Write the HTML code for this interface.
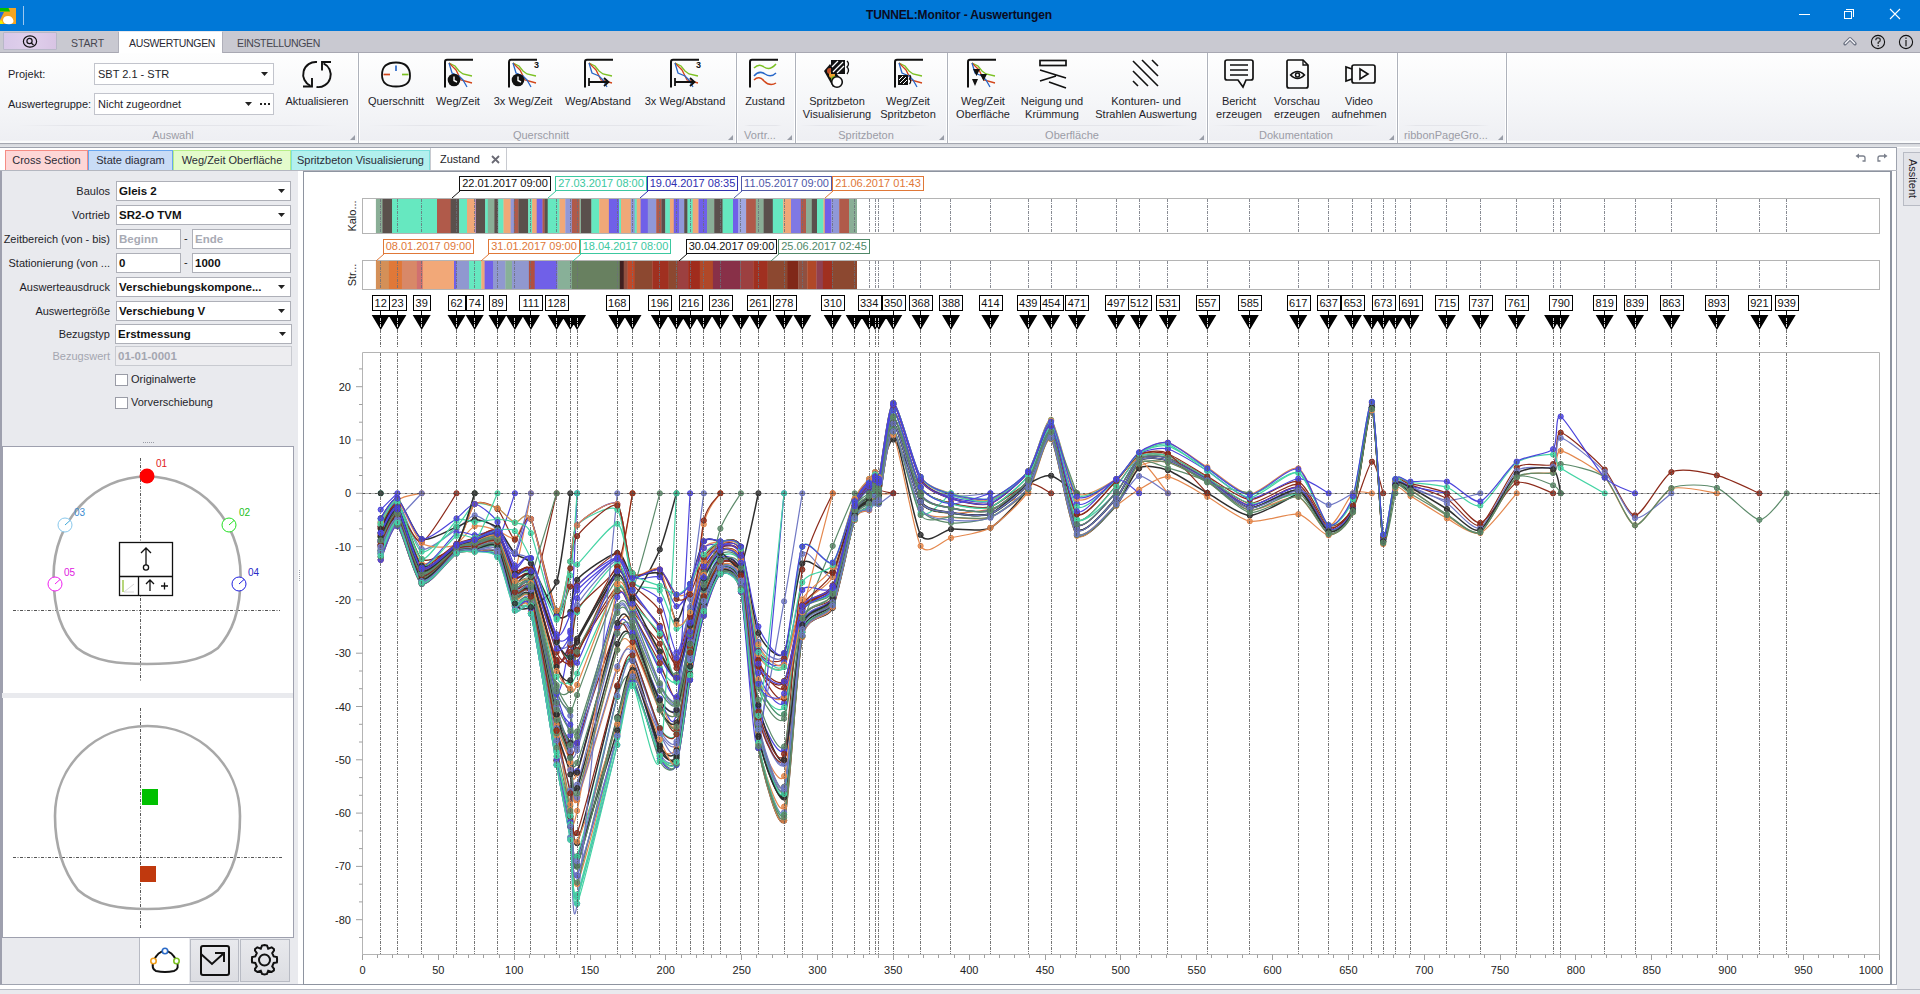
<!DOCTYPE html><html><head><meta charset="utf-8"><style>

*{box-sizing:border-box;margin:0;padding:0}
html,body{width:1920px;height:994px;overflow:hidden;background:#fff;font-family:"Liberation Sans",sans-serif;font-size:11px;color:#222}
.a{position:absolute}
.t{position:absolute;white-space:nowrap;line-height:13px}
svg{position:absolute;overflow:visible}

</style></head><body>

<div class="a" style="left:0;top:0;width:1920px;height:31px;background:#0078d7"></div>
<svg style="left:0;top:8px" width="16" height="16"><rect x="0" y="0" width="16" height="16" fill="#f4a520"/><path d="M0 0H8.5L10 3.5H0Z" fill="#00c000"/><path d="M0 4H4L0 12Z" fill="#1a6ee0"/><path d="M0 12L2 16H3L2 13Z" fill="#f4f400"/><path d="M0 13V16H3L2 14Z" fill="#f0f000"/><path d="M3 12Q3.5 8 8 8Q12.5 8 13.5 13Q13.5 16 9 16.2Q3 16.2 3 12Z" fill="#fff"/></svg>
<div class="a" style="left:23px;top:6px;width:1px;height:19px;background:#9cc7ef"></div>
<div class="t" style="left:866px;top:9px;font-size:12px;font-weight:bold;color:#0b0b22;letter-spacing:-0.15px">TUNNEL:Monitor - Auswertungen</div>
<div class="a" style="left:1799px;top:14px;width:11px;height:1px;background:#fff"></div>
<div class="a" style="left:1844px;top:11px;width:8px;height:8px;border:1px solid #fff"></div>
<div class="a" style="left:1846px;top:9px;width:8px;height:8px;border-top:1px solid #fff;border-right:1px solid #fff"></div>
<svg style="left:1889px;top:8px" width="12" height="12"><path d="M1 1L11 11M11 1L1 11" stroke="#fff" stroke-width="1.1"/></svg>


<div class="a" style="left:0;top:31px;width:1920px;height:22px;background:#c9c9d1;border-bottom:1px solid #a8a8b2"></div>
<div class="a" style="left:3px;top:32px;width:54px;height:18px;background:linear-gradient(90deg,#d8c8e8,#e0d0ec,#d8c4e4);border:1px solid #b8b8c8;border-radius:1px"></div>
<svg style="left:22px;top:35px" width="16" height="13"><ellipse cx="8" cy="6.5" rx="6.6" ry="5.6" fill="none" stroke="#111" stroke-width="1.2"/><circle cx="7.5" cy="6" r="2.6" fill="none" stroke="#111" stroke-width="1.2"/><path d="M9.3 8L11.5 10" stroke="#111" stroke-width="1.3"/></svg>
<div class="t" style="left:71px;top:37px;color:#464650;font-size:10.5px;letter-spacing:-0.1px">START</div>
<div class="a" style="left:118px;top:31px;width:105px;height:23px;background:#fff;border-left:1px solid #b0b0ba;border-right:1px solid #b0b0ba;border-top:1px solid #e8e8ee"></div>
<div class="t" style="left:129px;top:37px;color:#2a2a34;font-size:10.5px;letter-spacing:-0.35px">AUSWERTUNGEN</div>
<div class="t" style="left:237px;top:37px;color:#464650;font-size:10.5px;letter-spacing:-0.35px">EINSTELLUNGEN</div>
<svg style="left:1843px;top:36px" width="14" height="10"><path d="M2 7.8L7 2.8L12 7.8" fill="none" stroke="#6c7282" stroke-width="3.4" stroke-linejoin="round" stroke-linecap="round"/><path d="M2 7.8L7 2.8L12 7.8" fill="none" stroke="#f4f4f8" stroke-width="1.5"/></svg>
<svg style="left:1870px;top:34px" width="16" height="16"><circle cx="8" cy="8" r="6.6" fill="none" stroke="#111" stroke-width="1.1"/><path d="M5.8 6.3Q5.8 3.8 8 3.8Q10.3 3.8 10.3 6Q10.3 7.4 8.2 8.4V10" fill="none" stroke="#333" stroke-width="1.3"/><rect x="7.5" y="11" width="1.4" height="1.4" fill="#333"/></svg>
<svg style="left:1898px;top:34px" width="16" height="16"><circle cx="8" cy="8" r="6.6" fill="none" stroke="#111" stroke-width="1.1"/><rect x="7.3" y="3.5" width="1.4" height="1.4" fill="#333"/><rect x="7.3" y="6" width="1.4" height="6.3" fill="#333"/></svg>

<div class="a" style="left:0;top:53px;width:1920px;height:90px;background:linear-gradient(#fefefe 0%,#f6f7f9 50%,#eeeff3 97%,#fafbfc 98%)"></div>
<div class="a" style="left:0;top:143px;width:1920px;height:1px;background:#a4a7b0"></div>
<div class="a" style="left:0;top:144px;width:1920px;height:3px;background:linear-gradient(#d4d6db,#e2e4e8)"></div>
<div class="a" style="left:18px;top:125px;width:320px;height:1px;background:linear-gradient(90deg,rgba(230,231,236,0),#e4e5ea 15%,#e4e5ea 85%,rgba(230,231,236,0))"></div>
<div class="a" style="left:368px;top:125px;width:350px;height:1px;background:linear-gradient(90deg,rgba(230,231,236,0),#e4e5ea 15%,#e4e5ea 85%,rgba(230,231,236,0))"></div>
<div class="a" style="left:744px;top:125px;width:38px;height:1px;background:linear-gradient(90deg,rgba(230,231,236,0),#e4e5ea 15%,#e4e5ea 85%,rgba(230,231,236,0))"></div>
<div class="a" style="left:800px;top:125px;width:130px;height:1px;background:linear-gradient(90deg,rgba(230,231,236,0),#e4e5ea 15%,#e4e5ea 85%,rgba(230,231,236,0))"></div>
<div class="a" style="left:955px;top:125px;width:238px;height:1px;background:linear-gradient(90deg,rgba(230,231,236,0),#e4e5ea 15%,#e4e5ea 85%,rgba(230,231,236,0))"></div>
<div class="a" style="left:1212px;top:125px;width:168px;height:1px;background:linear-gradient(90deg,rgba(230,231,236,0),#e4e5ea 15%,#e4e5ea 85%,rgba(230,231,236,0))"></div>
<div class="a" style="left:1403px;top:125px;width:87px;height:1px;background:linear-gradient(90deg,rgba(230,231,236,0),#e4e5ea 15%,#e4e5ea 85%,rgba(230,231,236,0))"></div>
<div class="a" style="left:357px;top:53px;width:3px;height:90px;background:linear-gradient(90deg,#fff 0,#fff 33%,#aeb2bb 33%,#aeb2bb 67%,#fff 67%)"></div>
<svg style="left:350px;top:135px" width="5" height="5"><path d="M5 0V5H0Z" fill="#9a9ea8"/></svg>
<div class="a" style="left:735px;top:53px;width:3px;height:90px;background:linear-gradient(90deg,#fff 0,#fff 33%,#aeb2bb 33%,#aeb2bb 67%,#fff 67%)"></div>
<svg style="left:728px;top:135px" width="5" height="5"><path d="M5 0V5H0Z" fill="#9a9ea8"/></svg>
<div class="a" style="left:794px;top:53px;width:3px;height:90px;background:linear-gradient(90deg,#fff 0,#fff 33%,#aeb2bb 33%,#aeb2bb 67%,#fff 67%)"></div>
<svg style="left:787px;top:135px" width="5" height="5"><path d="M5 0V5H0Z" fill="#9a9ea8"/></svg>
<div class="a" style="left:946px;top:53px;width:3px;height:90px;background:linear-gradient(90deg,#fff 0,#fff 33%,#aeb2bb 33%,#aeb2bb 67%,#fff 67%)"></div>
<svg style="left:939px;top:135px" width="5" height="5"><path d="M5 0V5H0Z" fill="#9a9ea8"/></svg>
<div class="a" style="left:1206px;top:53px;width:3px;height:90px;background:linear-gradient(90deg,#fff 0,#fff 33%,#aeb2bb 33%,#aeb2bb 67%,#fff 67%)"></div>
<svg style="left:1199px;top:135px" width="5" height="5"><path d="M5 0V5H0Z" fill="#9a9ea8"/></svg>
<div class="a" style="left:1396px;top:53px;width:3px;height:90px;background:linear-gradient(90deg,#fff 0,#fff 33%,#aeb2bb 33%,#aeb2bb 67%,#fff 67%)"></div>
<svg style="left:1389px;top:135px" width="5" height="5"><path d="M5 0V5H0Z" fill="#9a9ea8"/></svg>
<div class="a" style="left:1505px;top:53px;width:3px;height:90px;background:linear-gradient(90deg,#fff 0,#fff 33%,#aeb2bb 33%,#aeb2bb 67%,#fff 67%)"></div>
<svg style="left:1498px;top:135px" width="5" height="5"><path d="M5 0V5H0Z" fill="#9a9ea8"/></svg>
<div class="t" style="left:73px;width:200px;top:129px;text-align:center;color:#9b9ca6">Auswahl</div>
<div class="t" style="left:441px;width:200px;top:129px;text-align:center;color:#9b9ca6">Querschnitt</div>
<div class="t" style="left:660px;width:200px;top:129px;text-align:center;color:#9b9ca6">Vortr...</div>
<div class="t" style="left:766px;width:200px;top:129px;text-align:center;color:#9b9ca6">Spritzbeton</div>
<div class="t" style="left:972px;width:200px;top:129px;text-align:center;color:#9b9ca6">Oberfläche</div>
<div class="t" style="left:1196px;width:200px;top:129px;text-align:center;color:#9b9ca6">Dokumentation</div>
<div class="t" style="left:1346px;width:200px;top:129px;text-align:center;color:#9b9ca6">ribbonPageGro...</div>
<div class="t" style="left:8px;top:68px;color:#1e1e2a">Projekt:</div>
<div class="t" style="left:8px;top:98px;color:#1e1e2a">Auswertegruppe:</div>
<div class="a" style="left:94px;top:63px;width:180px;height:22px;background:#fff;border:1px solid #c2c4cc"></div>
<div class="t" style="left:98px;top:68px;color:#1e1e2a">SBT 2.1 - STR</div>
<svg style="left:261px;top:72px" width="8" height="4"><path d="M0 0H7L3.5 4Z" fill="#222"/></svg>
<div class="a" style="left:94px;top:93px;width:180px;height:22px;background:#fff;border:1px solid #c2c4cc"></div>
<div class="t" style="left:98px;top:98px;color:#1e1e2a">Nicht zugeordnet</div>
<svg style="left:245px;top:102px" width="8" height="4"><path d="M0 0H7L3.5 4Z" fill="#222"/></svg>
<svg style="left:259px;top:103px" width="12" height="3"><rect x="1" y="0" width="2" height="2" fill="#222"/><rect x="5" y="0" width="2" height="2" fill="#222"/><rect x="9" y="0" width="2" height="2" fill="#222"/></svg>
<svg style="left:0;top:0" width="1920" height="140"><g fill="none" stroke="#111" stroke-width="1.9"><path d="M317 62A12.5 12.5 0 0 0 310.5 85.8"/><path d="M303 86.5H312V78"/><path d="M316.5 87A12.5 12.5 0 0 0 323.5 63.3"/><path d="M331 62H322V70.5"/></g></svg>
<div class="t" style="left:267px;width:100px;top:95px;text-align:center;color:#1e1e2a">Aktualisieren</div>
<div class="t" style="left:316px;width:160px;top:95px;text-align:center;color:#1e1e2a;line-height:13px">Querschnitt</div>
<div class="t" style="left:378px;width:160px;top:95px;text-align:center;color:#1e1e2a;line-height:13px">Weg/Zeit</div>
<div class="t" style="left:443px;width:160px;top:95px;text-align:center;color:#1e1e2a;line-height:13px">3x Weg/Zeit</div>
<div class="t" style="left:518px;width:160px;top:95px;text-align:center;color:#1e1e2a;line-height:13px">Weg/Abstand</div>
<div class="t" style="left:605px;width:160px;top:95px;text-align:center;color:#1e1e2a;line-height:13px">3x Weg/Abstand</div>
<div class="t" style="left:685px;width:160px;top:95px;text-align:center;color:#1e1e2a;line-height:13px">Zustand</div>
<div class="t" style="left:757px;width:160px;top:95px;text-align:center;color:#1e1e2a;line-height:13px">Spritzbeton<br>Visualisierung</div>
<div class="t" style="left:828px;width:160px;top:95px;text-align:center;color:#1e1e2a;line-height:13px">Weg/Zeit<br>Spritzbeton</div>
<div class="t" style="left:903px;width:160px;top:95px;text-align:center;color:#1e1e2a;line-height:13px">Weg/Zeit<br>Oberfläche</div>
<div class="t" style="left:972px;width:160px;top:95px;text-align:center;color:#1e1e2a;line-height:13px">Neigung und<br>Krümmung</div>
<div class="t" style="left:1066px;width:160px;top:95px;text-align:center;color:#1e1e2a;line-height:13px">Konturen- und<br>Strahlen Auswertung</div>
<div class="t" style="left:1159px;width:160px;top:95px;text-align:center;color:#1e1e2a;line-height:13px">Bericht<br>erzeugen</div>
<div class="t" style="left:1217px;width:160px;top:95px;text-align:center;color:#1e1e2a;line-height:13px">Vorschau<br>erzeugen</div>
<div class="t" style="left:1279px;width:160px;top:95px;text-align:center;color:#1e1e2a;line-height:13px">Video<br>aufnehmen</div>
<svg style="left:380px;top:61px" width="32" height="28"><path d="M2 14Q2 1.5 16 1.5Q30 1.5 30 15Q30 25.5 16 25.5Q2 25.5 2 14Z" fill="none" stroke="#111" stroke-width="1.8"/><path d="M16 4.5V10" stroke="#2867c8" stroke-width="1.7"/><path d="M3.5 13.5H10" stroke="#d2461a" stroke-width="1.7"/><path d="M22 13.5H28.5" stroke="#7cc123" stroke-width="1.7"/></svg>
<svg style="left:444px;top:58px" width="32" height="32" viewBox="444 58 32 32"><path d="M445 87.5V62Q445 59.8 447 59.8H473" fill="none" stroke="#111" stroke-width="2"/><path d="M449 63L455 66L459 71L463 74L472 76" fill="none" stroke="#7cc123" stroke-width="1.3"/><path d="M449 63L456 70L461 80L472 83" fill="none" stroke="#d2461a" stroke-width="1.3"/><path d="M449 63L452 73L459 76L463 80L467 87" fill="none" stroke="#2867c8" stroke-width="1.3"/><circle cx="454" cy="80" r="6.3" fill="#111"/><path d="M454 76.5V80.5L457 82" fill="none" stroke="#fff" stroke-width="1.4"/></svg>
<svg style="left:508px;top:58px" width="32" height="32" viewBox="508 58 32 32"><path d="M509 87.5V62Q509 59.8 511 59.8H537" fill="none" stroke="#111" stroke-width="2"/><path d="M513 63L519 66L523 71L527 74L536 76" fill="none" stroke="#7cc123" stroke-width="1.3"/><path d="M513 63L520 70L525 80L536 83" fill="none" stroke="#d2461a" stroke-width="1.3"/><path d="M513 63L516 73L523 76L527 80L531 87" fill="none" stroke="#2867c8" stroke-width="1.3"/><circle cx="518" cy="80" r="6.3" fill="#111"/><path d="M518 76.5V80.5L521 82" fill="none" stroke="#fff" stroke-width="1.4"/><text x="534" y="68" font-size="9" font-weight="bold" font-family="Liberation Sans" fill="#111">3</text></svg>
<svg style="left:584px;top:58px" width="32" height="32" viewBox="584 58 32 32"><path d="M585 87.5V62Q585 59.8 587 59.8H613" fill="none" stroke="#111" stroke-width="2"/><path d="M589 63L595 66L599 71L603 74L612 76" fill="none" stroke="#7cc123" stroke-width="1.3"/><path d="M589 63L596 70L601 80L612 83" fill="none" stroke="#d2461a" stroke-width="1.3"/><path d="M589 63L592 73L599 76L603 80L607 87" fill="none" stroke="#2867c8" stroke-width="1.3"/><path d="M589 78V86M589 82H608M604 78L608.5 82L604 86" fill="none" stroke="#111" stroke-width="1.8"/></svg>
<svg style="left:670px;top:58px" width="32" height="32" viewBox="670 58 32 32"><path d="M671 87.5V62Q671 59.8 673 59.8H699" fill="none" stroke="#111" stroke-width="2"/><path d="M675 63L681 66L685 71L689 74L698 76" fill="none" stroke="#7cc123" stroke-width="1.3"/><path d="M675 63L682 70L687 80L698 83" fill="none" stroke="#d2461a" stroke-width="1.3"/><path d="M675 63L678 73L685 76L689 80L693 87" fill="none" stroke="#2867c8" stroke-width="1.3"/><path d="M675 78V86M675 82H694M690 78L694.5 82L690 86" fill="none" stroke="#111" stroke-width="1.8"/><text x="696" y="68" font-size="9" font-weight="bold" font-family="Liberation Sans" fill="#111">3</text></svg>
<svg style="left:749px;top:58px" width="32" height="32" viewBox="749 58 32 32"><path d="M750 87.5V62Q750 59.8 752 59.8H778" fill="none" stroke="#111" stroke-width="2"/><path d="M754 68Q759 63 764 67Q770 71 776 64" fill="none" stroke="#7cc123" stroke-width="1.5"/><path d="M754 76Q759 70 765 74Q771 78 776 73" fill="none" stroke="#2867c8" stroke-width="1.5"/><path d="M754 80Q759 75 764 81Q770 87 776 83" fill="none" stroke="#d2461a" stroke-width="1.5"/></svg>
<svg style="left:822px;top:58px" width="32" height="32" viewBox="822 58 32 32"><path d="M830 64L824 71L833 87L842 81Z" fill="#111"/><circle cx="830" cy="71" r="3" fill="#c0502a"/><circle cx="832" cy="75" r="3" fill="#f0a030"/><circle cx="834" cy="79" r="3" fill="#7cc123"/><circle cx="837" cy="82" r="5.3" fill="#fff" stroke="#111" stroke-width="1.6"/><rect x="831" y="60" width="14" height="14" fill="#111"/><path d="M833 72L843 62M837 73L844 66M832 67L838 61" stroke="#fff" stroke-width="1.3"/><path d="M847 61Q850 64 847 67Q850 70 847 74" fill="none" stroke="#111" stroke-width="1.3"/></svg>
<svg style="left:894px;top:58px" width="32" height="32" viewBox="894 58 32 32"><path d="M895 87.5V62Q895 59.8 897 59.8H923" fill="none" stroke="#111" stroke-width="2"/><path d="M899 63L905 66L909 71L913 74L922 76" fill="none" stroke="#7cc123" stroke-width="1.3"/><path d="M899 63L906 70L911 80L922 83" fill="none" stroke="#d2461a" stroke-width="1.3"/><path d="M899 63L902 73L909 76L913 80L917 87" fill="none" stroke="#2867c8" stroke-width="1.3"/><rect x="898" y="75" width="10" height="10" fill="#111"/><path d="M900 83L906 77M903 84L907 80M899 80L903 76" stroke="#fff" stroke-width="1"/><path d="M909.5 75Q912 77 909.5 79Q912 81 909.5 84" fill="none" stroke="#111" stroke-width="1.2"/></svg>
<svg style="left:967px;top:58px" width="32" height="32" viewBox="967 58 32 32"><path d="M968 87.5V62Q968 59.8 970 59.8H996" fill="none" stroke="#111" stroke-width="2"/><path d="M972 63L978 66L982 71L986 74L995 76" fill="none" stroke="#7cc123" stroke-width="1.3"/><path d="M972 63L979 70L984 80L995 83" fill="none" stroke="#d2461a" stroke-width="1.3"/><path d="M972 63L975 73L982 76L986 80L990 87" fill="none" stroke="#2867c8" stroke-width="1.3"/><path d="M973 69H980L976.5 76Z M980 74H987L983.5 81Z M972 79H978L975 86Z" fill="#111"/></svg>
<svg style="left:1038px;top:58px" width="32" height="32" viewBox="1038 58 32 32"><rect x="1040" y="60.5" width="26" height="5" fill="none" stroke="#111" stroke-width="1.7"/><path d="M1040 70L1066 78M1040 81L1056 76M1049 82L1066 88" stroke="#111" stroke-width="1.7"/></svg>
<svg style="left:1130px;top:58px" width="32" height="32" viewBox="1130 58 32 32"><path d="M1133 61L1158 86M1142 60L1158 76M1152 60L1158 66M1133 71L1148 86M1133 81L1138 86" stroke="#111" stroke-width="1.6"/></svg>
<svg style="left:1223px;top:58px" width="32" height="32" viewBox="1223 58 32 32"><path d="M1227 60H1251Q1253 60 1253 62V78Q1253 80 1251 80H1246L1243 87L1238 80H1227Q1225 80 1225 78V62Q1225 60 1227 60Z" fill="none" stroke="#111" stroke-width="1.7"/><path d="M1230 65H1248M1230 70H1248M1230 75H1248" stroke="#111" stroke-width="1.7"/></svg>
<svg style="left:1281px;top:58px" width="32" height="32" viewBox="1281 58 32 32"><path d="M1288 60H1303L1308 65V86Q1308 88 1306 88H1289Q1287 88 1287 86V61Z" fill="none" stroke="#111" stroke-width="1.7"/><path d="M1303 60V65H1308" fill="none" stroke="#111" stroke-width="1.3"/><path d="M1290.5 75Q1297.5 68 1304.5 75Q1297.5 82 1290.5 75Z" fill="none" stroke="#111" stroke-width="1.5"/><circle cx="1297.5" cy="75" r="2" fill="none" stroke="#111" stroke-width="1.5"/></svg>
<svg style="left:1343px;top:58px" width="32" height="32" viewBox="1343 58 32 32"><rect x="1352" y="65" width="23" height="18" rx="2" fill="none" stroke="#111" stroke-width="1.7"/><path d="M1352 69L1346 67V81L1352 79" fill="none" stroke="#111" stroke-width="1.7"/><path d="M1360 69L1368 74L1360 79Z" fill="none" stroke="#111" stroke-width="1.6"/></svg>
<div class="a" style="left:0;top:147px;width:1897px;height:1px;background:#9ea3ae"></div>
<div class="a" style="left:1896px;top:147px;width:1px;height:843px;background:#9ea3ae"></div>
<div class="a" style="left:1897px;top:148px;width:23px;height:846px;background:#e9eaee"></div>
<div class="a" style="left:5px;top:150px;width:83px;height:21px;background:#fdd6d6;border:1px solid #f58c84;border-bottom:none"></div>
<div class="t" style="left:5px;width:83px;top:154px;text-align:center;color:#2b2b36">Cross Section</div>
<div class="a" style="left:88px;top:150px;width:85px;height:21px;background:#c9dcf6;border:1px solid #69a6ee;border-bottom:none"></div>
<div class="t" style="left:88px;width:85px;top:154px;text-align:center;color:#2b2b36">State diagram</div>
<div class="a" style="left:173px;top:150px;width:118px;height:21px;background:#e4fbcc;border:1px solid #b6ee86;border-bottom:none"></div>
<div class="t" style="left:173px;width:118px;top:154px;text-align:center;color:#2b2b36">Weg/Zeit Oberfläche</div>
<div class="a" style="left:291px;top:150px;width:139px;height:21px;background:#b3f0ee;border:1px solid #7fe0de;border-bottom:none"></div>
<div class="t" style="left:291px;width:139px;top:154px;text-align:center;color:#2b2b36">Spritzbeton Visualisierung</div>
<div class="a" style="left:430px;top:148px;width:77px;height:23px;background:#fff;border-left:1px solid #c8cad0;border-right:1px solid #c8cad0"></div>
<div class="t" style="left:440px;top:153px;color:#1e1e2a">Zustand</div>
<svg style="left:491px;top:155px" width="9" height="9"><path d="M1 1L8 8M8 1L1 8" stroke="#6a6a74" stroke-width="1.8"/></svg>
<div class="a" style="left:0;top:170px;width:1897px;height:1px;background:#b4b7c0"></div>
<svg style="left:1855px;top:153px" width="12" height="10"><path d="M3 3H8Q10 3 10 5V8H7.5" fill="none" stroke="#7b808c" stroke-width="1.3"/><path d="M0.5 3L4 0.5V5.5Z" fill="#7b808c"/></svg>
<svg style="left:1876px;top:153px" width="12" height="10"><path d="M9 3H4Q2 3 2 5V8H4.5" fill="none" stroke="#7b808c" stroke-width="1.3"/><path d="M11.5 3L8 0.5V5.5Z" fill="#7b808c"/></svg>
<div class="a" style="left:1903px;top:152px;width:17px;height:54px;background:#e2e3e8;border:1px solid #b8bbc4;border-right:none"></div>
<div class="t" style="left:1882px;top:172px;width:60px;text-align:center;transform:rotate(90deg);color:#1e1e2a">Assitent</div>
<div class="a" style="left:0;top:984px;width:1897px;height:1px;background:#a0a4b0"></div>
<div class="a" style="left:0;top:985px;width:1897px;height:4px;background:#fff"></div>
<div class="a" style="left:0;top:989px;width:1920px;height:1px;background:#b8bbc4"></div>
<div class="a" style="left:0;top:990px;width:1920px;height:4px;background:#e9eaee"></div>
<div class="a" style="left:0;top:171px;width:298px;height:813px;background:#e9eaee"></div>
<div class="a" style="left:0;top:171px;width:2px;height:813px;background:#9ea0ae"></div>
<div class="a" style="left:298px;top:171px;width:5px;height:813px;background:#fff"></div>
<div class="t" style="left:0;width:110px;text-align:right;top:185px;color:#1e1e2a">Baulos</div>
<div class="a" style="left:116px;top:181px;width:175px;height:20px;background:#fff;border:1px solid #aeb0b8"></div>
<div class="t" style="left:119px;top:185px;font-weight:bold;color:#111;font-size:11.5px;line-height:13px">Gleis 2</div>
<svg style="left:278px;top:189px" width="8" height="4"><path d="M0 0H7L3.5 4Z" fill="#222"/></svg>
<div class="t" style="left:0;width:110px;text-align:right;top:209px;color:#1e1e2a">Vortrieb</div>
<div class="a" style="left:116px;top:205px;width:175px;height:20px;background:#fff;border:1px solid #aeb0b8"></div>
<div class="t" style="left:119px;top:209px;font-weight:bold;color:#111;font-size:11.5px;line-height:13px">SR2-O TVM</div>
<svg style="left:278px;top:213px" width="8" height="4"><path d="M0 0H7L3.5 4Z" fill="#222"/></svg>
<div class="t" style="left:0;width:110px;text-align:right;top:233px;color:#1e1e2a">Zeitbereich (von - bis)</div>
<div class="a" style="left:116px;top:229px;width:65px;height:20px;background:#fff;border:1px solid #aeb0b8"></div>
<div class="t" style="left:119px;top:233px;font-weight:bold;color:#a8aab4;font-size:11.5px;line-height:13px">Beginn</div>
<div class="t" style="left:184px;top:232px">-</div>
<div class="a" style="left:192px;top:229px;width:99px;height:20px;background:#fff;border:1px solid #aeb0b8"></div>
<div class="t" style="left:195px;top:233px;font-weight:bold;color:#a8aab4;font-size:11.5px;line-height:13px">Ende</div>
<div class="t" style="left:0;width:110px;text-align:right;top:257px;color:#1e1e2a">Stationierung (von ...</div>
<div class="a" style="left:116px;top:253px;width:65px;height:20px;background:#fff;border:1px solid #aeb0b8"></div>
<div class="t" style="left:119px;top:257px;font-weight:bold;color:#111;font-size:11.5px;line-height:13px">0</div>
<div class="t" style="left:184px;top:256px">-</div>
<div class="a" style="left:192px;top:253px;width:99px;height:20px;background:#fff;border:1px solid #aeb0b8"></div>
<div class="t" style="left:195px;top:257px;font-weight:bold;color:#111;font-size:11.5px;line-height:13px">1000</div>
<div class="t" style="left:0;width:110px;text-align:right;top:281px;color:#1e1e2a">Auswerteausdruck</div>
<div class="a" style="left:116px;top:277px;width:175px;height:20px;background:#fff;border:1px solid #aeb0b8"></div>
<div class="t" style="left:119px;top:281px;font-weight:bold;color:#111;font-size:11.5px;line-height:13px">Verschiebungskompone...</div>
<svg style="left:278px;top:285px" width="8" height="4"><path d="M0 0H7L3.5 4Z" fill="#222"/></svg>
<div class="t" style="left:0;width:110px;text-align:right;top:305px;color:#1e1e2a">Auswertegröße</div>
<div class="a" style="left:116px;top:301px;width:175px;height:20px;background:#fff;border:1px solid #aeb0b8"></div>
<div class="t" style="left:119px;top:305px;font-weight:bold;color:#111;font-size:11.5px;line-height:13px">Verschiebung V</div>
<svg style="left:278px;top:309px" width="8" height="4"><path d="M0 0H7L3.5 4Z" fill="#222"/></svg>
<div class="t" style="left:0;width:110px;text-align:right;top:328px;color:#1e1e2a">Bezugstyp</div>
<div class="a" style="left:115px;top:324px;width:177px;height:20px;background:#fff;border:1px solid #aeb0b8"></div>
<div class="t" style="left:118px;top:328px;font-weight:bold;color:#111;font-size:11.5px;line-height:13px">Erstmessung</div>
<svg style="left:279px;top:332px" width="8" height="4"><path d="M0 0H7L3.5 4Z" fill="#222"/></svg>
<div class="t" style="left:0;width:110px;text-align:right;top:350px;color:#a4a6b0">Bezugswert</div>
<div class="a" style="left:115px;top:346px;width:177px;height:20px;background:#ededf0;border:1px solid #c8cad0"></div>
<div class="t" style="left:118px;top:350px;font-weight:bold;color:#a4a6b0;font-size:11.5px;line-height:13px">01-01-0001</div>
<div class="a" style="left:115px;top:374px;width:13px;height:12px;background:#fff;border:1px solid #9a9ca6"></div>
<div class="t" style="left:131px;top:373px;color:#1e1e2a">Originalwerte</div>
<div class="a" style="left:115px;top:397px;width:13px;height:12px;background:#fff;border:1px solid #9a9ca6"></div>
<div class="t" style="left:131px;top:396px;color:#1e1e2a">Vorverschiebung</div>
<svg style="left:143px;top:442px" width="12" height="2"><path d="M0 0.5H12" stroke="#9a9ca6" stroke-dasharray="1 1"/></svg>
<svg style="left:299px;top:570px" width="2" height="12"><path d="M0.5 0V12" stroke="#9a9ca6" stroke-dasharray="1 1"/></svg>
<div class="a" style="left:2px;top:446px;width:292px;height:247px;background:#fff;border-top:1px solid #9ea0ae;border-left:1px solid #9ea0ae;border-right:1px solid #9ea0ae"></div>
<div class="a" style="left:2px;top:693px;width:292px;height:5px;background:#e9eaee;border-right:1px solid #9ea0ae"></div>
<div class="a" style="left:2px;top:698px;width:292px;height:240px;background:#fff;border-left:1px solid #9ea0ae;border-right:1px solid #9ea0ae;border-bottom:1px solid #9ea0ae"></div>
<svg style="left:0;top:0" width="300" height="994"><path d="M140.5 458V682" stroke="#555" stroke-width="1" stroke-dasharray="3 1.5 1 1.5"/><path d="M13 610.5H280" stroke="#555" stroke-width="1" stroke-dasharray="3 1.5 1 1.5"/><path d="M53.6 576C53.6 520 95 476.5 147 476.5C199 476.5 240.6 520 240.6 576C240.6 612 232 632 218 648C200 662 175 664 147 664C120 664 95 662 77 648C62 632 53.6 612 53.6 576Z" fill="none" stroke="#a8a8a8" stroke-width="2.6"/><circle cx="147" cy="476" r="7.5" fill="#fe0000"/><text x="156" y="467" font-size="10" fill="#e02020" font-family="Liberation Sans">01</text><circle cx="229" cy="525" r="7" fill="#fff" stroke="#22e022" stroke-width="1"/><path d="M229 525L234 520.5" stroke="#22e022"/><text x="239" y="516" font-size="10" fill="#22c022" font-family="Liberation Sans">02</text><circle cx="65" cy="525" r="7" fill="#fff" stroke="#88c8ec" stroke-width="1"/><path d="M65 525L70 520.5" stroke="#40a8d8"/><text x="74" y="516" font-size="10" fill="#3c8cd0" font-family="Liberation Sans">03</text><circle cx="239" cy="584" r="7" fill="#fff" stroke="#2020e0" stroke-width="1"/><path d="M239 584L244 579.5" stroke="#2020e0"/><text x="248" y="576" font-size="10" fill="#2828c8" font-family="Liberation Sans">04</text><circle cx="55" cy="584" r="7" fill="#fff" stroke="#f020f0" stroke-width="1"/><path d="M55 584L60 579.5" stroke="#f020f0"/><text x="64" y="576" font-size="10" fill="#e020e0" font-family="Liberation Sans">05</text><rect x="119.5" y="542.5" width="53" height="53" fill="#fff" stroke="#111" stroke-width="1.3"/><path d="M119.5 576.5H172.5M138.5 576.5V595.5" stroke="#111" stroke-width="1.3"/><path d="M146 565V549M141 553L146 548L151 553" fill="none" stroke="#111" stroke-width="1.3"/><circle cx="146" cy="567.5" r="2.6" fill="#fff" stroke="#111" stroke-width="1.3"/><path d="M123 580V592" stroke="#88bb22" stroke-width="1.2"/><path d="M124 592L134 584M124 592H134" stroke="#d8d8d8" stroke-width="1"/><path d="M150 591V580M146 584L150 580L154 584" fill="none" stroke="#111" stroke-width="1.3"/><path d="M161 586H168M164.5 582.5V589.5" stroke="#111" stroke-width="1.3"/></svg>
<svg style="left:0;top:0" width="300" height="994"><path d="M140.5 708V928" stroke="#555" stroke-width="1" stroke-dasharray="3 1.5 1 1.5"/><path d="M13 857.5H282" stroke="#555" stroke-width="1" stroke-dasharray="3 1.5 1 1.5"/><path d="M55 816C55 765 96 726 147.5 726C199 726 240 765 240 816C240 850 233 872 218 890C200 906 172 909 147 909C122 909 96 906 78 890C64 872 55 850 55 816Z" fill="none" stroke="#a8a8a8" stroke-width="2.6"/><rect x="142" y="789" width="16" height="16" fill="#00c000"/><rect x="140" y="866" width="16" height="16" fill="#c0390e"/></svg>
<div class="a" style="left:139px;top:938px;width:50px;height:46px;background:#fff;border-left:1px solid #b8bbc4"></div>
<div class="a" style="left:190px;top:939px;width:49px;height:43px;background:linear-gradient(#e8e9ed,#dcdde2);border:1px solid #b8bbc4"></div>
<div class="a" style="left:240px;top:939px;width:50px;height:43px;background:linear-gradient(#e8e9ed,#dcdde2);border:1px solid #b8bbc4"></div>
<svg style="left:0;top:0" width="300" height="994"><path d="M153.5 961Q158 951 165 951Q172 951 176.5 961Q180 969 174 971Q165 973 156 971Q151 969 153.5 961Z" fill="none" stroke="#111" stroke-width="2"/><circle cx="165" cy="951" r="2.7" fill="#fff" stroke="#2a6ac8" stroke-width="1.6"/><circle cx="153.5" cy="961" r="2.7" fill="#fff" stroke="#f0a020" stroke-width="1.6"/><circle cx="176.5" cy="961" r="2.7" fill="#fff" stroke="#7cc123" stroke-width="1.6"/><rect x="201" y="946" width="28" height="29" rx="2" fill="none" stroke="#111" stroke-width="2"/><path d="M201 954L212 964L223.5 953.5M215 953H224V962" fill="none" stroke="#111" stroke-width="2"/><path d="M264.5 945l2.5 0.5l1.2 3.2l3.5-1.3l2.2 1.6l0.1 1.5l-1.8 2.6l1.5 3.3l3.2 0.6l0.2 2.7l-0.2 2.7l-3.2 0.6l-1.5 3.3l1.8 2.6l-0.1 1.5l-2.2 1.6l-3.5-1.3l-1.2 3.2l-2.5 0.5l-2.5-0.5l-1.2-3.2l-3.5 1.3l-2.2-1.6l-0.1-1.5l1.8-2.6l-1.5-3.3l-3.2-0.6l-0.2-2.7l0.2-2.7l3.2-0.6l1.5-3.3l-1.8-2.6l0.1-1.5l2.2-1.6l3.5 1.3l1.2-3.2z" fill="none" stroke="#111" stroke-width="2"/><circle cx="264.5" cy="960" r="5.5" fill="none" stroke="#111" stroke-width="2"/></svg>
<div class="a" style="left:303px;top:171px;width:1589px;height:814px;background:#fff;border:1px solid #8e94a0;border-width:1px 2px 1px 1px"></div>
<svg style="left:0;top:0" width="1920" height="994"><g font-family="Liberation Sans"><rect x="362.5" y="198.5" width="1517" height="35" fill="#fff" stroke="#b4b4b4"/><rect x="375.9" y="199" width="6.8" height="34" fill="#8aae96"/><rect x="382.4" y="199" width="10.0" height="34" fill="#5a504c"/><rect x="392.1" y="199" width="45.2" height="34" fill="#66e8c0"/><rect x="437.0" y="199" width="14.0" height="34" fill="#b05a4a"/><rect x="450.7" y="199" width="8.8" height="34" fill="#5a504c"/><rect x="459.2" y="199" width="8.1" height="34" fill="#66e8c0"/><rect x="467.0" y="199" width="8.8" height="34" fill="#f0a878"/><rect x="475.5" y="199" width="0.8" height="34" fill="#7060e8"/><rect x="476.0" y="199" width="9.5" height="34" fill="#5a504c"/><rect x="485.2" y="199" width="2.9" height="34" fill="#66e8c0"/><rect x="487.8" y="199" width="6.8" height="34" fill="#8aae96"/><rect x="494.3" y="199" width="4.3" height="34" fill="#5a504c"/><rect x="498.3" y="199" width="5.5" height="34" fill="#66e8c0"/><rect x="503.5" y="199" width="7.4" height="34" fill="#f0a878"/><rect x="510.6" y="199" width="3.6" height="34" fill="#9098d8"/><rect x="513.9" y="199" width="4.8" height="34" fill="#b05a4a"/><rect x="518.4" y="199" width="10.1" height="34" fill="#5a504c"/><rect x="528.2" y="199" width="4.2" height="34" fill="#66e8c0"/><rect x="532.1" y="199" width="4.9" height="34" fill="#f0a878"/><rect x="536.7" y="199" width="6.1" height="34" fill="#7060e8"/><rect x="542.5" y="199" width="2.3" height="34" fill="#b05a4a"/><rect x="544.5" y="199" width="3.5" height="34" fill="#5a504c"/><rect x="547.7" y="199" width="12.1" height="34" fill="#66e8c0"/><rect x="559.5" y="199" width="6.1" height="34" fill="#f0a878"/><rect x="565.3" y="199" width="6.8" height="34" fill="#9098d8"/><rect x="571.8" y="199" width="8.1" height="34" fill="#b05a4a"/><rect x="579.6" y="199" width="1.7" height="34" fill="#8aae96"/><rect x="581.0" y="199" width="10.7" height="34" fill="#5a504c"/><rect x="591.4" y="199" width="8.1" height="34" fill="#66e8c0"/><rect x="599.2" y="199" width="10.0" height="34" fill="#f0a878"/><rect x="608.9" y="199" width="10.5" height="34" fill="#7060e8"/><rect x="619.1" y="199" width="2.2" height="34" fill="#66e8c0"/><rect x="621.0" y="199" width="10.1" height="34" fill="#f0a878"/><rect x="630.8" y="199" width="4.2" height="34" fill="#9098d8"/><rect x="634.7" y="199" width="2.3" height="34" fill="#66e8c0"/><rect x="636.7" y="199" width="4.2" height="34" fill="#f0a878"/><rect x="640.6" y="199" width="7.5" height="34" fill="#7060e8"/><rect x="647.8" y="199" width="8.7" height="34" fill="#9098d8"/><rect x="656.2" y="199" width="5.5" height="34" fill="#b05a4a"/><rect x="661.4" y="199" width="4.2" height="34" fill="#5a504c"/><rect x="665.3" y="199" width="4.9" height="34" fill="#66e8c0"/><rect x="669.9" y="199" width="4.2" height="34" fill="#f0a878"/><rect x="673.8" y="199" width="5.5" height="34" fill="#7060e8"/><rect x="679.0" y="199" width="5.5" height="34" fill="#9098d8"/><rect x="684.2" y="199" width="3.6" height="34" fill="#5a504c"/><rect x="687.5" y="199" width="5.5" height="34" fill="#66e8c0"/><rect x="692.7" y="199" width="6.1" height="34" fill="#f0a878"/><rect x="698.5" y="199" width="8.8" height="34" fill="#7060e8"/><rect x="707.0" y="199" width="7.5" height="34" fill="#8aae96"/><rect x="714.2" y="199" width="8.7" height="34" fill="#5a504c"/><rect x="722.6" y="199" width="10.7" height="34" fill="#66e8c0"/><rect x="733.0" y="199" width="5.6" height="34" fill="#7060e8"/><rect x="738.3" y="199" width="8.1" height="34" fill="#a0a8e0"/><rect x="746.1" y="199" width="10.0" height="34" fill="#b05a4a"/><rect x="755.8" y="199" width="8.1" height="34" fill="#8aae96"/><rect x="763.6" y="199" width="9.5" height="34" fill="#5a504c"/><rect x="772.8" y="199" width="10.7" height="34" fill="#66e8c0"/><rect x="783.2" y="199" width="8.1" height="34" fill="#f0a878"/><rect x="791.0" y="199" width="10.1" height="34" fill="#7f78e4"/><rect x="800.8" y="199" width="5.5" height="34" fill="#b05a4a"/><rect x="806.0" y="199" width="6.1" height="34" fill="#8aae96"/><rect x="811.8" y="199" width="5.5" height="34" fill="#5a504c"/><rect x="817.0" y="199" width="6.8" height="34" fill="#66e8c0"/><rect x="823.5" y="199" width="1.6" height="34" fill="#f0a878"/><rect x="824.8" y="199" width="6.9" height="34" fill="#7060e8"/><rect x="831.4" y="199" width="8.1" height="34" fill="#9098d8"/><rect x="839.2" y="199" width="10.1" height="34" fill="#b05a4a"/><rect x="849.0" y="199" width="8.0" height="34" fill="#8aae96"/><rect x="362.5" y="260.5" width="1517" height="29" fill="#fff" stroke="#b4b4b4"/><rect x="375.9" y="261" width="13.3" height="28" fill="#d49058"/><rect x="388.9" y="261" width="13.3" height="28" fill="#e07838"/><rect x="401.9" y="261" width="15.3" height="28" fill="#d88868"/><rect x="416.9" y="261" width="6.1" height="28" fill="#d07070"/><rect x="422.7" y="261" width="31.6" height="28" fill="#f2a878"/><rect x="454.0" y="261" width="2.9" height="28" fill="#7060e8"/><rect x="456.6" y="261" width="12.7" height="28" fill="#9098d0"/><rect x="469.0" y="261" width="12.6" height="28" fill="#66e8c0"/><rect x="481.3" y="261" width="3.6" height="28" fill="#f0a878"/><rect x="484.6" y="261" width="8.7" height="28" fill="#7060e8"/><rect x="493.0" y="261" width="12.7" height="28" fill="#9098d0"/><rect x="505.4" y="261" width="6.8" height="28" fill="#88b098"/><rect x="511.9" y="261" width="17.3" height="28" fill="#9098d0"/><rect x="528.9" y="261" width="6.1" height="28" fill="#b05040"/><rect x="534.7" y="261" width="23.1" height="28" fill="#7060e8"/><rect x="557.5" y="261" width="14.6" height="28" fill="#88b098"/><rect x="571.8" y="261" width="48.3" height="28" fill="#688060"/><rect x="619.8" y="261" width="4.2" height="28" fill="#402020"/><rect x="623.7" y="261" width="4.2" height="28" fill="#905040"/><rect x="627.6" y="261" width="7.4" height="28" fill="#c04828"/><rect x="634.7" y="261" width="17.9" height="28" fill="#8c4830"/><rect x="652.3" y="261" width="16.6" height="28" fill="#a03020"/><rect x="668.6" y="261" width="9.4" height="28" fill="#8c4830"/><rect x="677.7" y="261" width="10.7" height="28" fill="#9c4040"/><rect x="688.1" y="261" width="12.0" height="28" fill="#a02c1c"/><rect x="699.8" y="261" width="13.4" height="28" fill="#b04828"/><rect x="712.9" y="261" width="27.6" height="28" fill="#883048"/><rect x="740.2" y="261" width="13.3" height="28" fill="#9c4040"/><rect x="753.2" y="261" width="14.7" height="28" fill="#a03020"/><rect x="767.6" y="261" width="19.8" height="28" fill="#8c4830"/><rect x="787.1" y="261" width="11.4" height="28" fill="#802818"/><rect x="798.2" y="261" width="9.4" height="28" fill="#905040"/><rect x="807.3" y="261" width="9.4" height="28" fill="#b04828"/><rect x="816.4" y="261" width="6.8" height="28" fill="#904050"/><rect x="822.9" y="261" width="9.4" height="28" fill="#a03020"/><rect x="832.0" y="261" width="25.0" height="28" fill="#8c4830"/><text transform="translate(356 216) rotate(-90)" text-anchor="middle" font-size="11" fill="#222">Kalo...</text><text transform="translate(356 275) rotate(-90)" text-anchor="middle" font-size="11" fill="#222">Str...</text><path d="M380.5 330V347M397.5 330V347M421.5 330V347M456.5 330V347M474.5 330V347M497.5 330V347M514.5 330V347M530.5 330V347M556.5 330V347M570.5 330V347M577.5 330V347M617.5 330V347M632.5 330V347M659.5 330V347M676.5 330V347M690.5 330V347M703.5 330V347M720.5 330V347M740.5 330V347M758.5 330V347M784.5 330V347M802.5 330V347M832.5 330V347M854.5 330V347M869.5 330V347M875.5 330V347M878.5 330V347M893.5 330V347M920.5 330V347M950.5 330V347M990.5 330V347M1028.5 330V347M1051.5 330V347M1076.5 330V347M1116.5 330V347M1139.5 330V347M1167.5 330V347M1207.5 330V347M1249.5 330V347M1298.5 330V347M1328.5 330V347M1352.5 330V347M1371.5 330V347M1383.5 330V347M1395.5 330V347M1410.5 330V347M1446.5 330V347M1480.5 330V347M1516.5 330V347M1553.5 330V347M1560.5 330V347M1604.5 330V347M1635.5 330V347M1671.5 330V347M1716.5 330V347M1759.5 330V347M1786.5 330V347" stroke="#555" stroke-width="1" stroke-dasharray="3 1 1 1" fill="none" opacity="0.85"/><path d="M380.5 199V233M380.5 261V289M397.5 199V233M397.5 261V289M421.5 199V233M421.5 261V289M456.5 199V233M456.5 261V289M474.5 199V233M474.5 261V289M497.5 199V233M497.5 261V289M514.5 199V233M514.5 261V289M530.5 199V233M530.5 261V289M556.5 199V233M556.5 261V289M570.5 199V233M570.5 261V289M577.5 199V233M577.5 261V289M617.5 199V233M617.5 261V289M632.5 199V233M632.5 261V289M659.5 199V233M659.5 261V289M676.5 199V233M676.5 261V289M690.5 199V233M690.5 261V289M703.5 199V233M703.5 261V289M720.5 199V233M720.5 261V289M740.5 199V233M740.5 261V289M758.5 199V233M758.5 261V289M784.5 199V233M784.5 261V289M802.5 199V233M802.5 261V289M832.5 199V233M832.5 261V289M854.5 199V233M854.5 261V289M869.5 199V233M869.5 261V289M875.5 199V233M875.5 261V289M878.5 199V233M878.5 261V289M893.5 199V233M893.5 261V289M920.5 199V233M920.5 261V289M950.5 199V233M950.5 261V289M990.5 199V233M990.5 261V289M1028.5 199V233M1028.5 261V289M1051.5 199V233M1051.5 261V289M1076.5 199V233M1076.5 261V289M1116.5 199V233M1116.5 261V289M1139.5 199V233M1139.5 261V289M1167.5 199V233M1167.5 261V289M1207.5 199V233M1207.5 261V289M1249.5 199V233M1249.5 261V289M1298.5 199V233M1298.5 261V289M1328.5 199V233M1328.5 261V289M1352.5 199V233M1352.5 261V289M1371.5 199V233M1371.5 261V289M1383.5 199V233M1383.5 261V289M1395.5 199V233M1395.5 261V289M1410.5 199V233M1410.5 261V289M1446.5 199V233M1446.5 261V289M1480.5 199V233M1480.5 261V289M1516.5 199V233M1516.5 261V289M1553.5 199V233M1553.5 261V289M1560.5 199V233M1560.5 261V289M1604.5 199V233M1604.5 261V289M1635.5 199V233M1635.5 261V289M1671.5 199V233M1671.5 261V289M1716.5 199V233M1716.5 261V289M1759.5 199V233M1759.5 261V289M1786.5 199V233M1786.5 261V289" stroke="#6a6e78" stroke-width="1" stroke-dasharray="3 1 1 1" fill="none" opacity="0.8"/><rect x="459.5" y="176.5" width="91" height="14" fill="#fff" stroke="#111" stroke-width="1"/><text x="505.0" y="187" text-anchor="middle" font-size="11" fill="#111">22.01.2017 09:00</text><path d="M460 191L452 198" stroke="#111" stroke-width="1" fill="none"/><rect x="555.5" y="176.5" width="91" height="14" fill="#fff" stroke="#3cc8a0" stroke-width="1"/><text x="601.0" y="187" text-anchor="middle" font-size="11" fill="#3cc8a0">27.03.2017 08:00</text><path d="M556 191L548 198" stroke="#3cc8a0" stroke-width="1" fill="none"/><rect x="647.5" y="176.5" width="90" height="14" fill="#fff" stroke="#3030b0" stroke-width="1"/><text x="692.5" y="187" text-anchor="middle" font-size="11" fill="#3030b0">19.04.2017 08:35</text><path d="M648 191L640 198" stroke="#3030b0" stroke-width="1" fill="none"/><rect x="741.5" y="176.5" width="90" height="14" fill="#fff" stroke="#5058a8" stroke-width="1"/><text x="786.5" y="187" text-anchor="middle" font-size="11" fill="#5058a8">11.05.2017 09:00</text><path d="M742 191L734 198" stroke="#5058a8" stroke-width="1" fill="none"/><rect x="832.5" y="176.5" width="91" height="14" fill="#fff" stroke="#e07838" stroke-width="1"/><text x="878.0" y="187" text-anchor="middle" font-size="11" fill="#e07838">21.06.2017 01:43</text><path d="M833 191L825 198" stroke="#e07838" stroke-width="1" fill="none"/><rect x="383.5" y="239.5" width="90" height="14" fill="#fff" stroke="#e07838" stroke-width="1"/><text x="428.5" y="250" text-anchor="middle" font-size="11" fill="#e07838">08.01.2017 09:00</text><path d="M384 254L376 261" stroke="#e07838" stroke-width="1" fill="none"/><rect x="488.5" y="239.5" width="91" height="14" fill="#fff" stroke="#e07838" stroke-width="1"/><text x="534.0" y="250" text-anchor="middle" font-size="11" fill="#e07838">31.01.2017 09:00</text><path d="M489 254L481 261" stroke="#e07838" stroke-width="1" fill="none"/><rect x="580.5" y="239.5" width="90" height="14" fill="#fff" stroke="#3cc8a0" stroke-width="1"/><text x="625.5" y="250" text-anchor="middle" font-size="11" fill="#3cc8a0">18.04.2017 08:00</text><path d="M581 254L573 261" stroke="#3cc8a0" stroke-width="1" fill="none"/><rect x="686.5" y="239.5" width="90" height="14" fill="#fff" stroke="#111" stroke-width="1"/><text x="731.5" y="250" text-anchor="middle" font-size="11" fill="#111">30.04.2017 09:00</text><path d="M687 254L679 261" stroke="#111" stroke-width="1" fill="none"/><rect x="778.5" y="239.5" width="91" height="14" fill="#fff" stroke="#508868" stroke-width="1"/><text x="824.0" y="250" text-anchor="middle" font-size="11" fill="#508868">25.06.2017 02:45</text><path d="M779 254L771 261" stroke="#508868" stroke-width="1" fill="none"/><path d="M371.7 315H389.7L380.7 330ZM388.4 315H406.4L397.4 330ZM412.7 315H430.7L421.7 330ZM447.5 315H465.5L456.5 330ZM465.7 315H483.7L474.7 330ZM488.5 315H506.5L497.5 330ZM505.9 315H523.9L514.9 330ZM521.9 315H539.9L530.9 330ZM547.6 315H565.6L556.6 330ZM561.3 315H579.3L570.3 330ZM568.1 315H586.1L577.1 330ZM608.3 315H626.3L617.3 330ZM623.5 315H641.5L632.5 330ZM650.8 315H668.8L659.8 330ZM667.5 315H685.5L676.5 330ZM681.1 315H699.1L690.1 330ZM694.8 315H712.8L703.8 330ZM711.4 315H729.4L720.4 330ZM731.9 315H749.9L740.9 330ZM749.4 315H767.4L758.4 330ZM775.1 315H793.1L784.1 330ZM793.3 315H811.3L802.3 330ZM823.7 315H841.7L832.7 330ZM845.7 315H863.7L854.7 330ZM860.1 315H878.1L869.1 330ZM866.1 315H884.1L875.1 330ZM869.9 315H887.9L878.9 330ZM884.3 315H902.3L893.3 330ZM911.6 315H929.6L920.6 330ZM942.0 315H960.0L951.0 330ZM981.4 315H999.4L990.4 330ZM1019.3 315H1037.3L1028.3 330ZM1042.1 315H1060.1L1051.1 330ZM1067.9 315H1085.9L1076.9 330ZM1107.3 315H1125.3L1116.3 330ZM1130.1 315H1148.1L1139.1 330ZM1158.9 315H1176.9L1167.9 330ZM1198.3 315H1216.3L1207.3 330ZM1240.8 315H1258.8L1249.8 330ZM1289.3 315H1307.3L1298.3 330ZM1319.6 315H1337.6L1328.6 330ZM1343.9 315H1361.9L1352.9 330ZM1362.9 315H1380.9L1371.9 330ZM1374.2 315H1392.2L1383.2 330ZM1386.4 315H1404.4L1395.4 330ZM1401.5 315H1419.5L1410.5 330ZM1437.9 315H1455.9L1446.9 330ZM1471.3 315H1489.3L1480.3 330ZM1507.7 315H1525.7L1516.7 330ZM1544.1 315H1562.1L1553.1 330ZM1551.7 315H1569.7L1560.7 330ZM1595.7 315H1613.7L1604.7 330ZM1626.0 315H1644.0L1635.0 330ZM1662.4 315H1680.4L1671.4 330ZM1707.9 315H1725.9L1716.9 330ZM1750.4 315H1768.4L1759.4 330ZM1777.7 315H1795.7L1786.7 330Z" fill="#000"/><path d="M380.5 318V328M397.5 318V328M421.5 318V328M456.5 318V328M474.5 318V328M497.5 318V328M514.5 318V328M530.5 318V328M556.5 318V328M570.5 318V328M577.5 318V328M617.5 318V328M632.5 318V328M659.5 318V328M676.5 318V328M690.5 318V328M703.5 318V328M720.5 318V328M740.5 318V328M758.5 318V328M784.5 318V328M802.5 318V328M832.5 318V328M854.5 318V328M869.5 318V328M875.5 318V328M878.5 318V328M893.5 318V328M920.5 318V328M950.5 318V328M990.5 318V328M1028.5 318V328M1051.5 318V328M1076.5 318V328M1116.5 318V328M1139.5 318V328M1167.5 318V328M1207.5 318V328M1249.5 318V328M1298.5 318V328M1328.5 318V328M1352.5 318V328M1371.5 318V328M1383.5 318V328M1395.5 318V328M1410.5 318V328M1446.5 318V328M1480.5 318V328M1516.5 318V328M1553.5 318V328M1560.5 318V328M1604.5 318V328M1635.5 318V328M1671.5 318V328M1716.5 318V328M1759.5 318V328M1786.5 318V328" stroke="#ccc" stroke-width="1" stroke-dasharray="3 1 1 1" fill="none"/><rect x="372.5" y="295.5" width="17" height="15" fill="#fff" stroke="#000" stroke-width="1"/><text x="380.7" y="307" text-anchor="middle" font-size="11" fill="#111">12</text><path d="M380.5 311V315" stroke="#000"/><rect x="389.5" y="295.5" width="17" height="15" fill="#fff" stroke="#000" stroke-width="1"/><text x="397.4" y="307" text-anchor="middle" font-size="11" fill="#111">23</text><path d="M397.5 311V315" stroke="#000"/><rect x="413.5" y="295.5" width="17" height="15" fill="#fff" stroke="#000" stroke-width="1"/><text x="421.7" y="307" text-anchor="middle" font-size="11" fill="#111">39</text><path d="M421.5 311V315" stroke="#000"/><rect x="448.5" y="295.5" width="17" height="15" fill="#fff" stroke="#000" stroke-width="1"/><text x="456.5" y="307" text-anchor="middle" font-size="11" fill="#111">62</text><path d="M456.5 311V315" stroke="#000"/><rect x="466.5" y="295.5" width="17" height="15" fill="#fff" stroke="#000" stroke-width="1"/><text x="474.7" y="307" text-anchor="middle" font-size="11" fill="#111">74</text><path d="M474.5 311V315" stroke="#000"/><rect x="489.5" y="295.5" width="17" height="15" fill="#fff" stroke="#000" stroke-width="1"/><text x="497.5" y="307" text-anchor="middle" font-size="11" fill="#111">89</text><path d="M497.5 311V315" stroke="#000"/><rect x="519.5" y="295.5" width="23" height="15" fill="#fff" stroke="#000" stroke-width="1"/><text x="530.9" y="307" text-anchor="middle" font-size="11" fill="#111">111</text><path d="M530.5 311V315" stroke="#000"/><rect x="545.5" y="295.5" width="23" height="15" fill="#fff" stroke="#000" stroke-width="1"/><text x="556.6" y="307" text-anchor="middle" font-size="11" fill="#111">128</text><path d="M556.5 311V315" stroke="#000"/><rect x="606.5" y="295.5" width="23" height="15" fill="#fff" stroke="#000" stroke-width="1"/><text x="617.3" y="307" text-anchor="middle" font-size="11" fill="#111">168</text><path d="M617.5 311V315" stroke="#000"/><rect x="648.5" y="295.5" width="23" height="15" fill="#fff" stroke="#000" stroke-width="1"/><text x="659.8" y="307" text-anchor="middle" font-size="11" fill="#111">196</text><path d="M659.5 311V315" stroke="#000"/><rect x="679.5" y="295.5" width="23" height="15" fill="#fff" stroke="#000" stroke-width="1"/><text x="690.1" y="307" text-anchor="middle" font-size="11" fill="#111">216</text><path d="M690.5 311V315" stroke="#000"/><rect x="709.5" y="295.5" width="23" height="15" fill="#fff" stroke="#000" stroke-width="1"/><text x="720.4" y="307" text-anchor="middle" font-size="11" fill="#111">236</text><path d="M720.5 311V315" stroke="#000"/><rect x="747.5" y="295.5" width="23" height="15" fill="#fff" stroke="#000" stroke-width="1"/><text x="758.4" y="307" text-anchor="middle" font-size="11" fill="#111">261</text><path d="M758.5 311V315" stroke="#000"/><rect x="773.5" y="295.5" width="23" height="15" fill="#fff" stroke="#000" stroke-width="1"/><text x="784.1" y="307" text-anchor="middle" font-size="11" fill="#111">278</text><path d="M784.5 311V315" stroke="#000"/><rect x="821.5" y="295.5" width="23" height="15" fill="#fff" stroke="#000" stroke-width="1"/><text x="832.7" y="307" text-anchor="middle" font-size="11" fill="#111">310</text><path d="M832.5 311V315" stroke="#000"/><rect x="858.5" y="295.5" width="23" height="15" fill="#fff" stroke="#000" stroke-width="1"/><text x="869.1" y="307" text-anchor="middle" font-size="11" fill="#111">334</text><path d="M869.5 311V315" stroke="#000"/><rect x="882.5" y="295.5" width="23" height="15" fill="#fff" stroke="#000" stroke-width="1"/><text x="893.3" y="307" text-anchor="middle" font-size="11" fill="#111">350</text><path d="M893.5 311V315" stroke="#000"/><rect x="909.5" y="295.5" width="23" height="15" fill="#fff" stroke="#000" stroke-width="1"/><text x="920.6" y="307" text-anchor="middle" font-size="11" fill="#111">368</text><path d="M920.5 311V315" stroke="#000"/><rect x="939.5" y="295.5" width="23" height="15" fill="#fff" stroke="#000" stroke-width="1"/><text x="951.0" y="307" text-anchor="middle" font-size="11" fill="#111">388</text><path d="M950.5 311V315" stroke="#000"/><rect x="979.5" y="295.5" width="23" height="15" fill="#fff" stroke="#000" stroke-width="1"/><text x="990.4" y="307" text-anchor="middle" font-size="11" fill="#111">414</text><path d="M990.5 311V315" stroke="#000"/><rect x="1017.5" y="295.5" width="23" height="15" fill="#fff" stroke="#000" stroke-width="1"/><text x="1028.3" y="307" text-anchor="middle" font-size="11" fill="#111">439</text><path d="M1028.5 311V315" stroke="#000"/><rect x="1040.5" y="295.5" width="23" height="15" fill="#fff" stroke="#000" stroke-width="1"/><text x="1051.1" y="307" text-anchor="middle" font-size="11" fill="#111">454</text><path d="M1051.5 311V315" stroke="#000"/><rect x="1065.5" y="295.5" width="23" height="15" fill="#fff" stroke="#000" stroke-width="1"/><text x="1076.9" y="307" text-anchor="middle" font-size="11" fill="#111">471</text><path d="M1076.5 311V315" stroke="#000"/><rect x="1105.5" y="295.5" width="23" height="15" fill="#fff" stroke="#000" stroke-width="1"/><text x="1116.3" y="307" text-anchor="middle" font-size="11" fill="#111">497</text><path d="M1116.5 311V315" stroke="#000"/><rect x="1128.5" y="295.5" width="23" height="15" fill="#fff" stroke="#000" stroke-width="1"/><text x="1139.1" y="307" text-anchor="middle" font-size="11" fill="#111">512</text><path d="M1139.5 311V315" stroke="#000"/><rect x="1156.5" y="295.5" width="23" height="15" fill="#fff" stroke="#000" stroke-width="1"/><text x="1167.9" y="307" text-anchor="middle" font-size="11" fill="#111">531</text><path d="M1167.5 311V315" stroke="#000"/><rect x="1196.5" y="295.5" width="23" height="15" fill="#fff" stroke="#000" stroke-width="1"/><text x="1207.3" y="307" text-anchor="middle" font-size="11" fill="#111">557</text><path d="M1207.5 311V315" stroke="#000"/><rect x="1238.5" y="295.5" width="23" height="15" fill="#fff" stroke="#000" stroke-width="1"/><text x="1249.8" y="307" text-anchor="middle" font-size="11" fill="#111">585</text><path d="M1249.5 311V315" stroke="#000"/><rect x="1287.5" y="295.5" width="23" height="15" fill="#fff" stroke="#000" stroke-width="1"/><text x="1298.3" y="307" text-anchor="middle" font-size="11" fill="#111">617</text><path d="M1298.5 311V315" stroke="#000"/><rect x="1317.5" y="295.5" width="23" height="15" fill="#fff" stroke="#000" stroke-width="1"/><text x="1328.6" y="307" text-anchor="middle" font-size="11" fill="#111">637</text><path d="M1328.5 311V315" stroke="#000"/><rect x="1341.5" y="295.5" width="23" height="15" fill="#fff" stroke="#000" stroke-width="1"/><text x="1352.9" y="307" text-anchor="middle" font-size="11" fill="#111">653</text><path d="M1352.5 311V315" stroke="#000"/><rect x="1372.5" y="295.5" width="23" height="15" fill="#fff" stroke="#000" stroke-width="1"/><text x="1383.2" y="307" text-anchor="middle" font-size="11" fill="#111">673</text><path d="M1383.5 311V315" stroke="#000"/><rect x="1399.5" y="295.5" width="23" height="15" fill="#fff" stroke="#000" stroke-width="1"/><text x="1410.5" y="307" text-anchor="middle" font-size="11" fill="#111">691</text><path d="M1410.5 311V315" stroke="#000"/><rect x="1435.5" y="295.5" width="23" height="15" fill="#fff" stroke="#000" stroke-width="1"/><text x="1446.9" y="307" text-anchor="middle" font-size="11" fill="#111">715</text><path d="M1446.5 311V315" stroke="#000"/><rect x="1469.5" y="295.5" width="23" height="15" fill="#fff" stroke="#000" stroke-width="1"/><text x="1480.3" y="307" text-anchor="middle" font-size="11" fill="#111">737</text><path d="M1480.5 311V315" stroke="#000"/><rect x="1505.5" y="295.5" width="23" height="15" fill="#fff" stroke="#000" stroke-width="1"/><text x="1516.7" y="307" text-anchor="middle" font-size="11" fill="#111">761</text><path d="M1516.5 311V315" stroke="#000"/><rect x="1549.5" y="295.5" width="23" height="15" fill="#fff" stroke="#000" stroke-width="1"/><text x="1560.7" y="307" text-anchor="middle" font-size="11" fill="#111">790</text><path d="M1560.5 311V315" stroke="#000"/><rect x="1593.5" y="295.5" width="23" height="15" fill="#fff" stroke="#000" stroke-width="1"/><text x="1604.7" y="307" text-anchor="middle" font-size="11" fill="#111">819</text><path d="M1604.5 311V315" stroke="#000"/><rect x="1624.5" y="295.5" width="23" height="15" fill="#fff" stroke="#000" stroke-width="1"/><text x="1635.0" y="307" text-anchor="middle" font-size="11" fill="#111">839</text><path d="M1635.5 311V315" stroke="#000"/><rect x="1660.5" y="295.5" width="23" height="15" fill="#fff" stroke="#000" stroke-width="1"/><text x="1671.4" y="307" text-anchor="middle" font-size="11" fill="#111">863</text><path d="M1671.5 311V315" stroke="#000"/><rect x="1705.5" y="295.5" width="23" height="15" fill="#fff" stroke="#000" stroke-width="1"/><text x="1716.9" y="307" text-anchor="middle" font-size="11" fill="#111">893</text><path d="M1716.5 311V315" stroke="#000"/><rect x="1748.5" y="295.5" width="23" height="15" fill="#fff" stroke="#000" stroke-width="1"/><text x="1759.4" y="307" text-anchor="middle" font-size="11" fill="#111">921</text><path d="M1759.5 311V315" stroke="#000"/><rect x="1775.5" y="295.5" width="23" height="15" fill="#fff" stroke="#000" stroke-width="1"/><text x="1786.7" y="307" text-anchor="middle" font-size="11" fill="#111">939</text><path d="M1786.5 311V315" stroke="#000"/><path d="M362.5 352.5H1879.5V954.5H362.5Z" fill="none" stroke="#b4b4b4"/><text x="351" y="923.7" text-anchor="end" font-size="11" fill="#222">-80</text><text x="351" y="870.4" text-anchor="end" font-size="11" fill="#222">-70</text><text x="351" y="817.1" text-anchor="end" font-size="11" fill="#222">-60</text><text x="351" y="763.8" text-anchor="end" font-size="11" fill="#222">-50</text><text x="351" y="710.5" text-anchor="end" font-size="11" fill="#222">-40</text><text x="351" y="657.2" text-anchor="end" font-size="11" fill="#222">-30</text><text x="351" y="603.9" text-anchor="end" font-size="11" fill="#222">-20</text><text x="351" y="550.6" text-anchor="end" font-size="11" fill="#222">-10</text><text x="351" y="497.3" text-anchor="end" font-size="11" fill="#222">0</text><text x="351" y="444.0" text-anchor="end" font-size="11" fill="#222">10</text><text x="351" y="390.7" text-anchor="end" font-size="11" fill="#222">20</text><text x="362.5" y="974" text-anchor="middle" font-size="11" fill="#222">0</text><text x="438.3" y="974" text-anchor="middle" font-size="11" fill="#222">50</text><text x="514.2" y="974" text-anchor="middle" font-size="11" fill="#222">100</text><text x="590.0" y="974" text-anchor="middle" font-size="11" fill="#222">150</text><text x="665.8" y="974" text-anchor="middle" font-size="11" fill="#222">200</text><text x="741.7" y="974" text-anchor="middle" font-size="11" fill="#222">250</text><text x="817.5" y="974" text-anchor="middle" font-size="11" fill="#222">300</text><text x="893.3" y="974" text-anchor="middle" font-size="11" fill="#222">350</text><text x="969.2" y="974" text-anchor="middle" font-size="11" fill="#222">400</text><text x="1045.0" y="974" text-anchor="middle" font-size="11" fill="#222">450</text><text x="1120.8" y="974" text-anchor="middle" font-size="11" fill="#222">500</text><text x="1196.7" y="974" text-anchor="middle" font-size="11" fill="#222">550</text><text x="1272.5" y="974" text-anchor="middle" font-size="11" fill="#222">600</text><text x="1348.4" y="974" text-anchor="middle" font-size="11" fill="#222">650</text><text x="1424.2" y="974" text-anchor="middle" font-size="11" fill="#222">700</text><text x="1500.0" y="974" text-anchor="middle" font-size="11" fill="#222">750</text><text x="1575.9" y="974" text-anchor="middle" font-size="11" fill="#222">800</text><text x="1651.7" y="974" text-anchor="middle" font-size="11" fill="#222">850</text><text x="1727.5" y="974" text-anchor="middle" font-size="11" fill="#222">900</text><text x="1803.4" y="974" text-anchor="middle" font-size="11" fill="#222">950</text><text x="1871.0" y="974" text-anchor="middle" font-size="11" fill="#222">1000</text><path d="M359 937.5H362.5M356 919.7H362.5M359 901.9H362.5M359 884.2H362.5M356 866.4H362.5M359 848.6H362.5M359 830.9H362.5M356 813.1H362.5M359 795.3H362.5M359 777.6H362.5M356 759.8H362.5M359 742.0H362.5M359 724.3H362.5M356 706.5H362.5M359 688.7H362.5M359 671.0H362.5M356 653.2H362.5M359 635.4H362.5M359 617.7H362.5M356 599.9H362.5M359 582.1H362.5M359 564.4H362.5M356 546.6H362.5M359 528.8H362.5M359 511.1H362.5M356 493.3H362.5M359 475.5H362.5M359 457.8H362.5M356 440.0H362.5M359 422.2H362.5M359 404.5H362.5M356 386.7H362.5M359 368.9H362.5M362.5 954.5V960M377.5 954.5V958M392.5 954.5V958M408.5 954.5V958M423.5 954.5V958M438.5 954.5V960M453.5 954.5V958M468.5 954.5V958M483.5 954.5V958M499.5 954.5V958M514.5 954.5V960M529.5 954.5V958M544.5 954.5V958M559.5 954.5V958M574.5 954.5V958M590.5 954.5V960M605.5 954.5V958M620.5 954.5V958M635.5 954.5V958M650.5 954.5V958M665.5 954.5V960M681.5 954.5V958M696.5 954.5V958M711.5 954.5V958M726.5 954.5V958M741.5 954.5V960M756.5 954.5V958M772.5 954.5V958M787.5 954.5V958M802.5 954.5V958M817.5 954.5V960M832.5 954.5V958M847.5 954.5V958M863.5 954.5V958M878.5 954.5V958M893.5 954.5V960M908.5 954.5V958M923.5 954.5V958M938.5 954.5V958M954.5 954.5V958M969.5 954.5V960M984.5 954.5V958M999.5 954.5V958M1014.5 954.5V958M1029.5 954.5V958M1045.5 954.5V960M1060.5 954.5V958M1075.5 954.5V958M1090.5 954.5V958M1105.5 954.5V958M1120.5 954.5V960M1136.5 954.5V958M1151.5 954.5V958M1166.5 954.5V958M1181.5 954.5V958M1196.5 954.5V960M1211.5 954.5V958M1227.5 954.5V958M1242.5 954.5V958M1257.5 954.5V958M1272.5 954.5V960M1287.5 954.5V958M1302.5 954.5V958M1318.5 954.5V958M1333.5 954.5V958M1348.5 954.5V960M1363.5 954.5V958M1378.5 954.5V958M1393.5 954.5V958M1409.5 954.5V958M1424.5 954.5V960M1439.5 954.5V958M1454.5 954.5V958M1469.5 954.5V958M1484.5 954.5V958M1500.5 954.5V960M1515.5 954.5V958M1530.5 954.5V958M1545.5 954.5V958M1560.5 954.5V958M1575.5 954.5V960M1591.5 954.5V958M1606.5 954.5V958M1621.5 954.5V958M1636.5 954.5V958M1651.5 954.5V960M1666.5 954.5V958M1682.5 954.5V958M1697.5 954.5V958M1712.5 954.5V958M1727.5 954.5V960M1742.5 954.5V958M1757.5 954.5V958M1773.5 954.5V958M1788.5 954.5V958M1803.5 954.5V960M1818.5 954.5V958M1833.5 954.5V958M1848.5 954.5V958M1864.5 954.5V958M1879.5 954.5V960" stroke="#a0a0a0" stroke-width="1"/></g></svg>
<svg style="left:0;top:0" width="1920" height="994"><g fill="none" stroke-width="1.2"><path d="M380.7 541.0C382.6 537.9 392.6 510.4 397.4 514.3C402.2 518.2 414.8 570.4 421.7 574.4C428.6 578.5 450.3 552.5 456.5 549.0C462.7 545.5 470.0 545.7 474.7 544.6C479.5 543.5 492.8 534.7 497.5 539.8C502.2 544.8 511.0 582.7 514.9 588.1C518.8 593.4 526.0 573.4 530.9 585.5C535.7 597.7 552.0 687.1 556.6 692.3C561.2 697.6 567.9 653.9 570.3 630.6C572.7 607.4 576.3 509.3 577.1 493.3" stroke="#4c44dc"/><path d="M380.7 546.8C382.6 543.5 392.6 515.4 397.4 519.1C402.2 522.7 414.8 574.4 421.7 578.0C428.6 581.6 450.3 553.3 456.5 549.8C462.7 546.3 470.0 548.6 474.7 547.9C479.5 547.2 492.8 538.4 497.5 543.6C502.2 548.7 511.0 586.4 514.9 592.2C518.8 598.1 526.0 579.2 530.9 593.6C535.7 608.1 552.0 696.6 556.6 716.3C561.2 736.0 567.9 755.6 570.3 762.3C572.7 769.0 571.6 789.0 577.1 773.5C582.6 758.1 610.8 647.6 617.3 630.0C623.8 612.3 627.5 613.3 632.5 621.9C637.4 630.6 654.6 693.6 659.8 704.3C664.9 715.0 672.9 720.4 676.5 713.6C680.0 706.7 686.9 659.4 690.1 645.4C693.3 631.4 700.2 602.7 703.8 593.3C707.3 583.9 716.1 566.4 720.4 564.7C724.8 563.0 736.5 559.4 740.9 578.8C745.3 598.2 753.3 708.0 758.4 731.0C763.4 754.1 779.0 788.4 784.1 776.1C789.3 763.8 796.7 646.4 802.3 625.9C808.0 605.5 826.6 613.7 832.7 600.7C838.8 587.8 850.4 526.6 854.7 514.7C858.9 502.8 866.7 501.6 869.1 498.9C871.5 496.2 874.0 492.1 875.1 491.5C876.3 490.9 876.8 493.5 878.9 493.7C881.1 494.0 891.7 493.4 893.3 493.3" stroke="#e4884e"/><path d="M380.7 534.5C382.6 531.2 392.6 502.2 397.4 506.1C402.2 510.1 414.8 563.8 421.7 568.3C428.6 572.8 450.3 548.4 456.5 544.9C462.7 541.4 470.0 540.3 474.7 538.6C479.5 536.9 492.8 526.5 497.5 530.4C502.2 534.3 511.0 567.3 514.9 572.0C518.8 576.7 526.0 561.3 530.9 570.6C535.7 579.9 552.0 641.2 556.6 652.1C561.2 663.0 567.9 664.3 570.3 664.0C572.7 663.8 571.6 658.9 577.1 649.9C582.6 640.8 610.8 590.7 617.3 586.2C623.8 581.8 627.5 604.9 632.5 611.6C637.4 618.3 654.6 635.7 659.8 643.7C664.9 651.6 672.9 681.6 676.5 679.4C680.0 677.2 686.9 637.4 690.1 625.0C693.3 612.5 700.2 582.0 703.8 573.0C707.3 563.9 716.1 549.5 720.4 547.3C724.8 545.2 736.5 540.7 740.9 554.6C745.3 568.5 753.3 651.6 758.4 666.5C763.4 681.4 779.0 689.1 784.1 682.3C789.3 675.4 796.7 619.2 802.3 607.9C808.0 596.7 826.6 597.8 832.7 585.8C838.8 573.8 850.4 517.0 854.7 505.2C858.9 493.5 866.7 488.2 869.1 485.2C871.5 482.2 874.0 479.6 875.1 479.6C876.3 479.6 876.8 493.1 878.9 485.0C881.1 477.0 888.5 410.0 893.3 410.3C898.2 410.6 913.9 476.5 920.6 487.4C927.4 498.2 942.8 501.0 951.0 503.3C959.1 505.6 981.4 510.3 990.4 507.1C999.4 503.9 1021.3 484.7 1028.3 475.6C1035.4 466.5 1045.4 423.9 1051.1 429.0C1056.7 434.2 1069.3 513.2 1076.9 519.8C1084.5 526.4 1109.0 493.1 1116.3 485.7C1123.6 478.3 1133.0 460.0 1139.1 456.5C1145.1 453.0 1159.9 453.3 1167.9 455.8C1175.8 458.3 1197.7 472.4 1207.3 477.9C1216.9 483.5 1239.2 502.5 1249.8 503.3C1260.4 504.1 1289.1 481.9 1298.3 484.7C1307.5 487.5 1322.3 524.7 1328.6 527.3C1335.0 529.9 1347.9 521.4 1352.9 507.1C1357.9 492.7 1368.3 400.5 1371.9 404.0C1375.4 407.6 1380.5 528.6 1383.2 537.7C1386.0 546.7 1392.2 487.9 1395.4 481.8C1398.6 475.6 1404.5 483.0 1410.5 485.0C1416.6 487.0 1438.8 494.0 1446.9 498.7C1455.1 503.4 1472.2 528.7 1480.3 525.1C1488.4 521.5 1508.2 474.7 1516.7 467.6C1525.2 460.4 1548.0 468.2 1553.1 464.1C1558.2 460.0 1554.7 432.1 1560.7 432.7C1566.7 433.4 1596.0 460.0 1604.7 469.6C1613.3 479.3 1627.2 515.2 1635.0 515.4C1642.8 515.7 1661.9 476.8 1671.4 472.1C1681.0 467.5 1706.7 472.9 1716.9 475.4C1727.2 477.8 1754.4 491.2 1759.4 493.3" stroke="#8c2a1a"/><path d="M380.7 556.7C382.6 552.7 392.6 519.2 397.4 522.2C402.2 525.2 414.8 578.9 421.7 582.4C428.6 585.9 450.3 556.2 456.5 552.3C462.7 548.3 470.0 549.2 474.7 548.4C479.5 547.7 492.8 539.9 497.5 545.8C502.2 551.7 511.0 592.6 514.9 598.8C518.8 605.1 526.0 611.4 530.9 599.1C535.7 586.8 553.6 505.6 556.6 493.3" stroke="#8c2a1a"/><path d="M380.7 537.6C382.6 534.4 392.6 506.6 397.4 510.6C402.2 514.6 414.8 567.7 421.7 571.8C428.6 576.0 450.3 549.8 456.5 546.2C462.7 542.6 470.0 542.2 474.7 540.9C479.5 539.5 492.8 530.4 497.5 534.5C502.2 538.6 511.0 570.6 514.9 576.0C518.8 581.4 526.0 569.0 530.9 580.7C535.7 592.4 552.0 664.7 556.6 676.5C561.2 688.3 567.9 682.4 570.3 682.0C572.7 681.7 571.6 684.7 577.1 673.5C582.6 662.4 610.8 593.8 617.3 586.5C623.8 579.2 627.5 601.5 632.5 610.9C637.4 620.4 654.6 659.2 659.8 667.5C664.9 675.7 672.9 685.9 676.5 681.6C680.0 677.2 686.9 642.2 690.1 630.3C693.3 618.4 700.2 588.3 703.8 579.6C707.3 570.9 716.1 557.7 720.4 555.9C724.8 554.1 736.5 549.5 740.9 564.1C745.3 578.6 753.3 663.4 758.4 680.9C763.4 698.5 779.0 722.1 784.1 714.1C789.3 706.1 796.7 626.7 802.3 612.1C808.0 597.5 826.6 601.4 832.7 589.4C838.8 577.3 850.4 520.6 854.7 508.8C858.9 497.0 866.7 491.7 869.1 488.5C871.5 485.4 874.0 481.9 875.1 481.8C876.3 481.8 876.8 496.1 878.9 487.8C881.1 479.5 888.5 410.7 893.3 410.7C898.2 410.7 913.9 476.7 920.6 487.5C927.4 498.4 942.8 501.2 951.0 503.5C959.1 505.8 981.4 510.1 990.4 506.9C999.4 503.7 1021.3 485.0 1028.3 475.9C1035.4 466.9 1045.4 424.3 1051.1 429.4C1056.7 434.4 1069.3 512.1 1076.9 519.5C1084.5 527.0 1111.7 496.4 1116.3 493.3" stroke="#44d4a4"/><path d="M380.7 554.8C382.6 551.1 392.6 519.9 397.4 523.2C402.2 526.5 414.8 579.6 421.7 583.0C428.6 586.5 450.3 556.6 456.5 552.9C462.7 549.2 470.0 550.9 474.7 551.3C479.5 551.8 492.8 549.8 497.5 556.8C502.2 563.7 511.0 603.9 514.9 610.6C518.8 617.2 526.0 595.7 530.9 613.8C535.7 631.8 552.0 738.8 556.6 765.1C561.2 791.5 567.9 824.5 570.3 839.8C572.7 855.0 571.6 906.9 577.1 895.9C582.6 884.8 610.8 770.9 617.3 744.9C623.8 718.9 627.5 672.0 632.5 673.0C637.4 673.9 654.6 743.4 659.8 753.3C664.9 763.2 672.9 767.6 676.5 757.5C680.0 747.5 686.9 684.7 690.1 667.4C693.3 650.1 700.2 620.8 703.8 609.5C707.3 598.2 716.1 573.2 720.4 570.3C724.8 567.4 736.5 564.2 740.9 584.5C745.3 604.7 753.3 717.2 758.4 743.8C763.4 770.4 779.0 824.7 784.1 812.2C789.3 799.8 796.7 660.8 802.3 636.9C808.0 613.0 826.6 620.9 832.7 607.3C838.8 593.6 850.4 531.3 854.7 520.0C858.9 508.6 866.7 512.3 869.1 510.4C871.5 508.4 874.0 504.2 875.1 503.4C876.3 502.7 876.8 505.1 878.9 504.0C881.1 502.8 891.7 494.5 893.3 493.3" stroke="#7078c4"/><path d="M380.7 532.3C382.6 529.3 392.6 502.8 397.4 507.2C402.2 511.5 414.8 564.9 421.7 569.4C428.6 574.0 450.3 549.4 456.5 546.1C462.7 542.9 470.0 542.5 474.7 541.2C479.5 539.9 492.8 530.8 497.5 535.1C502.2 539.4 511.0 573.0 514.9 577.9C518.8 582.8 526.0 567.1 530.9 576.9C535.7 586.7 552.0 654.4 556.6 661.8C561.2 669.2 567.9 647.7 570.3 640.3C572.7 632.9 571.6 607.8 577.1 598.2C582.6 588.6 610.8 559.7 617.3 557.9C623.8 556.1 627.5 577.7 632.5 582.6C637.4 587.5 654.6 591.7 659.8 599.8C664.9 608.0 672.9 651.1 676.5 652.3C680.0 653.6 686.9 620.8 690.1 610.6C693.3 600.3 700.2 571.8 703.8 564.3C707.3 556.9 716.1 547.9 720.4 546.9C724.8 546.0 736.5 541.5 740.9 556.2C745.3 570.9 753.3 655.9 758.4 673.0C763.4 690.2 779.0 710.3 784.1 702.9C789.3 695.5 796.7 622.9 802.3 609.8C808.0 596.6 826.6 601.9 832.7 590.0C838.8 578.2 850.4 520.0 854.7 508.2C858.9 496.3 866.7 491.1 869.1 488.6C871.5 486.0 874.0 485.7 875.1 486.3C876.3 486.8 878.5 492.5 878.9 493.3" stroke="#4c44dc"/><path d="M380.7 542.1C382.6 539.2 392.6 513.1 397.4 517.2C402.2 521.3 414.8 573.2 421.7 577.1C428.6 580.9 450.3 553.5 456.5 550.0C462.7 546.5 470.0 548.0 474.7 547.0C479.5 546.0 492.8 535.5 497.5 541.2C502.2 546.9 511.0 589.5 514.9 596.1C518.8 602.8 526.0 583.3 530.9 598.3C535.7 613.3 552.0 705.5 556.6 724.6C561.2 743.8 567.9 753.5 570.3 762.3C572.7 771.1 571.6 813.3 577.1 800.1C582.6 787.0 610.8 667.7 617.3 649.6C623.8 631.6 627.5 639.5 632.5 645.6C637.4 651.8 654.6 692.7 659.8 702.4C664.9 712.0 672.9 734.2 676.5 728.3C680.0 722.4 686.9 675.6 690.1 651.8C693.3 628.0 700.2 542.8 703.8 524.3C707.3 505.8 718.5 496.9 720.4 493.3" stroke="#e4884e"/><path d="M380.7 524.0C382.6 521.4 392.6 498.0 397.4 502.1C402.2 506.2 414.8 554.3 421.7 559.2C428.6 564.1 450.3 551.9 456.5 544.2C462.7 536.6 472.6 499.2 474.7 493.3" stroke="#5c8a6a"/><path d="M380.7 553.3C382.6 549.7 392.6 518.7 397.4 522.0C402.2 525.3 414.8 578.2 421.7 581.7C428.6 585.2 450.3 555.7 456.5 552.1C462.7 548.5 470.0 550.8 474.7 550.9C479.5 551.0 492.8 546.6 497.5 553.0C502.2 559.3 511.0 598.4 514.9 605.2C518.8 612.0 526.0 593.0 530.9 611.2C535.7 629.3 552.0 736.7 556.6 760.7C561.2 784.7 567.9 802.4 570.3 816.8C572.7 831.2 571.6 893.7 577.1 884.0C582.6 874.4 610.8 759.7 617.3 734.3C623.8 709.0 627.5 665.7 632.5 667.1C637.4 668.5 654.6 737.1 659.8 746.5C664.9 755.8 672.9 756.7 676.5 747.0C680.0 737.4 686.9 680.4 690.1 663.9C693.3 647.4 700.2 616.6 703.8 605.7C707.3 594.7 716.1 572.5 720.4 570.1C724.8 567.7 736.5 564.8 740.9 585.1C745.3 605.4 753.3 718.2 758.4 744.1C763.4 769.9 779.0 819.3 784.1 806.6C789.3 794.0 796.7 658.7 802.3 635.4C808.0 612.0 826.6 620.4 832.7 606.8C838.8 593.2 850.4 530.0 854.7 518.6C858.9 507.2 866.7 511.4 869.1 509.4C871.5 507.5 874.0 502.9 875.1 502.0C876.3 501.1 876.8 510.4 878.9 501.9C881.1 493.5 888.5 428.7 893.3 429.5C898.2 430.3 913.9 498.7 920.6 509.0C927.4 519.2 942.8 516.2 951.0 517.2C959.1 518.1 981.4 520.3 990.4 517.1C999.4 513.8 1021.3 498.5 1028.3 489.3C1035.4 480.0 1045.4 432.6 1051.1 437.8C1056.7 442.9 1069.3 525.8 1076.9 533.5C1084.5 541.2 1109.0 511.8 1116.3 504.0C1123.6 496.2 1133.0 471.7 1139.1 466.8C1145.1 462.0 1159.9 460.4 1167.9 462.2C1175.8 463.9 1197.7 476.4 1207.3 482.0C1216.9 487.6 1239.2 508.4 1249.8 510.1C1260.4 511.9 1289.1 494.2 1298.3 496.9C1307.5 499.7 1322.3 532.1 1328.6 533.9C1335.0 535.7 1347.9 526.7 1352.9 512.1C1357.9 497.6 1368.3 405.5 1371.9 409.1C1375.4 412.7 1380.5 533.9 1383.2 543.0C1386.0 552.1 1392.2 493.1 1395.4 486.8C1398.6 480.5 1404.5 486.0 1410.5 489.4C1416.6 492.8 1438.8 510.7 1446.9 515.7C1455.1 520.6 1472.2 536.6 1480.3 532.1C1488.4 527.7 1508.2 484.5 1516.7 477.5C1525.2 470.5 1548.0 475.0 1553.1 471.9C1558.2 468.8 1554.7 450.2 1560.7 450.8C1566.7 451.5 1596.0 468.6 1604.7 477.3C1613.3 486.0 1627.2 524.0 1635.0 525.3C1642.8 526.6 1661.9 492.3 1671.4 488.6C1681.0 484.9 1711.6 492.8 1716.9 493.3" stroke="#e4884e"/><path d="M380.7 532.9C382.6 529.8 392.6 502.1 397.4 506.3C402.2 510.5 414.8 564.2 421.7 568.7C428.6 573.3 450.3 548.7 456.5 545.4C462.7 542.0 470.0 541.5 474.7 540.0C479.5 538.5 492.8 528.9 497.5 532.4C502.2 535.8 511.0 564.8 514.9 569.5C518.8 574.3 526.0 562.3 530.9 573.0C535.7 583.7 552.0 652.8 556.6 661.2C561.2 669.6 567.9 647.3 570.3 644.9C572.7 642.5 571.6 649.9 577.1 640.7C582.6 631.5 610.8 571.2 617.3 566.3C623.8 561.3 627.5 590.0 632.5 598.2C637.4 606.3 654.6 628.2 659.8 636.0C664.9 643.7 672.9 665.9 676.5 664.6C680.0 663.3 686.9 636.0 690.1 624.9C693.3 613.7 700.2 578.1 703.8 569.3C707.3 560.4 716.1 550.5 720.4 549.3C724.8 548.0 736.5 545.1 740.9 558.6C745.3 572.0 753.3 648.4 758.4 664.7C763.4 681.1 779.0 704.9 784.1 698.4C789.3 691.9 796.7 621.9 802.3 608.8C808.0 595.8 826.6 598.9 832.7 586.8C838.8 574.7 850.4 516.8 854.7 505.1C858.9 493.3 866.7 489.1 869.1 486.0C871.5 482.9 874.0 478.0 875.1 478.4C876.3 478.8 876.8 487.9 878.9 489.6C881.1 491.4 891.7 492.9 893.3 493.3" stroke="#8c2a1a"/><path d="" stroke="#44d4a4"/><path d="M380.7 536.9C382.6 533.7 392.6 505.7 397.4 509.5C402.2 513.2 414.8 565.3 421.7 569.4C428.6 573.5 450.3 548.0 456.5 544.6C462.7 541.1 470.0 541.2 474.7 539.9C479.5 538.7 492.8 529.4 497.5 533.8C502.2 538.2 511.0 572.4 514.9 577.4C518.8 582.4 526.0 566.7 530.9 576.9C535.7 587.2 552.0 651.7 556.6 664.9C561.2 678.1 567.9 691.3 570.3 689.9C572.7 688.5 571.6 664.6 577.1 653.1C582.6 641.6 610.8 595.9 617.3 591.3C623.8 586.7 627.5 605.5 632.5 613.8C637.4 622.2 654.6 653.4 659.8 663.2C664.9 673.1 672.9 701.4 676.5 698.4C680.0 695.4 686.9 658.1 690.1 637.3C693.3 616.6 700.2 537.3 703.8 520.5C707.3 503.7 718.5 496.5 720.4 493.3" stroke="#8c2a1a"/><path d="M380.7 528.4C382.6 525.7 392.6 501.2 397.4 505.7C402.2 510.3 414.8 562.9 421.7 567.5C428.6 572.1 450.3 548.7 456.5 545.4C462.7 542.0 470.0 540.6 474.7 539.0C479.5 537.5 492.8 528.6 497.5 532.2C502.2 535.7 511.0 573.8 514.9 569.3C518.8 564.8 529.0 502.2 530.9 493.3" stroke="#e4884e"/><path d="M380.7 545.1C382.6 542.1 392.6 515.8 397.4 519.7C402.2 523.7 414.8 575.3 421.7 578.9C428.6 582.5 450.3 554.4 456.5 550.8C462.7 547.2 470.0 548.7 474.7 548.2C479.5 547.6 492.8 540.2 497.5 546.0C502.2 551.8 511.0 591.3 514.9 597.7C518.8 604.1 526.0 584.7 530.9 600.7C535.7 616.8 552.0 715.8 556.6 735.4C561.2 755.1 567.9 761.6 570.3 769.1C572.7 776.7 571.6 811.7 577.1 800.0C582.6 788.3 610.8 687.0 617.3 669.2C623.8 651.4 627.5 642.3 632.5 647.2C637.4 652.0 654.6 701.4 659.8 710.5C664.9 719.7 672.9 732.7 676.5 725.9C680.0 719.1 686.9 667.1 690.1 652.2C693.3 637.2 700.2 607.9 703.8 597.8C707.3 587.7 716.1 567.6 720.4 565.8C724.8 564.1 736.5 564.0 740.9 582.9C745.3 601.9 753.3 704.4 758.4 728.2C763.4 752.0 779.0 798.5 784.1 786.8C789.3 775.0 796.7 649.0 802.3 627.4C808.0 605.9 826.6 614.9 832.7 602.0C838.8 589.1 850.4 528.5 854.7 516.9C858.9 505.3 866.7 504.7 869.1 502.5C871.5 500.4 874.0 498.9 875.1 498.5C876.3 498.0 876.8 507.5 878.9 498.7C881.1 489.9 888.5 422.6 893.3 423.0C898.2 423.4 913.9 491.9 920.6 502.4C927.4 512.9 942.8 512.4 951.0 513.1C959.1 513.9 981.4 511.2 990.4 508.9C999.4 506.6 1023.9 495.1 1028.3 493.3" stroke="#e4884e"/><path d="M380.7 528.1C382.6 525.5 392.6 500.8 397.4 505.5C402.2 510.1 414.8 563.0 421.7 567.6C428.6 572.3 450.3 548.9 456.5 545.6C462.7 542.2 470.0 540.4 474.7 539.0C479.5 537.6 492.8 529.4 497.5 533.8C502.2 538.2 511.0 571.4 514.9 576.5C518.8 581.6 526.0 567.7 530.9 577.5C535.7 587.2 552.0 651.1 556.6 659.8C561.2 668.5 567.9 652.5 570.3 651.9C572.7 651.3 571.6 664.1 577.1 654.5C582.6 645.0 610.8 577.0 617.3 570.0C623.8 563.0 627.5 588.3 632.5 594.8C637.4 601.3 654.6 618.1 659.8 625.7C664.9 633.2 672.9 661.0 676.5 659.6C680.0 658.3 686.9 625.5 690.1 614.0C693.3 602.5 700.2 569.3 703.8 561.2C707.3 553.0 716.1 545.1 720.4 544.1C724.8 543.0 736.5 538.6 740.9 552.1C745.3 565.7 753.3 645.3 758.4 660.3C763.4 675.4 779.0 686.9 784.1 680.9C789.3 674.9 796.7 620.1 802.3 609.1C808.0 598.1 826.6 598.6 832.7 586.7C838.8 574.8 850.4 518.8 854.7 507.2C858.9 495.5 866.7 490.1 869.1 487.1C871.5 484.0 874.0 481.4 875.1 481.3C876.3 481.2 876.8 494.5 878.9 486.2C881.1 477.9 888.5 410.1 893.3 410.2C898.2 410.3 913.9 476.6 920.6 487.4C927.4 498.2 942.8 500.8 951.0 503.1C959.1 505.3 981.4 509.0 990.4 506.8C999.4 504.5 1021.3 485.2 1028.3 483.6C1035.4 482.1 1048.4 492.2 1051.1 493.3" stroke="#8c2a1a"/><path d="M380.7 541.9C382.6 538.8 392.6 511.6 397.4 515.7C402.2 519.7 414.8 572.5 421.7 576.4C428.6 580.4 450.3 552.9 456.5 549.4C462.7 546.0 470.0 547.6 474.7 547.0C479.5 546.3 492.8 538.1 497.5 543.9C502.2 549.6 511.0 590.0 514.9 596.1C518.8 602.1 526.0 580.1 530.9 595.5C535.7 610.9 552.0 707.9 556.6 728.2C561.2 748.6 567.9 763.4 570.3 770.0C572.7 776.6 571.6 800.6 577.1 784.6C582.6 768.6 610.8 650.1 617.3 632.7C623.8 615.2 627.5 627.3 632.5 635.2C637.4 643.0 654.6 691.2 659.8 699.8C664.9 708.4 672.9 715.8 676.5 708.9C680.0 702.1 686.9 654.8 690.1 641.0C693.3 627.1 700.2 599.6 703.8 590.3C707.3 580.9 716.1 562.9 720.4 561.0C724.8 559.2 736.5 556.5 740.9 574.4C745.3 592.2 753.3 692.1 758.4 714.0C763.4 736.0 779.0 773.1 784.1 762.8C789.3 752.5 796.7 644.5 802.3 625.6C808.0 606.7 826.6 613.8 832.7 600.9C838.8 588.0 850.4 526.7 854.7 515.1C858.9 503.5 866.7 503.7 869.1 501.5C871.5 499.3 874.0 496.8 875.1 496.2C876.3 495.7 876.8 505.4 878.9 496.9C881.1 488.4 888.5 422.9 893.3 423.5C898.2 424.2 913.9 491.9 920.6 502.4C927.4 512.8 942.8 511.5 951.0 512.9C959.1 514.2 981.4 516.9 990.4 513.5C999.4 510.1 1021.3 492.9 1028.3 483.8C1035.4 474.7 1045.4 429.9 1051.1 435.3C1056.7 440.6 1069.3 522.2 1076.9 529.5C1084.5 536.8 1109.0 505.7 1116.3 497.6C1123.6 489.6 1133.0 465.0 1139.1 460.6C1145.1 456.3 1159.9 458.1 1167.9 460.4C1175.8 462.8 1197.7 474.9 1207.3 480.5C1216.9 486.0 1239.2 506.8 1249.8 508.0C1260.4 509.1 1289.1 487.5 1298.3 490.2C1307.5 493.0 1322.3 528.9 1328.6 531.2C1335.0 533.6 1347.9 524.7 1352.9 510.3C1357.9 495.9 1368.3 404.1 1371.9 407.7C1375.4 411.3 1380.5 532.1 1383.2 541.2C1386.0 550.2 1392.2 491.3 1395.4 485.1C1398.6 478.8 1404.5 486.0 1410.5 487.7C1416.6 489.5 1438.8 499.7 1446.9 500.4C1455.1 501.0 1476.4 494.1 1480.3 493.3" stroke="#7078c4"/><path d="M380.7 522.2C382.6 519.8 392.6 498.9 397.4 502.0C402.2 505.2 414.8 545.8 421.7 549.0C428.6 552.1 450.3 533.2 456.5 529.3C462.7 525.3 470.0 515.2 474.7 515.3C479.5 515.4 492.8 525.8 497.5 530.1C502.2 534.5 511.0 549.0 514.9 552.8C518.8 556.6 526.0 552.3 530.9 562.8C535.7 573.3 552.0 633.8 556.6 643.1C561.2 652.4 567.9 647.2 570.3 642.7C572.7 638.3 571.6 614.7 577.1 605.1C582.6 595.4 610.8 561.8 617.3 560.2C623.8 558.6 627.5 583.3 632.5 591.2C637.4 599.1 654.6 620.3 659.8 628.0C664.9 635.8 672.9 659.8 676.5 657.3C680.0 654.9 686.9 618.3 690.1 607.0C693.3 595.8 700.2 568.4 703.8 560.9C707.3 553.3 716.1 544.1 720.4 542.5C724.8 540.9 736.5 535.4 740.9 547.0C745.3 558.6 753.3 629.3 758.4 641.9C763.4 654.5 779.0 665.5 784.1 655.2C789.3 645.0 796.7 563.1 802.3 553.9C808.0 544.7 826.6 582.2 832.7 576.3C838.8 570.5 850.4 514.6 854.7 503.5C858.9 492.4 866.7 484.4 869.1 481.1C871.5 477.9 874.0 475.7 875.1 475.6C876.3 475.5 876.8 488.6 878.9 480.2C881.1 471.9 888.5 404.2 893.3 404.2C898.2 404.1 913.9 469.0 920.6 479.7C927.4 490.4 942.8 494.3 951.0 495.9C959.1 497.4 985.8 493.6 990.4 493.3" stroke="#7078c4"/><path d="M380.7 521.8C382.6 519.7 392.6 499.1 397.4 504.0C402.2 508.8 414.8 558.7 421.7 563.3C428.6 568.0 450.3 548.3 456.5 544.0C462.7 539.7 470.0 527.8 474.7 526.2C479.5 524.6 492.8 528.9 497.5 530.4C502.2 531.8 511.0 539.9 514.9 538.6C518.8 537.3 526.0 510.3 530.9 519.3C535.7 528.3 552.0 610.8 556.6 615.7C561.2 620.6 567.9 572.1 570.3 561.5C572.7 551.0 571.6 532.0 577.1 525.3C582.6 518.6 610.8 498.4 617.3 504.0C623.8 509.6 627.5 565.6 632.5 573.2C637.4 580.9 654.6 567.0 659.8 569.5C664.9 572.0 672.9 592.2 676.5 594.6C680.0 597.0 686.9 595.4 690.1 590.0C693.3 584.6 700.2 553.8 703.8 548.2C707.3 542.6 716.1 541.9 720.4 541.8C724.8 541.7 736.5 534.5 740.9 547.6C745.3 560.8 753.3 640.7 758.4 654.6C763.4 668.5 779.0 672.6 784.1 666.8C789.3 661.0 796.7 615.5 802.3 605.0C808.0 594.5 826.6 589.0 832.7 577.0C838.8 564.9 850.4 513.0 854.7 501.7C858.9 490.4 866.7 483.4 869.1 480.0C871.5 476.5 874.0 472.3 875.1 472.0C876.3 471.7 876.8 485.4 878.9 477.3C881.1 469.2 888.5 402.9 893.3 402.9C898.2 402.8 913.9 466.2 920.6 476.8C927.4 487.3 942.8 490.7 951.0 493.3C959.1 495.9 981.4 501.7 990.4 499.1C999.4 496.5 1021.3 480.2 1028.3 470.9C1035.4 461.7 1045.4 417.1 1051.1 419.7C1056.7 422.4 1069.3 486.4 1076.9 493.3C1084.5 500.2 1109.0 483.7 1116.3 478.9C1123.6 474.2 1133.0 456.8 1139.1 452.6C1145.1 448.4 1159.9 441.0 1167.9 442.7C1175.8 444.4 1197.7 461.2 1207.3 467.2C1216.9 473.2 1239.2 493.9 1249.8 494.0C1260.4 494.2 1289.1 464.7 1298.3 468.4C1307.5 472.0 1322.3 522.4 1328.6 525.3C1335.0 528.2 1347.9 497.0 1352.9 493.3C1357.9 489.6 1369.7 493.3 1371.9 493.3" stroke="#e4884e"/><path d="M380.7 545.4C382.6 542.0 392.6 513.2 397.4 516.6C402.2 520.0 414.8 570.6 421.7 574.4C428.6 578.2 450.3 552.5 456.5 549.3C462.7 546.0 470.0 547.7 474.7 546.6C479.5 545.5 492.8 534.5 497.5 539.9C502.2 545.3 511.0 587.1 514.9 592.8C518.8 598.4 526.0 576.8 530.9 588.3C535.7 599.7 552.0 676.1 556.6 690.9C561.2 705.8 567.9 709.2 570.3 715.7C572.7 722.2 571.6 759.3 577.1 746.8C582.6 734.3 610.8 623.1 617.3 608.4C623.8 593.7 627.5 611.7 632.5 620.7C637.4 629.7 654.6 675.9 659.8 685.2C664.9 694.5 672.9 705.4 676.5 700.5C680.0 695.5 686.9 655.8 690.1 642.6C693.3 629.5 700.2 597.4 703.8 588.1C707.3 578.7 716.1 564.0 720.4 562.5C724.8 561.0 736.5 557.1 740.9 575.0C745.3 592.9 753.3 694.1 758.4 716.1C763.4 738.1 779.0 774.8 784.1 763.9C789.3 753.1 796.7 642.6 802.3 623.2C808.0 603.8 826.6 610.4 832.7 597.6C838.8 584.8 850.4 525.4 854.7 513.5C858.9 501.6 866.7 498.6 869.1 495.7C871.5 492.9 874.0 489.8 875.1 489.2C876.3 488.6 876.8 499.1 878.9 490.6C881.1 482.1 888.5 416.0 893.3 416.4C898.2 416.8 913.9 483.3 920.6 493.9C927.4 504.6 942.8 505.9 951.0 507.8C959.1 509.8 981.4 513.9 990.4 510.6C999.4 507.3 1021.3 489.0 1028.3 479.8C1035.4 470.7 1045.4 426.9 1051.1 432.1C1056.7 437.4 1069.3 517.9 1076.9 524.9C1084.5 531.8 1109.0 499.7 1116.3 492.0C1123.6 484.2 1133.0 462.5 1139.1 458.6C1145.1 454.6 1159.9 455.7 1167.9 458.1C1175.8 460.4 1197.7 473.5 1207.3 479.1C1216.9 484.6 1239.2 504.7 1249.8 505.7C1260.4 506.7 1289.1 484.9 1298.3 487.6C1307.5 490.4 1322.3 527.0 1328.6 529.4C1335.0 531.8 1347.9 522.8 1352.9 508.4C1357.9 494.1 1368.3 402.6 1371.9 406.2C1375.4 409.8 1380.5 530.4 1383.2 539.4C1386.0 548.4 1392.2 489.7 1395.4 483.5C1398.6 477.3 1404.5 484.2 1410.5 486.5C1416.6 488.8 1438.8 498.5 1446.9 503.3C1455.1 508.1 1472.2 531.4 1480.3 527.6C1488.4 523.8 1508.2 477.9 1516.7 470.8C1525.2 463.7 1548.0 470.5 1553.1 466.6C1558.2 462.8 1554.7 437.3 1560.7 437.9C1566.7 438.5 1596.0 462.5 1604.7 471.9C1613.3 481.2 1627.2 515.7 1635.0 518.1C1642.8 520.6 1667.2 496.2 1671.4 493.3" stroke="#7078c4"/><path d="M380.7 552.6C382.6 548.9 392.6 517.4 397.4 520.6C402.2 523.8 414.8 576.7 421.7 580.2C428.6 583.7 450.3 554.4 456.5 550.6C462.7 546.8 470.0 548.4 474.7 547.5C479.5 546.7 492.8 537.8 497.5 543.4C502.2 549.0 511.0 589.5 514.9 595.4C518.8 601.4 526.0 578.2 530.9 594.3C535.7 610.4 552.0 708.7 556.6 733.4C561.2 758.1 567.9 790.4 570.3 805.9C572.7 821.5 571.6 879.5 577.1 866.8C582.6 854.1 610.8 718.9 617.3 697.0C623.8 675.1 627.5 672.3 632.5 679.1C637.4 685.9 654.6 746.0 659.8 755.5C664.9 765.0 672.9 769.7 676.5 760.4C680.0 751.2 686.9 693.8 690.1 676.3C693.3 658.8 700.2 622.3 703.8 610.2C707.3 598.2 716.1 575.7 720.4 573.0C724.8 570.3 736.5 568.7 740.9 587.0C745.3 605.3 753.3 706.0 758.4 729.8C763.4 753.6 779.0 802.7 784.1 790.9C789.3 779.1 796.7 657.0 802.3 628.4C808.0 599.9 826.6 561.7 832.7 545.9C838.8 530.2 852.1 499.4 854.7 493.3" stroke="#5c8a6a"/><path d="M380.7 550.7C382.6 547.1 392.6 517.0 397.4 520.4C402.2 523.7 414.8 575.6 421.7 579.2C428.6 582.7 450.3 554.2 456.5 550.6C462.7 546.9 470.0 548.9 474.7 548.2C479.5 547.6 492.8 539.2 497.5 544.9C502.2 550.5 511.0 590.5 514.9 596.7C518.8 603.0 526.0 582.8 530.9 598.4C535.7 613.9 552.0 709.5 556.6 730.1C561.2 750.6 567.9 761.3 570.3 774.5C572.7 787.7 571.6 853.4 577.1 843.2C582.6 832.9 610.8 708.0 617.3 686.7C623.8 665.4 627.5 654.1 632.5 660.9C637.4 667.8 654.6 735.0 659.8 745.4C664.9 755.8 672.9 760.4 676.5 750.1C680.0 739.8 686.9 674.1 690.1 657.2C693.3 640.4 700.2 615.7 703.8 605.5C707.3 595.4 716.1 572.6 720.4 570.5C724.8 568.3 736.5 567.9 740.9 587.2C745.3 606.5 753.3 711.7 758.4 735.9C763.4 760.2 779.0 807.7 784.1 795.1C789.3 782.5 796.7 650.5 802.3 627.8C808.0 605.1 826.6 613.4 832.7 600.3C838.8 587.2 850.4 527.3 854.7 515.9C858.9 504.4 866.7 504.4 869.1 501.9C871.5 499.4 874.0 494.8 875.1 494.1C876.3 493.4 876.8 504.4 878.9 496.1C881.1 487.8 888.5 422.4 893.3 423.1C898.2 423.8 913.9 491.3 920.6 501.8C927.4 512.3 942.8 511.7 951.0 513.1C959.1 514.5 981.4 517.2 990.4 513.8C999.4 510.4 1021.3 493.3 1028.3 484.1C1035.4 474.9 1045.4 429.7 1051.1 435.0C1056.7 440.4 1069.3 522.3 1076.9 529.6C1084.5 536.9 1109.0 505.6 1116.3 497.6C1123.6 489.5 1133.0 465.1 1139.1 460.8C1145.1 456.5 1159.9 458.3 1167.9 460.6C1175.8 462.9 1197.7 474.8 1207.3 480.3C1216.9 485.9 1239.2 506.6 1249.8 507.8C1260.4 509.0 1289.1 487.7 1298.3 490.4C1307.5 493.1 1322.3 528.7 1328.6 531.0C1335.0 533.3 1347.9 524.6 1352.9 510.2C1357.9 495.8 1368.3 404.0 1371.9 407.6C1375.4 411.2 1380.5 532.1 1383.2 541.2C1386.0 550.2 1392.2 490.7 1395.4 485.2C1398.6 479.6 1408.8 492.3 1410.5 493.3" stroke="#2e2e2e" stroke-width="1.5"/><path d="M380.7 518.4C382.6 516.1 392.6 496.2 397.4 498.6C402.2 501.1 414.8 535.8 421.7 539.1C428.6 542.4 450.3 529.2 456.5 526.9C462.7 524.7 470.0 519.5 474.7 519.6C479.5 519.7 492.8 523.9 497.5 527.8C502.2 531.8 511.0 549.6 514.9 553.7C518.8 557.9 526.0 556.3 530.9 563.4C535.7 570.6 552.0 609.7 556.6 615.3C561.2 621.0 567.9 615.9 570.3 611.8C572.7 607.6 571.6 586.6 577.1 579.8C582.6 572.9 610.8 553.3 617.3 552.9C623.8 552.4 627.5 573.5 632.5 576.0C637.4 578.5 654.6 568.9 659.8 574.1C664.9 579.3 672.9 619.7 676.5 620.9C680.0 622.0 686.9 593.2 690.1 583.9C693.3 574.6 700.2 546.2 703.8 541.3C707.3 536.3 716.1 541.0 720.4 541.6C724.8 542.2 736.5 535.9 740.9 546.6C745.3 557.3 753.3 620.6 758.4 633.0C763.4 645.5 779.0 661.3 784.1 653.2C789.3 645.1 796.7 572.9 802.3 563.4C808.0 553.9 826.6 578.9 832.7 571.8C838.8 564.6 850.4 512.4 854.7 502.0C858.9 491.7 866.7 486.2 869.1 483.3C871.5 480.5 874.0 477.7 875.1 477.2C876.3 476.8 876.8 483.7 878.9 479.3C881.1 474.9 888.5 438.0 893.3 439.6C898.2 441.3 917.5 487.0 920.6 493.3" stroke="#2e2e2e" stroke-width="1.5"/><path d="M380.7 546.8C382.6 543.2 392.6 513.1 397.4 516.5C402.2 519.8 414.8 571.7 421.7 575.4C428.6 579.2 450.3 552.1 456.5 548.5C462.7 544.8 470.0 545.4 474.7 544.5C479.5 543.5 492.8 546.4 497.5 540.5C502.2 534.5 512.9 498.8 514.9 493.3" stroke="#4c44dc"/><path d="M380.7 535.2C382.6 531.1 392.6 505.5 397.4 500.6C402.2 495.7 418.8 494.1 421.7 493.3" stroke="#e4884e"/><path d="M380.7 523.4C382.6 521.0 392.6 499.6 397.4 502.9C402.2 506.2 414.8 548.9 421.7 551.7C428.6 554.5 450.3 532.1 456.5 526.6C462.7 521.0 470.0 506.1 474.7 504.0C479.5 501.8 492.8 506.0 497.5 508.2C502.2 510.4 511.0 521.4 514.9 522.6C518.8 523.9 526.0 508.6 530.9 518.9C535.7 529.1 552.0 605.6 556.6 610.6C561.2 615.5 567.9 571.5 570.3 561.5C572.7 551.6 571.6 531.3 577.1 525.3C582.6 519.2 610.8 503.2 617.3 509.7C623.8 516.3 627.5 572.0 632.5 581.4C637.4 590.8 654.6 585.0 659.8 590.5C664.9 596.1 672.9 626.2 676.5 628.7C680.0 631.2 686.9 619.9 690.1 612.1C693.3 604.3 700.2 569.6 703.8 561.5C707.3 553.4 716.1 544.1 720.4 542.6C724.8 541.2 736.5 536.9 740.9 549.0C745.3 561.1 753.3 632.6 758.4 646.1C763.4 659.5 779.0 675.7 784.1 664.1C789.3 652.5 796.7 558.4 802.3 546.6C808.0 534.8 826.6 568.2 832.7 562.6C838.8 557.0 850.4 508.4 854.7 498.6C858.9 488.9 866.7 482.0 869.1 478.9C871.5 475.8 874.0 472.2 875.1 472.0C876.3 471.8 876.8 485.4 878.9 477.3C881.1 469.2 888.5 402.7 893.3 402.7C898.2 402.7 913.9 466.5 920.6 477.1C927.4 487.7 942.8 491.0 951.0 493.5C959.1 496.0 981.4 501.2 990.4 498.6C999.4 496.0 1021.3 480.2 1028.3 471.1C1035.4 461.9 1045.4 417.4 1051.1 420.2C1056.7 423.0 1069.3 488.0 1076.9 494.9C1084.5 501.8 1109.0 484.3 1116.3 479.4C1123.6 474.5 1133.0 456.7 1139.1 452.9C1145.1 449.0 1159.9 444.2 1167.9 446.1C1175.8 447.9 1197.7 463.1 1207.3 468.8C1216.9 474.5 1239.2 494.5 1249.8 494.9C1260.4 495.4 1289.1 469.0 1298.3 472.6C1307.5 476.1 1322.3 522.3 1328.6 525.3C1335.0 528.2 1347.9 512.3 1352.9 497.9C1357.9 483.5 1368.3 397.7 1371.9 402.0C1375.4 406.3 1380.5 525.8 1383.2 534.8C1386.0 543.8 1392.2 483.9 1395.4 479.0C1398.6 474.2 1408.8 491.6 1410.5 493.3" stroke="#44d4a4"/><path d="M380.7 553.8C382.6 550.0 392.6 517.6 397.4 520.9C402.2 524.3 414.8 578.9 421.7 582.5C428.6 586.1 450.3 555.3 456.5 551.6C462.7 548.0 470.0 550.7 474.7 551.1C479.5 551.5 492.8 548.8 497.5 555.2C502.2 561.7 511.0 599.7 514.9 606.5C518.8 613.3 526.0 595.3 530.9 613.8C535.7 632.2 552.0 738.8 556.6 764.9C561.2 790.9 567.9 821.9 570.3 837.0C572.7 852.1 571.6 906.0 577.1 894.3C582.6 882.5 610.8 760.8 617.3 736.1C623.8 711.5 627.5 680.4 632.5 682.7C637.4 685.1 654.6 747.4 659.8 756.0C664.9 764.6 672.9 766.7 676.5 756.4C680.0 746.1 686.9 684.6 690.1 667.9C693.3 651.3 700.2 624.7 703.8 613.6C707.3 602.4 716.1 575.0 720.4 572.2C724.8 569.4 736.5 569.7 740.9 589.6C745.3 609.4 753.3 716.5 758.4 742.7C763.4 769.0 779.0 827.0 784.1 814.5C789.3 802.0 796.7 660.1 802.3 635.7C808.0 611.2 826.6 618.3 832.7 604.7C838.8 591.2 850.4 530.7 854.7 519.4C858.9 508.2 866.7 510.0 869.1 508.1C871.5 506.2 874.0 503.7 875.1 503.0C876.3 502.3 876.8 510.8 878.9 502.2C881.1 493.5 888.5 427.7 893.3 429.0C898.2 430.2 913.9 505.4 920.6 512.9C927.4 520.4 947.4 495.6 951.0 493.3" stroke="#44d4a4"/><path d="M380.7 545.5C382.6 542.0 392.6 511.8 397.4 515.3C402.2 518.7 414.8 571.4 421.7 575.2C428.6 579.1 450.3 551.6 456.5 548.2C462.7 544.7 470.0 546.8 474.7 545.7C479.5 544.7 492.8 534.4 497.5 539.3C502.2 544.2 511.0 582.2 514.9 588.1C518.8 594.0 526.0 576.3 530.9 590.0C535.7 603.6 552.0 685.9 556.6 705.0C561.2 724.0 567.9 748.6 570.3 753.0C572.7 757.4 571.6 757.7 577.1 743.0C582.6 728.4 610.8 639.2 617.3 627.4C623.8 615.6 627.5 632.6 632.5 642.0C637.4 651.4 654.6 697.7 659.8 708.0C664.9 718.3 672.9 737.3 676.5 730.3C680.0 723.2 686.9 663.0 690.1 647.4C693.3 631.9 700.2 606.8 703.8 596.9C707.3 586.9 716.1 564.7 720.4 562.2C724.8 559.6 736.5 557.0 740.9 575.2C745.3 593.4 753.3 696.6 758.4 718.2C763.4 739.7 779.0 771.4 784.1 760.0C789.3 748.5 796.7 638.8 802.3 619.8C808.0 600.8 826.6 609.3 832.7 596.7C838.8 584.1 850.4 523.3 854.7 511.7C858.9 500.1 866.7 499.6 869.1 497.1C871.5 494.6 874.0 490.9 875.1 490.4C876.3 489.8 876.8 501.0 878.9 492.4C881.1 483.9 888.5 416.6 893.3 416.8C898.2 417.1 913.9 484.1 920.6 494.7C927.4 505.3 942.8 506.0 951.0 507.8C959.1 509.6 981.4 513.7 990.4 510.4C999.4 507.2 1021.3 489.1 1028.3 480.0C1035.4 470.8 1045.4 426.7 1051.1 431.9C1056.7 437.1 1069.3 517.7 1076.9 524.7C1084.5 531.7 1109.0 499.7 1116.3 492.0C1123.6 484.4 1133.0 462.9 1139.1 458.9C1145.1 454.9 1159.9 455.6 1167.9 457.9C1175.8 460.3 1197.7 473.6 1207.3 479.1C1216.9 484.7 1239.2 504.6 1249.8 505.6C1260.4 506.6 1289.1 484.6 1298.3 487.4C1307.5 490.1 1322.3 526.7 1328.6 529.1C1335.0 531.6 1347.9 516.3 1352.9 508.4C1357.9 500.6 1368.3 463.4 1371.9 461.7C1375.4 459.9 1381.9 489.6 1383.2 493.3" stroke="#8c2a1a"/><path d="M380.7 559.7C382.6 555.7 392.6 522.2 397.4 525.1C402.2 527.9 414.8 580.5 421.7 583.8C428.6 587.2 450.3 557.3 456.5 553.5C462.7 549.8 470.0 551.7 474.7 551.6C479.5 551.5 492.8 546.4 497.5 552.8C502.2 559.2 511.0 599.8 514.9 606.3C518.8 612.8 526.0 590.5 530.9 608.4C535.7 626.4 552.0 735.1 556.6 760.5C561.2 786.0 567.9 814.3 570.3 826.5C572.7 838.8 571.6 878.1 577.1 865.3C582.6 852.6 610.8 739.9 617.3 717.1C623.8 694.3 627.5 666.1 632.5 669.9C637.4 673.8 654.6 739.7 659.8 749.7C664.9 759.7 672.9 764.5 676.5 755.7C680.0 746.8 686.9 690.5 690.1 673.8C693.3 657.1 700.2 624.0 703.8 612.4C707.3 600.7 716.1 576.6 720.4 574.2C724.8 571.8 736.5 571.5 740.9 591.8C745.3 612.1 753.3 721.4 758.4 748.1C763.4 774.8 779.0 833.5 784.1 820.6C789.3 807.6 796.7 661.7 802.3 636.9C808.0 612.1 826.6 621.6 832.7 607.9C838.8 594.2 850.4 531.4 854.7 519.8C858.9 508.1 866.7 510.1 869.1 508.1C871.5 506.0 874.0 502.8 875.1 502.2C876.3 501.5 876.8 510.8 878.9 502.4C881.1 494.0 888.5 426.4 893.3 430.1C898.2 433.9 913.9 523.4 920.6 534.9C927.4 546.5 942.8 530.1 951.0 529.2C959.1 528.4 981.4 532.6 990.4 527.8C999.4 523.1 1021.3 499.1 1028.3 488.7C1035.4 478.3 1045.4 433.2 1051.1 438.6C1056.7 444.1 1069.3 527.5 1076.9 535.3C1084.5 543.1 1109.0 513.4 1116.3 505.6C1123.6 497.7 1133.0 472.5 1139.1 468.4C1145.1 464.2 1159.9 467.3 1167.9 470.2C1175.8 473.0 1197.7 487.6 1207.3 492.9C1216.9 498.1 1239.2 515.5 1249.8 515.5C1260.4 515.6 1292.6 495.9 1298.3 493.3" stroke="#2e2e2e" stroke-width="1.5"/><path d="M380.7 533.0C382.6 530.3 392.6 505.1 397.4 509.5C402.2 513.9 414.8 566.8 421.7 571.0C428.6 575.3 450.3 549.5 456.5 545.9C462.7 542.3 470.0 541.4 474.7 540.0C479.5 538.6 492.8 530.4 497.5 534.2C502.2 538.0 511.0 567.9 514.9 572.7C518.8 577.4 526.0 566.8 530.9 574.8C535.7 582.9 552.0 632.1 556.6 641.8C561.2 651.4 567.9 660.9 570.3 657.4C572.7 654.0 571.6 623.3 577.1 612.2C582.6 601.2 610.8 564.1 617.3 562.9C623.8 561.8 627.5 594.2 632.5 602.5C637.4 610.8 654.6 624.5 659.8 633.7C664.9 643.0 672.9 682.5 676.5 681.8C680.0 681.0 686.9 639.2 690.1 627.0C693.3 614.8 700.2 585.9 703.8 576.9C707.3 568.0 716.1 551.8 720.4 550.2C724.8 548.6 736.5 547.6 740.9 563.3C745.3 578.9 753.3 667.9 758.4 684.6C763.4 701.4 779.0 715.7 784.1 707.1C789.3 698.5 796.7 624.3 802.3 610.8C808.0 597.2 826.6 603.1 832.7 590.9C838.8 578.7 850.4 518.7 854.7 506.5C858.9 494.3 866.7 489.5 869.1 486.2C871.5 482.8 874.0 478.1 875.1 477.8C876.3 477.5 876.8 491.1 878.9 483.2C881.1 475.4 888.5 410.2 893.3 410.6C898.2 411.1 913.9 476.3 920.6 487.1C927.4 498.0 942.8 501.5 951.0 503.8C959.1 506.1 981.4 510.5 990.4 507.2C999.4 503.9 1021.3 484.7 1028.3 475.6C1035.4 466.4 1045.4 423.7 1051.1 428.8C1056.7 434.0 1069.3 513.0 1076.9 519.7C1084.5 526.4 1109.0 493.6 1116.3 486.2C1123.6 478.8 1133.0 460.1 1139.1 456.6C1145.1 453.0 1159.9 453.2 1167.9 455.7C1175.8 458.2 1197.7 472.4 1207.3 477.9C1216.9 483.5 1239.2 501.4 1249.8 503.2C1260.4 505.0 1292.6 494.5 1298.3 493.3" stroke="#44d4a4"/><path d="M380.7 540.0C382.6 536.9 392.6 509.6 397.4 513.5C402.2 517.4 414.8 569.4 421.7 573.5C428.6 577.7 450.3 552.3 456.5 549.0C462.7 545.7 470.0 546.5 474.7 545.4C479.5 544.4 492.8 534.6 497.5 539.7C502.2 544.9 511.0 583.4 514.9 589.6C518.8 595.8 526.0 579.3 530.9 592.9C535.7 606.5 552.0 688.3 556.6 706.2C561.2 724.1 567.9 741.3 570.3 746.5C572.7 751.6 571.6 766.2 577.1 750.3C582.6 734.5 610.8 625.8 617.3 610.7C623.8 595.6 627.5 612.3 632.5 621.1C637.4 629.8 654.6 676.2 659.8 685.6C664.9 695.0 672.9 711.8 676.5 701.7C680.0 691.6 686.9 623.3 690.1 599.0C693.3 574.7 702.2 505.6 703.8 493.3" stroke="#7078c4"/><path d="M380.7 542.3C382.6 539.1 392.6 510.8 397.4 514.7C402.2 518.6 414.8 571.8 421.7 575.8C428.6 579.8 450.3 552.6 456.5 549.1C462.7 545.6 470.0 546.5 474.7 545.8C479.5 545.1 492.8 537.7 497.5 543.0C502.2 548.3 511.0 585.6 514.9 591.2C518.8 596.8 526.0 578.3 530.9 591.2C535.7 604.2 552.0 686.6 556.6 702.2C561.2 717.8 567.9 719.9 570.3 724.6C572.7 729.4 571.6 757.9 577.1 743.0C582.6 728.2 610.8 612.3 617.3 597.2C623.8 582.1 627.5 605.2 632.5 613.8C637.4 622.3 654.6 660.7 659.8 670.4C664.9 680.1 672.9 701.0 676.5 697.0C680.0 693.1 686.9 649.3 690.1 636.5C693.3 623.6 700.2 596.2 703.8 587.0C707.3 577.7 716.1 558.8 720.4 557.1C724.8 555.4 736.5 555.0 740.9 572.4C745.3 589.9 753.3 686.1 758.4 706.8C763.4 727.4 779.0 759.5 784.1 749.8C789.3 740.0 796.7 641.1 802.3 623.3C808.0 605.5 826.6 610.2 832.7 597.4C838.8 584.6 850.4 525.2 854.7 513.5C858.9 501.8 866.7 499.6 869.1 496.9C871.5 494.2 874.0 491.5 875.1 490.7C876.3 489.9 876.8 498.9 878.9 490.3C881.1 481.7 888.5 416.7 893.3 417.2C898.2 417.7 913.9 484.0 920.6 494.6C927.4 505.3 942.8 506.5 951.0 508.3C959.1 510.1 981.4 513.4 990.4 510.1C999.4 506.9 1021.3 489.3 1028.3 480.2C1035.4 471.0 1045.4 426.4 1051.1 431.6C1056.7 436.8 1069.3 517.5 1076.9 524.5C1084.5 531.6 1109.0 499.7 1116.3 492.0C1123.6 484.3 1133.0 462.2 1139.1 458.3C1145.1 454.4 1159.9 455.8 1167.9 458.2C1175.8 460.7 1197.7 473.7 1207.3 479.2C1216.9 484.8 1239.2 504.8 1249.8 505.8C1260.4 506.8 1289.1 485.2 1298.3 487.9C1307.5 490.7 1322.3 526.9 1328.6 529.3C1335.0 531.7 1347.9 522.8 1352.9 508.4C1357.9 494.0 1368.3 402.2 1371.9 405.8C1375.4 409.4 1380.5 530.2 1383.2 539.3C1386.0 548.3 1392.2 489.7 1395.4 483.5C1398.6 477.4 1404.5 485.4 1410.5 486.5C1416.6 487.7 1442.7 492.5 1446.9 493.3" stroke="#4c44dc"/><path d="M380.7 539.6C382.6 536.6 392.6 509.4 397.4 513.5C402.2 517.6 414.8 570.8 421.7 574.8C428.6 578.9 450.3 551.8 456.5 548.2C462.7 544.6 470.0 544.9 474.7 543.9C479.5 542.9 492.8 534.8 497.5 539.8C502.2 544.8 511.0 581.3 514.9 586.8C518.8 592.2 526.0 574.0 530.9 586.5C535.7 599.0 552.0 676.6 556.6 694.0C561.2 711.3 567.9 726.4 570.3 735.3C572.7 744.3 571.6 783.7 577.1 771.0C582.6 758.3 610.8 642.7 617.3 626.6C623.8 610.5 627.5 624.5 632.5 632.9C637.4 641.3 654.6 689.2 659.8 698.5C664.9 707.7 672.9 736.1 676.5 712.2C680.0 688.2 688.5 518.8 690.1 493.3" stroke="#4c44dc"/><path d="M380.7 551.6C382.6 548.0 392.6 516.7 397.4 520.2C402.2 523.7 414.8 578.0 421.7 581.6C428.6 585.2 450.3 554.6 456.5 550.9C462.7 547.3 470.0 550.7 474.7 550.1C479.5 549.6 492.8 540.5 497.5 546.6C502.2 552.6 511.0 594.8 514.9 601.9C518.8 609.0 526.0 588.8 530.9 607.3C535.7 625.8 552.0 736.2 556.6 760.6C561.2 785.0 567.9 805.2 570.3 816.4C572.7 827.6 571.6 866.5 577.1 856.4C582.6 846.4 610.8 751.7 617.3 730.3C623.8 708.9 627.5 671.1 632.5 673.0C637.4 674.9 654.6 736.6 659.8 746.5C664.9 756.5 672.9 767.4 676.5 758.1C680.0 748.8 686.9 684.5 690.1 666.6C693.3 648.6 700.2 615.1 703.8 604.1C707.3 593.2 716.1 575.2 720.4 572.9C724.8 570.7 736.5 565.7 740.9 584.8C745.3 604.0 753.3 712.5 758.4 737.0C763.4 761.4 779.0 806.4 784.1 794.2C789.3 781.9 796.7 654.5 802.3 632.0C808.0 609.6 826.6 615.1 832.7 601.9C838.8 588.7 850.4 531.6 854.7 519.0C858.9 506.3 867.4 496.3 869.1 493.3" stroke="#2e2e2e" stroke-width="1.5"/><path d="M380.7 559.9C382.6 556.0 392.6 523.5 397.4 526.3C402.2 529.1 414.8 580.7 421.7 583.9C428.6 587.1 450.3 557.3 456.5 553.5C462.7 549.8 470.0 552.1 474.7 551.9C479.5 551.8 492.8 546.1 497.5 552.4C502.2 558.7 511.0 599.1 514.9 605.7C518.8 612.4 526.0 591.5 530.9 609.4C535.7 627.4 552.0 737.1 556.6 759.8C561.2 782.5 567.9 794.5 570.3 804.1C572.7 813.6 571.6 851.0 577.1 841.6C582.6 832.3 610.8 743.8 617.3 724.1C623.8 704.4 627.5 671.1 632.5 672.9C637.4 674.7 654.6 729.1 659.8 739.6C664.9 750.2 672.9 770.5 676.5 763.5C680.0 756.6 686.9 697.1 690.1 679.9C693.3 662.6 700.2 628.2 703.8 615.9C707.3 603.6 716.1 577.1 720.4 574.3C724.8 571.5 736.5 571.6 740.9 591.9C745.3 612.2 753.3 721.4 758.4 748.1C763.4 774.8 779.0 833.5 784.1 820.6C789.3 807.6 796.7 662.1 802.3 637.2C808.0 612.3 826.6 620.8 832.7 607.2C838.8 593.5 850.4 531.3 854.7 520.0C858.9 508.6 866.7 512.5 869.1 510.3C871.5 508.1 874.0 502.3 875.1 501.2C876.3 500.1 876.8 508.3 878.9 500.6C881.1 492.9 888.5 429.8 893.3 435.1C898.2 440.4 913.9 533.9 920.6 545.9C927.4 557.8 942.8 540.0 951.0 537.9C959.1 535.7 981.4 533.1 990.4 527.7C999.4 522.3 1021.3 502.0 1028.3 491.7C1035.4 481.4 1045.4 434.1 1051.1 439.2C1056.7 444.4 1069.3 528.1 1076.9 535.8C1084.5 543.6 1109.0 511.1 1116.3 505.7C1123.6 500.3 1133.0 493.0 1139.1 489.6C1145.1 486.2 1159.9 475.9 1167.9 476.7C1175.8 477.6 1197.7 491.6 1207.3 496.8C1216.9 502.0 1239.2 519.2 1249.8 521.2C1260.4 523.3 1289.1 512.5 1298.3 514.2C1307.5 515.8 1322.3 535.6 1328.6 535.3C1335.0 535.1 1347.9 527.0 1352.9 512.4C1357.9 497.8 1368.3 406.7 1371.9 410.4C1375.4 414.1 1380.5 534.9 1383.2 544.1C1386.0 553.3 1392.2 494.9 1395.4 489.2C1398.6 483.6 1404.5 492.6 1410.5 496.0C1416.6 499.4 1438.8 514.1 1446.9 518.4C1455.1 522.8 1472.2 536.0 1480.3 533.1C1488.4 530.1 1512.5 497.9 1516.7 493.3" stroke="#e4884e"/><path d="M380.7 557.3C382.6 553.5 392.6 521.8 397.4 524.7C402.2 527.6 414.8 579.0 421.7 582.1C428.6 585.3 450.3 555.3 456.5 551.7C462.7 548.1 470.0 551.7 474.7 551.3C479.5 550.8 492.8 541.6 497.5 547.9C502.2 554.1 511.0 598.0 514.9 604.8C518.8 611.6 526.0 588.4 530.9 606.1C535.7 623.8 552.0 732.4 556.6 756.6C561.2 780.7 567.9 800.6 570.3 813.3C572.7 825.9 571.6 876.0 577.1 865.0C582.6 854.0 610.8 740.4 617.3 719.0C623.8 697.5 627.5 676.9 632.5 681.3C637.4 685.7 654.6 747.1 659.8 756.8C664.9 766.5 672.9 773.7 676.5 764.7C680.0 755.7 686.9 697.4 690.1 679.9C693.3 662.3 700.2 627.2 703.8 614.7C707.3 602.2 716.1 575.2 720.4 572.3C724.8 569.5 736.5 569.4 740.9 589.9C745.3 610.4 753.3 721.5 758.4 748.1C763.4 774.6 779.0 830.5 784.1 817.4C789.3 804.2 796.7 660.3 802.3 635.5C808.0 610.7 826.6 618.2 832.7 604.6C838.8 591.0 850.4 530.4 854.7 519.0C858.9 507.5 866.7 508.4 869.1 506.4C871.5 504.4 874.0 502.1 875.1 501.6C876.3 501.0 876.8 510.0 878.9 501.9C881.1 493.7 888.5 430.2 893.3 431.7C898.2 433.2 913.9 505.1 920.6 515.0C927.4 525.0 942.8 516.8 951.0 517.1C959.1 517.3 981.4 520.2 990.4 517.0C999.4 513.7 1021.3 498.3 1028.3 489.1C1035.4 480.0 1045.4 433.3 1051.1 438.5C1056.7 443.7 1069.3 525.9 1076.9 533.7C1084.5 541.5 1109.0 513.3 1116.3 505.0C1123.6 496.7 1133.0 466.7 1139.1 462.4C1145.1 458.0 1159.9 465.7 1167.9 467.9C1175.8 470.2 1197.7 476.6 1207.3 481.6C1216.9 486.5 1239.2 509.2 1249.8 510.5C1260.4 511.9 1289.1 490.2 1298.3 493.0C1307.5 495.7 1322.3 531.9 1328.6 534.2C1335.0 536.5 1347.9 526.9 1352.9 512.4C1357.9 497.8 1368.3 405.6 1371.9 409.1C1375.4 412.7 1380.5 533.9 1383.2 542.9C1386.0 552.0 1392.2 492.6 1395.4 486.9C1398.6 481.2 1404.5 490.4 1410.5 493.7C1416.6 497.0 1438.8 510.6 1446.9 515.1C1455.1 519.7 1472.2 536.9 1480.3 532.4C1488.4 528.0 1508.2 484.2 1516.7 477.2C1525.2 470.3 1548.0 474.5 1553.1 473.0C1558.2 471.4 1554.7 463.5 1560.7 464.0C1566.7 464.5 1596.0 470.2 1604.7 477.3C1613.3 484.5 1627.2 524.0 1635.0 525.3C1642.8 526.5 1661.9 492.5 1671.4 488.1C1681.0 483.8 1706.7 484.2 1716.9 487.9C1727.2 491.6 1751.2 519.2 1759.4 519.8C1767.5 520.5 1783.5 496.4 1786.7 493.3" stroke="#5c8a6a"/><path d="M380.7 526.0C382.6 523.3 392.6 498.7 397.4 502.6C402.2 506.4 414.8 554.4 421.7 559.2C428.6 564.1 450.3 550.8 456.5 544.3C462.7 537.9 470.0 508.1 474.7 504.0C479.5 499.8 492.8 504.9 497.5 509.1C502.2 513.2 511.0 538.6 514.9 539.7C518.8 540.9 526.0 510.6 530.9 518.9C535.7 527.1 552.0 602.7 556.6 610.6C561.2 618.4 567.9 589.4 570.3 586.5C572.7 583.5 571.6 589.2 577.1 585.3C582.6 581.5 610.8 553.6 617.3 553.5C623.8 553.4 627.5 577.7 632.5 584.5C637.4 591.2 654.6 601.5 659.8 611.2C664.9 621.0 672.9 667.5 676.5 668.1C680.0 668.8 686.9 629.0 690.1 616.5C693.3 604.1 700.2 569.5 703.8 561.4C707.3 553.3 716.1 547.9 720.4 547.0C724.8 546.1 736.5 541.8 740.9 553.9C745.3 566.0 753.3 638.7 758.4 650.9C763.4 663.1 779.0 663.8 784.1 658.4C789.3 653.1 796.7 614.8 802.3 604.9C808.0 594.9 826.6 585.3 832.7 573.1C838.8 560.8 850.4 510.5 854.7 499.7C858.9 488.9 866.7 483.7 869.1 480.6C871.5 477.4 874.0 472.8 875.1 472.7C876.3 472.6 876.8 487.6 878.9 479.6C881.1 471.7 888.5 404.2 893.3 404.3C898.2 404.4 913.9 469.7 920.6 480.7C927.4 491.6 942.8 495.5 951.0 498.2C959.1 500.8 981.4 506.4 990.4 503.4C999.4 500.3 1021.3 481.2 1028.3 472.1C1035.4 463.0 1045.4 420.4 1051.1 425.3C1056.7 430.3 1069.3 507.9 1076.9 514.4C1084.5 520.8 1109.0 487.8 1116.3 480.8C1123.6 473.8 1133.0 457.7 1139.1 454.6C1145.1 451.5 1159.9 451.5 1167.9 454.0C1175.8 456.6 1197.7 471.1 1207.3 476.4C1216.9 481.7 1239.2 499.1 1249.8 499.7C1260.4 500.3 1289.1 478.5 1298.3 481.5C1307.5 484.5 1322.3 522.5 1328.6 525.3C1335.0 528.1 1347.9 520.0 1352.9 505.7C1357.9 491.4 1368.3 399.2 1371.9 402.7C1375.4 406.3 1380.5 527.1 1383.2 536.1C1386.0 545.1 1392.2 485.9 1395.4 479.8C1398.6 473.7 1404.5 482.0 1410.5 483.6C1416.6 485.2 1438.8 488.8 1446.9 493.4C1455.1 497.9 1472.2 524.1 1480.3 522.9C1488.4 521.6 1508.2 486.2 1516.7 482.8C1525.2 479.3 1548.9 492.1 1553.1 493.3" stroke="#8c2a1a"/><path d="M380.7 526.5C382.6 523.8 392.6 498.6 397.4 503.2C402.2 507.8 414.8 562.5 421.7 566.0C428.6 569.4 450.3 536.7 456.5 533.1C462.7 529.5 470.0 535.4 474.7 535.2C479.5 535.1 492.8 529.2 497.5 531.4C502.2 533.6 511.0 555.4 514.9 554.0C518.8 552.5 526.0 511.6 530.9 518.9C535.7 526.2 552.0 611.7 556.6 616.7C561.2 621.7 567.9 572.2 570.3 561.5C572.7 550.9 571.6 532.0 577.1 525.3C582.6 518.6 610.8 498.1 617.3 504.0C623.8 509.8 627.5 566.6 632.5 575.1C637.4 583.7 654.6 573.6 659.8 577.3C664.9 580.9 672.9 605.0 676.5 606.3C680.0 607.6 686.9 595.2 690.1 588.4C693.3 581.6 700.2 553.2 703.8 548.1C707.3 543.0 716.1 544.2 720.4 544.6C724.8 544.9 736.5 538.5 740.9 551.0C745.3 563.5 753.3 638.6 758.4 651.6C763.4 664.6 779.0 669.4 784.1 662.2C789.3 655.0 796.7 598.8 802.3 590.0C808.0 581.1 826.6 596.9 832.7 586.5C838.8 576.1 850.4 513.3 854.7 501.1C858.9 488.8 866.7 484.5 869.1 481.3C871.5 478.1 874.0 473.7 875.1 473.3C876.3 472.9 876.8 485.8 878.9 477.7C881.1 469.5 888.5 403.1 893.3 403.3C898.2 403.5 913.9 468.5 920.6 479.5C927.4 490.4 942.8 494.6 951.0 497.1C959.1 499.6 981.4 504.2 990.4 501.2C999.4 498.3 1021.3 480.7 1028.3 471.7C1035.4 462.7 1045.4 420.4 1051.1 424.1C1056.7 427.8 1069.3 496.9 1076.9 503.4C1084.5 509.9 1109.0 485.2 1116.3 479.4C1123.6 473.6 1133.0 457.4 1139.1 453.8C1145.1 450.3 1159.9 447.1 1167.9 449.0C1175.8 451.0 1197.7 464.9 1207.3 470.7C1216.9 476.5 1239.2 497.6 1249.8 498.5C1260.4 499.4 1289.1 479.2 1298.3 478.6C1307.5 478.0 1325.1 491.6 1328.6 493.3" stroke="#4c44dc"/><path d="M380.7 550.2C382.6 546.6 392.6 516.3 397.4 519.6C402.2 523.0 414.8 575.3 421.7 578.9C428.6 582.5 450.3 554.2 456.5 550.6C462.7 546.9 470.0 548.1 474.7 547.5C479.5 546.9 492.8 540.0 497.5 545.3C502.2 550.5 511.0 586.8 514.9 592.5C518.8 598.1 526.0 579.5 530.9 593.7C535.7 608.0 552.0 697.5 556.6 714.9C561.2 732.3 567.9 736.1 570.3 742.8C572.7 749.5 571.6 786.5 577.1 772.5C582.6 758.5 610.8 639.9 617.3 622.9C623.8 605.9 627.5 616.4 632.5 626.5C637.4 636.6 654.6 698.1 659.8 709.4C664.9 720.6 672.9 728.3 676.5 722.7C680.0 717.0 686.9 675.7 690.1 661.1C693.3 646.4 700.2 608.3 703.8 597.3C707.3 586.4 716.1 568.7 720.4 567.1C724.8 565.5 736.5 564.7 740.9 583.3C745.3 602.0 753.3 702.0 758.4 727.0C763.4 752.0 779.0 808.6 784.1 797.6C789.3 786.5 796.7 654.8 802.3 632.1C808.0 609.4 826.6 616.4 832.7 602.8C838.8 589.2 850.4 527.7 854.7 515.7C858.9 503.7 866.7 502.4 869.1 499.9C871.5 497.4 874.0 494.8 875.1 494.2C876.3 493.6 876.8 503.0 878.9 494.7C881.1 486.4 888.5 422.0 893.3 422.9C898.2 423.7 913.9 491.6 920.6 502.1C927.4 512.6 942.8 511.6 951.0 512.9C959.1 514.2 981.4 516.9 990.4 513.5C999.4 510.2 1021.3 488.5 1028.3 484.1C1035.4 479.7 1045.4 474.6 1051.1 475.7C1056.7 476.8 1073.9 491.2 1076.9 493.3" stroke="#2e2e2e" stroke-width="1.5"/><path d="M380.7 549.1C382.6 545.5 392.6 514.6 397.4 518.1C402.2 521.5 414.8 574.6 421.7 578.4C428.6 582.1 450.3 553.7 456.5 550.1C462.7 546.5 470.0 548.0 474.7 547.4C479.5 546.9 492.8 540.0 497.5 545.4C502.2 550.8 511.0 588.1 514.9 593.8C518.8 599.5 526.0 581.4 530.9 594.1C535.7 606.8 552.0 686.7 556.6 702.6C561.2 718.6 567.9 727.0 570.3 731.0C572.7 734.9 571.6 750.3 577.1 736.6C582.6 722.8 610.8 626.3 617.3 613.0C623.8 599.7 627.5 611.5 632.5 622.2C637.4 632.8 654.6 693.4 659.8 704.1C664.9 714.9 672.9 720.2 676.5 714.1C680.0 708.0 686.9 666.4 690.1 652.0C693.3 637.5 700.2 600.4 703.8 590.3C707.3 580.2 716.1 566.5 720.4 565.4C724.8 564.3 736.5 562.0 740.9 580.7C745.3 599.4 753.3 701.4 758.4 725.4C763.4 749.5 779.0 798.1 784.1 786.8C789.3 775.5 796.7 650.2 802.3 628.4C808.0 606.6 826.6 613.5 832.7 600.1C838.8 586.6 850.4 525.1 854.7 513.2C858.9 501.3 866.7 500.9 869.1 498.0C871.5 495.1 874.0 489.2 875.1 488.6C876.3 488.1 876.8 500.8 878.9 493.1C881.1 485.5 888.5 422.0 893.3 423.0C898.2 424.0 913.9 491.1 920.6 501.6C927.4 512.2 942.8 511.8 951.0 513.2C959.1 514.7 981.4 517.6 990.4 514.2C999.4 510.7 1021.3 492.7 1028.3 483.4C1035.4 474.1 1045.4 429.4 1051.1 434.7C1056.7 440.1 1069.3 522.1 1076.9 529.5C1084.5 536.8 1109.0 505.7 1116.3 497.7C1123.6 489.6 1133.0 464.9 1139.1 460.6C1145.1 456.2 1159.9 458.1 1167.9 460.4C1175.8 462.7 1197.7 474.7 1207.3 480.3C1216.9 485.8 1239.2 506.8 1249.8 507.9C1260.4 509.0 1289.1 487.3 1298.3 490.0C1307.5 492.7 1322.3 528.6 1328.6 530.9C1335.0 533.3 1347.9 524.4 1352.9 510.0C1357.9 495.5 1368.3 403.6 1371.9 407.2C1375.4 410.8 1380.5 531.0 1383.2 541.0C1386.0 551.1 1394.0 498.9 1395.4 493.3" stroke="#5c8a6a"/><path d="M380.7 541.6C382.6 538.6 392.6 511.9 397.4 516.0C402.2 520.1 414.8 572.8 421.7 576.6C428.6 580.4 450.3 552.4 456.5 548.9C462.7 545.3 470.0 546.9 474.7 546.2C479.5 545.4 492.8 537.3 497.5 542.6C502.2 547.9 511.0 585.8 514.9 591.9C518.8 597.9 526.0 579.9 530.9 594.2C535.7 608.4 552.0 695.2 556.6 714.2C561.2 733.3 567.9 748.7 570.3 757.3C572.7 765.9 571.6 801.4 577.1 788.1C582.6 774.9 610.8 661.4 617.3 643.8C623.8 626.1 627.5 630.3 632.5 636.9C637.4 643.5 654.6 691.7 659.8 700.2C664.9 708.8 672.9 716.5 676.5 709.9C680.0 703.3 686.9 657.9 690.1 643.7C693.3 629.5 700.2 597.9 703.8 588.1C707.3 578.2 716.1 561.1 720.4 559.3C724.8 557.5 736.5 555.5 740.9 572.5C745.3 589.5 753.3 683.2 758.4 705.1C763.4 726.9 779.0 769.2 784.1 759.8C789.3 750.5 796.7 643.8 802.3 625.0C808.0 606.2 826.6 611.5 832.7 598.5C838.8 585.6 850.4 525.6 854.7 514.1C858.9 502.6 866.7 502.3 869.1 499.8C871.5 497.4 874.0 493.7 875.1 493.0C876.3 492.3 876.8 502.0 878.9 494.0C881.1 485.9 888.5 422.9 893.3 423.7C898.2 424.5 913.9 490.5 920.6 500.8C927.4 511.2 942.8 511.0 951.0 512.5C959.1 514.0 981.4 517.3 990.4 513.9C999.4 510.5 1021.3 492.8 1028.3 483.6C1035.4 474.4 1045.4 429.8 1051.1 435.1C1056.7 440.4 1069.3 521.5 1076.9 528.9C1084.5 536.4 1109.0 506.8 1116.3 498.8C1123.6 490.9 1133.0 465.2 1139.1 460.7C1145.1 456.2 1159.9 458.0 1167.9 460.3C1175.8 462.6 1197.7 474.7 1207.3 480.3C1216.9 485.8 1239.2 506.7 1249.8 507.9C1260.4 509.1 1289.1 487.7 1298.3 490.4C1307.5 493.1 1322.3 529.1 1328.6 531.4C1335.0 533.7 1347.9 524.4 1352.9 510.0C1357.9 495.5 1368.3 404.0 1371.9 407.6C1375.4 411.3 1380.5 532.3 1383.2 541.4C1386.0 550.4 1392.2 491.3 1395.4 485.1C1398.6 478.8 1404.5 485.0 1410.5 487.8C1416.6 490.6 1438.8 504.1 1446.9 509.0C1455.1 513.9 1472.2 533.9 1480.3 529.8C1488.4 525.7 1508.2 480.8 1516.7 473.8C1525.2 466.7 1548.0 467.1 1553.1 469.4C1558.2 471.7 1559.8 490.5 1560.7 493.3" stroke="#2e2e2e" stroke-width="1.5"/><path d="" stroke="#2e2e2e" stroke-width="1.5"/><path d="M380.7 540.0C382.6 536.7 392.6 508.0 397.4 511.7C402.2 515.4 414.8 567.6 421.7 571.7C428.6 575.8 450.3 550.2 456.5 546.8C462.7 543.5 470.0 544.3 474.7 543.0C479.5 541.8 492.8 531.8 497.5 536.4C502.2 540.9 511.0 577.2 514.9 581.9C518.8 586.6 526.0 566.8 530.9 576.7C535.7 586.7 552.0 655.0 556.6 667.1C561.2 679.2 567.9 683.1 570.3 680.2C572.7 677.3 571.6 654.3 577.1 642.0C582.6 629.8 610.8 580.6 617.3 575.4C623.8 570.3 627.5 601.1 632.5 598.1C637.4 595.0 654.6 561.8 659.8 549.5C664.9 537.3 674.5 499.9 676.5 493.3" stroke="#2e2e2e" stroke-width="1.5"/><path d="M380.7 535.5C382.6 532.6 392.6 509.4 397.4 510.2C402.2 511.0 414.8 544.3 421.7 542.3C428.6 540.4 452.5 499.0 456.5 493.3" stroke="#8c2a1a"/><path d="M380.7 546.7C382.6 543.4 392.6 514.6 397.4 518.2C402.2 521.9 414.8 574.5 421.7 578.3C428.6 582.0 450.3 553.8 456.5 550.1C462.7 546.5 470.0 548.1 474.7 547.3C479.5 546.5 492.8 537.5 497.5 543.4C502.2 549.3 511.0 591.6 514.9 598.2C518.8 604.8 526.0 584.7 530.9 600.1C535.7 615.6 552.0 706.3 556.6 730.7C561.2 755.1 567.9 800.1 570.3 809.4C572.7 818.8 571.6 837.0 577.1 810.8C582.6 784.6 610.8 621.7 617.3 584.6C623.8 547.6 630.7 504.0 632.5 493.3" stroke="#e4884e"/><path d="M380.7 522.9C382.6 520.3 392.6 498.1 397.4 500.4C402.2 502.8 414.8 537.9 421.7 543.0C428.6 548.1 450.3 548.7 456.5 544.1C462.7 539.6 470.0 508.1 474.7 504.0C479.5 499.8 492.8 506.0 497.5 508.2C502.2 510.4 511.0 521.4 514.9 522.6C518.8 523.9 526.0 508.6 530.9 518.9C535.7 529.1 552.0 605.6 556.6 610.6C561.2 615.5 567.9 571.5 570.3 561.5C572.7 551.6 571.6 532.0 577.1 525.3C582.6 518.6 610.8 498.4 617.3 504.0C623.8 509.6 627.5 565.6 632.5 573.2C637.4 580.9 654.6 563.6 659.8 569.5C664.9 575.5 672.9 619.3 676.5 624.3C680.0 629.3 686.9 619.7 690.1 612.4C693.3 605.0 700.2 569.4 703.8 561.4C707.3 553.3 716.1 544.6 720.4 543.2C724.8 541.7 736.5 537.1 740.9 549.0C745.3 560.8 753.3 631.0 758.4 644.5C763.4 657.9 779.0 669.8 784.1 664.5C789.3 659.2 796.7 610.6 802.3 599.3C808.0 587.9 826.6 578.9 832.7 567.2C838.8 555.4 850.4 508.9 854.7 498.6C858.9 488.3 866.7 482.0 869.1 478.9C871.5 475.8 874.0 472.2 875.1 472.0C876.3 471.8 876.8 485.4 878.9 477.3C881.1 469.2 888.5 402.8 893.3 402.8C898.2 402.8 913.9 466.9 920.6 477.6C927.4 488.4 942.8 492.4 951.0 495.0C959.1 497.6 981.4 502.7 990.4 499.9C999.4 497.1 1021.3 480.3 1028.3 471.1C1035.4 461.8 1045.4 417.6 1051.1 420.8C1056.7 424.1 1069.3 492.1 1076.9 498.9C1084.5 505.7 1109.0 483.8 1116.3 479.2C1123.6 474.6 1133.0 457.7 1139.1 459.3C1145.1 461.0 1164.5 489.3 1167.9 493.3" stroke="#e4884e"/><path d="M380.7 533.2C382.6 530.7 392.6 506.9 397.4 511.5C402.2 516.0 414.8 568.1 421.7 572.3C428.6 576.4 450.3 550.7 456.5 547.3C462.7 543.9 470.0 549.2 474.7 542.9C479.5 536.6 494.8 499.1 497.5 493.3" stroke="#44d4a4"/><path d="M380.7 526.4C382.6 523.9 392.6 500.3 397.4 505.1C402.2 509.8 414.8 562.6 421.7 567.3C428.6 572.0 450.3 548.5 456.5 545.2C462.7 541.8 470.0 539.9 474.7 538.3C479.5 536.6 492.8 526.9 497.5 530.9C502.2 534.9 511.0 568.2 514.9 572.7C518.8 577.1 526.0 561.5 530.9 569.2C535.7 577.0 552.0 639.2 556.6 639.1C561.2 639.0 567.9 580.3 570.3 568.3C572.7 556.3 571.6 543.4 577.1 536.1C582.6 528.8 610.8 501.2 617.3 505.6C623.8 509.9 627.5 565.8 632.5 573.2C637.4 580.7 654.6 566.5 659.8 569.5C664.9 572.5 672.9 596.0 676.5 598.9C680.0 601.8 686.9 599.3 690.1 594.4C693.3 589.6 700.2 563.6 703.8 557.5C707.3 551.3 716.1 542.9 720.4 541.9C724.8 540.8 736.5 534.6 740.9 548.4C745.3 562.2 753.3 643.7 758.4 659.9C763.4 676.2 779.0 694.0 784.1 687.8C789.3 681.6 796.7 618.9 802.3 607.0C808.0 595.0 826.6 597.1 832.7 585.3C838.8 573.4 850.4 517.3 854.7 505.7C858.9 494.1 866.7 489.0 869.1 485.6C871.5 482.2 874.0 477.3 875.1 476.6C876.3 475.9 876.8 488.0 878.9 479.6C881.1 471.2 888.5 404.7 893.3 404.7C898.2 404.6 913.9 468.1 920.6 479.1C927.4 490.1 942.8 495.9 951.0 498.8C959.1 501.7 981.4 506.8 990.4 503.7C999.4 500.5 1021.3 481.0 1028.3 472.0C1035.4 462.9 1045.4 421.4 1051.1 426.3C1056.7 431.2 1069.3 507.5 1076.9 513.8C1084.5 520.2 1109.0 487.5 1116.3 480.7C1123.6 473.8 1133.0 458.2 1139.1 455.0C1145.1 451.8 1159.9 449.1 1167.9 453.6C1175.8 458.0 1202.7 488.7 1207.3 493.3" stroke="#8c2a1a"/><path d="M380.7 559.9C382.6 556.0 392.6 523.5 397.4 526.3C402.2 529.1 414.8 580.7 421.7 583.9C428.6 587.1 450.3 557.3 456.5 553.5C462.7 549.7 470.0 551.2 474.7 551.5C479.5 551.8 492.8 549.8 497.5 556.2C502.2 562.5 511.0 599.7 514.9 605.9C518.8 612.0 526.0 590.8 530.9 608.7C535.7 626.5 552.0 734.2 556.6 759.1C561.2 784.0 567.9 808.5 570.3 822.1C572.7 835.7 571.6 885.6 577.1 875.6C582.6 865.6 610.8 758.8 617.3 736.2C623.8 713.5 627.5 678.7 632.5 681.3C637.4 683.9 654.6 748.7 659.8 758.5C664.9 768.3 672.9 774.3 676.5 765.1C680.0 756.0 686.9 697.3 690.1 679.9C693.3 662.4 700.2 628.2 703.8 615.9C707.3 603.6 716.1 577.1 720.4 574.3C724.8 571.5 736.5 571.5 740.9 591.8C745.3 612.0 753.3 759.6 758.4 748.1C763.4 736.6 781.1 523.0 784.1 493.3" stroke="#4c44dc"/><path d="M380.7 542.1C382.6 538.9 392.6 510.9 397.4 514.7C402.2 518.5 414.8 570.7 421.7 574.7C428.6 578.8 450.3 552.8 456.5 549.4C462.7 546.1 470.0 546.9 474.7 546.0C479.5 545.2 492.8 541.1 497.5 541.9C502.2 542.6 511.0 558.2 514.9 552.5C518.8 546.9 529.0 500.2 530.9 493.3" stroke="#7078c4"/><path d="M380.7 551.2C382.6 547.6 392.6 516.4 397.4 519.8C402.2 523.2 414.8 577.0 421.7 580.7C428.6 584.4 450.3 554.9 456.5 551.4C462.7 547.8 470.0 550.9 474.7 550.4C479.5 549.9 492.8 540.8 497.5 547.2C502.2 553.6 511.0 598.5 514.9 605.2C518.8 612.0 526.0 587.4 530.9 605.0C535.7 622.6 552.0 731.5 556.6 756.1C561.2 780.7 567.9 804.0 570.3 815.7C572.7 827.4 571.6 870.3 577.1 856.4C582.6 842.5 610.8 719.8 617.3 696.5C623.8 673.1 627.5 652.4 632.5 656.1C637.4 659.7 654.6 718.7 659.8 727.8C664.9 736.9 672.9 741.6 676.5 733.7C680.0 725.9 686.9 675.8 690.1 660.4C693.3 645.0 700.2 612.4 703.8 601.5C707.3 590.6 716.1 569.5 720.4 567.2C724.8 564.9 736.5 563.0 740.9 581.9C745.3 600.8 753.3 704.6 758.4 729.3C763.4 754.0 779.0 805.3 784.1 794.0C789.3 782.7 796.7 654.8 802.3 632.8C808.0 610.7 826.6 618.2 832.7 604.9C838.8 591.7 850.4 530.4 854.7 519.0C858.9 507.6 866.7 510.3 869.1 507.3C871.5 504.3 874.4 494.9 875.1 493.3" stroke="#44d4a4"/><path d="M380.7 550.4C382.6 546.6 392.6 515.0 397.4 518.5C402.2 521.9 414.8 576.1 421.7 579.8C428.6 583.6 450.3 554.2 456.5 550.6C462.7 547.1 470.0 549.6 474.7 549.1C479.5 548.5 492.8 539.4 497.5 545.6C502.2 551.8 511.0 595.7 514.9 602.3C518.8 608.8 526.0 585.8 530.9 601.9C535.7 618.0 552.0 718.5 556.6 740.6C561.2 762.6 567.9 776.5 570.3 790.6C572.7 804.7 571.6 872.4 577.1 861.3C582.6 850.3 610.8 719.0 617.3 695.6C623.8 672.2 627.5 656.7 632.5 660.6C637.4 664.6 654.6 720.3 659.8 729.7C664.9 739.1 672.9 749.9 676.5 741.4C680.0 732.8 686.9 672.9 690.1 656.6C693.3 640.2 700.2 611.7 703.8 601.2C707.3 590.7 716.1 569.3 720.4 566.9C724.8 564.5 736.5 562.7 740.9 580.9C745.3 599.2 753.3 699.1 758.4 723.2C763.4 747.2 779.0 798.3 784.1 787.3C789.3 776.3 796.7 650.6 802.3 629.0C808.0 607.3 826.6 615.0 832.7 602.0C838.8 588.9 850.4 528.3 854.7 516.8C858.9 505.4 866.7 506.4 869.1 503.9C871.5 501.4 874.0 496.3 875.1 495.6C876.3 495.0 876.8 506.9 878.9 498.5C881.1 490.1 888.5 423.1 893.3 423.4C898.2 423.8 913.9 491.2 920.6 501.6C927.4 512.0 942.8 511.1 951.0 512.5C959.1 513.9 981.4 517.1 990.4 513.7C999.4 510.3 1021.3 492.7 1028.3 483.5C1035.4 474.4 1045.4 429.8 1051.1 435.2C1056.7 440.6 1069.3 522.2 1076.9 529.6C1084.5 536.9 1109.0 506.2 1116.3 498.2C1123.6 490.1 1133.0 465.1 1139.1 460.7C1145.1 456.2 1159.9 458.1 1167.9 460.4C1175.8 462.7 1197.7 474.6 1207.3 480.2C1216.9 485.8 1239.2 507.0 1249.8 508.2C1260.4 509.3 1289.1 490.6 1298.3 490.3C1307.5 489.9 1322.3 504.7 1328.6 505.0C1335.0 505.4 1350.1 494.7 1352.9 493.3" stroke="#7078c4"/><path d="M380.7 548.7C382.6 545.5 392.6 517.7 397.4 521.3C402.2 524.8 414.8 575.7 421.7 579.1C428.6 582.5 450.3 554.0 456.5 550.2C462.7 546.3 470.0 547.3 474.7 546.3C479.5 545.4 492.8 536.2 497.5 541.7C502.2 547.1 511.0 587.4 514.9 593.0C518.8 598.6 526.0 576.2 530.9 589.7C535.7 603.2 552.0 690.2 556.6 709.0C561.2 727.9 567.9 740.9 570.3 751.3C572.7 761.6 571.6 807.6 577.1 797.7C582.6 787.8 610.8 683.4 617.3 666.4C623.8 649.5 627.5 644.8 632.5 652.5C637.4 660.3 654.6 721.5 659.8 733.1C664.9 744.7 672.9 760.5 676.5 751.9C680.0 743.3 686.9 676.5 690.1 659.6C693.3 642.7 700.2 617.7 703.8 607.0C707.3 596.4 716.1 570.8 720.4 568.3C724.8 565.7 736.5 567.5 740.9 585.6C745.3 603.7 753.3 721.4 758.4 723.2C763.4 725.1 779.0 628.3 784.1 601.4C789.3 574.6 800.2 505.9 802.3 493.3" stroke="#7078c4"/><path d="M380.7 527.2C382.6 524.8 392.6 502.0 397.4 506.5C402.2 510.9 414.8 561.1 421.7 565.5C428.6 569.8 450.3 547.0 456.5 543.8C462.7 540.6 470.0 539.5 474.7 538.1C479.5 536.7 492.8 528.0 497.5 531.7C502.2 535.5 511.0 565.8 514.9 570.2C518.8 574.7 526.0 561.8 530.9 569.9C535.7 578.1 552.0 629.5 556.6 640.2C561.2 650.9 567.9 665.3 570.3 661.7C572.7 658.2 571.6 620.8 577.1 609.7C582.6 598.6 610.8 580.3 617.3 566.7C623.8 553.1 630.7 501.9 632.5 493.3" stroke="#8c2a1a"/><path d="M380.7 553.7C382.6 550.1 392.6 519.4 397.4 522.8C402.2 526.1 414.8 578.9 421.7 582.4C428.6 585.9 450.3 556.5 456.5 552.7C462.7 549.0 470.0 550.3 474.7 550.3C479.5 550.3 492.8 545.7 497.5 552.6C502.2 559.6 511.0 602.7 514.9 609.9C518.8 617.0 526.0 595.6 530.9 613.8C535.7 631.9 552.0 739.0 556.6 765.1C561.2 791.2 567.9 821.4 570.3 837.6C572.7 853.7 571.6 943.9 577.1 903.7C582.6 863.5 612.6 541.2 617.3 493.3" stroke="#7078c4"/><path d="M380.7 532.8C382.6 529.8 392.6 502.4 397.4 507.0C402.2 511.6 414.8 567.4 421.7 572.0C428.6 576.7 450.3 550.4 456.5 547.1C462.7 543.8 470.0 544.6 474.7 543.8C479.5 543.1 492.8 535.6 497.5 540.6C502.2 545.5 511.0 580.7 514.9 586.1C518.8 591.5 526.0 574.8 530.9 587.1C535.7 599.4 552.0 677.3 556.6 691.6C561.2 705.9 567.9 709.4 570.3 709.8C572.7 710.2 571.6 708.9 577.1 695.0C582.6 681.0 610.8 600.3 617.3 590.1C623.8 580.0 627.5 601.0 632.5 608.1C637.4 615.2 654.6 643.5 659.8 651.3C664.9 659.1 672.9 677.7 676.5 674.8C680.0 671.9 686.9 638.4 690.1 626.4C693.3 614.5 700.2 581.6 703.8 572.7C707.3 563.7 716.1 551.4 720.4 550.1C724.8 548.9 736.5 546.5 740.9 561.8C745.3 577.1 753.3 663.5 758.4 681.3C763.4 699.1 779.0 721.7 784.1 714.3C789.3 707.0 796.7 632.3 802.3 618.3C808.0 604.3 826.6 606.6 832.7 594.0C838.8 581.4 850.4 521.7 854.7 510.3C858.9 498.8 866.7 498.4 869.1 495.8C871.5 493.3 874.0 489.3 875.1 488.5C876.3 487.7 876.8 497.2 878.9 488.9C881.1 480.6 888.5 416.5 893.3 417.0C898.2 417.5 917.5 484.4 920.6 493.3" stroke="#5c8a6a"/><path d="M380.7 547.1C382.6 543.9 392.6 516.2 397.4 519.9C402.2 523.6 414.8 575.2 421.7 578.7C428.6 582.3 450.3 554.1 456.5 550.5C462.7 547.0 470.0 548.8 474.7 548.1C479.5 547.4 492.8 539.2 497.5 544.8C502.2 550.5 511.0 590.1 514.9 596.4C518.8 602.7 526.0 584.7 530.9 599.1C535.7 613.6 552.0 701.5 556.6 720.0C561.2 738.6 567.9 749.6 570.3 758.2C572.7 766.8 571.6 806.2 577.1 793.6C582.6 780.9 610.8 668.2 617.3 650.0C623.8 631.7 627.5 630.0 632.5 637.0C637.4 644.0 654.6 699.4 659.8 709.9C664.9 720.4 672.9 733.7 676.5 726.9C680.0 720.0 686.9 666.1 690.1 651.0C693.3 635.9 700.2 611.5 703.8 597.2C707.3 583.0 716.1 540.7 720.4 528.6C724.8 516.5 738.5 497.4 740.9 493.3" stroke="#5c8a6a"/><path d="M380.7 556.6C382.6 552.9 392.6 521.7 397.4 524.9C402.2 528.1 414.8 580.6 421.7 583.8C428.6 587.0 450.3 556.3 456.5 552.3C462.7 548.2 470.0 549.7 474.7 549.0C479.5 548.2 492.8 540.0 497.5 546.0C502.2 551.9 511.0 592.8 514.9 599.6C518.8 606.5 526.0 587.5 530.9 604.8C535.7 622.1 552.0 723.7 556.6 747.8C561.2 771.8 567.9 795.2 570.3 810.9C572.7 826.6 571.6 893.3 577.1 882.4C582.6 871.6 610.8 742.1 617.3 718.2C623.8 694.3 627.5 672.4 632.5 677.4C637.4 682.3 654.6 750.8 659.8 760.9C664.9 771.0 672.9 773.9 676.5 763.8C680.0 753.8 686.9 692.5 690.1 674.7C693.3 657.0 700.2 623.2 703.8 611.4C707.3 599.6 716.1 576.2 720.4 573.6C724.8 570.9 736.5 568.4 740.9 588.5C745.3 608.6 753.3 719.6 758.4 746.0C763.4 772.4 779.0 827.8 784.1 814.9C789.3 802.1 796.7 660.3 802.3 635.7C808.0 611.1 826.6 618.0 832.7 604.2C838.8 590.4 850.4 529.1 854.7 517.3C858.9 505.6 866.7 505.6 869.1 503.7C871.5 501.8 874.0 501.6 875.1 500.9C876.3 500.2 876.8 506.0 878.9 497.6C881.1 489.3 888.5 428.1 893.3 429.4C898.2 430.7 913.9 498.2 920.6 509.1C927.4 520.0 942.8 521.9 951.0 522.8C959.1 523.8 981.4 521.3 990.4 517.2C999.4 513.1 1021.3 496.9 1028.3 487.7C1035.4 478.4 1045.4 432.3 1051.1 437.8C1056.7 443.3 1069.3 527.2 1076.9 534.9C1084.5 542.6 1109.0 512.1 1116.3 503.8C1123.6 495.5 1133.0 468.6 1139.1 463.8C1145.1 458.9 1159.9 460.4 1167.9 462.5C1175.8 464.6 1197.7 475.7 1207.3 481.5C1216.9 487.4 1239.2 510.8 1249.8 512.6C1260.4 514.4 1289.1 494.3 1298.3 496.7C1307.5 499.1 1322.3 531.7 1328.6 533.4C1335.0 535.1 1347.9 525.7 1352.9 511.2C1357.9 496.7 1368.3 405.5 1371.9 409.1C1375.4 412.8 1380.5 533.7 1383.2 542.7C1386.0 551.8 1392.2 492.8 1395.4 486.7C1398.6 480.6 1404.5 487.2 1410.5 490.4C1416.6 493.6 1438.8 509.5 1446.9 514.3C1455.1 519.2 1472.2 536.4 1480.3 532.1C1488.4 527.8 1508.2 482.7 1516.7 477.3C1525.2 471.8 1548.0 483.4 1553.1 485.3C1558.2 487.2 1559.8 492.4 1560.7 493.3" stroke="#5c8a6a"/><path d="M380.7 533.2C382.6 530.4 392.6 504.6 397.4 509.1C402.2 513.6 414.8 567.3 421.7 571.8C428.6 576.2 450.3 551.0 456.5 547.6C462.7 544.1 470.0 543.5 474.7 542.4C479.5 541.2 492.8 533.1 497.5 537.9C502.2 542.6 511.0 577.9 514.9 583.4C518.8 588.9 526.0 573.0 530.9 585.1C535.7 597.2 552.0 674.9 556.6 687.1C561.2 699.3 567.9 694.0 570.3 689.9C572.7 685.8 571.6 664.7 577.1 651.7C582.6 638.8 610.8 586.3 617.3 579.1C623.8 571.9 627.5 600.2 632.5 590.2C637.4 580.2 656.6 504.6 659.8 493.3" stroke="#5c8a6a"/><path d="M380.7 544.2C382.6 540.8 392.6 511.3 397.4 515.1C402.2 518.9 414.8 572.9 421.7 576.8C428.6 580.7 450.3 552.1 456.5 548.5C462.7 544.9 470.0 546.6 474.7 545.8C479.5 545.0 492.8 536.8 497.5 542.0C502.2 547.2 511.0 586.7 514.9 590.6C518.8 594.6 526.0 587.2 530.9 575.9C535.7 564.5 553.6 502.9 556.6 493.3" stroke="#5c8a6a"/><path d="M380.7 553.1C382.6 549.5 392.6 518.6 397.4 521.8C402.2 525.0 414.8 577.0 421.7 580.5C428.6 584.0 450.3 555.6 456.5 552.0C462.7 548.4 470.0 549.9 474.7 549.3C479.5 548.7 492.8 540.8 497.5 547.0C502.2 553.2 511.0 595.7 514.9 602.5C518.8 609.4 526.0 588.3 530.9 605.8C535.7 623.3 552.0 727.0 556.6 752.5C561.2 777.9 567.9 807.2 570.3 824.2C572.7 841.1 571.6 908.1 577.1 898.0C582.6 887.9 610.8 762.5 617.3 737.6C623.8 712.7 627.5 681.8 632.5 684.5C637.4 687.2 654.6 783.2 659.8 760.9C664.9 738.6 674.5 524.5 676.5 493.3" stroke="#44d4a4"/><path d="M380.7 545.1C382.6 541.8 392.6 513.2 397.4 517.2C402.2 521.1 414.8 575.0 421.7 579.0C428.6 582.9 450.3 554.3 456.5 550.9C462.7 547.5 470.0 550.0 474.7 549.5C479.5 549.1 492.8 540.6 497.5 546.9C502.2 553.2 511.0 596.5 514.9 603.6C518.8 610.6 526.0 609.7 530.9 607.2C535.7 604.6 552.0 595.1 556.6 581.8C561.2 568.5 568.7 503.6 570.3 493.3" stroke="#2e2e2e" stroke-width="1.5"/><path d="M380.7 519.8C382.6 517.6 392.6 496.3 397.4 500.9C402.2 505.5 414.8 556.9 421.7 559.2C428.6 561.5 450.3 525.0 456.5 520.7C462.7 516.4 470.0 522.3 474.7 522.2C479.5 522.0 492.8 519.4 497.5 519.5C502.2 519.5 511.0 521.0 514.9 522.6C518.8 524.2 526.0 522.0 530.9 533.2C535.7 544.4 552.0 613.4 556.6 618.3C561.2 623.2 567.9 590.1 570.3 575.5C572.7 560.9 576.3 502.9 577.1 493.3" stroke="#44d4a4"/><path d="M380.7 536.9C382.6 533.9 392.6 507.1 397.4 511.1C402.2 515.1 414.8 567.1 421.7 571.2C428.6 575.4 450.3 550.4 456.5 546.9C462.7 543.4 470.0 542.4 474.7 541.3C479.5 540.3 492.8 533.2 497.5 538.0C502.2 542.7 511.0 576.6 514.9 581.8C518.8 587.0 526.0 570.4 530.9 582.5C535.7 594.5 552.0 670.0 556.6 685.0C561.2 700.0 567.9 705.6 570.3 711.0C572.7 716.4 571.6 743.6 577.1 731.4C582.6 719.2 610.8 620.0 617.3 606.4C623.8 592.8 627.5 605.9 632.5 614.9C637.4 623.8 654.6 673.0 659.8 683.2C664.9 693.4 672.9 708.1 676.5 702.4C680.0 696.7 686.9 648.8 690.1 634.2C693.3 619.6 700.2 586.7 703.8 577.3C707.3 567.9 716.1 555.3 720.4 553.7C724.8 552.1 736.5 547.8 740.9 563.4C745.3 579.0 753.3 669.3 758.4 687.4C763.4 705.5 779.0 727.4 784.1 718.6C789.3 709.8 796.7 626.6 802.3 611.9C808.0 597.1 826.6 604.2 832.7 592.1C838.8 580.0 850.4 519.9 854.7 508.4C858.9 496.9 866.7 496.2 869.1 493.4C871.5 490.6 874.0 485.2 875.1 484.7C876.3 484.2 876.8 496.9 878.9 488.9C881.1 481.0 888.5 415.8 893.3 416.6C898.2 417.3 913.9 484.4 920.6 495.1C927.4 505.8 942.8 506.3 951.0 508.1C959.1 509.8 981.4 513.5 990.4 510.2C999.4 506.9 1021.3 488.8 1028.3 479.7C1035.4 470.5 1045.4 426.7 1051.1 431.8C1056.7 437.0 1069.3 517.0 1076.9 524.1C1084.5 531.1 1109.0 499.9 1116.3 492.2C1123.6 484.6 1133.0 462.7 1139.1 458.7C1145.1 454.6 1159.9 454.9 1167.9 457.7C1175.8 460.5 1197.7 478.4 1207.3 482.5C1216.9 486.7 1244.8 492.0 1249.8 493.3" stroke="#5c8a6a"/><path d="M380.7 544.3C382.6 540.9 392.6 511.7 397.4 515.3C402.2 519.0 414.8 571.4 421.7 575.4C428.6 579.3 450.3 552.4 456.5 549.0C462.7 545.5 470.0 546.9 474.7 546.0C479.5 545.2 492.8 536.5 497.5 541.9C502.2 547.3 511.0 585.6 514.9 592.0C518.8 598.4 526.0 580.5 530.9 596.7C535.7 613.0 552.0 708.0 556.6 730.9C561.2 753.8 567.9 781.4 570.3 793.3C572.7 805.2 571.6 845.6 577.1 833.0C582.6 820.4 610.8 706.1 617.3 685.4C623.8 664.7 627.5 650.4 632.5 655.4C637.4 660.4 654.6 719.0 659.8 728.2C664.9 737.4 672.9 743.1 676.5 734.3C680.0 725.5 686.9 668.7 690.1 652.6C693.3 636.5 700.2 606.8 703.8 596.3C707.3 585.8 716.1 565.4 720.4 562.9C724.8 560.5 736.5 558.1 740.9 575.4C745.3 592.8 753.3 690.6 758.4 711.4C763.4 732.2 779.0 770.5 784.1 753.9C789.3 737.4 796.7 600.0 802.3 569.6C808.0 539.2 829.1 502.2 832.7 493.3" stroke="#8c2a1a"/><path d="M380.7 509.6C382.6 507.7 395.4 495.2 397.4 493.3" stroke="#4c44dc"/><path d="M380.7 532.7C382.6 529.9 392.6 504.0 397.4 508.4C402.2 512.8 414.8 565.8 421.7 570.2C428.6 574.6 450.3 549.6 456.5 546.2C462.7 542.8 470.0 542.2 474.7 541.1C479.5 540.0 492.8 531.8 497.5 536.5C502.2 541.2 511.0 575.6 514.9 581.0C518.8 586.5 526.0 572.6 530.9 583.1C535.7 593.6 552.0 658.6 556.6 670.9C561.2 683.2 567.9 686.8 570.3 688.5C572.7 690.1 571.6 697.0 577.1 684.8C582.6 672.6 610.8 592.9 617.3 583.9C623.8 574.8 627.5 598.9 632.5 607.1C637.4 615.4 654.6 646.3 659.8 654.5C664.9 662.6 672.9 679.9 676.5 677.0C680.0 674.0 686.9 640.9 690.1 628.9C693.3 617.0 700.2 583.8 703.8 574.7C707.3 565.7 716.1 552.9 720.4 551.2C724.8 549.4 736.5 544.9 740.9 559.8C745.3 574.8 753.3 663.3 758.4 679.3C763.4 695.2 779.0 704.6 784.1 696.7C789.3 688.9 796.7 635.9 802.3 612.2C808.0 588.5 829.1 507.2 832.7 493.3" stroke="#e4884e"/><path d="M380.7 553.6C382.6 549.7 392.6 527.5 397.4 520.5C402.2 513.4 418.8 496.5 421.7 493.3" stroke="#7078c4"/><path d="M380.7 536.6C382.6 533.5 392.6 506.1 397.4 510.1C402.2 514.1 414.8 566.6 421.7 570.8C428.6 575.1 450.3 549.7 456.5 546.2C462.7 542.7 470.0 542.0 474.7 540.5C479.5 539.1 492.8 529.9 497.5 533.8C502.2 537.7 511.0 569.1 514.9 573.7C518.8 578.2 526.0 564.6 530.9 572.6C535.7 580.5 552.0 632.1 556.6 642.0C561.2 651.8 567.9 657.7 570.3 657.3C572.7 656.9 571.6 648.7 577.1 638.7C582.6 628.7 610.8 576.1 617.3 571.6C623.8 567.0 627.5 590.7 632.5 600.0C637.4 609.4 654.6 642.7 659.8 651.8C664.9 660.9 672.9 680.7 676.5 677.7C680.0 674.6 686.9 637.4 690.1 625.8C693.3 614.3 700.2 587.2 703.8 578.7C707.3 570.2 716.1 554.6 720.4 553.1C724.8 551.6 736.5 572.8 740.9 565.9C745.3 558.9 756.3 501.8 758.4 493.3" stroke="#2e2e2e" stroke-width="1.5"/><path d="M380.7 524.4C382.6 521.8 392.6 497.4 397.4 502.3C402.2 507.2 414.8 562.4 421.7 566.3C428.6 570.2 450.3 539.3 456.5 535.9C462.7 532.6 470.0 538.3 474.7 537.7C479.5 537.0 492.8 531.0 497.5 530.3C502.2 529.5 511.0 527.8 514.9 531.1C518.8 534.5 526.0 548.4 530.9 558.7C535.7 569.0 552.0 619.3 556.6 619.7C561.2 620.0 567.9 568.0 570.3 561.5C572.7 555.1 571.6 568.9 577.1 564.5C582.6 560.1 610.8 522.8 617.3 523.8C623.8 524.8 627.5 566.0 632.5 573.2C637.4 580.5 654.6 583.4 659.8 585.8C664.9 588.3 672.9 594.8 676.5 594.6C680.0 594.3 686.9 588.6 690.1 583.9C693.3 579.3 700.2 559.6 703.8 554.7C707.3 549.7 716.1 542.3 720.4 541.6C724.8 541.0 736.5 535.9 740.9 548.8C745.3 561.7 753.3 638.4 758.4 652.2C763.4 666.0 779.0 675.2 784.1 667.1C789.3 658.9 796.7 594.3 802.3 582.4C808.0 570.5 826.6 574.4 832.7 565.1C838.8 555.7 850.4 511.8 854.7 502.2C858.9 492.6 866.7 486.0 869.1 482.8C871.5 479.6 874.0 474.7 875.1 474.3C876.3 474.0 876.8 487.7 878.9 479.5C881.1 471.2 888.5 403.8 893.3 403.5C898.2 403.2 913.9 466.4 920.6 477.1C927.4 487.8 942.8 492.4 951.0 495.2C959.1 498.0 981.4 503.7 990.4 500.9C999.4 498.1 1021.3 480.4 1028.3 471.3C1035.4 462.2 1045.4 418.9 1051.1 423.0C1056.7 427.1 1069.3 500.1 1076.9 506.7C1084.5 513.2 1109.0 485.6 1116.3 479.4C1123.6 473.2 1133.0 457.6 1139.1 453.5C1145.1 449.5 1159.9 442.2 1167.9 444.3C1175.8 446.3 1197.7 464.8 1207.3 471.0C1216.9 477.2 1239.2 497.1 1249.8 497.3C1260.4 497.5 1289.1 469.6 1298.3 472.9C1307.5 476.2 1322.3 522.2 1328.6 525.3C1335.0 528.3 1347.9 513.6 1352.9 499.2C1357.9 484.8 1368.3 397.9 1371.9 402.0C1375.4 406.2 1380.5 525.7 1383.2 534.7C1386.0 543.7 1392.2 485.5 1395.4 479.5C1398.6 473.4 1404.5 481.6 1410.5 482.5C1416.6 483.4 1438.8 484.6 1446.9 487.3C1455.1 490.0 1472.2 508.4 1480.3 505.5C1488.4 502.6 1508.2 468.4 1516.7 462.5C1525.2 456.5 1548.0 453.9 1553.1 454.5C1558.2 455.2 1554.7 463.5 1560.7 468.1C1566.7 472.6 1599.5 490.4 1604.7 493.3" stroke="#44d4a4"/><path d="M380.7 546.7C382.6 543.4 392.6 514.9 397.4 518.9C402.2 522.9 414.8 577.3 421.7 581.1C428.6 584.9 450.3 554.8 456.5 551.2C462.7 547.6 470.0 550.5 474.7 550.4C479.5 550.2 492.8 543.3 497.5 550.1C502.2 557.0 511.0 601.7 514.9 609.2C518.8 616.6 526.0 595.8 530.9 613.8C535.7 631.7 552.0 738.4 556.6 763.2C561.2 788.0 567.9 813.4 570.3 826.4C572.7 839.5 571.6 885.4 577.1 874.8C582.6 864.1 610.8 758.7 617.3 735.5C623.8 712.4 627.5 676.4 632.5 676.2C637.4 675.9 654.6 725.6 659.8 733.5C664.9 741.4 672.9 752.4 676.5 743.8C680.0 735.1 686.9 675.8 690.1 659.1C693.3 642.5 700.2 611.7 703.8 601.0C707.3 590.2 716.1 569.4 720.4 567.0C724.8 564.6 736.5 561.5 740.9 580.4C745.3 599.4 753.3 705.1 758.4 729.5C763.4 753.9 779.0 800.6 784.1 789.5C789.3 778.5 796.7 656.5 802.3 635.0C808.0 613.5 826.6 619.0 832.7 605.4C838.8 591.7 850.4 529.5 854.7 518.3C858.9 507.1 866.7 511.3 869.1 509.4C871.5 507.6 874.0 503.7 875.1 502.7C876.3 501.6 876.8 508.6 878.9 500.2C881.1 491.9 888.5 430.3 893.3 431.3C898.2 432.3 913.9 498.2 920.6 508.6C927.4 519.0 942.8 519.1 951.0 520.2C959.1 521.2 981.4 521.7 990.4 517.8C999.4 514.0 1021.3 496.9 1028.3 487.5C1035.4 478.2 1045.4 432.1 1051.1 437.6C1056.7 443.0 1069.3 526.4 1076.9 534.1C1084.5 541.9 1109.0 510.9 1116.3 504.1C1123.6 497.4 1133.0 477.4 1139.1 476.1C1145.1 474.8 1164.5 491.3 1167.9 493.3" stroke="#7078c4"/><path d="M380.7 540.4C382.6 537.3 392.6 510.0 397.4 513.9C402.2 517.9 414.8 569.9 421.7 573.9C428.6 577.8 450.3 551.4 456.5 547.8C462.7 544.2 470.0 543.9 474.7 542.9C479.5 542.0 492.8 534.7 497.5 539.9C502.2 545.0 511.0 581.6 514.9 586.9C518.8 592.2 526.0 570.7 530.9 585.0C535.7 599.3 552.0 691.0 556.6 709.6C561.2 728.3 567.9 738.9 570.3 745.1C572.7 751.3 571.6 775.9 577.1 762.8C582.6 749.8 610.8 649.2 617.3 633.4C623.8 617.6 627.5 620.5 632.5 627.2C637.4 633.8 654.6 681.6 659.8 690.6C664.9 699.7 672.9 710.1 676.5 704.7C680.0 699.2 686.9 658.0 690.1 644.0C693.3 630.1 700.2 595.0 703.8 585.2C707.3 575.5 716.1 562.7 720.4 560.7C724.8 558.6 736.5 551.5 740.9 567.7C745.3 583.9 753.3 678.8 758.4 699.6C763.4 720.5 779.0 755.9 784.1 746.5C789.3 737.0 796.7 636.5 802.3 618.7C808.0 600.9 826.6 606.7 832.7 594.0C838.8 581.4 850.4 521.8 854.7 510.4C858.9 498.9 866.7 498.6 869.1 496.2C871.5 493.8 874.0 490.2 875.1 489.9C876.3 489.5 876.8 501.5 878.9 493.0C881.1 484.6 888.5 417.4 893.3 417.7C898.2 417.9 913.9 484.6 920.6 495.1C927.4 505.7 942.8 506.0 951.0 507.8C959.1 509.7 981.4 513.9 990.4 510.7C999.4 507.4 1021.3 489.2 1028.3 480.0C1035.4 470.9 1045.4 430.6 1051.1 432.1C1056.7 433.7 1073.9 486.2 1076.9 493.3" stroke="#5c8a6a"/><path d="M380.7 518.4C382.6 516.1 392.6 496.2 397.4 498.6C402.2 501.1 414.8 536.8 421.7 539.1C428.6 541.4 450.3 522.5 456.5 518.4C462.7 514.2 470.0 503.5 474.7 504.0C479.5 504.4 492.8 514.9 497.5 522.1C502.2 529.3 511.0 561.2 514.9 565.4C518.8 569.6 526.0 549.8 530.9 558.2C535.7 566.5 552.0 628.3 556.6 637.1C561.2 645.8 567.9 638.8 570.3 632.9C572.7 627.0 571.6 595.3 577.1 586.5C582.6 577.7 610.8 558.4 617.3 557.4C623.8 556.4 627.5 576.6 632.5 578.0C637.4 579.5 654.6 567.6 659.8 569.5C664.9 571.4 672.9 592.9 676.5 594.6C680.0 596.2 686.9 590.1 690.1 583.9C693.3 577.7 700.2 546.2 703.8 541.3C707.3 536.3 716.1 540.6 720.4 541.3C724.8 541.9 736.5 536.7 740.9 546.6C745.3 556.5 753.3 614.1 758.4 626.5C763.4 639.0 779.0 662.5 784.1 653.2C789.3 643.9 796.7 557.2 802.3 546.6C808.0 536.0 826.6 567.9 832.7 562.6C838.8 557.3 850.4 510.5 854.7 501.2C858.9 491.9 866.7 486.1 869.1 483.2C871.5 480.3 874.0 476.8 875.1 476.3C876.3 475.8 876.8 487.4 878.9 478.9C881.1 470.3 888.5 403.5 893.3 403.2C898.2 403.0 913.9 466.1 920.6 476.8C927.4 487.4 942.8 491.8 951.0 494.3C959.1 496.9 981.4 501.3 990.4 498.6C999.4 495.9 1021.3 480.1 1028.3 471.2C1035.4 462.2 1045.4 418.8 1051.1 421.8C1056.7 424.7 1069.3 489.9 1076.9 496.5C1084.5 503.2 1109.0 484.1 1116.3 478.9C1123.6 473.8 1133.0 456.5 1139.1 452.3C1145.1 448.0 1159.9 440.8 1167.9 442.7C1175.8 444.5 1197.7 462.2 1207.3 468.3C1216.9 474.4 1239.2 494.8 1249.8 494.9C1260.4 495.0 1289.1 465.7 1298.3 469.3C1307.5 472.8 1322.3 522.1 1328.6 525.3C1335.0 528.4 1347.9 510.7 1352.9 496.3C1357.9 481.9 1368.3 397.3 1371.9 401.8C1375.4 406.2 1380.5 525.6 1383.2 534.6C1386.0 543.6 1392.2 485.2 1395.4 479.0C1398.6 472.8 1404.5 481.3 1410.5 481.6C1416.6 481.9 1438.8 479.3 1446.9 481.6C1455.1 483.9 1472.2 503.7 1480.3 501.4C1488.4 499.0 1508.2 467.6 1516.7 461.6C1525.2 455.5 1548.0 454.5 1553.1 449.2C1558.2 444.0 1554.7 413.2 1560.7 416.5C1566.7 419.9 1596.0 468.7 1604.7 477.7C1613.3 486.6 1631.5 491.5 1635.0 493.3" stroke="#4c44dc"/><path d="M380.7 555.5C382.6 551.6 392.6 519.3 397.4 522.5C402.2 525.7 414.8 579.2 421.7 582.9C428.6 586.5 450.3 557.1 456.5 553.5C462.7 549.9 470.0 551.5 474.7 551.9C479.5 552.4 492.8 550.4 497.5 557.3C502.2 564.1 511.0 604.0 514.9 610.6C518.8 617.2 526.0 595.7 530.9 613.8C535.7 631.8 552.0 738.8 556.6 765.1C561.2 791.5 567.9 823.6 570.3 839.8C572.7 855.9 571.6 914.8 577.1 903.7C582.6 892.6 610.8 770.2 617.3 744.9C623.8 719.5 627.5 685.0 632.5 686.2C637.4 687.5 654.6 747.2 659.8 756.0C664.9 764.8 672.9 771.3 676.5 761.8C680.0 752.4 686.9 692.6 690.1 675.1C693.3 657.5 700.2 623.0 703.8 611.2C707.3 599.4 716.1 576.3 720.4 573.9C724.8 571.5 736.5 574.0 740.9 590.6C745.3 607.2 753.3 727.2 758.4 715.8C763.4 704.5 781.1 519.3 784.1 493.3" stroke="#44d4a4"/><path d="M380.7 529.1C382.6 526.6 392.6 503.0 397.4 507.3C402.2 511.6 414.8 561.6 421.7 566.0C428.6 570.4 450.3 553.5 456.5 545.1C462.7 536.6 472.6 499.3 474.7 493.3" stroke="#2e2e2e" stroke-width="1.5"/><path d="M380.7 533.0C382.6 530.2 392.6 505.0 397.4 509.3C402.2 513.5 414.8 564.8 421.7 569.1C428.6 573.3 450.3 549.1 456.5 545.7C462.7 542.3 470.0 541.4 474.7 540.0C479.5 538.7 492.8 529.8 497.5 533.9C502.2 538.0 511.0 570.9 514.9 575.3C518.8 579.6 526.0 562.7 530.9 571.2C535.7 579.8 552.0 640.9 556.6 648.7C561.2 656.6 567.9 637.1 570.3 638.7C572.7 640.3 571.6 670.7 577.1 662.8C582.6 654.9 610.8 578.1 617.3 571.2C623.8 564.4 627.5 593.8 632.5 603.8C637.4 613.8 654.6 648.4 659.8 657.0C664.9 665.7 672.9 680.6 676.5 677.6C680.0 674.7 686.9 643.4 690.1 631.7C693.3 620.0 700.2 586.7 703.8 577.2C707.3 567.8 716.1 552.3 720.4 550.6C724.8 548.9 736.5 547.1 740.9 562.7C745.3 578.2 753.3 668.5 758.4 683.7C763.4 699.0 779.0 702.0 784.1 693.5C789.3 685.0 796.7 623.4 802.3 611.1C808.0 598.8 826.6 600.3 832.7 588.0C838.8 575.8 850.4 518.0 854.7 506.2C858.9 494.4 866.7 489.6 869.1 486.6C871.5 483.5 874.0 480.4 875.1 479.9C876.3 479.5 876.8 491.1 878.9 483.0C881.1 474.9 888.5 409.9 893.3 410.4C898.2 410.8 913.9 475.9 920.6 486.9C927.4 497.8 942.8 503.1 951.0 503.9C959.1 504.7 985.8 494.5 990.4 493.3" stroke="#4c44dc"/><path d="M380.7 532.6C382.6 529.6 392.6 503.2 397.4 507.3C402.2 511.4 414.8 563.4 421.7 567.7C428.6 572.1 450.3 547.6 456.5 544.3C462.7 540.9 470.0 540.8 474.7 539.3C479.5 537.8 492.8 527.8 497.5 531.2C502.2 534.6 511.0 565.2 514.9 568.3C518.8 571.4 526.0 550.4 530.9 558.1C535.7 565.8 552.0 627.7 556.6 634.3C561.2 640.8 567.9 619.6 570.3 614.5C572.7 609.4 571.6 596.9 577.1 590.5C582.6 584.0 610.8 559.3 617.3 559.2C623.8 559.2 627.5 582.0 632.5 589.9C637.4 597.9 654.6 619.4 659.8 627.3C664.9 635.3 672.9 658.6 676.5 658.0C680.0 657.5 686.9 633.6 690.1 622.9C693.3 612.2 700.2 575.6 703.8 566.6C707.3 557.6 716.1 546.7 720.4 545.5C724.8 544.2 736.5 542.1 740.9 555.9C745.3 569.6 753.3 649.0 758.4 663.7C763.4 678.4 779.0 688.3 784.1 681.6C789.3 674.9 796.7 617.2 802.3 606.0C808.0 594.9 826.6 597.9 832.7 585.9C838.8 574.0 850.4 515.5 854.7 503.5C858.9 491.6 866.7 486.5 869.1 483.4C871.5 480.3 874.0 477.3 875.1 477.0C876.3 476.7 876.8 489.5 878.9 481.1C881.1 472.6 888.5 404.5 893.3 404.3C898.2 404.2 913.9 469.0 920.6 480.0C927.4 490.9 942.8 495.8 951.0 498.6C959.1 501.3 981.4 506.5 990.4 503.4C999.4 500.3 1021.3 481.2 1028.3 472.2C1035.4 463.2 1045.4 421.6 1051.1 426.2C1056.7 430.7 1069.3 505.0 1076.9 511.3C1084.5 517.5 1109.0 481.8 1116.3 479.7C1123.6 477.7 1136.4 491.7 1139.1 493.3" stroke="#4c44dc"/></g><g stroke-width="1"><circle cx="380.7" cy="541.0" r="2.6" fill="#4c44dc" stroke="#4c44dc" fill-opacity="0.8"/><circle cx="397.4" cy="514.3" r="2.6" fill="#4c44dc" stroke="#4c44dc" fill-opacity="0.8"/><circle cx="421.7" cy="574.4" r="2.6" fill="#4c44dc" stroke="#4c44dc" fill-opacity="0.8"/><circle cx="456.5" cy="549.0" r="2.6" fill="#4c44dc" stroke="#4c44dc" fill-opacity="0.8"/><circle cx="474.7" cy="544.6" r="2.6" fill="#4c44dc" stroke="#4c44dc" fill-opacity="0.8"/><circle cx="497.5" cy="539.8" r="2.6" fill="#4c44dc" stroke="#4c44dc" fill-opacity="0.8"/><circle cx="514.9" cy="588.1" r="2.6" fill="#4c44dc" stroke="#4c44dc" fill-opacity="0.8"/><circle cx="530.9" cy="585.5" r="2.6" fill="#4c44dc" stroke="#4c44dc" fill-opacity="0.8"/><circle cx="556.6" cy="692.3" r="2.6" fill="#4c44dc" stroke="#4c44dc" fill-opacity="0.8"/><circle cx="570.3" cy="630.6" r="2.6" fill="#4c44dc" stroke="#4c44dc" fill-opacity="0.8"/><circle cx="577.1" cy="493.3" r="2.6" fill="#4c44dc" stroke="#4c44dc" fill-opacity="0.8"/><circle cx="380.7" cy="546.8" r="2.6" fill="#e4884e" stroke="#e4884e" fill-opacity="0.8"/><circle cx="397.4" cy="519.1" r="2.6" fill="#e4884e" stroke="#e4884e" fill-opacity="0.8"/><circle cx="421.7" cy="578.0" r="2.6" fill="#e4884e" stroke="#e4884e" fill-opacity="0.8"/><circle cx="456.5" cy="549.8" r="2.6" fill="#e4884e" stroke="#e4884e" fill-opacity="0.8"/><circle cx="474.7" cy="547.9" r="2.6" fill="#e4884e" stroke="#e4884e" fill-opacity="0.8"/><circle cx="497.5" cy="543.6" r="2.6" fill="#e4884e" stroke="#e4884e" fill-opacity="0.8"/><circle cx="514.9" cy="592.2" r="2.6" fill="#e4884e" stroke="#e4884e" fill-opacity="0.8"/><circle cx="530.9" cy="593.6" r="2.6" fill="#e4884e" stroke="#e4884e" fill-opacity="0.8"/><circle cx="556.6" cy="716.3" r="2.6" fill="#e4884e" stroke="#e4884e" fill-opacity="0.8"/><circle cx="570.3" cy="762.3" r="2.6" fill="#e4884e" stroke="#e4884e" fill-opacity="0.8"/><circle cx="577.1" cy="773.5" r="2.6" fill="#e4884e" stroke="#e4884e" fill-opacity="0.8"/><circle cx="617.3" cy="630.0" r="2.6" fill="#e4884e" stroke="#e4884e" fill-opacity="0.8"/><circle cx="632.5" cy="621.9" r="2.6" fill="#e4884e" stroke="#e4884e" fill-opacity="0.8"/><circle cx="659.8" cy="704.3" r="2.6" fill="#e4884e" stroke="#e4884e" fill-opacity="0.8"/><circle cx="676.5" cy="713.6" r="2.6" fill="#e4884e" stroke="#e4884e" fill-opacity="0.8"/><circle cx="690.1" cy="645.4" r="2.6" fill="#e4884e" stroke="#e4884e" fill-opacity="0.8"/><circle cx="703.8" cy="593.3" r="2.6" fill="#e4884e" stroke="#e4884e" fill-opacity="0.8"/><circle cx="720.4" cy="564.7" r="2.6" fill="#e4884e" stroke="#e4884e" fill-opacity="0.8"/><circle cx="740.9" cy="578.8" r="2.6" fill="#e4884e" stroke="#e4884e" fill-opacity="0.8"/><circle cx="758.4" cy="731.0" r="2.6" fill="#e4884e" stroke="#e4884e" fill-opacity="0.8"/><circle cx="784.1" cy="776.1" r="2.6" fill="#e4884e" stroke="#e4884e" fill-opacity="0.8"/><circle cx="802.3" cy="625.9" r="2.6" fill="#e4884e" stroke="#e4884e" fill-opacity="0.8"/><circle cx="832.7" cy="600.7" r="2.6" fill="#e4884e" stroke="#e4884e" fill-opacity="0.8"/><circle cx="854.7" cy="514.7" r="2.6" fill="#e4884e" stroke="#e4884e" fill-opacity="0.8"/><circle cx="869.1" cy="498.9" r="2.6" fill="#e4884e" stroke="#e4884e" fill-opacity="0.8"/><circle cx="875.1" cy="491.5" r="2.6" fill="#e4884e" stroke="#e4884e" fill-opacity="0.8"/><circle cx="878.9" cy="493.7" r="2.6" fill="#e4884e" stroke="#e4884e" fill-opacity="0.8"/><circle cx="893.3" cy="493.3" r="2.6" fill="#e4884e" stroke="#e4884e" fill-opacity="0.8"/><circle cx="380.7" cy="534.5" r="2.6" fill="#8c2a1a" stroke="#8c2a1a" fill-opacity="0.8"/><circle cx="397.4" cy="506.1" r="2.6" fill="#8c2a1a" stroke="#8c2a1a" fill-opacity="0.8"/><circle cx="421.7" cy="568.3" r="2.6" fill="#8c2a1a" stroke="#8c2a1a" fill-opacity="0.8"/><circle cx="456.5" cy="544.9" r="2.6" fill="#8c2a1a" stroke="#8c2a1a" fill-opacity="0.8"/><circle cx="474.7" cy="538.6" r="2.6" fill="#8c2a1a" stroke="#8c2a1a" fill-opacity="0.8"/><circle cx="497.5" cy="530.4" r="2.6" fill="#8c2a1a" stroke="#8c2a1a" fill-opacity="0.8"/><circle cx="514.9" cy="572.0" r="2.6" fill="#8c2a1a" stroke="#8c2a1a" fill-opacity="0.8"/><circle cx="530.9" cy="570.6" r="2.6" fill="#8c2a1a" stroke="#8c2a1a" fill-opacity="0.8"/><circle cx="556.6" cy="652.1" r="2.6" fill="#8c2a1a" stroke="#8c2a1a" fill-opacity="0.8"/><circle cx="570.3" cy="664.0" r="2.6" fill="#8c2a1a" stroke="#8c2a1a" fill-opacity="0.8"/><circle cx="577.1" cy="649.9" r="2.6" fill="#8c2a1a" stroke="#8c2a1a" fill-opacity="0.8"/><circle cx="617.3" cy="586.2" r="2.6" fill="#8c2a1a" stroke="#8c2a1a" fill-opacity="0.8"/><circle cx="632.5" cy="611.6" r="2.6" fill="#8c2a1a" stroke="#8c2a1a" fill-opacity="0.8"/><circle cx="659.8" cy="643.7" r="2.6" fill="#8c2a1a" stroke="#8c2a1a" fill-opacity="0.8"/><circle cx="676.5" cy="679.4" r="2.6" fill="#8c2a1a" stroke="#8c2a1a" fill-opacity="0.8"/><circle cx="690.1" cy="625.0" r="2.6" fill="#8c2a1a" stroke="#8c2a1a" fill-opacity="0.8"/><circle cx="703.8" cy="573.0" r="2.6" fill="#8c2a1a" stroke="#8c2a1a" fill-opacity="0.8"/><circle cx="720.4" cy="547.3" r="2.6" fill="#8c2a1a" stroke="#8c2a1a" fill-opacity="0.8"/><circle cx="740.9" cy="554.6" r="2.6" fill="#8c2a1a" stroke="#8c2a1a" fill-opacity="0.8"/><circle cx="758.4" cy="666.5" r="2.6" fill="#8c2a1a" stroke="#8c2a1a" fill-opacity="0.8"/><circle cx="784.1" cy="682.3" r="2.6" fill="#8c2a1a" stroke="#8c2a1a" fill-opacity="0.8"/><circle cx="802.3" cy="607.9" r="2.6" fill="#8c2a1a" stroke="#8c2a1a" fill-opacity="0.8"/><circle cx="832.7" cy="585.8" r="2.6" fill="#8c2a1a" stroke="#8c2a1a" fill-opacity="0.8"/><circle cx="854.7" cy="505.2" r="2.6" fill="#8c2a1a" stroke="#8c2a1a" fill-opacity="0.8"/><circle cx="869.1" cy="485.2" r="2.6" fill="#8c2a1a" stroke="#8c2a1a" fill-opacity="0.8"/><circle cx="875.1" cy="479.6" r="2.6" fill="#8c2a1a" stroke="#8c2a1a" fill-opacity="0.8"/><circle cx="878.9" cy="485.0" r="2.6" fill="#8c2a1a" stroke="#8c2a1a" fill-opacity="0.8"/><circle cx="893.3" cy="410.3" r="2.6" fill="#8c2a1a" stroke="#8c2a1a" fill-opacity="0.8"/><circle cx="920.6" cy="487.4" r="2.6" fill="#8c2a1a" stroke="#8c2a1a" fill-opacity="0.8"/><circle cx="951.0" cy="503.3" r="2.6" fill="#8c2a1a" stroke="#8c2a1a" fill-opacity="0.8"/><circle cx="990.4" cy="507.1" r="2.6" fill="#8c2a1a" stroke="#8c2a1a" fill-opacity="0.8"/><circle cx="1028.3" cy="475.6" r="2.6" fill="#8c2a1a" stroke="#8c2a1a" fill-opacity="0.8"/><circle cx="1051.1" cy="429.0" r="2.6" fill="#8c2a1a" stroke="#8c2a1a" fill-opacity="0.8"/><circle cx="1076.9" cy="519.8" r="2.6" fill="#8c2a1a" stroke="#8c2a1a" fill-opacity="0.8"/><circle cx="1116.3" cy="485.7" r="2.6" fill="#8c2a1a" stroke="#8c2a1a" fill-opacity="0.8"/><circle cx="1139.1" cy="456.5" r="2.6" fill="#8c2a1a" stroke="#8c2a1a" fill-opacity="0.8"/><circle cx="1167.9" cy="455.8" r="2.6" fill="#8c2a1a" stroke="#8c2a1a" fill-opacity="0.8"/><circle cx="1207.3" cy="477.9" r="2.6" fill="#8c2a1a" stroke="#8c2a1a" fill-opacity="0.8"/><circle cx="1249.8" cy="503.3" r="2.6" fill="#8c2a1a" stroke="#8c2a1a" fill-opacity="0.8"/><circle cx="1298.3" cy="484.7" r="2.6" fill="#8c2a1a" stroke="#8c2a1a" fill-opacity="0.8"/><circle cx="1328.6" cy="527.3" r="2.6" fill="#8c2a1a" stroke="#8c2a1a" fill-opacity="0.8"/><circle cx="1352.9" cy="507.1" r="2.6" fill="#8c2a1a" stroke="#8c2a1a" fill-opacity="0.8"/><circle cx="1371.9" cy="404.0" r="2.6" fill="#8c2a1a" stroke="#8c2a1a" fill-opacity="0.8"/><circle cx="1383.2" cy="537.7" r="2.6" fill="#8c2a1a" stroke="#8c2a1a" fill-opacity="0.8"/><circle cx="1395.4" cy="481.8" r="2.6" fill="#8c2a1a" stroke="#8c2a1a" fill-opacity="0.8"/><circle cx="1410.5" cy="485.0" r="2.6" fill="#8c2a1a" stroke="#8c2a1a" fill-opacity="0.8"/><circle cx="1446.9" cy="498.7" r="2.6" fill="#8c2a1a" stroke="#8c2a1a" fill-opacity="0.8"/><circle cx="1480.3" cy="525.1" r="2.6" fill="#8c2a1a" stroke="#8c2a1a" fill-opacity="0.8"/><circle cx="1516.7" cy="467.6" r="2.6" fill="#8c2a1a" stroke="#8c2a1a" fill-opacity="0.8"/><circle cx="1553.1" cy="464.1" r="2.6" fill="#8c2a1a" stroke="#8c2a1a" fill-opacity="0.8"/><circle cx="1560.7" cy="432.7" r="2.6" fill="#8c2a1a" stroke="#8c2a1a" fill-opacity="0.8"/><circle cx="1604.7" cy="469.6" r="2.6" fill="#8c2a1a" stroke="#8c2a1a" fill-opacity="0.8"/><circle cx="1635.0" cy="515.4" r="2.6" fill="#8c2a1a" stroke="#8c2a1a" fill-opacity="0.8"/><circle cx="1671.4" cy="472.1" r="2.6" fill="#8c2a1a" stroke="#8c2a1a" fill-opacity="0.8"/><circle cx="1716.9" cy="475.4" r="2.6" fill="#8c2a1a" stroke="#8c2a1a" fill-opacity="0.8"/><circle cx="1759.4" cy="493.3" r="2.6" fill="#8c2a1a" stroke="#8c2a1a" fill-opacity="0.8"/><circle cx="380.7" cy="556.7" r="2.6" fill="#8c2a1a" stroke="#8c2a1a" fill-opacity="0.8"/><circle cx="397.4" cy="522.2" r="2.6" fill="#8c2a1a" stroke="#8c2a1a" fill-opacity="0.8"/><circle cx="421.7" cy="582.4" r="2.6" fill="#8c2a1a" stroke="#8c2a1a" fill-opacity="0.8"/><circle cx="456.5" cy="552.3" r="2.6" fill="#8c2a1a" stroke="#8c2a1a" fill-opacity="0.8"/><circle cx="474.7" cy="548.4" r="2.6" fill="#8c2a1a" stroke="#8c2a1a" fill-opacity="0.8"/><circle cx="497.5" cy="545.8" r="2.6" fill="#8c2a1a" stroke="#8c2a1a" fill-opacity="0.8"/><circle cx="514.9" cy="598.8" r="2.6" fill="#8c2a1a" stroke="#8c2a1a" fill-opacity="0.8"/><circle cx="530.9" cy="599.1" r="2.6" fill="#8c2a1a" stroke="#8c2a1a" fill-opacity="0.8"/><circle cx="556.6" cy="493.3" r="2.6" fill="#8c2a1a" stroke="#8c2a1a" fill-opacity="0.8"/><circle cx="380.7" cy="537.6" r="2.6" fill="#44d4a4" stroke="#44d4a4" fill-opacity="0.8"/><circle cx="397.4" cy="510.6" r="2.6" fill="#44d4a4" stroke="#44d4a4" fill-opacity="0.8"/><circle cx="421.7" cy="571.8" r="2.6" fill="#44d4a4" stroke="#44d4a4" fill-opacity="0.8"/><circle cx="456.5" cy="546.2" r="2.6" fill="#44d4a4" stroke="#44d4a4" fill-opacity="0.8"/><circle cx="474.7" cy="540.9" r="2.6" fill="#44d4a4" stroke="#44d4a4" fill-opacity="0.8"/><circle cx="497.5" cy="534.5" r="2.6" fill="#44d4a4" stroke="#44d4a4" fill-opacity="0.8"/><circle cx="514.9" cy="576.0" r="2.6" fill="#44d4a4" stroke="#44d4a4" fill-opacity="0.8"/><circle cx="530.9" cy="580.7" r="2.6" fill="#44d4a4" stroke="#44d4a4" fill-opacity="0.8"/><circle cx="556.6" cy="676.5" r="2.6" fill="#44d4a4" stroke="#44d4a4" fill-opacity="0.8"/><circle cx="570.3" cy="682.0" r="2.6" fill="#44d4a4" stroke="#44d4a4" fill-opacity="0.8"/><circle cx="577.1" cy="673.5" r="2.6" fill="#44d4a4" stroke="#44d4a4" fill-opacity="0.8"/><circle cx="617.3" cy="586.5" r="2.6" fill="#44d4a4" stroke="#44d4a4" fill-opacity="0.8"/><circle cx="632.5" cy="610.9" r="2.6" fill="#44d4a4" stroke="#44d4a4" fill-opacity="0.8"/><circle cx="659.8" cy="667.5" r="2.6" fill="#44d4a4" stroke="#44d4a4" fill-opacity="0.8"/><circle cx="676.5" cy="681.6" r="2.6" fill="#44d4a4" stroke="#44d4a4" fill-opacity="0.8"/><circle cx="690.1" cy="630.3" r="2.6" fill="#44d4a4" stroke="#44d4a4" fill-opacity="0.8"/><circle cx="703.8" cy="579.6" r="2.6" fill="#44d4a4" stroke="#44d4a4" fill-opacity="0.8"/><circle cx="720.4" cy="555.9" r="2.6" fill="#44d4a4" stroke="#44d4a4" fill-opacity="0.8"/><circle cx="740.9" cy="564.1" r="2.6" fill="#44d4a4" stroke="#44d4a4" fill-opacity="0.8"/><circle cx="758.4" cy="680.9" r="2.6" fill="#44d4a4" stroke="#44d4a4" fill-opacity="0.8"/><circle cx="784.1" cy="714.1" r="2.6" fill="#44d4a4" stroke="#44d4a4" fill-opacity="0.8"/><circle cx="802.3" cy="612.1" r="2.6" fill="#44d4a4" stroke="#44d4a4" fill-opacity="0.8"/><circle cx="832.7" cy="589.4" r="2.6" fill="#44d4a4" stroke="#44d4a4" fill-opacity="0.8"/><circle cx="854.7" cy="508.8" r="2.6" fill="#44d4a4" stroke="#44d4a4" fill-opacity="0.8"/><circle cx="869.1" cy="488.5" r="2.6" fill="#44d4a4" stroke="#44d4a4" fill-opacity="0.8"/><circle cx="875.1" cy="481.8" r="2.6" fill="#44d4a4" stroke="#44d4a4" fill-opacity="0.8"/><circle cx="878.9" cy="487.8" r="2.6" fill="#44d4a4" stroke="#44d4a4" fill-opacity="0.8"/><circle cx="893.3" cy="410.7" r="2.6" fill="#44d4a4" stroke="#44d4a4" fill-opacity="0.8"/><circle cx="920.6" cy="487.5" r="2.6" fill="#44d4a4" stroke="#44d4a4" fill-opacity="0.8"/><circle cx="951.0" cy="503.5" r="2.6" fill="#44d4a4" stroke="#44d4a4" fill-opacity="0.8"/><circle cx="990.4" cy="506.9" r="2.6" fill="#44d4a4" stroke="#44d4a4" fill-opacity="0.8"/><circle cx="1028.3" cy="475.9" r="2.6" fill="#44d4a4" stroke="#44d4a4" fill-opacity="0.8"/><circle cx="1051.1" cy="429.4" r="2.6" fill="#44d4a4" stroke="#44d4a4" fill-opacity="0.8"/><circle cx="1076.9" cy="519.5" r="2.6" fill="#44d4a4" stroke="#44d4a4" fill-opacity="0.8"/><circle cx="1116.3" cy="493.3" r="2.6" fill="#44d4a4" stroke="#44d4a4" fill-opacity="0.8"/><circle cx="380.7" cy="554.8" r="2.6" fill="#7078c4" stroke="#7078c4" fill-opacity="0.8"/><circle cx="397.4" cy="523.2" r="2.6" fill="#7078c4" stroke="#7078c4" fill-opacity="0.8"/><circle cx="421.7" cy="583.0" r="2.6" fill="#7078c4" stroke="#7078c4" fill-opacity="0.8"/><circle cx="456.5" cy="552.9" r="2.6" fill="#7078c4" stroke="#7078c4" fill-opacity="0.8"/><circle cx="474.7" cy="551.3" r="2.6" fill="#7078c4" stroke="#7078c4" fill-opacity="0.8"/><circle cx="497.5" cy="556.8" r="2.6" fill="#7078c4" stroke="#7078c4" fill-opacity="0.8"/><circle cx="514.9" cy="610.6" r="2.6" fill="#7078c4" stroke="#7078c4" fill-opacity="0.8"/><circle cx="530.9" cy="613.8" r="2.6" fill="#7078c4" stroke="#7078c4" fill-opacity="0.8"/><circle cx="556.6" cy="765.1" r="2.6" fill="#7078c4" stroke="#7078c4" fill-opacity="0.8"/><circle cx="570.3" cy="839.8" r="2.6" fill="#7078c4" stroke="#7078c4" fill-opacity="0.8"/><circle cx="577.1" cy="895.9" r="2.6" fill="#7078c4" stroke="#7078c4" fill-opacity="0.8"/><circle cx="617.3" cy="744.9" r="2.6" fill="#7078c4" stroke="#7078c4" fill-opacity="0.8"/><circle cx="632.5" cy="673.0" r="2.6" fill="#7078c4" stroke="#7078c4" fill-opacity="0.8"/><circle cx="659.8" cy="753.3" r="2.6" fill="#7078c4" stroke="#7078c4" fill-opacity="0.8"/><circle cx="676.5" cy="757.5" r="2.6" fill="#7078c4" stroke="#7078c4" fill-opacity="0.8"/><circle cx="690.1" cy="667.4" r="2.6" fill="#7078c4" stroke="#7078c4" fill-opacity="0.8"/><circle cx="703.8" cy="609.5" r="2.6" fill="#7078c4" stroke="#7078c4" fill-opacity="0.8"/><circle cx="720.4" cy="570.3" r="2.6" fill="#7078c4" stroke="#7078c4" fill-opacity="0.8"/><circle cx="740.9" cy="584.5" r="2.6" fill="#7078c4" stroke="#7078c4" fill-opacity="0.8"/><circle cx="758.4" cy="743.8" r="2.6" fill="#7078c4" stroke="#7078c4" fill-opacity="0.8"/><circle cx="784.1" cy="812.2" r="2.6" fill="#7078c4" stroke="#7078c4" fill-opacity="0.8"/><circle cx="802.3" cy="636.9" r="2.6" fill="#7078c4" stroke="#7078c4" fill-opacity="0.8"/><circle cx="832.7" cy="607.3" r="2.6" fill="#7078c4" stroke="#7078c4" fill-opacity="0.8"/><circle cx="854.7" cy="520.0" r="2.6" fill="#7078c4" stroke="#7078c4" fill-opacity="0.8"/><circle cx="869.1" cy="510.4" r="2.6" fill="#7078c4" stroke="#7078c4" fill-opacity="0.8"/><circle cx="875.1" cy="503.4" r="2.6" fill="#7078c4" stroke="#7078c4" fill-opacity="0.8"/><circle cx="878.9" cy="504.0" r="2.6" fill="#7078c4" stroke="#7078c4" fill-opacity="0.8"/><circle cx="893.3" cy="493.3" r="2.6" fill="#7078c4" stroke="#7078c4" fill-opacity="0.8"/><circle cx="380.7" cy="532.3" r="2.6" fill="#4c44dc" stroke="#4c44dc" fill-opacity="0.8"/><circle cx="397.4" cy="507.2" r="2.6" fill="#4c44dc" stroke="#4c44dc" fill-opacity="0.8"/><circle cx="421.7" cy="569.4" r="2.6" fill="#4c44dc" stroke="#4c44dc" fill-opacity="0.8"/><circle cx="456.5" cy="546.1" r="2.6" fill="#4c44dc" stroke="#4c44dc" fill-opacity="0.8"/><circle cx="474.7" cy="541.2" r="2.6" fill="#4c44dc" stroke="#4c44dc" fill-opacity="0.8"/><circle cx="497.5" cy="535.1" r="2.6" fill="#4c44dc" stroke="#4c44dc" fill-opacity="0.8"/><circle cx="514.9" cy="577.9" r="2.6" fill="#4c44dc" stroke="#4c44dc" fill-opacity="0.8"/><circle cx="530.9" cy="576.9" r="2.6" fill="#4c44dc" stroke="#4c44dc" fill-opacity="0.8"/><circle cx="556.6" cy="661.8" r="2.6" fill="#4c44dc" stroke="#4c44dc" fill-opacity="0.8"/><circle cx="570.3" cy="640.3" r="2.6" fill="#4c44dc" stroke="#4c44dc" fill-opacity="0.8"/><circle cx="577.1" cy="598.2" r="2.6" fill="#4c44dc" stroke="#4c44dc" fill-opacity="0.8"/><circle cx="617.3" cy="557.9" r="2.6" fill="#4c44dc" stroke="#4c44dc" fill-opacity="0.8"/><circle cx="632.5" cy="582.6" r="2.6" fill="#4c44dc" stroke="#4c44dc" fill-opacity="0.8"/><circle cx="659.8" cy="599.8" r="2.6" fill="#4c44dc" stroke="#4c44dc" fill-opacity="0.8"/><circle cx="676.5" cy="652.3" r="2.6" fill="#4c44dc" stroke="#4c44dc" fill-opacity="0.8"/><circle cx="690.1" cy="610.6" r="2.6" fill="#4c44dc" stroke="#4c44dc" fill-opacity="0.8"/><circle cx="703.8" cy="564.3" r="2.6" fill="#4c44dc" stroke="#4c44dc" fill-opacity="0.8"/><circle cx="720.4" cy="546.9" r="2.6" fill="#4c44dc" stroke="#4c44dc" fill-opacity="0.8"/><circle cx="740.9" cy="556.2" r="2.6" fill="#4c44dc" stroke="#4c44dc" fill-opacity="0.8"/><circle cx="758.4" cy="673.0" r="2.6" fill="#4c44dc" stroke="#4c44dc" fill-opacity="0.8"/><circle cx="784.1" cy="702.9" r="2.6" fill="#4c44dc" stroke="#4c44dc" fill-opacity="0.8"/><circle cx="802.3" cy="609.8" r="2.6" fill="#4c44dc" stroke="#4c44dc" fill-opacity="0.8"/><circle cx="832.7" cy="590.0" r="2.6" fill="#4c44dc" stroke="#4c44dc" fill-opacity="0.8"/><circle cx="854.7" cy="508.2" r="2.6" fill="#4c44dc" stroke="#4c44dc" fill-opacity="0.8"/><circle cx="869.1" cy="488.6" r="2.6" fill="#4c44dc" stroke="#4c44dc" fill-opacity="0.8"/><circle cx="875.1" cy="486.3" r="2.6" fill="#4c44dc" stroke="#4c44dc" fill-opacity="0.8"/><circle cx="878.9" cy="493.3" r="2.6" fill="#4c44dc" stroke="#4c44dc" fill-opacity="0.8"/><circle cx="380.7" cy="542.1" r="2.6" fill="#e4884e" stroke="#e4884e" fill-opacity="0.8"/><circle cx="397.4" cy="517.2" r="2.6" fill="#e4884e" stroke="#e4884e" fill-opacity="0.8"/><circle cx="421.7" cy="577.1" r="2.6" fill="#e4884e" stroke="#e4884e" fill-opacity="0.8"/><circle cx="456.5" cy="550.0" r="2.6" fill="#e4884e" stroke="#e4884e" fill-opacity="0.8"/><circle cx="474.7" cy="547.0" r="2.6" fill="#e4884e" stroke="#e4884e" fill-opacity="0.8"/><circle cx="497.5" cy="541.2" r="2.6" fill="#e4884e" stroke="#e4884e" fill-opacity="0.8"/><circle cx="514.9" cy="596.1" r="2.6" fill="#e4884e" stroke="#e4884e" fill-opacity="0.8"/><circle cx="530.9" cy="598.3" r="2.6" fill="#e4884e" stroke="#e4884e" fill-opacity="0.8"/><circle cx="556.6" cy="724.6" r="2.6" fill="#e4884e" stroke="#e4884e" fill-opacity="0.8"/><circle cx="570.3" cy="762.3" r="2.6" fill="#e4884e" stroke="#e4884e" fill-opacity="0.8"/><circle cx="577.1" cy="800.1" r="2.6" fill="#e4884e" stroke="#e4884e" fill-opacity="0.8"/><circle cx="617.3" cy="649.6" r="2.6" fill="#e4884e" stroke="#e4884e" fill-opacity="0.8"/><circle cx="632.5" cy="645.6" r="2.6" fill="#e4884e" stroke="#e4884e" fill-opacity="0.8"/><circle cx="659.8" cy="702.4" r="2.6" fill="#e4884e" stroke="#e4884e" fill-opacity="0.8"/><circle cx="676.5" cy="728.3" r="2.6" fill="#e4884e" stroke="#e4884e" fill-opacity="0.8"/><circle cx="690.1" cy="651.8" r="2.6" fill="#e4884e" stroke="#e4884e" fill-opacity="0.8"/><circle cx="703.8" cy="524.3" r="2.6" fill="#e4884e" stroke="#e4884e" fill-opacity="0.8"/><circle cx="720.4" cy="493.3" r="2.6" fill="#e4884e" stroke="#e4884e" fill-opacity="0.8"/><circle cx="380.7" cy="524.0" r="2.6" fill="#5c8a6a" stroke="#5c8a6a" fill-opacity="0.8"/><circle cx="397.4" cy="502.1" r="2.6" fill="#5c8a6a" stroke="#5c8a6a" fill-opacity="0.8"/><circle cx="421.7" cy="559.2" r="2.6" fill="#5c8a6a" stroke="#5c8a6a" fill-opacity="0.8"/><circle cx="456.5" cy="544.2" r="2.6" fill="#5c8a6a" stroke="#5c8a6a" fill-opacity="0.8"/><circle cx="474.7" cy="493.3" r="2.6" fill="#5c8a6a" stroke="#5c8a6a" fill-opacity="0.8"/><circle cx="380.7" cy="553.3" r="2.6" fill="#e4884e" stroke="#e4884e" fill-opacity="0.8"/><circle cx="397.4" cy="522.0" r="2.6" fill="#e4884e" stroke="#e4884e" fill-opacity="0.8"/><circle cx="421.7" cy="581.7" r="2.6" fill="#e4884e" stroke="#e4884e" fill-opacity="0.8"/><circle cx="456.5" cy="552.1" r="2.6" fill="#e4884e" stroke="#e4884e" fill-opacity="0.8"/><circle cx="474.7" cy="550.9" r="2.6" fill="#e4884e" stroke="#e4884e" fill-opacity="0.8"/><circle cx="497.5" cy="553.0" r="2.6" fill="#e4884e" stroke="#e4884e" fill-opacity="0.8"/><circle cx="514.9" cy="605.2" r="2.6" fill="#e4884e" stroke="#e4884e" fill-opacity="0.8"/><circle cx="530.9" cy="611.2" r="2.6" fill="#e4884e" stroke="#e4884e" fill-opacity="0.8"/><circle cx="556.6" cy="760.7" r="2.6" fill="#e4884e" stroke="#e4884e" fill-opacity="0.8"/><circle cx="570.3" cy="816.8" r="2.6" fill="#e4884e" stroke="#e4884e" fill-opacity="0.8"/><circle cx="577.1" cy="884.0" r="2.6" fill="#e4884e" stroke="#e4884e" fill-opacity="0.8"/><circle cx="617.3" cy="734.3" r="2.6" fill="#e4884e" stroke="#e4884e" fill-opacity="0.8"/><circle cx="632.5" cy="667.1" r="2.6" fill="#e4884e" stroke="#e4884e" fill-opacity="0.8"/><circle cx="659.8" cy="746.5" r="2.6" fill="#e4884e" stroke="#e4884e" fill-opacity="0.8"/><circle cx="676.5" cy="747.0" r="2.6" fill="#e4884e" stroke="#e4884e" fill-opacity="0.8"/><circle cx="690.1" cy="663.9" r="2.6" fill="#e4884e" stroke="#e4884e" fill-opacity="0.8"/><circle cx="703.8" cy="605.7" r="2.6" fill="#e4884e" stroke="#e4884e" fill-opacity="0.8"/><circle cx="720.4" cy="570.1" r="2.6" fill="#e4884e" stroke="#e4884e" fill-opacity="0.8"/><circle cx="740.9" cy="585.1" r="2.6" fill="#e4884e" stroke="#e4884e" fill-opacity="0.8"/><circle cx="758.4" cy="744.1" r="2.6" fill="#e4884e" stroke="#e4884e" fill-opacity="0.8"/><circle cx="784.1" cy="806.6" r="2.6" fill="#e4884e" stroke="#e4884e" fill-opacity="0.8"/><circle cx="802.3" cy="635.4" r="2.6" fill="#e4884e" stroke="#e4884e" fill-opacity="0.8"/><circle cx="832.7" cy="606.8" r="2.6" fill="#e4884e" stroke="#e4884e" fill-opacity="0.8"/><circle cx="854.7" cy="518.6" r="2.6" fill="#e4884e" stroke="#e4884e" fill-opacity="0.8"/><circle cx="869.1" cy="509.4" r="2.6" fill="#e4884e" stroke="#e4884e" fill-opacity="0.8"/><circle cx="875.1" cy="502.0" r="2.6" fill="#e4884e" stroke="#e4884e" fill-opacity="0.8"/><circle cx="878.9" cy="501.9" r="2.6" fill="#e4884e" stroke="#e4884e" fill-opacity="0.8"/><circle cx="893.3" cy="429.5" r="2.6" fill="#e4884e" stroke="#e4884e" fill-opacity="0.8"/><circle cx="920.6" cy="509.0" r="2.6" fill="#e4884e" stroke="#e4884e" fill-opacity="0.8"/><circle cx="951.0" cy="517.2" r="2.6" fill="#e4884e" stroke="#e4884e" fill-opacity="0.8"/><circle cx="990.4" cy="517.1" r="2.6" fill="#e4884e" stroke="#e4884e" fill-opacity="0.8"/><circle cx="1028.3" cy="489.3" r="2.6" fill="#e4884e" stroke="#e4884e" fill-opacity="0.8"/><circle cx="1051.1" cy="437.8" r="2.6" fill="#e4884e" stroke="#e4884e" fill-opacity="0.8"/><circle cx="1076.9" cy="533.5" r="2.6" fill="#e4884e" stroke="#e4884e" fill-opacity="0.8"/><circle cx="1116.3" cy="504.0" r="2.6" fill="#e4884e" stroke="#e4884e" fill-opacity="0.8"/><circle cx="1139.1" cy="466.8" r="2.6" fill="#e4884e" stroke="#e4884e" fill-opacity="0.8"/><circle cx="1167.9" cy="462.2" r="2.6" fill="#e4884e" stroke="#e4884e" fill-opacity="0.8"/><circle cx="1207.3" cy="482.0" r="2.6" fill="#e4884e" stroke="#e4884e" fill-opacity="0.8"/><circle cx="1249.8" cy="510.1" r="2.6" fill="#e4884e" stroke="#e4884e" fill-opacity="0.8"/><circle cx="1298.3" cy="496.9" r="2.6" fill="#e4884e" stroke="#e4884e" fill-opacity="0.8"/><circle cx="1328.6" cy="533.9" r="2.6" fill="#e4884e" stroke="#e4884e" fill-opacity="0.8"/><circle cx="1352.9" cy="512.1" r="2.6" fill="#e4884e" stroke="#e4884e" fill-opacity="0.8"/><circle cx="1371.9" cy="409.1" r="2.6" fill="#e4884e" stroke="#e4884e" fill-opacity="0.8"/><circle cx="1383.2" cy="543.0" r="2.6" fill="#e4884e" stroke="#e4884e" fill-opacity="0.8"/><circle cx="1395.4" cy="486.8" r="2.6" fill="#e4884e" stroke="#e4884e" fill-opacity="0.8"/><circle cx="1410.5" cy="489.4" r="2.6" fill="#e4884e" stroke="#e4884e" fill-opacity="0.8"/><circle cx="1446.9" cy="515.7" r="2.6" fill="#e4884e" stroke="#e4884e" fill-opacity="0.8"/><circle cx="1480.3" cy="532.1" r="2.6" fill="#e4884e" stroke="#e4884e" fill-opacity="0.8"/><circle cx="1516.7" cy="477.5" r="2.6" fill="#e4884e" stroke="#e4884e" fill-opacity="0.8"/><circle cx="1553.1" cy="471.9" r="2.6" fill="#e4884e" stroke="#e4884e" fill-opacity="0.8"/><circle cx="1560.7" cy="450.8" r="2.6" fill="#e4884e" stroke="#e4884e" fill-opacity="0.8"/><circle cx="1604.7" cy="477.3" r="2.6" fill="#e4884e" stroke="#e4884e" fill-opacity="0.8"/><circle cx="1635.0" cy="525.3" r="2.6" fill="#e4884e" stroke="#e4884e" fill-opacity="0.8"/><circle cx="1671.4" cy="488.6" r="2.6" fill="#e4884e" stroke="#e4884e" fill-opacity="0.8"/><circle cx="1716.9" cy="493.3" r="2.6" fill="#e4884e" stroke="#e4884e" fill-opacity="0.8"/><circle cx="380.7" cy="532.9" r="2.6" fill="#8c2a1a" stroke="#8c2a1a" fill-opacity="0.8"/><circle cx="397.4" cy="506.3" r="2.6" fill="#8c2a1a" stroke="#8c2a1a" fill-opacity="0.8"/><circle cx="421.7" cy="568.7" r="2.6" fill="#8c2a1a" stroke="#8c2a1a" fill-opacity="0.8"/><circle cx="456.5" cy="545.4" r="2.6" fill="#8c2a1a" stroke="#8c2a1a" fill-opacity="0.8"/><circle cx="474.7" cy="540.0" r="2.6" fill="#8c2a1a" stroke="#8c2a1a" fill-opacity="0.8"/><circle cx="497.5" cy="532.4" r="2.6" fill="#8c2a1a" stroke="#8c2a1a" fill-opacity="0.8"/><circle cx="514.9" cy="569.5" r="2.6" fill="#8c2a1a" stroke="#8c2a1a" fill-opacity="0.8"/><circle cx="530.9" cy="573.0" r="2.6" fill="#8c2a1a" stroke="#8c2a1a" fill-opacity="0.8"/><circle cx="556.6" cy="661.2" r="2.6" fill="#8c2a1a" stroke="#8c2a1a" fill-opacity="0.8"/><circle cx="570.3" cy="644.9" r="2.6" fill="#8c2a1a" stroke="#8c2a1a" fill-opacity="0.8"/><circle cx="577.1" cy="640.7" r="2.6" fill="#8c2a1a" stroke="#8c2a1a" fill-opacity="0.8"/><circle cx="617.3" cy="566.3" r="2.6" fill="#8c2a1a" stroke="#8c2a1a" fill-opacity="0.8"/><circle cx="632.5" cy="598.2" r="2.6" fill="#8c2a1a" stroke="#8c2a1a" fill-opacity="0.8"/><circle cx="659.8" cy="636.0" r="2.6" fill="#8c2a1a" stroke="#8c2a1a" fill-opacity="0.8"/><circle cx="676.5" cy="664.6" r="2.6" fill="#8c2a1a" stroke="#8c2a1a" fill-opacity="0.8"/><circle cx="690.1" cy="624.9" r="2.6" fill="#8c2a1a" stroke="#8c2a1a" fill-opacity="0.8"/><circle cx="703.8" cy="569.3" r="2.6" fill="#8c2a1a" stroke="#8c2a1a" fill-opacity="0.8"/><circle cx="720.4" cy="549.3" r="2.6" fill="#8c2a1a" stroke="#8c2a1a" fill-opacity="0.8"/><circle cx="740.9" cy="558.6" r="2.6" fill="#8c2a1a" stroke="#8c2a1a" fill-opacity="0.8"/><circle cx="758.4" cy="664.7" r="2.6" fill="#8c2a1a" stroke="#8c2a1a" fill-opacity="0.8"/><circle cx="784.1" cy="698.4" r="2.6" fill="#8c2a1a" stroke="#8c2a1a" fill-opacity="0.8"/><circle cx="802.3" cy="608.8" r="2.6" fill="#8c2a1a" stroke="#8c2a1a" fill-opacity="0.8"/><circle cx="832.7" cy="586.8" r="2.6" fill="#8c2a1a" stroke="#8c2a1a" fill-opacity="0.8"/><circle cx="854.7" cy="505.1" r="2.6" fill="#8c2a1a" stroke="#8c2a1a" fill-opacity="0.8"/><circle cx="869.1" cy="486.0" r="2.6" fill="#8c2a1a" stroke="#8c2a1a" fill-opacity="0.8"/><circle cx="875.1" cy="478.4" r="2.6" fill="#8c2a1a" stroke="#8c2a1a" fill-opacity="0.8"/><circle cx="878.9" cy="489.6" r="2.6" fill="#8c2a1a" stroke="#8c2a1a" fill-opacity="0.8"/><circle cx="893.3" cy="493.3" r="2.6" fill="#8c2a1a" stroke="#8c2a1a" fill-opacity="0.8"/><circle cx="380.7" cy="493.3" r="2.6" fill="#44d4a4" stroke="#44d4a4" fill-opacity="0.8"/><circle cx="380.7" cy="536.9" r="2.6" fill="#8c2a1a" stroke="#8c2a1a" fill-opacity="0.8"/><circle cx="397.4" cy="509.5" r="2.6" fill="#8c2a1a" stroke="#8c2a1a" fill-opacity="0.8"/><circle cx="421.7" cy="569.4" r="2.6" fill="#8c2a1a" stroke="#8c2a1a" fill-opacity="0.8"/><circle cx="456.5" cy="544.6" r="2.6" fill="#8c2a1a" stroke="#8c2a1a" fill-opacity="0.8"/><circle cx="474.7" cy="539.9" r="2.6" fill="#8c2a1a" stroke="#8c2a1a" fill-opacity="0.8"/><circle cx="497.5" cy="533.8" r="2.6" fill="#8c2a1a" stroke="#8c2a1a" fill-opacity="0.8"/><circle cx="514.9" cy="577.4" r="2.6" fill="#8c2a1a" stroke="#8c2a1a" fill-opacity="0.8"/><circle cx="530.9" cy="576.9" r="2.6" fill="#8c2a1a" stroke="#8c2a1a" fill-opacity="0.8"/><circle cx="556.6" cy="664.9" r="2.6" fill="#8c2a1a" stroke="#8c2a1a" fill-opacity="0.8"/><circle cx="570.3" cy="689.9" r="2.6" fill="#8c2a1a" stroke="#8c2a1a" fill-opacity="0.8"/><circle cx="577.1" cy="653.1" r="2.6" fill="#8c2a1a" stroke="#8c2a1a" fill-opacity="0.8"/><circle cx="617.3" cy="591.3" r="2.6" fill="#8c2a1a" stroke="#8c2a1a" fill-opacity="0.8"/><circle cx="632.5" cy="613.8" r="2.6" fill="#8c2a1a" stroke="#8c2a1a" fill-opacity="0.8"/><circle cx="659.8" cy="663.2" r="2.6" fill="#8c2a1a" stroke="#8c2a1a" fill-opacity="0.8"/><circle cx="676.5" cy="698.4" r="2.6" fill="#8c2a1a" stroke="#8c2a1a" fill-opacity="0.8"/><circle cx="690.1" cy="637.3" r="2.6" fill="#8c2a1a" stroke="#8c2a1a" fill-opacity="0.8"/><circle cx="703.8" cy="520.5" r="2.6" fill="#8c2a1a" stroke="#8c2a1a" fill-opacity="0.8"/><circle cx="720.4" cy="493.3" r="2.6" fill="#8c2a1a" stroke="#8c2a1a" fill-opacity="0.8"/><circle cx="380.7" cy="528.4" r="2.6" fill="#e4884e" stroke="#e4884e" fill-opacity="0.8"/><circle cx="397.4" cy="505.7" r="2.6" fill="#e4884e" stroke="#e4884e" fill-opacity="0.8"/><circle cx="421.7" cy="567.5" r="2.6" fill="#e4884e" stroke="#e4884e" fill-opacity="0.8"/><circle cx="456.5" cy="545.4" r="2.6" fill="#e4884e" stroke="#e4884e" fill-opacity="0.8"/><circle cx="474.7" cy="539.0" r="2.6" fill="#e4884e" stroke="#e4884e" fill-opacity="0.8"/><circle cx="497.5" cy="532.2" r="2.6" fill="#e4884e" stroke="#e4884e" fill-opacity="0.8"/><circle cx="514.9" cy="569.3" r="2.6" fill="#e4884e" stroke="#e4884e" fill-opacity="0.8"/><circle cx="530.9" cy="493.3" r="2.6" fill="#e4884e" stroke="#e4884e" fill-opacity="0.8"/><circle cx="380.7" cy="545.1" r="2.6" fill="#e4884e" stroke="#e4884e" fill-opacity="0.8"/><circle cx="397.4" cy="519.7" r="2.6" fill="#e4884e" stroke="#e4884e" fill-opacity="0.8"/><circle cx="421.7" cy="578.9" r="2.6" fill="#e4884e" stroke="#e4884e" fill-opacity="0.8"/><circle cx="456.5" cy="550.8" r="2.6" fill="#e4884e" stroke="#e4884e" fill-opacity="0.8"/><circle cx="474.7" cy="548.2" r="2.6" fill="#e4884e" stroke="#e4884e" fill-opacity="0.8"/><circle cx="497.5" cy="546.0" r="2.6" fill="#e4884e" stroke="#e4884e" fill-opacity="0.8"/><circle cx="514.9" cy="597.7" r="2.6" fill="#e4884e" stroke="#e4884e" fill-opacity="0.8"/><circle cx="530.9" cy="600.7" r="2.6" fill="#e4884e" stroke="#e4884e" fill-opacity="0.8"/><circle cx="556.6" cy="735.4" r="2.6" fill="#e4884e" stroke="#e4884e" fill-opacity="0.8"/><circle cx="570.3" cy="769.1" r="2.6" fill="#e4884e" stroke="#e4884e" fill-opacity="0.8"/><circle cx="577.1" cy="800.0" r="2.6" fill="#e4884e" stroke="#e4884e" fill-opacity="0.8"/><circle cx="617.3" cy="669.2" r="2.6" fill="#e4884e" stroke="#e4884e" fill-opacity="0.8"/><circle cx="632.5" cy="647.2" r="2.6" fill="#e4884e" stroke="#e4884e" fill-opacity="0.8"/><circle cx="659.8" cy="710.5" r="2.6" fill="#e4884e" stroke="#e4884e" fill-opacity="0.8"/><circle cx="676.5" cy="725.9" r="2.6" fill="#e4884e" stroke="#e4884e" fill-opacity="0.8"/><circle cx="690.1" cy="652.2" r="2.6" fill="#e4884e" stroke="#e4884e" fill-opacity="0.8"/><circle cx="703.8" cy="597.8" r="2.6" fill="#e4884e" stroke="#e4884e" fill-opacity="0.8"/><circle cx="720.4" cy="565.8" r="2.6" fill="#e4884e" stroke="#e4884e" fill-opacity="0.8"/><circle cx="740.9" cy="582.9" r="2.6" fill="#e4884e" stroke="#e4884e" fill-opacity="0.8"/><circle cx="758.4" cy="728.2" r="2.6" fill="#e4884e" stroke="#e4884e" fill-opacity="0.8"/><circle cx="784.1" cy="786.8" r="2.6" fill="#e4884e" stroke="#e4884e" fill-opacity="0.8"/><circle cx="802.3" cy="627.4" r="2.6" fill="#e4884e" stroke="#e4884e" fill-opacity="0.8"/><circle cx="832.7" cy="602.0" r="2.6" fill="#e4884e" stroke="#e4884e" fill-opacity="0.8"/><circle cx="854.7" cy="516.9" r="2.6" fill="#e4884e" stroke="#e4884e" fill-opacity="0.8"/><circle cx="869.1" cy="502.5" r="2.6" fill="#e4884e" stroke="#e4884e" fill-opacity="0.8"/><circle cx="875.1" cy="498.5" r="2.6" fill="#e4884e" stroke="#e4884e" fill-opacity="0.8"/><circle cx="878.9" cy="498.7" r="2.6" fill="#e4884e" stroke="#e4884e" fill-opacity="0.8"/><circle cx="893.3" cy="423.0" r="2.6" fill="#e4884e" stroke="#e4884e" fill-opacity="0.8"/><circle cx="920.6" cy="502.4" r="2.6" fill="#e4884e" stroke="#e4884e" fill-opacity="0.8"/><circle cx="951.0" cy="513.1" r="2.6" fill="#e4884e" stroke="#e4884e" fill-opacity="0.8"/><circle cx="990.4" cy="508.9" r="2.6" fill="#e4884e" stroke="#e4884e" fill-opacity="0.8"/><circle cx="1028.3" cy="493.3" r="2.6" fill="#e4884e" stroke="#e4884e" fill-opacity="0.8"/><circle cx="380.7" cy="528.1" r="2.6" fill="#8c2a1a" stroke="#8c2a1a" fill-opacity="0.8"/><circle cx="397.4" cy="505.5" r="2.6" fill="#8c2a1a" stroke="#8c2a1a" fill-opacity="0.8"/><circle cx="421.7" cy="567.6" r="2.6" fill="#8c2a1a" stroke="#8c2a1a" fill-opacity="0.8"/><circle cx="456.5" cy="545.6" r="2.6" fill="#8c2a1a" stroke="#8c2a1a" fill-opacity="0.8"/><circle cx="474.7" cy="539.0" r="2.6" fill="#8c2a1a" stroke="#8c2a1a" fill-opacity="0.8"/><circle cx="497.5" cy="533.8" r="2.6" fill="#8c2a1a" stroke="#8c2a1a" fill-opacity="0.8"/><circle cx="514.9" cy="576.5" r="2.6" fill="#8c2a1a" stroke="#8c2a1a" fill-opacity="0.8"/><circle cx="530.9" cy="577.5" r="2.6" fill="#8c2a1a" stroke="#8c2a1a" fill-opacity="0.8"/><circle cx="556.6" cy="659.8" r="2.6" fill="#8c2a1a" stroke="#8c2a1a" fill-opacity="0.8"/><circle cx="570.3" cy="651.9" r="2.6" fill="#8c2a1a" stroke="#8c2a1a" fill-opacity="0.8"/><circle cx="577.1" cy="654.5" r="2.6" fill="#8c2a1a" stroke="#8c2a1a" fill-opacity="0.8"/><circle cx="617.3" cy="570.0" r="2.6" fill="#8c2a1a" stroke="#8c2a1a" fill-opacity="0.8"/><circle cx="632.5" cy="594.8" r="2.6" fill="#8c2a1a" stroke="#8c2a1a" fill-opacity="0.8"/><circle cx="659.8" cy="625.7" r="2.6" fill="#8c2a1a" stroke="#8c2a1a" fill-opacity="0.8"/><circle cx="676.5" cy="659.6" r="2.6" fill="#8c2a1a" stroke="#8c2a1a" fill-opacity="0.8"/><circle cx="690.1" cy="614.0" r="2.6" fill="#8c2a1a" stroke="#8c2a1a" fill-opacity="0.8"/><circle cx="703.8" cy="561.2" r="2.6" fill="#8c2a1a" stroke="#8c2a1a" fill-opacity="0.8"/><circle cx="720.4" cy="544.1" r="2.6" fill="#8c2a1a" stroke="#8c2a1a" fill-opacity="0.8"/><circle cx="740.9" cy="552.1" r="2.6" fill="#8c2a1a" stroke="#8c2a1a" fill-opacity="0.8"/><circle cx="758.4" cy="660.3" r="2.6" fill="#8c2a1a" stroke="#8c2a1a" fill-opacity="0.8"/><circle cx="784.1" cy="680.9" r="2.6" fill="#8c2a1a" stroke="#8c2a1a" fill-opacity="0.8"/><circle cx="802.3" cy="609.1" r="2.6" fill="#8c2a1a" stroke="#8c2a1a" fill-opacity="0.8"/><circle cx="832.7" cy="586.7" r="2.6" fill="#8c2a1a" stroke="#8c2a1a" fill-opacity="0.8"/><circle cx="854.7" cy="507.2" r="2.6" fill="#8c2a1a" stroke="#8c2a1a" fill-opacity="0.8"/><circle cx="869.1" cy="487.1" r="2.6" fill="#8c2a1a" stroke="#8c2a1a" fill-opacity="0.8"/><circle cx="875.1" cy="481.3" r="2.6" fill="#8c2a1a" stroke="#8c2a1a" fill-opacity="0.8"/><circle cx="878.9" cy="486.2" r="2.6" fill="#8c2a1a" stroke="#8c2a1a" fill-opacity="0.8"/><circle cx="893.3" cy="410.2" r="2.6" fill="#8c2a1a" stroke="#8c2a1a" fill-opacity="0.8"/><circle cx="920.6" cy="487.4" r="2.6" fill="#8c2a1a" stroke="#8c2a1a" fill-opacity="0.8"/><circle cx="951.0" cy="503.1" r="2.6" fill="#8c2a1a" stroke="#8c2a1a" fill-opacity="0.8"/><circle cx="990.4" cy="506.8" r="2.6" fill="#8c2a1a" stroke="#8c2a1a" fill-opacity="0.8"/><circle cx="1028.3" cy="483.6" r="2.6" fill="#8c2a1a" stroke="#8c2a1a" fill-opacity="0.8"/><circle cx="1051.1" cy="493.3" r="2.6" fill="#8c2a1a" stroke="#8c2a1a" fill-opacity="0.8"/><circle cx="380.7" cy="541.9" r="2.6" fill="#7078c4" stroke="#7078c4" fill-opacity="0.8"/><circle cx="397.4" cy="515.7" r="2.6" fill="#7078c4" stroke="#7078c4" fill-opacity="0.8"/><circle cx="421.7" cy="576.4" r="2.6" fill="#7078c4" stroke="#7078c4" fill-opacity="0.8"/><circle cx="456.5" cy="549.4" r="2.6" fill="#7078c4" stroke="#7078c4" fill-opacity="0.8"/><circle cx="474.7" cy="547.0" r="2.6" fill="#7078c4" stroke="#7078c4" fill-opacity="0.8"/><circle cx="497.5" cy="543.9" r="2.6" fill="#7078c4" stroke="#7078c4" fill-opacity="0.8"/><circle cx="514.9" cy="596.1" r="2.6" fill="#7078c4" stroke="#7078c4" fill-opacity="0.8"/><circle cx="530.9" cy="595.5" r="2.6" fill="#7078c4" stroke="#7078c4" fill-opacity="0.8"/><circle cx="556.6" cy="728.2" r="2.6" fill="#7078c4" stroke="#7078c4" fill-opacity="0.8"/><circle cx="570.3" cy="770.0" r="2.6" fill="#7078c4" stroke="#7078c4" fill-opacity="0.8"/><circle cx="577.1" cy="784.6" r="2.6" fill="#7078c4" stroke="#7078c4" fill-opacity="0.8"/><circle cx="617.3" cy="632.7" r="2.6" fill="#7078c4" stroke="#7078c4" fill-opacity="0.8"/><circle cx="632.5" cy="635.2" r="2.6" fill="#7078c4" stroke="#7078c4" fill-opacity="0.8"/><circle cx="659.8" cy="699.8" r="2.6" fill="#7078c4" stroke="#7078c4" fill-opacity="0.8"/><circle cx="676.5" cy="708.9" r="2.6" fill="#7078c4" stroke="#7078c4" fill-opacity="0.8"/><circle cx="690.1" cy="641.0" r="2.6" fill="#7078c4" stroke="#7078c4" fill-opacity="0.8"/><circle cx="703.8" cy="590.3" r="2.6" fill="#7078c4" stroke="#7078c4" fill-opacity="0.8"/><circle cx="720.4" cy="561.0" r="2.6" fill="#7078c4" stroke="#7078c4" fill-opacity="0.8"/><circle cx="740.9" cy="574.4" r="2.6" fill="#7078c4" stroke="#7078c4" fill-opacity="0.8"/><circle cx="758.4" cy="714.0" r="2.6" fill="#7078c4" stroke="#7078c4" fill-opacity="0.8"/><circle cx="784.1" cy="762.8" r="2.6" fill="#7078c4" stroke="#7078c4" fill-opacity="0.8"/><circle cx="802.3" cy="625.6" r="2.6" fill="#7078c4" stroke="#7078c4" fill-opacity="0.8"/><circle cx="832.7" cy="600.9" r="2.6" fill="#7078c4" stroke="#7078c4" fill-opacity="0.8"/><circle cx="854.7" cy="515.1" r="2.6" fill="#7078c4" stroke="#7078c4" fill-opacity="0.8"/><circle cx="869.1" cy="501.5" r="2.6" fill="#7078c4" stroke="#7078c4" fill-opacity="0.8"/><circle cx="875.1" cy="496.2" r="2.6" fill="#7078c4" stroke="#7078c4" fill-opacity="0.8"/><circle cx="878.9" cy="496.9" r="2.6" fill="#7078c4" stroke="#7078c4" fill-opacity="0.8"/><circle cx="893.3" cy="423.5" r="2.6" fill="#7078c4" stroke="#7078c4" fill-opacity="0.8"/><circle cx="920.6" cy="502.4" r="2.6" fill="#7078c4" stroke="#7078c4" fill-opacity="0.8"/><circle cx="951.0" cy="512.9" r="2.6" fill="#7078c4" stroke="#7078c4" fill-opacity="0.8"/><circle cx="990.4" cy="513.5" r="2.6" fill="#7078c4" stroke="#7078c4" fill-opacity="0.8"/><circle cx="1028.3" cy="483.8" r="2.6" fill="#7078c4" stroke="#7078c4" fill-opacity="0.8"/><circle cx="1051.1" cy="435.3" r="2.6" fill="#7078c4" stroke="#7078c4" fill-opacity="0.8"/><circle cx="1076.9" cy="529.5" r="2.6" fill="#7078c4" stroke="#7078c4" fill-opacity="0.8"/><circle cx="1116.3" cy="497.6" r="2.6" fill="#7078c4" stroke="#7078c4" fill-opacity="0.8"/><circle cx="1139.1" cy="460.6" r="2.6" fill="#7078c4" stroke="#7078c4" fill-opacity="0.8"/><circle cx="1167.9" cy="460.4" r="2.6" fill="#7078c4" stroke="#7078c4" fill-opacity="0.8"/><circle cx="1207.3" cy="480.5" r="2.6" fill="#7078c4" stroke="#7078c4" fill-opacity="0.8"/><circle cx="1249.8" cy="508.0" r="2.6" fill="#7078c4" stroke="#7078c4" fill-opacity="0.8"/><circle cx="1298.3" cy="490.2" r="2.6" fill="#7078c4" stroke="#7078c4" fill-opacity="0.8"/><circle cx="1328.6" cy="531.2" r="2.6" fill="#7078c4" stroke="#7078c4" fill-opacity="0.8"/><circle cx="1352.9" cy="510.3" r="2.6" fill="#7078c4" stroke="#7078c4" fill-opacity="0.8"/><circle cx="1371.9" cy="407.7" r="2.6" fill="#7078c4" stroke="#7078c4" fill-opacity="0.8"/><circle cx="1383.2" cy="541.2" r="2.6" fill="#7078c4" stroke="#7078c4" fill-opacity="0.8"/><circle cx="1395.4" cy="485.1" r="2.6" fill="#7078c4" stroke="#7078c4" fill-opacity="0.8"/><circle cx="1410.5" cy="487.7" r="2.6" fill="#7078c4" stroke="#7078c4" fill-opacity="0.8"/><circle cx="1446.9" cy="500.4" r="2.6" fill="#7078c4" stroke="#7078c4" fill-opacity="0.8"/><circle cx="1480.3" cy="493.3" r="2.6" fill="#7078c4" stroke="#7078c4" fill-opacity="0.8"/><circle cx="380.7" cy="522.2" r="2.6" fill="#7078c4" stroke="#7078c4" fill-opacity="0.8"/><circle cx="397.4" cy="502.0" r="2.6" fill="#7078c4" stroke="#7078c4" fill-opacity="0.8"/><circle cx="421.7" cy="549.0" r="2.6" fill="#7078c4" stroke="#7078c4" fill-opacity="0.8"/><circle cx="456.5" cy="529.3" r="2.6" fill="#7078c4" stroke="#7078c4" fill-opacity="0.8"/><circle cx="474.7" cy="515.3" r="2.6" fill="#7078c4" stroke="#7078c4" fill-opacity="0.8"/><circle cx="497.5" cy="530.1" r="2.6" fill="#7078c4" stroke="#7078c4" fill-opacity="0.8"/><circle cx="514.9" cy="552.8" r="2.6" fill="#7078c4" stroke="#7078c4" fill-opacity="0.8"/><circle cx="530.9" cy="562.8" r="2.6" fill="#7078c4" stroke="#7078c4" fill-opacity="0.8"/><circle cx="556.6" cy="643.1" r="2.6" fill="#7078c4" stroke="#7078c4" fill-opacity="0.8"/><circle cx="570.3" cy="642.7" r="2.6" fill="#7078c4" stroke="#7078c4" fill-opacity="0.8"/><circle cx="577.1" cy="605.1" r="2.6" fill="#7078c4" stroke="#7078c4" fill-opacity="0.8"/><circle cx="617.3" cy="560.2" r="2.6" fill="#7078c4" stroke="#7078c4" fill-opacity="0.8"/><circle cx="632.5" cy="591.2" r="2.6" fill="#7078c4" stroke="#7078c4" fill-opacity="0.8"/><circle cx="659.8" cy="628.0" r="2.6" fill="#7078c4" stroke="#7078c4" fill-opacity="0.8"/><circle cx="676.5" cy="657.3" r="2.6" fill="#7078c4" stroke="#7078c4" fill-opacity="0.8"/><circle cx="690.1" cy="607.0" r="2.6" fill="#7078c4" stroke="#7078c4" fill-opacity="0.8"/><circle cx="703.8" cy="560.9" r="2.6" fill="#7078c4" stroke="#7078c4" fill-opacity="0.8"/><circle cx="720.4" cy="542.5" r="2.6" fill="#7078c4" stroke="#7078c4" fill-opacity="0.8"/><circle cx="740.9" cy="547.0" r="2.6" fill="#7078c4" stroke="#7078c4" fill-opacity="0.8"/><circle cx="758.4" cy="641.9" r="2.6" fill="#7078c4" stroke="#7078c4" fill-opacity="0.8"/><circle cx="784.1" cy="655.2" r="2.6" fill="#7078c4" stroke="#7078c4" fill-opacity="0.8"/><circle cx="802.3" cy="553.9" r="2.6" fill="#7078c4" stroke="#7078c4" fill-opacity="0.8"/><circle cx="832.7" cy="576.3" r="2.6" fill="#7078c4" stroke="#7078c4" fill-opacity="0.8"/><circle cx="854.7" cy="503.5" r="2.6" fill="#7078c4" stroke="#7078c4" fill-opacity="0.8"/><circle cx="869.1" cy="481.1" r="2.6" fill="#7078c4" stroke="#7078c4" fill-opacity="0.8"/><circle cx="875.1" cy="475.6" r="2.6" fill="#7078c4" stroke="#7078c4" fill-opacity="0.8"/><circle cx="878.9" cy="480.2" r="2.6" fill="#7078c4" stroke="#7078c4" fill-opacity="0.8"/><circle cx="893.3" cy="404.2" r="2.6" fill="#7078c4" stroke="#7078c4" fill-opacity="0.8"/><circle cx="920.6" cy="479.7" r="2.6" fill="#7078c4" stroke="#7078c4" fill-opacity="0.8"/><circle cx="951.0" cy="495.9" r="2.6" fill="#7078c4" stroke="#7078c4" fill-opacity="0.8"/><circle cx="990.4" cy="493.3" r="2.6" fill="#7078c4" stroke="#7078c4" fill-opacity="0.8"/><circle cx="380.7" cy="521.8" r="2.6" fill="#e4884e" stroke="#e4884e" fill-opacity="0.8"/><circle cx="397.4" cy="504.0" r="2.6" fill="#e4884e" stroke="#e4884e" fill-opacity="0.8"/><circle cx="421.7" cy="563.3" r="2.6" fill="#e4884e" stroke="#e4884e" fill-opacity="0.8"/><circle cx="456.5" cy="544.0" r="2.6" fill="#e4884e" stroke="#e4884e" fill-opacity="0.8"/><circle cx="474.7" cy="526.2" r="2.6" fill="#e4884e" stroke="#e4884e" fill-opacity="0.8"/><circle cx="497.5" cy="530.4" r="2.6" fill="#e4884e" stroke="#e4884e" fill-opacity="0.8"/><circle cx="514.9" cy="538.6" r="2.6" fill="#e4884e" stroke="#e4884e" fill-opacity="0.8"/><circle cx="530.9" cy="519.3" r="2.6" fill="#e4884e" stroke="#e4884e" fill-opacity="0.8"/><circle cx="556.6" cy="615.7" r="2.6" fill="#e4884e" stroke="#e4884e" fill-opacity="0.8"/><circle cx="570.3" cy="561.5" r="2.6" fill="#e4884e" stroke="#e4884e" fill-opacity="0.8"/><circle cx="577.1" cy="525.3" r="2.6" fill="#e4884e" stroke="#e4884e" fill-opacity="0.8"/><circle cx="617.3" cy="504.0" r="2.6" fill="#e4884e" stroke="#e4884e" fill-opacity="0.8"/><circle cx="632.5" cy="573.2" r="2.6" fill="#e4884e" stroke="#e4884e" fill-opacity="0.8"/><circle cx="659.8" cy="569.5" r="2.6" fill="#e4884e" stroke="#e4884e" fill-opacity="0.8"/><circle cx="676.5" cy="594.6" r="2.6" fill="#e4884e" stroke="#e4884e" fill-opacity="0.8"/><circle cx="690.1" cy="590.0" r="2.6" fill="#e4884e" stroke="#e4884e" fill-opacity="0.8"/><circle cx="703.8" cy="548.2" r="2.6" fill="#e4884e" stroke="#e4884e" fill-opacity="0.8"/><circle cx="720.4" cy="541.8" r="2.6" fill="#e4884e" stroke="#e4884e" fill-opacity="0.8"/><circle cx="740.9" cy="547.6" r="2.6" fill="#e4884e" stroke="#e4884e" fill-opacity="0.8"/><circle cx="758.4" cy="654.6" r="2.6" fill="#e4884e" stroke="#e4884e" fill-opacity="0.8"/><circle cx="784.1" cy="666.8" r="2.6" fill="#e4884e" stroke="#e4884e" fill-opacity="0.8"/><circle cx="802.3" cy="605.0" r="2.6" fill="#e4884e" stroke="#e4884e" fill-opacity="0.8"/><circle cx="832.7" cy="577.0" r="2.6" fill="#e4884e" stroke="#e4884e" fill-opacity="0.8"/><circle cx="854.7" cy="501.7" r="2.6" fill="#e4884e" stroke="#e4884e" fill-opacity="0.8"/><circle cx="869.1" cy="480.0" r="2.6" fill="#e4884e" stroke="#e4884e" fill-opacity="0.8"/><circle cx="875.1" cy="472.0" r="2.6" fill="#e4884e" stroke="#e4884e" fill-opacity="0.8"/><circle cx="878.9" cy="477.3" r="2.6" fill="#e4884e" stroke="#e4884e" fill-opacity="0.8"/><circle cx="893.3" cy="402.9" r="2.6" fill="#e4884e" stroke="#e4884e" fill-opacity="0.8"/><circle cx="920.6" cy="476.8" r="2.6" fill="#e4884e" stroke="#e4884e" fill-opacity="0.8"/><circle cx="951.0" cy="493.3" r="2.6" fill="#e4884e" stroke="#e4884e" fill-opacity="0.8"/><circle cx="990.4" cy="499.1" r="2.6" fill="#e4884e" stroke="#e4884e" fill-opacity="0.8"/><circle cx="1028.3" cy="470.9" r="2.6" fill="#e4884e" stroke="#e4884e" fill-opacity="0.8"/><circle cx="1051.1" cy="419.7" r="2.6" fill="#e4884e" stroke="#e4884e" fill-opacity="0.8"/><circle cx="1076.9" cy="493.3" r="2.6" fill="#e4884e" stroke="#e4884e" fill-opacity="0.8"/><circle cx="1116.3" cy="478.9" r="2.6" fill="#e4884e" stroke="#e4884e" fill-opacity="0.8"/><circle cx="1139.1" cy="452.6" r="2.6" fill="#e4884e" stroke="#e4884e" fill-opacity="0.8"/><circle cx="1167.9" cy="442.7" r="2.6" fill="#e4884e" stroke="#e4884e" fill-opacity="0.8"/><circle cx="1207.3" cy="467.2" r="2.6" fill="#e4884e" stroke="#e4884e" fill-opacity="0.8"/><circle cx="1249.8" cy="494.0" r="2.6" fill="#e4884e" stroke="#e4884e" fill-opacity="0.8"/><circle cx="1298.3" cy="468.4" r="2.6" fill="#e4884e" stroke="#e4884e" fill-opacity="0.8"/><circle cx="1328.6" cy="525.3" r="2.6" fill="#e4884e" stroke="#e4884e" fill-opacity="0.8"/><circle cx="1352.9" cy="493.3" r="2.6" fill="#e4884e" stroke="#e4884e" fill-opacity="0.8"/><circle cx="1371.9" cy="493.3" r="2.6" fill="#e4884e" stroke="#e4884e" fill-opacity="0.8"/><circle cx="380.7" cy="545.4" r="2.6" fill="#7078c4" stroke="#7078c4" fill-opacity="0.8"/><circle cx="397.4" cy="516.6" r="2.6" fill="#7078c4" stroke="#7078c4" fill-opacity="0.8"/><circle cx="421.7" cy="574.4" r="2.6" fill="#7078c4" stroke="#7078c4" fill-opacity="0.8"/><circle cx="456.5" cy="549.3" r="2.6" fill="#7078c4" stroke="#7078c4" fill-opacity="0.8"/><circle cx="474.7" cy="546.6" r="2.6" fill="#7078c4" stroke="#7078c4" fill-opacity="0.8"/><circle cx="497.5" cy="539.9" r="2.6" fill="#7078c4" stroke="#7078c4" fill-opacity="0.8"/><circle cx="514.9" cy="592.8" r="2.6" fill="#7078c4" stroke="#7078c4" fill-opacity="0.8"/><circle cx="530.9" cy="588.3" r="2.6" fill="#7078c4" stroke="#7078c4" fill-opacity="0.8"/><circle cx="556.6" cy="690.9" r="2.6" fill="#7078c4" stroke="#7078c4" fill-opacity="0.8"/><circle cx="570.3" cy="715.7" r="2.6" fill="#7078c4" stroke="#7078c4" fill-opacity="0.8"/><circle cx="577.1" cy="746.8" r="2.6" fill="#7078c4" stroke="#7078c4" fill-opacity="0.8"/><circle cx="617.3" cy="608.4" r="2.6" fill="#7078c4" stroke="#7078c4" fill-opacity="0.8"/><circle cx="632.5" cy="620.7" r="2.6" fill="#7078c4" stroke="#7078c4" fill-opacity="0.8"/><circle cx="659.8" cy="685.2" r="2.6" fill="#7078c4" stroke="#7078c4" fill-opacity="0.8"/><circle cx="676.5" cy="700.5" r="2.6" fill="#7078c4" stroke="#7078c4" fill-opacity="0.8"/><circle cx="690.1" cy="642.6" r="2.6" fill="#7078c4" stroke="#7078c4" fill-opacity="0.8"/><circle cx="703.8" cy="588.1" r="2.6" fill="#7078c4" stroke="#7078c4" fill-opacity="0.8"/><circle cx="720.4" cy="562.5" r="2.6" fill="#7078c4" stroke="#7078c4" fill-opacity="0.8"/><circle cx="740.9" cy="575.0" r="2.6" fill="#7078c4" stroke="#7078c4" fill-opacity="0.8"/><circle cx="758.4" cy="716.1" r="2.6" fill="#7078c4" stroke="#7078c4" fill-opacity="0.8"/><circle cx="784.1" cy="763.9" r="2.6" fill="#7078c4" stroke="#7078c4" fill-opacity="0.8"/><circle cx="802.3" cy="623.2" r="2.6" fill="#7078c4" stroke="#7078c4" fill-opacity="0.8"/><circle cx="832.7" cy="597.6" r="2.6" fill="#7078c4" stroke="#7078c4" fill-opacity="0.8"/><circle cx="854.7" cy="513.5" r="2.6" fill="#7078c4" stroke="#7078c4" fill-opacity="0.8"/><circle cx="869.1" cy="495.7" r="2.6" fill="#7078c4" stroke="#7078c4" fill-opacity="0.8"/><circle cx="875.1" cy="489.2" r="2.6" fill="#7078c4" stroke="#7078c4" fill-opacity="0.8"/><circle cx="878.9" cy="490.6" r="2.6" fill="#7078c4" stroke="#7078c4" fill-opacity="0.8"/><circle cx="893.3" cy="416.4" r="2.6" fill="#7078c4" stroke="#7078c4" fill-opacity="0.8"/><circle cx="920.6" cy="493.9" r="2.6" fill="#7078c4" stroke="#7078c4" fill-opacity="0.8"/><circle cx="951.0" cy="507.8" r="2.6" fill="#7078c4" stroke="#7078c4" fill-opacity="0.8"/><circle cx="990.4" cy="510.6" r="2.6" fill="#7078c4" stroke="#7078c4" fill-opacity="0.8"/><circle cx="1028.3" cy="479.8" r="2.6" fill="#7078c4" stroke="#7078c4" fill-opacity="0.8"/><circle cx="1051.1" cy="432.1" r="2.6" fill="#7078c4" stroke="#7078c4" fill-opacity="0.8"/><circle cx="1076.9" cy="524.9" r="2.6" fill="#7078c4" stroke="#7078c4" fill-opacity="0.8"/><circle cx="1116.3" cy="492.0" r="2.6" fill="#7078c4" stroke="#7078c4" fill-opacity="0.8"/><circle cx="1139.1" cy="458.6" r="2.6" fill="#7078c4" stroke="#7078c4" fill-opacity="0.8"/><circle cx="1167.9" cy="458.1" r="2.6" fill="#7078c4" stroke="#7078c4" fill-opacity="0.8"/><circle cx="1207.3" cy="479.1" r="2.6" fill="#7078c4" stroke="#7078c4" fill-opacity="0.8"/><circle cx="1249.8" cy="505.7" r="2.6" fill="#7078c4" stroke="#7078c4" fill-opacity="0.8"/><circle cx="1298.3" cy="487.6" r="2.6" fill="#7078c4" stroke="#7078c4" fill-opacity="0.8"/><circle cx="1328.6" cy="529.4" r="2.6" fill="#7078c4" stroke="#7078c4" fill-opacity="0.8"/><circle cx="1352.9" cy="508.4" r="2.6" fill="#7078c4" stroke="#7078c4" fill-opacity="0.8"/><circle cx="1371.9" cy="406.2" r="2.6" fill="#7078c4" stroke="#7078c4" fill-opacity="0.8"/><circle cx="1383.2" cy="539.4" r="2.6" fill="#7078c4" stroke="#7078c4" fill-opacity="0.8"/><circle cx="1395.4" cy="483.5" r="2.6" fill="#7078c4" stroke="#7078c4" fill-opacity="0.8"/><circle cx="1410.5" cy="486.5" r="2.6" fill="#7078c4" stroke="#7078c4" fill-opacity="0.8"/><circle cx="1446.9" cy="503.3" r="2.6" fill="#7078c4" stroke="#7078c4" fill-opacity="0.8"/><circle cx="1480.3" cy="527.6" r="2.6" fill="#7078c4" stroke="#7078c4" fill-opacity="0.8"/><circle cx="1516.7" cy="470.8" r="2.6" fill="#7078c4" stroke="#7078c4" fill-opacity="0.8"/><circle cx="1553.1" cy="466.6" r="2.6" fill="#7078c4" stroke="#7078c4" fill-opacity="0.8"/><circle cx="1560.7" cy="437.9" r="2.6" fill="#7078c4" stroke="#7078c4" fill-opacity="0.8"/><circle cx="1604.7" cy="471.9" r="2.6" fill="#7078c4" stroke="#7078c4" fill-opacity="0.8"/><circle cx="1635.0" cy="518.1" r="2.6" fill="#7078c4" stroke="#7078c4" fill-opacity="0.8"/><circle cx="1671.4" cy="493.3" r="2.6" fill="#7078c4" stroke="#7078c4" fill-opacity="0.8"/><circle cx="380.7" cy="552.6" r="2.6" fill="#5c8a6a" stroke="#5c8a6a" fill-opacity="0.8"/><circle cx="397.4" cy="520.6" r="2.6" fill="#5c8a6a" stroke="#5c8a6a" fill-opacity="0.8"/><circle cx="421.7" cy="580.2" r="2.6" fill="#5c8a6a" stroke="#5c8a6a" fill-opacity="0.8"/><circle cx="456.5" cy="550.6" r="2.6" fill="#5c8a6a" stroke="#5c8a6a" fill-opacity="0.8"/><circle cx="474.7" cy="547.5" r="2.6" fill="#5c8a6a" stroke="#5c8a6a" fill-opacity="0.8"/><circle cx="497.5" cy="543.4" r="2.6" fill="#5c8a6a" stroke="#5c8a6a" fill-opacity="0.8"/><circle cx="514.9" cy="595.4" r="2.6" fill="#5c8a6a" stroke="#5c8a6a" fill-opacity="0.8"/><circle cx="530.9" cy="594.3" r="2.6" fill="#5c8a6a" stroke="#5c8a6a" fill-opacity="0.8"/><circle cx="556.6" cy="733.4" r="2.6" fill="#5c8a6a" stroke="#5c8a6a" fill-opacity="0.8"/><circle cx="570.3" cy="805.9" r="2.6" fill="#5c8a6a" stroke="#5c8a6a" fill-opacity="0.8"/><circle cx="577.1" cy="866.8" r="2.6" fill="#5c8a6a" stroke="#5c8a6a" fill-opacity="0.8"/><circle cx="617.3" cy="697.0" r="2.6" fill="#5c8a6a" stroke="#5c8a6a" fill-opacity="0.8"/><circle cx="632.5" cy="679.1" r="2.6" fill="#5c8a6a" stroke="#5c8a6a" fill-opacity="0.8"/><circle cx="659.8" cy="755.5" r="2.6" fill="#5c8a6a" stroke="#5c8a6a" fill-opacity="0.8"/><circle cx="676.5" cy="760.4" r="2.6" fill="#5c8a6a" stroke="#5c8a6a" fill-opacity="0.8"/><circle cx="690.1" cy="676.3" r="2.6" fill="#5c8a6a" stroke="#5c8a6a" fill-opacity="0.8"/><circle cx="703.8" cy="610.2" r="2.6" fill="#5c8a6a" stroke="#5c8a6a" fill-opacity="0.8"/><circle cx="720.4" cy="573.0" r="2.6" fill="#5c8a6a" stroke="#5c8a6a" fill-opacity="0.8"/><circle cx="740.9" cy="587.0" r="2.6" fill="#5c8a6a" stroke="#5c8a6a" fill-opacity="0.8"/><circle cx="758.4" cy="729.8" r="2.6" fill="#5c8a6a" stroke="#5c8a6a" fill-opacity="0.8"/><circle cx="784.1" cy="790.9" r="2.6" fill="#5c8a6a" stroke="#5c8a6a" fill-opacity="0.8"/><circle cx="802.3" cy="628.4" r="2.6" fill="#5c8a6a" stroke="#5c8a6a" fill-opacity="0.8"/><circle cx="832.7" cy="545.9" r="2.6" fill="#5c8a6a" stroke="#5c8a6a" fill-opacity="0.8"/><circle cx="854.7" cy="493.3" r="2.6" fill="#5c8a6a" stroke="#5c8a6a" fill-opacity="0.8"/><circle cx="380.7" cy="550.7" r="2.6" fill="#2e2e2e" stroke="#2e2e2e" fill-opacity="0.8"/><circle cx="397.4" cy="520.4" r="2.6" fill="#2e2e2e" stroke="#2e2e2e" fill-opacity="0.8"/><circle cx="421.7" cy="579.2" r="2.6" fill="#2e2e2e" stroke="#2e2e2e" fill-opacity="0.8"/><circle cx="456.5" cy="550.6" r="2.6" fill="#2e2e2e" stroke="#2e2e2e" fill-opacity="0.8"/><circle cx="474.7" cy="548.2" r="2.6" fill="#2e2e2e" stroke="#2e2e2e" fill-opacity="0.8"/><circle cx="497.5" cy="544.9" r="2.6" fill="#2e2e2e" stroke="#2e2e2e" fill-opacity="0.8"/><circle cx="514.9" cy="596.7" r="2.6" fill="#2e2e2e" stroke="#2e2e2e" fill-opacity="0.8"/><circle cx="530.9" cy="598.4" r="2.6" fill="#2e2e2e" stroke="#2e2e2e" fill-opacity="0.8"/><circle cx="556.6" cy="730.1" r="2.6" fill="#2e2e2e" stroke="#2e2e2e" fill-opacity="0.8"/><circle cx="570.3" cy="774.5" r="2.6" fill="#2e2e2e" stroke="#2e2e2e" fill-opacity="0.8"/><circle cx="577.1" cy="843.2" r="2.6" fill="#2e2e2e" stroke="#2e2e2e" fill-opacity="0.8"/><circle cx="617.3" cy="686.7" r="2.6" fill="#2e2e2e" stroke="#2e2e2e" fill-opacity="0.8"/><circle cx="632.5" cy="660.9" r="2.6" fill="#2e2e2e" stroke="#2e2e2e" fill-opacity="0.8"/><circle cx="659.8" cy="745.4" r="2.6" fill="#2e2e2e" stroke="#2e2e2e" fill-opacity="0.8"/><circle cx="676.5" cy="750.1" r="2.6" fill="#2e2e2e" stroke="#2e2e2e" fill-opacity="0.8"/><circle cx="690.1" cy="657.2" r="2.6" fill="#2e2e2e" stroke="#2e2e2e" fill-opacity="0.8"/><circle cx="703.8" cy="605.5" r="2.6" fill="#2e2e2e" stroke="#2e2e2e" fill-opacity="0.8"/><circle cx="720.4" cy="570.5" r="2.6" fill="#2e2e2e" stroke="#2e2e2e" fill-opacity="0.8"/><circle cx="740.9" cy="587.2" r="2.6" fill="#2e2e2e" stroke="#2e2e2e" fill-opacity="0.8"/><circle cx="758.4" cy="735.9" r="2.6" fill="#2e2e2e" stroke="#2e2e2e" fill-opacity="0.8"/><circle cx="784.1" cy="795.1" r="2.6" fill="#2e2e2e" stroke="#2e2e2e" fill-opacity="0.8"/><circle cx="802.3" cy="627.8" r="2.6" fill="#2e2e2e" stroke="#2e2e2e" fill-opacity="0.8"/><circle cx="832.7" cy="600.3" r="2.6" fill="#2e2e2e" stroke="#2e2e2e" fill-opacity="0.8"/><circle cx="854.7" cy="515.9" r="2.6" fill="#2e2e2e" stroke="#2e2e2e" fill-opacity="0.8"/><circle cx="869.1" cy="501.9" r="2.6" fill="#2e2e2e" stroke="#2e2e2e" fill-opacity="0.8"/><circle cx="875.1" cy="494.1" r="2.6" fill="#2e2e2e" stroke="#2e2e2e" fill-opacity="0.8"/><circle cx="878.9" cy="496.1" r="2.6" fill="#2e2e2e" stroke="#2e2e2e" fill-opacity="0.8"/><circle cx="893.3" cy="423.1" r="2.6" fill="#2e2e2e" stroke="#2e2e2e" fill-opacity="0.8"/><circle cx="920.6" cy="501.8" r="2.6" fill="#2e2e2e" stroke="#2e2e2e" fill-opacity="0.8"/><circle cx="951.0" cy="513.1" r="2.6" fill="#2e2e2e" stroke="#2e2e2e" fill-opacity="0.8"/><circle cx="990.4" cy="513.8" r="2.6" fill="#2e2e2e" stroke="#2e2e2e" fill-opacity="0.8"/><circle cx="1028.3" cy="484.1" r="2.6" fill="#2e2e2e" stroke="#2e2e2e" fill-opacity="0.8"/><circle cx="1051.1" cy="435.0" r="2.6" fill="#2e2e2e" stroke="#2e2e2e" fill-opacity="0.8"/><circle cx="1076.9" cy="529.6" r="2.6" fill="#2e2e2e" stroke="#2e2e2e" fill-opacity="0.8"/><circle cx="1116.3" cy="497.6" r="2.6" fill="#2e2e2e" stroke="#2e2e2e" fill-opacity="0.8"/><circle cx="1139.1" cy="460.8" r="2.6" fill="#2e2e2e" stroke="#2e2e2e" fill-opacity="0.8"/><circle cx="1167.9" cy="460.6" r="2.6" fill="#2e2e2e" stroke="#2e2e2e" fill-opacity="0.8"/><circle cx="1207.3" cy="480.3" r="2.6" fill="#2e2e2e" stroke="#2e2e2e" fill-opacity="0.8"/><circle cx="1249.8" cy="507.8" r="2.6" fill="#2e2e2e" stroke="#2e2e2e" fill-opacity="0.8"/><circle cx="1298.3" cy="490.4" r="2.6" fill="#2e2e2e" stroke="#2e2e2e" fill-opacity="0.8"/><circle cx="1328.6" cy="531.0" r="2.6" fill="#2e2e2e" stroke="#2e2e2e" fill-opacity="0.8"/><circle cx="1352.9" cy="510.2" r="2.6" fill="#2e2e2e" stroke="#2e2e2e" fill-opacity="0.8"/><circle cx="1371.9" cy="407.6" r="2.6" fill="#2e2e2e" stroke="#2e2e2e" fill-opacity="0.8"/><circle cx="1383.2" cy="541.2" r="2.6" fill="#2e2e2e" stroke="#2e2e2e" fill-opacity="0.8"/><circle cx="1395.4" cy="485.2" r="2.6" fill="#2e2e2e" stroke="#2e2e2e" fill-opacity="0.8"/><circle cx="1410.5" cy="493.3" r="2.6" fill="#2e2e2e" stroke="#2e2e2e" fill-opacity="0.8"/><circle cx="380.7" cy="518.4" r="2.6" fill="#2e2e2e" stroke="#2e2e2e" fill-opacity="0.8"/><circle cx="397.4" cy="498.6" r="2.6" fill="#2e2e2e" stroke="#2e2e2e" fill-opacity="0.8"/><circle cx="421.7" cy="539.1" r="2.6" fill="#2e2e2e" stroke="#2e2e2e" fill-opacity="0.8"/><circle cx="456.5" cy="526.9" r="2.6" fill="#2e2e2e" stroke="#2e2e2e" fill-opacity="0.8"/><circle cx="474.7" cy="519.6" r="2.6" fill="#2e2e2e" stroke="#2e2e2e" fill-opacity="0.8"/><circle cx="497.5" cy="527.8" r="2.6" fill="#2e2e2e" stroke="#2e2e2e" fill-opacity="0.8"/><circle cx="514.9" cy="553.7" r="2.6" fill="#2e2e2e" stroke="#2e2e2e" fill-opacity="0.8"/><circle cx="530.9" cy="563.4" r="2.6" fill="#2e2e2e" stroke="#2e2e2e" fill-opacity="0.8"/><circle cx="556.6" cy="615.3" r="2.6" fill="#2e2e2e" stroke="#2e2e2e" fill-opacity="0.8"/><circle cx="570.3" cy="611.8" r="2.6" fill="#2e2e2e" stroke="#2e2e2e" fill-opacity="0.8"/><circle cx="577.1" cy="579.8" r="2.6" fill="#2e2e2e" stroke="#2e2e2e" fill-opacity="0.8"/><circle cx="617.3" cy="552.9" r="2.6" fill="#2e2e2e" stroke="#2e2e2e" fill-opacity="0.8"/><circle cx="632.5" cy="576.0" r="2.6" fill="#2e2e2e" stroke="#2e2e2e" fill-opacity="0.8"/><circle cx="659.8" cy="574.1" r="2.6" fill="#2e2e2e" stroke="#2e2e2e" fill-opacity="0.8"/><circle cx="676.5" cy="620.9" r="2.6" fill="#2e2e2e" stroke="#2e2e2e" fill-opacity="0.8"/><circle cx="690.1" cy="583.9" r="2.6" fill="#2e2e2e" stroke="#2e2e2e" fill-opacity="0.8"/><circle cx="703.8" cy="541.3" r="2.6" fill="#2e2e2e" stroke="#2e2e2e" fill-opacity="0.8"/><circle cx="720.4" cy="541.6" r="2.6" fill="#2e2e2e" stroke="#2e2e2e" fill-opacity="0.8"/><circle cx="740.9" cy="546.6" r="2.6" fill="#2e2e2e" stroke="#2e2e2e" fill-opacity="0.8"/><circle cx="758.4" cy="633.0" r="2.6" fill="#2e2e2e" stroke="#2e2e2e" fill-opacity="0.8"/><circle cx="784.1" cy="653.2" r="2.6" fill="#2e2e2e" stroke="#2e2e2e" fill-opacity="0.8"/><circle cx="802.3" cy="563.4" r="2.6" fill="#2e2e2e" stroke="#2e2e2e" fill-opacity="0.8"/><circle cx="832.7" cy="571.8" r="2.6" fill="#2e2e2e" stroke="#2e2e2e" fill-opacity="0.8"/><circle cx="854.7" cy="502.0" r="2.6" fill="#2e2e2e" stroke="#2e2e2e" fill-opacity="0.8"/><circle cx="869.1" cy="483.3" r="2.6" fill="#2e2e2e" stroke="#2e2e2e" fill-opacity="0.8"/><circle cx="875.1" cy="477.2" r="2.6" fill="#2e2e2e" stroke="#2e2e2e" fill-opacity="0.8"/><circle cx="878.9" cy="479.3" r="2.6" fill="#2e2e2e" stroke="#2e2e2e" fill-opacity="0.8"/><circle cx="893.3" cy="439.6" r="2.6" fill="#2e2e2e" stroke="#2e2e2e" fill-opacity="0.8"/><circle cx="920.6" cy="493.3" r="2.6" fill="#2e2e2e" stroke="#2e2e2e" fill-opacity="0.8"/><circle cx="380.7" cy="546.8" r="2.6" fill="#4c44dc" stroke="#4c44dc" fill-opacity="0.8"/><circle cx="397.4" cy="516.5" r="2.6" fill="#4c44dc" stroke="#4c44dc" fill-opacity="0.8"/><circle cx="421.7" cy="575.4" r="2.6" fill="#4c44dc" stroke="#4c44dc" fill-opacity="0.8"/><circle cx="456.5" cy="548.5" r="2.6" fill="#4c44dc" stroke="#4c44dc" fill-opacity="0.8"/><circle cx="474.7" cy="544.5" r="2.6" fill="#4c44dc" stroke="#4c44dc" fill-opacity="0.8"/><circle cx="497.5" cy="540.5" r="2.6" fill="#4c44dc" stroke="#4c44dc" fill-opacity="0.8"/><circle cx="514.9" cy="493.3" r="2.6" fill="#4c44dc" stroke="#4c44dc" fill-opacity="0.8"/><circle cx="380.7" cy="535.2" r="2.6" fill="#e4884e" stroke="#e4884e" fill-opacity="0.8"/><circle cx="397.4" cy="500.6" r="2.6" fill="#e4884e" stroke="#e4884e" fill-opacity="0.8"/><circle cx="421.7" cy="493.3" r="2.6" fill="#e4884e" stroke="#e4884e" fill-opacity="0.8"/><circle cx="380.7" cy="523.4" r="2.6" fill="#44d4a4" stroke="#44d4a4" fill-opacity="0.8"/><circle cx="397.4" cy="502.9" r="2.6" fill="#44d4a4" stroke="#44d4a4" fill-opacity="0.8"/><circle cx="421.7" cy="551.7" r="2.6" fill="#44d4a4" stroke="#44d4a4" fill-opacity="0.8"/><circle cx="456.5" cy="526.6" r="2.6" fill="#44d4a4" stroke="#44d4a4" fill-opacity="0.8"/><circle cx="474.7" cy="504.0" r="2.6" fill="#44d4a4" stroke="#44d4a4" fill-opacity="0.8"/><circle cx="497.5" cy="508.2" r="2.6" fill="#44d4a4" stroke="#44d4a4" fill-opacity="0.8"/><circle cx="514.9" cy="522.6" r="2.6" fill="#44d4a4" stroke="#44d4a4" fill-opacity="0.8"/><circle cx="530.9" cy="518.9" r="2.6" fill="#44d4a4" stroke="#44d4a4" fill-opacity="0.8"/><circle cx="556.6" cy="610.6" r="2.6" fill="#44d4a4" stroke="#44d4a4" fill-opacity="0.8"/><circle cx="570.3" cy="561.5" r="2.6" fill="#44d4a4" stroke="#44d4a4" fill-opacity="0.8"/><circle cx="577.1" cy="525.3" r="2.6" fill="#44d4a4" stroke="#44d4a4" fill-opacity="0.8"/><circle cx="617.3" cy="509.7" r="2.6" fill="#44d4a4" stroke="#44d4a4" fill-opacity="0.8"/><circle cx="632.5" cy="581.4" r="2.6" fill="#44d4a4" stroke="#44d4a4" fill-opacity="0.8"/><circle cx="659.8" cy="590.5" r="2.6" fill="#44d4a4" stroke="#44d4a4" fill-opacity="0.8"/><circle cx="676.5" cy="628.7" r="2.6" fill="#44d4a4" stroke="#44d4a4" fill-opacity="0.8"/><circle cx="690.1" cy="612.1" r="2.6" fill="#44d4a4" stroke="#44d4a4" fill-opacity="0.8"/><circle cx="703.8" cy="561.5" r="2.6" fill="#44d4a4" stroke="#44d4a4" fill-opacity="0.8"/><circle cx="720.4" cy="542.6" r="2.6" fill="#44d4a4" stroke="#44d4a4" fill-opacity="0.8"/><circle cx="740.9" cy="549.0" r="2.6" fill="#44d4a4" stroke="#44d4a4" fill-opacity="0.8"/><circle cx="758.4" cy="646.1" r="2.6" fill="#44d4a4" stroke="#44d4a4" fill-opacity="0.8"/><circle cx="784.1" cy="664.1" r="2.6" fill="#44d4a4" stroke="#44d4a4" fill-opacity="0.8"/><circle cx="802.3" cy="546.6" r="2.6" fill="#44d4a4" stroke="#44d4a4" fill-opacity="0.8"/><circle cx="832.7" cy="562.6" r="2.6" fill="#44d4a4" stroke="#44d4a4" fill-opacity="0.8"/><circle cx="854.7" cy="498.6" r="2.6" fill="#44d4a4" stroke="#44d4a4" fill-opacity="0.8"/><circle cx="869.1" cy="478.9" r="2.6" fill="#44d4a4" stroke="#44d4a4" fill-opacity="0.8"/><circle cx="875.1" cy="472.0" r="2.6" fill="#44d4a4" stroke="#44d4a4" fill-opacity="0.8"/><circle cx="878.9" cy="477.3" r="2.6" fill="#44d4a4" stroke="#44d4a4" fill-opacity="0.8"/><circle cx="893.3" cy="402.7" r="2.6" fill="#44d4a4" stroke="#44d4a4" fill-opacity="0.8"/><circle cx="920.6" cy="477.1" r="2.6" fill="#44d4a4" stroke="#44d4a4" fill-opacity="0.8"/><circle cx="951.0" cy="493.5" r="2.6" fill="#44d4a4" stroke="#44d4a4" fill-opacity="0.8"/><circle cx="990.4" cy="498.6" r="2.6" fill="#44d4a4" stroke="#44d4a4" fill-opacity="0.8"/><circle cx="1028.3" cy="471.1" r="2.6" fill="#44d4a4" stroke="#44d4a4" fill-opacity="0.8"/><circle cx="1051.1" cy="420.2" r="2.6" fill="#44d4a4" stroke="#44d4a4" fill-opacity="0.8"/><circle cx="1076.9" cy="494.9" r="2.6" fill="#44d4a4" stroke="#44d4a4" fill-opacity="0.8"/><circle cx="1116.3" cy="479.4" r="2.6" fill="#44d4a4" stroke="#44d4a4" fill-opacity="0.8"/><circle cx="1139.1" cy="452.9" r="2.6" fill="#44d4a4" stroke="#44d4a4" fill-opacity="0.8"/><circle cx="1167.9" cy="446.1" r="2.6" fill="#44d4a4" stroke="#44d4a4" fill-opacity="0.8"/><circle cx="1207.3" cy="468.8" r="2.6" fill="#44d4a4" stroke="#44d4a4" fill-opacity="0.8"/><circle cx="1249.8" cy="494.9" r="2.6" fill="#44d4a4" stroke="#44d4a4" fill-opacity="0.8"/><circle cx="1298.3" cy="472.6" r="2.6" fill="#44d4a4" stroke="#44d4a4" fill-opacity="0.8"/><circle cx="1328.6" cy="525.3" r="2.6" fill="#44d4a4" stroke="#44d4a4" fill-opacity="0.8"/><circle cx="1352.9" cy="497.9" r="2.6" fill="#44d4a4" stroke="#44d4a4" fill-opacity="0.8"/><circle cx="1371.9" cy="402.0" r="2.6" fill="#44d4a4" stroke="#44d4a4" fill-opacity="0.8"/><circle cx="1383.2" cy="534.8" r="2.6" fill="#44d4a4" stroke="#44d4a4" fill-opacity="0.8"/><circle cx="1395.4" cy="479.0" r="2.6" fill="#44d4a4" stroke="#44d4a4" fill-opacity="0.8"/><circle cx="1410.5" cy="493.3" r="2.6" fill="#44d4a4" stroke="#44d4a4" fill-opacity="0.8"/><circle cx="380.7" cy="553.8" r="2.6" fill="#44d4a4" stroke="#44d4a4" fill-opacity="0.8"/><circle cx="397.4" cy="520.9" r="2.6" fill="#44d4a4" stroke="#44d4a4" fill-opacity="0.8"/><circle cx="421.7" cy="582.5" r="2.6" fill="#44d4a4" stroke="#44d4a4" fill-opacity="0.8"/><circle cx="456.5" cy="551.6" r="2.6" fill="#44d4a4" stroke="#44d4a4" fill-opacity="0.8"/><circle cx="474.7" cy="551.1" r="2.6" fill="#44d4a4" stroke="#44d4a4" fill-opacity="0.8"/><circle cx="497.5" cy="555.2" r="2.6" fill="#44d4a4" stroke="#44d4a4" fill-opacity="0.8"/><circle cx="514.9" cy="606.5" r="2.6" fill="#44d4a4" stroke="#44d4a4" fill-opacity="0.8"/><circle cx="530.9" cy="613.8" r="2.6" fill="#44d4a4" stroke="#44d4a4" fill-opacity="0.8"/><circle cx="556.6" cy="764.9" r="2.6" fill="#44d4a4" stroke="#44d4a4" fill-opacity="0.8"/><circle cx="570.3" cy="837.0" r="2.6" fill="#44d4a4" stroke="#44d4a4" fill-opacity="0.8"/><circle cx="577.1" cy="894.3" r="2.6" fill="#44d4a4" stroke="#44d4a4" fill-opacity="0.8"/><circle cx="617.3" cy="736.1" r="2.6" fill="#44d4a4" stroke="#44d4a4" fill-opacity="0.8"/><circle cx="632.5" cy="682.7" r="2.6" fill="#44d4a4" stroke="#44d4a4" fill-opacity="0.8"/><circle cx="659.8" cy="756.0" r="2.6" fill="#44d4a4" stroke="#44d4a4" fill-opacity="0.8"/><circle cx="676.5" cy="756.4" r="2.6" fill="#44d4a4" stroke="#44d4a4" fill-opacity="0.8"/><circle cx="690.1" cy="667.9" r="2.6" fill="#44d4a4" stroke="#44d4a4" fill-opacity="0.8"/><circle cx="703.8" cy="613.6" r="2.6" fill="#44d4a4" stroke="#44d4a4" fill-opacity="0.8"/><circle cx="720.4" cy="572.2" r="2.6" fill="#44d4a4" stroke="#44d4a4" fill-opacity="0.8"/><circle cx="740.9" cy="589.6" r="2.6" fill="#44d4a4" stroke="#44d4a4" fill-opacity="0.8"/><circle cx="758.4" cy="742.7" r="2.6" fill="#44d4a4" stroke="#44d4a4" fill-opacity="0.8"/><circle cx="784.1" cy="814.5" r="2.6" fill="#44d4a4" stroke="#44d4a4" fill-opacity="0.8"/><circle cx="802.3" cy="635.7" r="2.6" fill="#44d4a4" stroke="#44d4a4" fill-opacity="0.8"/><circle cx="832.7" cy="604.7" r="2.6" fill="#44d4a4" stroke="#44d4a4" fill-opacity="0.8"/><circle cx="854.7" cy="519.4" r="2.6" fill="#44d4a4" stroke="#44d4a4" fill-opacity="0.8"/><circle cx="869.1" cy="508.1" r="2.6" fill="#44d4a4" stroke="#44d4a4" fill-opacity="0.8"/><circle cx="875.1" cy="503.0" r="2.6" fill="#44d4a4" stroke="#44d4a4" fill-opacity="0.8"/><circle cx="878.9" cy="502.2" r="2.6" fill="#44d4a4" stroke="#44d4a4" fill-opacity="0.8"/><circle cx="893.3" cy="429.0" r="2.6" fill="#44d4a4" stroke="#44d4a4" fill-opacity="0.8"/><circle cx="920.6" cy="512.9" r="2.6" fill="#44d4a4" stroke="#44d4a4" fill-opacity="0.8"/><circle cx="951.0" cy="493.3" r="2.6" fill="#44d4a4" stroke="#44d4a4" fill-opacity="0.8"/><circle cx="380.7" cy="545.5" r="2.6" fill="#8c2a1a" stroke="#8c2a1a" fill-opacity="0.8"/><circle cx="397.4" cy="515.3" r="2.6" fill="#8c2a1a" stroke="#8c2a1a" fill-opacity="0.8"/><circle cx="421.7" cy="575.2" r="2.6" fill="#8c2a1a" stroke="#8c2a1a" fill-opacity="0.8"/><circle cx="456.5" cy="548.2" r="2.6" fill="#8c2a1a" stroke="#8c2a1a" fill-opacity="0.8"/><circle cx="474.7" cy="545.7" r="2.6" fill="#8c2a1a" stroke="#8c2a1a" fill-opacity="0.8"/><circle cx="497.5" cy="539.3" r="2.6" fill="#8c2a1a" stroke="#8c2a1a" fill-opacity="0.8"/><circle cx="514.9" cy="588.1" r="2.6" fill="#8c2a1a" stroke="#8c2a1a" fill-opacity="0.8"/><circle cx="530.9" cy="590.0" r="2.6" fill="#8c2a1a" stroke="#8c2a1a" fill-opacity="0.8"/><circle cx="556.6" cy="705.0" r="2.6" fill="#8c2a1a" stroke="#8c2a1a" fill-opacity="0.8"/><circle cx="570.3" cy="753.0" r="2.6" fill="#8c2a1a" stroke="#8c2a1a" fill-opacity="0.8"/><circle cx="577.1" cy="743.0" r="2.6" fill="#8c2a1a" stroke="#8c2a1a" fill-opacity="0.8"/><circle cx="617.3" cy="627.4" r="2.6" fill="#8c2a1a" stroke="#8c2a1a" fill-opacity="0.8"/><circle cx="632.5" cy="642.0" r="2.6" fill="#8c2a1a" stroke="#8c2a1a" fill-opacity="0.8"/><circle cx="659.8" cy="708.0" r="2.6" fill="#8c2a1a" stroke="#8c2a1a" fill-opacity="0.8"/><circle cx="676.5" cy="730.3" r="2.6" fill="#8c2a1a" stroke="#8c2a1a" fill-opacity="0.8"/><circle cx="690.1" cy="647.4" r="2.6" fill="#8c2a1a" stroke="#8c2a1a" fill-opacity="0.8"/><circle cx="703.8" cy="596.9" r="2.6" fill="#8c2a1a" stroke="#8c2a1a" fill-opacity="0.8"/><circle cx="720.4" cy="562.2" r="2.6" fill="#8c2a1a" stroke="#8c2a1a" fill-opacity="0.8"/><circle cx="740.9" cy="575.2" r="2.6" fill="#8c2a1a" stroke="#8c2a1a" fill-opacity="0.8"/><circle cx="758.4" cy="718.2" r="2.6" fill="#8c2a1a" stroke="#8c2a1a" fill-opacity="0.8"/><circle cx="784.1" cy="760.0" r="2.6" fill="#8c2a1a" stroke="#8c2a1a" fill-opacity="0.8"/><circle cx="802.3" cy="619.8" r="2.6" fill="#8c2a1a" stroke="#8c2a1a" fill-opacity="0.8"/><circle cx="832.7" cy="596.7" r="2.6" fill="#8c2a1a" stroke="#8c2a1a" fill-opacity="0.8"/><circle cx="854.7" cy="511.7" r="2.6" fill="#8c2a1a" stroke="#8c2a1a" fill-opacity="0.8"/><circle cx="869.1" cy="497.1" r="2.6" fill="#8c2a1a" stroke="#8c2a1a" fill-opacity="0.8"/><circle cx="875.1" cy="490.4" r="2.6" fill="#8c2a1a" stroke="#8c2a1a" fill-opacity="0.8"/><circle cx="878.9" cy="492.4" r="2.6" fill="#8c2a1a" stroke="#8c2a1a" fill-opacity="0.8"/><circle cx="893.3" cy="416.8" r="2.6" fill="#8c2a1a" stroke="#8c2a1a" fill-opacity="0.8"/><circle cx="920.6" cy="494.7" r="2.6" fill="#8c2a1a" stroke="#8c2a1a" fill-opacity="0.8"/><circle cx="951.0" cy="507.8" r="2.6" fill="#8c2a1a" stroke="#8c2a1a" fill-opacity="0.8"/><circle cx="990.4" cy="510.4" r="2.6" fill="#8c2a1a" stroke="#8c2a1a" fill-opacity="0.8"/><circle cx="1028.3" cy="480.0" r="2.6" fill="#8c2a1a" stroke="#8c2a1a" fill-opacity="0.8"/><circle cx="1051.1" cy="431.9" r="2.6" fill="#8c2a1a" stroke="#8c2a1a" fill-opacity="0.8"/><circle cx="1076.9" cy="524.7" r="2.6" fill="#8c2a1a" stroke="#8c2a1a" fill-opacity="0.8"/><circle cx="1116.3" cy="492.0" r="2.6" fill="#8c2a1a" stroke="#8c2a1a" fill-opacity="0.8"/><circle cx="1139.1" cy="458.9" r="2.6" fill="#8c2a1a" stroke="#8c2a1a" fill-opacity="0.8"/><circle cx="1167.9" cy="457.9" r="2.6" fill="#8c2a1a" stroke="#8c2a1a" fill-opacity="0.8"/><circle cx="1207.3" cy="479.1" r="2.6" fill="#8c2a1a" stroke="#8c2a1a" fill-opacity="0.8"/><circle cx="1249.8" cy="505.6" r="2.6" fill="#8c2a1a" stroke="#8c2a1a" fill-opacity="0.8"/><circle cx="1298.3" cy="487.4" r="2.6" fill="#8c2a1a" stroke="#8c2a1a" fill-opacity="0.8"/><circle cx="1328.6" cy="529.1" r="2.6" fill="#8c2a1a" stroke="#8c2a1a" fill-opacity="0.8"/><circle cx="1352.9" cy="508.4" r="2.6" fill="#8c2a1a" stroke="#8c2a1a" fill-opacity="0.8"/><circle cx="1371.9" cy="461.7" r="2.6" fill="#8c2a1a" stroke="#8c2a1a" fill-opacity="0.8"/><circle cx="1383.2" cy="493.3" r="2.6" fill="#8c2a1a" stroke="#8c2a1a" fill-opacity="0.8"/><circle cx="380.7" cy="559.7" r="2.6" fill="#2e2e2e" stroke="#2e2e2e" fill-opacity="0.8"/><circle cx="397.4" cy="525.1" r="2.6" fill="#2e2e2e" stroke="#2e2e2e" fill-opacity="0.8"/><circle cx="421.7" cy="583.8" r="2.6" fill="#2e2e2e" stroke="#2e2e2e" fill-opacity="0.8"/><circle cx="456.5" cy="553.5" r="2.6" fill="#2e2e2e" stroke="#2e2e2e" fill-opacity="0.8"/><circle cx="474.7" cy="551.6" r="2.6" fill="#2e2e2e" stroke="#2e2e2e" fill-opacity="0.8"/><circle cx="497.5" cy="552.8" r="2.6" fill="#2e2e2e" stroke="#2e2e2e" fill-opacity="0.8"/><circle cx="514.9" cy="606.3" r="2.6" fill="#2e2e2e" stroke="#2e2e2e" fill-opacity="0.8"/><circle cx="530.9" cy="608.4" r="2.6" fill="#2e2e2e" stroke="#2e2e2e" fill-opacity="0.8"/><circle cx="556.6" cy="760.5" r="2.6" fill="#2e2e2e" stroke="#2e2e2e" fill-opacity="0.8"/><circle cx="570.3" cy="826.5" r="2.6" fill="#2e2e2e" stroke="#2e2e2e" fill-opacity="0.8"/><circle cx="577.1" cy="865.3" r="2.6" fill="#2e2e2e" stroke="#2e2e2e" fill-opacity="0.8"/><circle cx="617.3" cy="717.1" r="2.6" fill="#2e2e2e" stroke="#2e2e2e" fill-opacity="0.8"/><circle cx="632.5" cy="669.9" r="2.6" fill="#2e2e2e" stroke="#2e2e2e" fill-opacity="0.8"/><circle cx="659.8" cy="749.7" r="2.6" fill="#2e2e2e" stroke="#2e2e2e" fill-opacity="0.8"/><circle cx="676.5" cy="755.7" r="2.6" fill="#2e2e2e" stroke="#2e2e2e" fill-opacity="0.8"/><circle cx="690.1" cy="673.8" r="2.6" fill="#2e2e2e" stroke="#2e2e2e" fill-opacity="0.8"/><circle cx="703.8" cy="612.4" r="2.6" fill="#2e2e2e" stroke="#2e2e2e" fill-opacity="0.8"/><circle cx="720.4" cy="574.2" r="2.6" fill="#2e2e2e" stroke="#2e2e2e" fill-opacity="0.8"/><circle cx="740.9" cy="591.8" r="2.6" fill="#2e2e2e" stroke="#2e2e2e" fill-opacity="0.8"/><circle cx="758.4" cy="748.1" r="2.6" fill="#2e2e2e" stroke="#2e2e2e" fill-opacity="0.8"/><circle cx="784.1" cy="820.6" r="2.6" fill="#2e2e2e" stroke="#2e2e2e" fill-opacity="0.8"/><circle cx="802.3" cy="636.9" r="2.6" fill="#2e2e2e" stroke="#2e2e2e" fill-opacity="0.8"/><circle cx="832.7" cy="607.9" r="2.6" fill="#2e2e2e" stroke="#2e2e2e" fill-opacity="0.8"/><circle cx="854.7" cy="519.8" r="2.6" fill="#2e2e2e" stroke="#2e2e2e" fill-opacity="0.8"/><circle cx="869.1" cy="508.1" r="2.6" fill="#2e2e2e" stroke="#2e2e2e" fill-opacity="0.8"/><circle cx="875.1" cy="502.2" r="2.6" fill="#2e2e2e" stroke="#2e2e2e" fill-opacity="0.8"/><circle cx="878.9" cy="502.4" r="2.6" fill="#2e2e2e" stroke="#2e2e2e" fill-opacity="0.8"/><circle cx="893.3" cy="430.1" r="2.6" fill="#2e2e2e" stroke="#2e2e2e" fill-opacity="0.8"/><circle cx="920.6" cy="534.9" r="2.6" fill="#2e2e2e" stroke="#2e2e2e" fill-opacity="0.8"/><circle cx="951.0" cy="529.2" r="2.6" fill="#2e2e2e" stroke="#2e2e2e" fill-opacity="0.8"/><circle cx="990.4" cy="527.8" r="2.6" fill="#2e2e2e" stroke="#2e2e2e" fill-opacity="0.8"/><circle cx="1028.3" cy="488.7" r="2.6" fill="#2e2e2e" stroke="#2e2e2e" fill-opacity="0.8"/><circle cx="1051.1" cy="438.6" r="2.6" fill="#2e2e2e" stroke="#2e2e2e" fill-opacity="0.8"/><circle cx="1076.9" cy="535.3" r="2.6" fill="#2e2e2e" stroke="#2e2e2e" fill-opacity="0.8"/><circle cx="1116.3" cy="505.6" r="2.6" fill="#2e2e2e" stroke="#2e2e2e" fill-opacity="0.8"/><circle cx="1139.1" cy="468.4" r="2.6" fill="#2e2e2e" stroke="#2e2e2e" fill-opacity="0.8"/><circle cx="1167.9" cy="470.2" r="2.6" fill="#2e2e2e" stroke="#2e2e2e" fill-opacity="0.8"/><circle cx="1207.3" cy="492.9" r="2.6" fill="#2e2e2e" stroke="#2e2e2e" fill-opacity="0.8"/><circle cx="1249.8" cy="515.5" r="2.6" fill="#2e2e2e" stroke="#2e2e2e" fill-opacity="0.8"/><circle cx="1298.3" cy="493.3" r="2.6" fill="#2e2e2e" stroke="#2e2e2e" fill-opacity="0.8"/><circle cx="380.7" cy="533.0" r="2.6" fill="#44d4a4" stroke="#44d4a4" fill-opacity="0.8"/><circle cx="397.4" cy="509.5" r="2.6" fill="#44d4a4" stroke="#44d4a4" fill-opacity="0.8"/><circle cx="421.7" cy="571.0" r="2.6" fill="#44d4a4" stroke="#44d4a4" fill-opacity="0.8"/><circle cx="456.5" cy="545.9" r="2.6" fill="#44d4a4" stroke="#44d4a4" fill-opacity="0.8"/><circle cx="474.7" cy="540.0" r="2.6" fill="#44d4a4" stroke="#44d4a4" fill-opacity="0.8"/><circle cx="497.5" cy="534.2" r="2.6" fill="#44d4a4" stroke="#44d4a4" fill-opacity="0.8"/><circle cx="514.9" cy="572.7" r="2.6" fill="#44d4a4" stroke="#44d4a4" fill-opacity="0.8"/><circle cx="530.9" cy="574.8" r="2.6" fill="#44d4a4" stroke="#44d4a4" fill-opacity="0.8"/><circle cx="556.6" cy="641.8" r="2.6" fill="#44d4a4" stroke="#44d4a4" fill-opacity="0.8"/><circle cx="570.3" cy="657.4" r="2.6" fill="#44d4a4" stroke="#44d4a4" fill-opacity="0.8"/><circle cx="577.1" cy="612.2" r="2.6" fill="#44d4a4" stroke="#44d4a4" fill-opacity="0.8"/><circle cx="617.3" cy="562.9" r="2.6" fill="#44d4a4" stroke="#44d4a4" fill-opacity="0.8"/><circle cx="632.5" cy="602.5" r="2.6" fill="#44d4a4" stroke="#44d4a4" fill-opacity="0.8"/><circle cx="659.8" cy="633.7" r="2.6" fill="#44d4a4" stroke="#44d4a4" fill-opacity="0.8"/><circle cx="676.5" cy="681.8" r="2.6" fill="#44d4a4" stroke="#44d4a4" fill-opacity="0.8"/><circle cx="690.1" cy="627.0" r="2.6" fill="#44d4a4" stroke="#44d4a4" fill-opacity="0.8"/><circle cx="703.8" cy="576.9" r="2.6" fill="#44d4a4" stroke="#44d4a4" fill-opacity="0.8"/><circle cx="720.4" cy="550.2" r="2.6" fill="#44d4a4" stroke="#44d4a4" fill-opacity="0.8"/><circle cx="740.9" cy="563.3" r="2.6" fill="#44d4a4" stroke="#44d4a4" fill-opacity="0.8"/><circle cx="758.4" cy="684.6" r="2.6" fill="#44d4a4" stroke="#44d4a4" fill-opacity="0.8"/><circle cx="784.1" cy="707.1" r="2.6" fill="#44d4a4" stroke="#44d4a4" fill-opacity="0.8"/><circle cx="802.3" cy="610.8" r="2.6" fill="#44d4a4" stroke="#44d4a4" fill-opacity="0.8"/><circle cx="832.7" cy="590.9" r="2.6" fill="#44d4a4" stroke="#44d4a4" fill-opacity="0.8"/><circle cx="854.7" cy="506.5" r="2.6" fill="#44d4a4" stroke="#44d4a4" fill-opacity="0.8"/><circle cx="869.1" cy="486.2" r="2.6" fill="#44d4a4" stroke="#44d4a4" fill-opacity="0.8"/><circle cx="875.1" cy="477.8" r="2.6" fill="#44d4a4" stroke="#44d4a4" fill-opacity="0.8"/><circle cx="878.9" cy="483.2" r="2.6" fill="#44d4a4" stroke="#44d4a4" fill-opacity="0.8"/><circle cx="893.3" cy="410.6" r="2.6" fill="#44d4a4" stroke="#44d4a4" fill-opacity="0.8"/><circle cx="920.6" cy="487.1" r="2.6" fill="#44d4a4" stroke="#44d4a4" fill-opacity="0.8"/><circle cx="951.0" cy="503.8" r="2.6" fill="#44d4a4" stroke="#44d4a4" fill-opacity="0.8"/><circle cx="990.4" cy="507.2" r="2.6" fill="#44d4a4" stroke="#44d4a4" fill-opacity="0.8"/><circle cx="1028.3" cy="475.6" r="2.6" fill="#44d4a4" stroke="#44d4a4" fill-opacity="0.8"/><circle cx="1051.1" cy="428.8" r="2.6" fill="#44d4a4" stroke="#44d4a4" fill-opacity="0.8"/><circle cx="1076.9" cy="519.7" r="2.6" fill="#44d4a4" stroke="#44d4a4" fill-opacity="0.8"/><circle cx="1116.3" cy="486.2" r="2.6" fill="#44d4a4" stroke="#44d4a4" fill-opacity="0.8"/><circle cx="1139.1" cy="456.6" r="2.6" fill="#44d4a4" stroke="#44d4a4" fill-opacity="0.8"/><circle cx="1167.9" cy="455.7" r="2.6" fill="#44d4a4" stroke="#44d4a4" fill-opacity="0.8"/><circle cx="1207.3" cy="477.9" r="2.6" fill="#44d4a4" stroke="#44d4a4" fill-opacity="0.8"/><circle cx="1249.8" cy="503.2" r="2.6" fill="#44d4a4" stroke="#44d4a4" fill-opacity="0.8"/><circle cx="1298.3" cy="493.3" r="2.6" fill="#44d4a4" stroke="#44d4a4" fill-opacity="0.8"/><circle cx="380.7" cy="540.0" r="2.6" fill="#7078c4" stroke="#7078c4" fill-opacity="0.8"/><circle cx="397.4" cy="513.5" r="2.6" fill="#7078c4" stroke="#7078c4" fill-opacity="0.8"/><circle cx="421.7" cy="573.5" r="2.6" fill="#7078c4" stroke="#7078c4" fill-opacity="0.8"/><circle cx="456.5" cy="549.0" r="2.6" fill="#7078c4" stroke="#7078c4" fill-opacity="0.8"/><circle cx="474.7" cy="545.4" r="2.6" fill="#7078c4" stroke="#7078c4" fill-opacity="0.8"/><circle cx="497.5" cy="539.7" r="2.6" fill="#7078c4" stroke="#7078c4" fill-opacity="0.8"/><circle cx="514.9" cy="589.6" r="2.6" fill="#7078c4" stroke="#7078c4" fill-opacity="0.8"/><circle cx="530.9" cy="592.9" r="2.6" fill="#7078c4" stroke="#7078c4" fill-opacity="0.8"/><circle cx="556.6" cy="706.2" r="2.6" fill="#7078c4" stroke="#7078c4" fill-opacity="0.8"/><circle cx="570.3" cy="746.5" r="2.6" fill="#7078c4" stroke="#7078c4" fill-opacity="0.8"/><circle cx="577.1" cy="750.3" r="2.6" fill="#7078c4" stroke="#7078c4" fill-opacity="0.8"/><circle cx="617.3" cy="610.7" r="2.6" fill="#7078c4" stroke="#7078c4" fill-opacity="0.8"/><circle cx="632.5" cy="621.1" r="2.6" fill="#7078c4" stroke="#7078c4" fill-opacity="0.8"/><circle cx="659.8" cy="685.6" r="2.6" fill="#7078c4" stroke="#7078c4" fill-opacity="0.8"/><circle cx="676.5" cy="701.7" r="2.6" fill="#7078c4" stroke="#7078c4" fill-opacity="0.8"/><circle cx="690.1" cy="599.0" r="2.6" fill="#7078c4" stroke="#7078c4" fill-opacity="0.8"/><circle cx="703.8" cy="493.3" r="2.6" fill="#7078c4" stroke="#7078c4" fill-opacity="0.8"/><circle cx="380.7" cy="542.3" r="2.6" fill="#4c44dc" stroke="#4c44dc" fill-opacity="0.8"/><circle cx="397.4" cy="514.7" r="2.6" fill="#4c44dc" stroke="#4c44dc" fill-opacity="0.8"/><circle cx="421.7" cy="575.8" r="2.6" fill="#4c44dc" stroke="#4c44dc" fill-opacity="0.8"/><circle cx="456.5" cy="549.1" r="2.6" fill="#4c44dc" stroke="#4c44dc" fill-opacity="0.8"/><circle cx="474.7" cy="545.8" r="2.6" fill="#4c44dc" stroke="#4c44dc" fill-opacity="0.8"/><circle cx="497.5" cy="543.0" r="2.6" fill="#4c44dc" stroke="#4c44dc" fill-opacity="0.8"/><circle cx="514.9" cy="591.2" r="2.6" fill="#4c44dc" stroke="#4c44dc" fill-opacity="0.8"/><circle cx="530.9" cy="591.2" r="2.6" fill="#4c44dc" stroke="#4c44dc" fill-opacity="0.8"/><circle cx="556.6" cy="702.2" r="2.6" fill="#4c44dc" stroke="#4c44dc" fill-opacity="0.8"/><circle cx="570.3" cy="724.6" r="2.6" fill="#4c44dc" stroke="#4c44dc" fill-opacity="0.8"/><circle cx="577.1" cy="743.0" r="2.6" fill="#4c44dc" stroke="#4c44dc" fill-opacity="0.8"/><circle cx="617.3" cy="597.2" r="2.6" fill="#4c44dc" stroke="#4c44dc" fill-opacity="0.8"/><circle cx="632.5" cy="613.8" r="2.6" fill="#4c44dc" stroke="#4c44dc" fill-opacity="0.8"/><circle cx="659.8" cy="670.4" r="2.6" fill="#4c44dc" stroke="#4c44dc" fill-opacity="0.8"/><circle cx="676.5" cy="697.0" r="2.6" fill="#4c44dc" stroke="#4c44dc" fill-opacity="0.8"/><circle cx="690.1" cy="636.5" r="2.6" fill="#4c44dc" stroke="#4c44dc" fill-opacity="0.8"/><circle cx="703.8" cy="587.0" r="2.6" fill="#4c44dc" stroke="#4c44dc" fill-opacity="0.8"/><circle cx="720.4" cy="557.1" r="2.6" fill="#4c44dc" stroke="#4c44dc" fill-opacity="0.8"/><circle cx="740.9" cy="572.4" r="2.6" fill="#4c44dc" stroke="#4c44dc" fill-opacity="0.8"/><circle cx="758.4" cy="706.8" r="2.6" fill="#4c44dc" stroke="#4c44dc" fill-opacity="0.8"/><circle cx="784.1" cy="749.8" r="2.6" fill="#4c44dc" stroke="#4c44dc" fill-opacity="0.8"/><circle cx="802.3" cy="623.3" r="2.6" fill="#4c44dc" stroke="#4c44dc" fill-opacity="0.8"/><circle cx="832.7" cy="597.4" r="2.6" fill="#4c44dc" stroke="#4c44dc" fill-opacity="0.8"/><circle cx="854.7" cy="513.5" r="2.6" fill="#4c44dc" stroke="#4c44dc" fill-opacity="0.8"/><circle cx="869.1" cy="496.9" r="2.6" fill="#4c44dc" stroke="#4c44dc" fill-opacity="0.8"/><circle cx="875.1" cy="490.7" r="2.6" fill="#4c44dc" stroke="#4c44dc" fill-opacity="0.8"/><circle cx="878.9" cy="490.3" r="2.6" fill="#4c44dc" stroke="#4c44dc" fill-opacity="0.8"/><circle cx="893.3" cy="417.2" r="2.6" fill="#4c44dc" stroke="#4c44dc" fill-opacity="0.8"/><circle cx="920.6" cy="494.6" r="2.6" fill="#4c44dc" stroke="#4c44dc" fill-opacity="0.8"/><circle cx="951.0" cy="508.3" r="2.6" fill="#4c44dc" stroke="#4c44dc" fill-opacity="0.8"/><circle cx="990.4" cy="510.1" r="2.6" fill="#4c44dc" stroke="#4c44dc" fill-opacity="0.8"/><circle cx="1028.3" cy="480.2" r="2.6" fill="#4c44dc" stroke="#4c44dc" fill-opacity="0.8"/><circle cx="1051.1" cy="431.6" r="2.6" fill="#4c44dc" stroke="#4c44dc" fill-opacity="0.8"/><circle cx="1076.9" cy="524.5" r="2.6" fill="#4c44dc" stroke="#4c44dc" fill-opacity="0.8"/><circle cx="1116.3" cy="492.0" r="2.6" fill="#4c44dc" stroke="#4c44dc" fill-opacity="0.8"/><circle cx="1139.1" cy="458.3" r="2.6" fill="#4c44dc" stroke="#4c44dc" fill-opacity="0.8"/><circle cx="1167.9" cy="458.2" r="2.6" fill="#4c44dc" stroke="#4c44dc" fill-opacity="0.8"/><circle cx="1207.3" cy="479.2" r="2.6" fill="#4c44dc" stroke="#4c44dc" fill-opacity="0.8"/><circle cx="1249.8" cy="505.8" r="2.6" fill="#4c44dc" stroke="#4c44dc" fill-opacity="0.8"/><circle cx="1298.3" cy="487.9" r="2.6" fill="#4c44dc" stroke="#4c44dc" fill-opacity="0.8"/><circle cx="1328.6" cy="529.3" r="2.6" fill="#4c44dc" stroke="#4c44dc" fill-opacity="0.8"/><circle cx="1352.9" cy="508.4" r="2.6" fill="#4c44dc" stroke="#4c44dc" fill-opacity="0.8"/><circle cx="1371.9" cy="405.8" r="2.6" fill="#4c44dc" stroke="#4c44dc" fill-opacity="0.8"/><circle cx="1383.2" cy="539.3" r="2.6" fill="#4c44dc" stroke="#4c44dc" fill-opacity="0.8"/><circle cx="1395.4" cy="483.5" r="2.6" fill="#4c44dc" stroke="#4c44dc" fill-opacity="0.8"/><circle cx="1410.5" cy="486.5" r="2.6" fill="#4c44dc" stroke="#4c44dc" fill-opacity="0.8"/><circle cx="1446.9" cy="493.3" r="2.6" fill="#4c44dc" stroke="#4c44dc" fill-opacity="0.8"/><circle cx="380.7" cy="539.6" r="2.6" fill="#4c44dc" stroke="#4c44dc" fill-opacity="0.8"/><circle cx="397.4" cy="513.5" r="2.6" fill="#4c44dc" stroke="#4c44dc" fill-opacity="0.8"/><circle cx="421.7" cy="574.8" r="2.6" fill="#4c44dc" stroke="#4c44dc" fill-opacity="0.8"/><circle cx="456.5" cy="548.2" r="2.6" fill="#4c44dc" stroke="#4c44dc" fill-opacity="0.8"/><circle cx="474.7" cy="543.9" r="2.6" fill="#4c44dc" stroke="#4c44dc" fill-opacity="0.8"/><circle cx="497.5" cy="539.8" r="2.6" fill="#4c44dc" stroke="#4c44dc" fill-opacity="0.8"/><circle cx="514.9" cy="586.8" r="2.6" fill="#4c44dc" stroke="#4c44dc" fill-opacity="0.8"/><circle cx="530.9" cy="586.5" r="2.6" fill="#4c44dc" stroke="#4c44dc" fill-opacity="0.8"/><circle cx="556.6" cy="694.0" r="2.6" fill="#4c44dc" stroke="#4c44dc" fill-opacity="0.8"/><circle cx="570.3" cy="735.3" r="2.6" fill="#4c44dc" stroke="#4c44dc" fill-opacity="0.8"/><circle cx="577.1" cy="771.0" r="2.6" fill="#4c44dc" stroke="#4c44dc" fill-opacity="0.8"/><circle cx="617.3" cy="626.6" r="2.6" fill="#4c44dc" stroke="#4c44dc" fill-opacity="0.8"/><circle cx="632.5" cy="632.9" r="2.6" fill="#4c44dc" stroke="#4c44dc" fill-opacity="0.8"/><circle cx="659.8" cy="698.5" r="2.6" fill="#4c44dc" stroke="#4c44dc" fill-opacity="0.8"/><circle cx="676.5" cy="712.2" r="2.6" fill="#4c44dc" stroke="#4c44dc" fill-opacity="0.8"/><circle cx="690.1" cy="493.3" r="2.6" fill="#4c44dc" stroke="#4c44dc" fill-opacity="0.8"/><circle cx="380.7" cy="551.6" r="2.6" fill="#2e2e2e" stroke="#2e2e2e" fill-opacity="0.8"/><circle cx="397.4" cy="520.2" r="2.6" fill="#2e2e2e" stroke="#2e2e2e" fill-opacity="0.8"/><circle cx="421.7" cy="581.6" r="2.6" fill="#2e2e2e" stroke="#2e2e2e" fill-opacity="0.8"/><circle cx="456.5" cy="550.9" r="2.6" fill="#2e2e2e" stroke="#2e2e2e" fill-opacity="0.8"/><circle cx="474.7" cy="550.1" r="2.6" fill="#2e2e2e" stroke="#2e2e2e" fill-opacity="0.8"/><circle cx="497.5" cy="546.6" r="2.6" fill="#2e2e2e" stroke="#2e2e2e" fill-opacity="0.8"/><circle cx="514.9" cy="601.9" r="2.6" fill="#2e2e2e" stroke="#2e2e2e" fill-opacity="0.8"/><circle cx="530.9" cy="607.3" r="2.6" fill="#2e2e2e" stroke="#2e2e2e" fill-opacity="0.8"/><circle cx="556.6" cy="760.6" r="2.6" fill="#2e2e2e" stroke="#2e2e2e" fill-opacity="0.8"/><circle cx="570.3" cy="816.4" r="2.6" fill="#2e2e2e" stroke="#2e2e2e" fill-opacity="0.8"/><circle cx="577.1" cy="856.4" r="2.6" fill="#2e2e2e" stroke="#2e2e2e" fill-opacity="0.8"/><circle cx="617.3" cy="730.3" r="2.6" fill="#2e2e2e" stroke="#2e2e2e" fill-opacity="0.8"/><circle cx="632.5" cy="673.0" r="2.6" fill="#2e2e2e" stroke="#2e2e2e" fill-opacity="0.8"/><circle cx="659.8" cy="746.5" r="2.6" fill="#2e2e2e" stroke="#2e2e2e" fill-opacity="0.8"/><circle cx="676.5" cy="758.1" r="2.6" fill="#2e2e2e" stroke="#2e2e2e" fill-opacity="0.8"/><circle cx="690.1" cy="666.6" r="2.6" fill="#2e2e2e" stroke="#2e2e2e" fill-opacity="0.8"/><circle cx="703.8" cy="604.1" r="2.6" fill="#2e2e2e" stroke="#2e2e2e" fill-opacity="0.8"/><circle cx="720.4" cy="572.9" r="2.6" fill="#2e2e2e" stroke="#2e2e2e" fill-opacity="0.8"/><circle cx="740.9" cy="584.8" r="2.6" fill="#2e2e2e" stroke="#2e2e2e" fill-opacity="0.8"/><circle cx="758.4" cy="737.0" r="2.6" fill="#2e2e2e" stroke="#2e2e2e" fill-opacity="0.8"/><circle cx="784.1" cy="794.2" r="2.6" fill="#2e2e2e" stroke="#2e2e2e" fill-opacity="0.8"/><circle cx="802.3" cy="632.0" r="2.6" fill="#2e2e2e" stroke="#2e2e2e" fill-opacity="0.8"/><circle cx="832.7" cy="601.9" r="2.6" fill="#2e2e2e" stroke="#2e2e2e" fill-opacity="0.8"/><circle cx="854.7" cy="519.0" r="2.6" fill="#2e2e2e" stroke="#2e2e2e" fill-opacity="0.8"/><circle cx="869.1" cy="493.3" r="2.6" fill="#2e2e2e" stroke="#2e2e2e" fill-opacity="0.8"/><circle cx="380.7" cy="559.9" r="2.6" fill="#e4884e" stroke="#e4884e" fill-opacity="0.8"/><circle cx="397.4" cy="526.3" r="2.6" fill="#e4884e" stroke="#e4884e" fill-opacity="0.8"/><circle cx="421.7" cy="583.9" r="2.6" fill="#e4884e" stroke="#e4884e" fill-opacity="0.8"/><circle cx="456.5" cy="553.5" r="2.6" fill="#e4884e" stroke="#e4884e" fill-opacity="0.8"/><circle cx="474.7" cy="551.9" r="2.6" fill="#e4884e" stroke="#e4884e" fill-opacity="0.8"/><circle cx="497.5" cy="552.4" r="2.6" fill="#e4884e" stroke="#e4884e" fill-opacity="0.8"/><circle cx="514.9" cy="605.7" r="2.6" fill="#e4884e" stroke="#e4884e" fill-opacity="0.8"/><circle cx="530.9" cy="609.4" r="2.6" fill="#e4884e" stroke="#e4884e" fill-opacity="0.8"/><circle cx="556.6" cy="759.8" r="2.6" fill="#e4884e" stroke="#e4884e" fill-opacity="0.8"/><circle cx="570.3" cy="804.1" r="2.6" fill="#e4884e" stroke="#e4884e" fill-opacity="0.8"/><circle cx="577.1" cy="841.6" r="2.6" fill="#e4884e" stroke="#e4884e" fill-opacity="0.8"/><circle cx="617.3" cy="724.1" r="2.6" fill="#e4884e" stroke="#e4884e" fill-opacity="0.8"/><circle cx="632.5" cy="672.9" r="2.6" fill="#e4884e" stroke="#e4884e" fill-opacity="0.8"/><circle cx="659.8" cy="739.6" r="2.6" fill="#e4884e" stroke="#e4884e" fill-opacity="0.8"/><circle cx="676.5" cy="763.5" r="2.6" fill="#e4884e" stroke="#e4884e" fill-opacity="0.8"/><circle cx="690.1" cy="679.9" r="2.6" fill="#e4884e" stroke="#e4884e" fill-opacity="0.8"/><circle cx="703.8" cy="615.9" r="2.6" fill="#e4884e" stroke="#e4884e" fill-opacity="0.8"/><circle cx="720.4" cy="574.3" r="2.6" fill="#e4884e" stroke="#e4884e" fill-opacity="0.8"/><circle cx="740.9" cy="591.9" r="2.6" fill="#e4884e" stroke="#e4884e" fill-opacity="0.8"/><circle cx="758.4" cy="748.1" r="2.6" fill="#e4884e" stroke="#e4884e" fill-opacity="0.8"/><circle cx="784.1" cy="820.6" r="2.6" fill="#e4884e" stroke="#e4884e" fill-opacity="0.8"/><circle cx="802.3" cy="637.2" r="2.6" fill="#e4884e" stroke="#e4884e" fill-opacity="0.8"/><circle cx="832.7" cy="607.2" r="2.6" fill="#e4884e" stroke="#e4884e" fill-opacity="0.8"/><circle cx="854.7" cy="520.0" r="2.6" fill="#e4884e" stroke="#e4884e" fill-opacity="0.8"/><circle cx="869.1" cy="510.3" r="2.6" fill="#e4884e" stroke="#e4884e" fill-opacity="0.8"/><circle cx="875.1" cy="501.2" r="2.6" fill="#e4884e" stroke="#e4884e" fill-opacity="0.8"/><circle cx="878.9" cy="500.6" r="2.6" fill="#e4884e" stroke="#e4884e" fill-opacity="0.8"/><circle cx="893.3" cy="435.1" r="2.6" fill="#e4884e" stroke="#e4884e" fill-opacity="0.8"/><circle cx="920.6" cy="545.9" r="2.6" fill="#e4884e" stroke="#e4884e" fill-opacity="0.8"/><circle cx="951.0" cy="537.9" r="2.6" fill="#e4884e" stroke="#e4884e" fill-opacity="0.8"/><circle cx="990.4" cy="527.7" r="2.6" fill="#e4884e" stroke="#e4884e" fill-opacity="0.8"/><circle cx="1028.3" cy="491.7" r="2.6" fill="#e4884e" stroke="#e4884e" fill-opacity="0.8"/><circle cx="1051.1" cy="439.2" r="2.6" fill="#e4884e" stroke="#e4884e" fill-opacity="0.8"/><circle cx="1076.9" cy="535.8" r="2.6" fill="#e4884e" stroke="#e4884e" fill-opacity="0.8"/><circle cx="1116.3" cy="505.7" r="2.6" fill="#e4884e" stroke="#e4884e" fill-opacity="0.8"/><circle cx="1139.1" cy="489.6" r="2.6" fill="#e4884e" stroke="#e4884e" fill-opacity="0.8"/><circle cx="1167.9" cy="476.7" r="2.6" fill="#e4884e" stroke="#e4884e" fill-opacity="0.8"/><circle cx="1207.3" cy="496.8" r="2.6" fill="#e4884e" stroke="#e4884e" fill-opacity="0.8"/><circle cx="1249.8" cy="521.2" r="2.6" fill="#e4884e" stroke="#e4884e" fill-opacity="0.8"/><circle cx="1298.3" cy="514.2" r="2.6" fill="#e4884e" stroke="#e4884e" fill-opacity="0.8"/><circle cx="1328.6" cy="535.3" r="2.6" fill="#e4884e" stroke="#e4884e" fill-opacity="0.8"/><circle cx="1352.9" cy="512.4" r="2.6" fill="#e4884e" stroke="#e4884e" fill-opacity="0.8"/><circle cx="1371.9" cy="410.4" r="2.6" fill="#e4884e" stroke="#e4884e" fill-opacity="0.8"/><circle cx="1383.2" cy="544.1" r="2.6" fill="#e4884e" stroke="#e4884e" fill-opacity="0.8"/><circle cx="1395.4" cy="489.2" r="2.6" fill="#e4884e" stroke="#e4884e" fill-opacity="0.8"/><circle cx="1410.5" cy="496.0" r="2.6" fill="#e4884e" stroke="#e4884e" fill-opacity="0.8"/><circle cx="1446.9" cy="518.4" r="2.6" fill="#e4884e" stroke="#e4884e" fill-opacity="0.8"/><circle cx="1480.3" cy="533.1" r="2.6" fill="#e4884e" stroke="#e4884e" fill-opacity="0.8"/><circle cx="1516.7" cy="493.3" r="2.6" fill="#e4884e" stroke="#e4884e" fill-opacity="0.8"/><circle cx="380.7" cy="557.3" r="2.6" fill="#5c8a6a" stroke="#5c8a6a" fill-opacity="0.8"/><circle cx="397.4" cy="524.7" r="2.6" fill="#5c8a6a" stroke="#5c8a6a" fill-opacity="0.8"/><circle cx="421.7" cy="582.1" r="2.6" fill="#5c8a6a" stroke="#5c8a6a" fill-opacity="0.8"/><circle cx="456.5" cy="551.7" r="2.6" fill="#5c8a6a" stroke="#5c8a6a" fill-opacity="0.8"/><circle cx="474.7" cy="551.3" r="2.6" fill="#5c8a6a" stroke="#5c8a6a" fill-opacity="0.8"/><circle cx="497.5" cy="547.9" r="2.6" fill="#5c8a6a" stroke="#5c8a6a" fill-opacity="0.8"/><circle cx="514.9" cy="604.8" r="2.6" fill="#5c8a6a" stroke="#5c8a6a" fill-opacity="0.8"/><circle cx="530.9" cy="606.1" r="2.6" fill="#5c8a6a" stroke="#5c8a6a" fill-opacity="0.8"/><circle cx="556.6" cy="756.6" r="2.6" fill="#5c8a6a" stroke="#5c8a6a" fill-opacity="0.8"/><circle cx="570.3" cy="813.3" r="2.6" fill="#5c8a6a" stroke="#5c8a6a" fill-opacity="0.8"/><circle cx="577.1" cy="865.0" r="2.6" fill="#5c8a6a" stroke="#5c8a6a" fill-opacity="0.8"/><circle cx="617.3" cy="719.0" r="2.6" fill="#5c8a6a" stroke="#5c8a6a" fill-opacity="0.8"/><circle cx="632.5" cy="681.3" r="2.6" fill="#5c8a6a" stroke="#5c8a6a" fill-opacity="0.8"/><circle cx="659.8" cy="756.8" r="2.6" fill="#5c8a6a" stroke="#5c8a6a" fill-opacity="0.8"/><circle cx="676.5" cy="764.7" r="2.6" fill="#5c8a6a" stroke="#5c8a6a" fill-opacity="0.8"/><circle cx="690.1" cy="679.9" r="2.6" fill="#5c8a6a" stroke="#5c8a6a" fill-opacity="0.8"/><circle cx="703.8" cy="614.7" r="2.6" fill="#5c8a6a" stroke="#5c8a6a" fill-opacity="0.8"/><circle cx="720.4" cy="572.3" r="2.6" fill="#5c8a6a" stroke="#5c8a6a" fill-opacity="0.8"/><circle cx="740.9" cy="589.9" r="2.6" fill="#5c8a6a" stroke="#5c8a6a" fill-opacity="0.8"/><circle cx="758.4" cy="748.1" r="2.6" fill="#5c8a6a" stroke="#5c8a6a" fill-opacity="0.8"/><circle cx="784.1" cy="817.4" r="2.6" fill="#5c8a6a" stroke="#5c8a6a" fill-opacity="0.8"/><circle cx="802.3" cy="635.5" r="2.6" fill="#5c8a6a" stroke="#5c8a6a" fill-opacity="0.8"/><circle cx="832.7" cy="604.6" r="2.6" fill="#5c8a6a" stroke="#5c8a6a" fill-opacity="0.8"/><circle cx="854.7" cy="519.0" r="2.6" fill="#5c8a6a" stroke="#5c8a6a" fill-opacity="0.8"/><circle cx="869.1" cy="506.4" r="2.6" fill="#5c8a6a" stroke="#5c8a6a" fill-opacity="0.8"/><circle cx="875.1" cy="501.6" r="2.6" fill="#5c8a6a" stroke="#5c8a6a" fill-opacity="0.8"/><circle cx="878.9" cy="501.9" r="2.6" fill="#5c8a6a" stroke="#5c8a6a" fill-opacity="0.8"/><circle cx="893.3" cy="431.7" r="2.6" fill="#5c8a6a" stroke="#5c8a6a" fill-opacity="0.8"/><circle cx="920.6" cy="515.0" r="2.6" fill="#5c8a6a" stroke="#5c8a6a" fill-opacity="0.8"/><circle cx="951.0" cy="517.1" r="2.6" fill="#5c8a6a" stroke="#5c8a6a" fill-opacity="0.8"/><circle cx="990.4" cy="517.0" r="2.6" fill="#5c8a6a" stroke="#5c8a6a" fill-opacity="0.8"/><circle cx="1028.3" cy="489.1" r="2.6" fill="#5c8a6a" stroke="#5c8a6a" fill-opacity="0.8"/><circle cx="1051.1" cy="438.5" r="2.6" fill="#5c8a6a" stroke="#5c8a6a" fill-opacity="0.8"/><circle cx="1076.9" cy="533.7" r="2.6" fill="#5c8a6a" stroke="#5c8a6a" fill-opacity="0.8"/><circle cx="1116.3" cy="505.0" r="2.6" fill="#5c8a6a" stroke="#5c8a6a" fill-opacity="0.8"/><circle cx="1139.1" cy="462.4" r="2.6" fill="#5c8a6a" stroke="#5c8a6a" fill-opacity="0.8"/><circle cx="1167.9" cy="467.9" r="2.6" fill="#5c8a6a" stroke="#5c8a6a" fill-opacity="0.8"/><circle cx="1207.3" cy="481.6" r="2.6" fill="#5c8a6a" stroke="#5c8a6a" fill-opacity="0.8"/><circle cx="1249.8" cy="510.5" r="2.6" fill="#5c8a6a" stroke="#5c8a6a" fill-opacity="0.8"/><circle cx="1298.3" cy="493.0" r="2.6" fill="#5c8a6a" stroke="#5c8a6a" fill-opacity="0.8"/><circle cx="1328.6" cy="534.2" r="2.6" fill="#5c8a6a" stroke="#5c8a6a" fill-opacity="0.8"/><circle cx="1352.9" cy="512.4" r="2.6" fill="#5c8a6a" stroke="#5c8a6a" fill-opacity="0.8"/><circle cx="1371.9" cy="409.1" r="2.6" fill="#5c8a6a" stroke="#5c8a6a" fill-opacity="0.8"/><circle cx="1383.2" cy="542.9" r="2.6" fill="#5c8a6a" stroke="#5c8a6a" fill-opacity="0.8"/><circle cx="1395.4" cy="486.9" r="2.6" fill="#5c8a6a" stroke="#5c8a6a" fill-opacity="0.8"/><circle cx="1410.5" cy="493.7" r="2.6" fill="#5c8a6a" stroke="#5c8a6a" fill-opacity="0.8"/><circle cx="1446.9" cy="515.1" r="2.6" fill="#5c8a6a" stroke="#5c8a6a" fill-opacity="0.8"/><circle cx="1480.3" cy="532.4" r="2.6" fill="#5c8a6a" stroke="#5c8a6a" fill-opacity="0.8"/><circle cx="1516.7" cy="477.2" r="2.6" fill="#5c8a6a" stroke="#5c8a6a" fill-opacity="0.8"/><circle cx="1553.1" cy="473.0" r="2.6" fill="#5c8a6a" stroke="#5c8a6a" fill-opacity="0.8"/><circle cx="1560.7" cy="464.0" r="2.6" fill="#5c8a6a" stroke="#5c8a6a" fill-opacity="0.8"/><circle cx="1604.7" cy="477.3" r="2.6" fill="#5c8a6a" stroke="#5c8a6a" fill-opacity="0.8"/><circle cx="1635.0" cy="525.3" r="2.6" fill="#5c8a6a" stroke="#5c8a6a" fill-opacity="0.8"/><circle cx="1671.4" cy="488.1" r="2.6" fill="#5c8a6a" stroke="#5c8a6a" fill-opacity="0.8"/><circle cx="1716.9" cy="487.9" r="2.6" fill="#5c8a6a" stroke="#5c8a6a" fill-opacity="0.8"/><circle cx="1759.4" cy="519.8" r="2.6" fill="#5c8a6a" stroke="#5c8a6a" fill-opacity="0.8"/><circle cx="1786.7" cy="493.3" r="2.6" fill="#5c8a6a" stroke="#5c8a6a" fill-opacity="0.8"/><circle cx="380.7" cy="526.0" r="2.6" fill="#8c2a1a" stroke="#8c2a1a" fill-opacity="0.8"/><circle cx="397.4" cy="502.6" r="2.6" fill="#8c2a1a" stroke="#8c2a1a" fill-opacity="0.8"/><circle cx="421.7" cy="559.2" r="2.6" fill="#8c2a1a" stroke="#8c2a1a" fill-opacity="0.8"/><circle cx="456.5" cy="544.3" r="2.6" fill="#8c2a1a" stroke="#8c2a1a" fill-opacity="0.8"/><circle cx="474.7" cy="504.0" r="2.6" fill="#8c2a1a" stroke="#8c2a1a" fill-opacity="0.8"/><circle cx="497.5" cy="509.1" r="2.6" fill="#8c2a1a" stroke="#8c2a1a" fill-opacity="0.8"/><circle cx="514.9" cy="539.7" r="2.6" fill="#8c2a1a" stroke="#8c2a1a" fill-opacity="0.8"/><circle cx="530.9" cy="518.9" r="2.6" fill="#8c2a1a" stroke="#8c2a1a" fill-opacity="0.8"/><circle cx="556.6" cy="610.6" r="2.6" fill="#8c2a1a" stroke="#8c2a1a" fill-opacity="0.8"/><circle cx="570.3" cy="586.5" r="2.6" fill="#8c2a1a" stroke="#8c2a1a" fill-opacity="0.8"/><circle cx="577.1" cy="585.3" r="2.6" fill="#8c2a1a" stroke="#8c2a1a" fill-opacity="0.8"/><circle cx="617.3" cy="553.5" r="2.6" fill="#8c2a1a" stroke="#8c2a1a" fill-opacity="0.8"/><circle cx="632.5" cy="584.5" r="2.6" fill="#8c2a1a" stroke="#8c2a1a" fill-opacity="0.8"/><circle cx="659.8" cy="611.2" r="2.6" fill="#8c2a1a" stroke="#8c2a1a" fill-opacity="0.8"/><circle cx="676.5" cy="668.1" r="2.6" fill="#8c2a1a" stroke="#8c2a1a" fill-opacity="0.8"/><circle cx="690.1" cy="616.5" r="2.6" fill="#8c2a1a" stroke="#8c2a1a" fill-opacity="0.8"/><circle cx="703.8" cy="561.4" r="2.6" fill="#8c2a1a" stroke="#8c2a1a" fill-opacity="0.8"/><circle cx="720.4" cy="547.0" r="2.6" fill="#8c2a1a" stroke="#8c2a1a" fill-opacity="0.8"/><circle cx="740.9" cy="553.9" r="2.6" fill="#8c2a1a" stroke="#8c2a1a" fill-opacity="0.8"/><circle cx="758.4" cy="650.9" r="2.6" fill="#8c2a1a" stroke="#8c2a1a" fill-opacity="0.8"/><circle cx="784.1" cy="658.4" r="2.6" fill="#8c2a1a" stroke="#8c2a1a" fill-opacity="0.8"/><circle cx="802.3" cy="604.9" r="2.6" fill="#8c2a1a" stroke="#8c2a1a" fill-opacity="0.8"/><circle cx="832.7" cy="573.1" r="2.6" fill="#8c2a1a" stroke="#8c2a1a" fill-opacity="0.8"/><circle cx="854.7" cy="499.7" r="2.6" fill="#8c2a1a" stroke="#8c2a1a" fill-opacity="0.8"/><circle cx="869.1" cy="480.6" r="2.6" fill="#8c2a1a" stroke="#8c2a1a" fill-opacity="0.8"/><circle cx="875.1" cy="472.7" r="2.6" fill="#8c2a1a" stroke="#8c2a1a" fill-opacity="0.8"/><circle cx="878.9" cy="479.6" r="2.6" fill="#8c2a1a" stroke="#8c2a1a" fill-opacity="0.8"/><circle cx="893.3" cy="404.3" r="2.6" fill="#8c2a1a" stroke="#8c2a1a" fill-opacity="0.8"/><circle cx="920.6" cy="480.7" r="2.6" fill="#8c2a1a" stroke="#8c2a1a" fill-opacity="0.8"/><circle cx="951.0" cy="498.2" r="2.6" fill="#8c2a1a" stroke="#8c2a1a" fill-opacity="0.8"/><circle cx="990.4" cy="503.4" r="2.6" fill="#8c2a1a" stroke="#8c2a1a" fill-opacity="0.8"/><circle cx="1028.3" cy="472.1" r="2.6" fill="#8c2a1a" stroke="#8c2a1a" fill-opacity="0.8"/><circle cx="1051.1" cy="425.3" r="2.6" fill="#8c2a1a" stroke="#8c2a1a" fill-opacity="0.8"/><circle cx="1076.9" cy="514.4" r="2.6" fill="#8c2a1a" stroke="#8c2a1a" fill-opacity="0.8"/><circle cx="1116.3" cy="480.8" r="2.6" fill="#8c2a1a" stroke="#8c2a1a" fill-opacity="0.8"/><circle cx="1139.1" cy="454.6" r="2.6" fill="#8c2a1a" stroke="#8c2a1a" fill-opacity="0.8"/><circle cx="1167.9" cy="454.0" r="2.6" fill="#8c2a1a" stroke="#8c2a1a" fill-opacity="0.8"/><circle cx="1207.3" cy="476.4" r="2.6" fill="#8c2a1a" stroke="#8c2a1a" fill-opacity="0.8"/><circle cx="1249.8" cy="499.7" r="2.6" fill="#8c2a1a" stroke="#8c2a1a" fill-opacity="0.8"/><circle cx="1298.3" cy="481.5" r="2.6" fill="#8c2a1a" stroke="#8c2a1a" fill-opacity="0.8"/><circle cx="1328.6" cy="525.3" r="2.6" fill="#8c2a1a" stroke="#8c2a1a" fill-opacity="0.8"/><circle cx="1352.9" cy="505.7" r="2.6" fill="#8c2a1a" stroke="#8c2a1a" fill-opacity="0.8"/><circle cx="1371.9" cy="402.7" r="2.6" fill="#8c2a1a" stroke="#8c2a1a" fill-opacity="0.8"/><circle cx="1383.2" cy="536.1" r="2.6" fill="#8c2a1a" stroke="#8c2a1a" fill-opacity="0.8"/><circle cx="1395.4" cy="479.8" r="2.6" fill="#8c2a1a" stroke="#8c2a1a" fill-opacity="0.8"/><circle cx="1410.5" cy="483.6" r="2.6" fill="#8c2a1a" stroke="#8c2a1a" fill-opacity="0.8"/><circle cx="1446.9" cy="493.4" r="2.6" fill="#8c2a1a" stroke="#8c2a1a" fill-opacity="0.8"/><circle cx="1480.3" cy="522.9" r="2.6" fill="#8c2a1a" stroke="#8c2a1a" fill-opacity="0.8"/><circle cx="1516.7" cy="482.8" r="2.6" fill="#8c2a1a" stroke="#8c2a1a" fill-opacity="0.8"/><circle cx="1553.1" cy="493.3" r="2.6" fill="#8c2a1a" stroke="#8c2a1a" fill-opacity="0.8"/><circle cx="380.7" cy="526.5" r="2.6" fill="#4c44dc" stroke="#4c44dc" fill-opacity="0.8"/><circle cx="397.4" cy="503.2" r="2.6" fill="#4c44dc" stroke="#4c44dc" fill-opacity="0.8"/><circle cx="421.7" cy="566.0" r="2.6" fill="#4c44dc" stroke="#4c44dc" fill-opacity="0.8"/><circle cx="456.5" cy="533.1" r="2.6" fill="#4c44dc" stroke="#4c44dc" fill-opacity="0.8"/><circle cx="474.7" cy="535.2" r="2.6" fill="#4c44dc" stroke="#4c44dc" fill-opacity="0.8"/><circle cx="497.5" cy="531.4" r="2.6" fill="#4c44dc" stroke="#4c44dc" fill-opacity="0.8"/><circle cx="514.9" cy="554.0" r="2.6" fill="#4c44dc" stroke="#4c44dc" fill-opacity="0.8"/><circle cx="530.9" cy="518.9" r="2.6" fill="#4c44dc" stroke="#4c44dc" fill-opacity="0.8"/><circle cx="556.6" cy="616.7" r="2.6" fill="#4c44dc" stroke="#4c44dc" fill-opacity="0.8"/><circle cx="570.3" cy="561.5" r="2.6" fill="#4c44dc" stroke="#4c44dc" fill-opacity="0.8"/><circle cx="577.1" cy="525.3" r="2.6" fill="#4c44dc" stroke="#4c44dc" fill-opacity="0.8"/><circle cx="617.3" cy="504.0" r="2.6" fill="#4c44dc" stroke="#4c44dc" fill-opacity="0.8"/><circle cx="632.5" cy="575.1" r="2.6" fill="#4c44dc" stroke="#4c44dc" fill-opacity="0.8"/><circle cx="659.8" cy="577.3" r="2.6" fill="#4c44dc" stroke="#4c44dc" fill-opacity="0.8"/><circle cx="676.5" cy="606.3" r="2.6" fill="#4c44dc" stroke="#4c44dc" fill-opacity="0.8"/><circle cx="690.1" cy="588.4" r="2.6" fill="#4c44dc" stroke="#4c44dc" fill-opacity="0.8"/><circle cx="703.8" cy="548.1" r="2.6" fill="#4c44dc" stroke="#4c44dc" fill-opacity="0.8"/><circle cx="720.4" cy="544.6" r="2.6" fill="#4c44dc" stroke="#4c44dc" fill-opacity="0.8"/><circle cx="740.9" cy="551.0" r="2.6" fill="#4c44dc" stroke="#4c44dc" fill-opacity="0.8"/><circle cx="758.4" cy="651.6" r="2.6" fill="#4c44dc" stroke="#4c44dc" fill-opacity="0.8"/><circle cx="784.1" cy="662.2" r="2.6" fill="#4c44dc" stroke="#4c44dc" fill-opacity="0.8"/><circle cx="802.3" cy="590.0" r="2.6" fill="#4c44dc" stroke="#4c44dc" fill-opacity="0.8"/><circle cx="832.7" cy="586.5" r="2.6" fill="#4c44dc" stroke="#4c44dc" fill-opacity="0.8"/><circle cx="854.7" cy="501.1" r="2.6" fill="#4c44dc" stroke="#4c44dc" fill-opacity="0.8"/><circle cx="869.1" cy="481.3" r="2.6" fill="#4c44dc" stroke="#4c44dc" fill-opacity="0.8"/><circle cx="875.1" cy="473.3" r="2.6" fill="#4c44dc" stroke="#4c44dc" fill-opacity="0.8"/><circle cx="878.9" cy="477.7" r="2.6" fill="#4c44dc" stroke="#4c44dc" fill-opacity="0.8"/><circle cx="893.3" cy="403.3" r="2.6" fill="#4c44dc" stroke="#4c44dc" fill-opacity="0.8"/><circle cx="920.6" cy="479.5" r="2.6" fill="#4c44dc" stroke="#4c44dc" fill-opacity="0.8"/><circle cx="951.0" cy="497.1" r="2.6" fill="#4c44dc" stroke="#4c44dc" fill-opacity="0.8"/><circle cx="990.4" cy="501.2" r="2.6" fill="#4c44dc" stroke="#4c44dc" fill-opacity="0.8"/><circle cx="1028.3" cy="471.7" r="2.6" fill="#4c44dc" stroke="#4c44dc" fill-opacity="0.8"/><circle cx="1051.1" cy="424.1" r="2.6" fill="#4c44dc" stroke="#4c44dc" fill-opacity="0.8"/><circle cx="1076.9" cy="503.4" r="2.6" fill="#4c44dc" stroke="#4c44dc" fill-opacity="0.8"/><circle cx="1116.3" cy="479.4" r="2.6" fill="#4c44dc" stroke="#4c44dc" fill-opacity="0.8"/><circle cx="1139.1" cy="453.8" r="2.6" fill="#4c44dc" stroke="#4c44dc" fill-opacity="0.8"/><circle cx="1167.9" cy="449.0" r="2.6" fill="#4c44dc" stroke="#4c44dc" fill-opacity="0.8"/><circle cx="1207.3" cy="470.7" r="2.6" fill="#4c44dc" stroke="#4c44dc" fill-opacity="0.8"/><circle cx="1249.8" cy="498.5" r="2.6" fill="#4c44dc" stroke="#4c44dc" fill-opacity="0.8"/><circle cx="1298.3" cy="478.6" r="2.6" fill="#4c44dc" stroke="#4c44dc" fill-opacity="0.8"/><circle cx="1328.6" cy="493.3" r="2.6" fill="#4c44dc" stroke="#4c44dc" fill-opacity="0.8"/><circle cx="380.7" cy="550.2" r="2.6" fill="#2e2e2e" stroke="#2e2e2e" fill-opacity="0.8"/><circle cx="397.4" cy="519.6" r="2.6" fill="#2e2e2e" stroke="#2e2e2e" fill-opacity="0.8"/><circle cx="421.7" cy="578.9" r="2.6" fill="#2e2e2e" stroke="#2e2e2e" fill-opacity="0.8"/><circle cx="456.5" cy="550.6" r="2.6" fill="#2e2e2e" stroke="#2e2e2e" fill-opacity="0.8"/><circle cx="474.7" cy="547.5" r="2.6" fill="#2e2e2e" stroke="#2e2e2e" fill-opacity="0.8"/><circle cx="497.5" cy="545.3" r="2.6" fill="#2e2e2e" stroke="#2e2e2e" fill-opacity="0.8"/><circle cx="514.9" cy="592.5" r="2.6" fill="#2e2e2e" stroke="#2e2e2e" fill-opacity="0.8"/><circle cx="530.9" cy="593.7" r="2.6" fill="#2e2e2e" stroke="#2e2e2e" fill-opacity="0.8"/><circle cx="556.6" cy="714.9" r="2.6" fill="#2e2e2e" stroke="#2e2e2e" fill-opacity="0.8"/><circle cx="570.3" cy="742.8" r="2.6" fill="#2e2e2e" stroke="#2e2e2e" fill-opacity="0.8"/><circle cx="577.1" cy="772.5" r="2.6" fill="#2e2e2e" stroke="#2e2e2e" fill-opacity="0.8"/><circle cx="617.3" cy="622.9" r="2.6" fill="#2e2e2e" stroke="#2e2e2e" fill-opacity="0.8"/><circle cx="632.5" cy="626.5" r="2.6" fill="#2e2e2e" stroke="#2e2e2e" fill-opacity="0.8"/><circle cx="659.8" cy="709.4" r="2.6" fill="#2e2e2e" stroke="#2e2e2e" fill-opacity="0.8"/><circle cx="676.5" cy="722.7" r="2.6" fill="#2e2e2e" stroke="#2e2e2e" fill-opacity="0.8"/><circle cx="690.1" cy="661.1" r="2.6" fill="#2e2e2e" stroke="#2e2e2e" fill-opacity="0.8"/><circle cx="703.8" cy="597.3" r="2.6" fill="#2e2e2e" stroke="#2e2e2e" fill-opacity="0.8"/><circle cx="720.4" cy="567.1" r="2.6" fill="#2e2e2e" stroke="#2e2e2e" fill-opacity="0.8"/><circle cx="740.9" cy="583.3" r="2.6" fill="#2e2e2e" stroke="#2e2e2e" fill-opacity="0.8"/><circle cx="758.4" cy="727.0" r="2.6" fill="#2e2e2e" stroke="#2e2e2e" fill-opacity="0.8"/><circle cx="784.1" cy="797.6" r="2.6" fill="#2e2e2e" stroke="#2e2e2e" fill-opacity="0.8"/><circle cx="802.3" cy="632.1" r="2.6" fill="#2e2e2e" stroke="#2e2e2e" fill-opacity="0.8"/><circle cx="832.7" cy="602.8" r="2.6" fill="#2e2e2e" stroke="#2e2e2e" fill-opacity="0.8"/><circle cx="854.7" cy="515.7" r="2.6" fill="#2e2e2e" stroke="#2e2e2e" fill-opacity="0.8"/><circle cx="869.1" cy="499.9" r="2.6" fill="#2e2e2e" stroke="#2e2e2e" fill-opacity="0.8"/><circle cx="875.1" cy="494.2" r="2.6" fill="#2e2e2e" stroke="#2e2e2e" fill-opacity="0.8"/><circle cx="878.9" cy="494.7" r="2.6" fill="#2e2e2e" stroke="#2e2e2e" fill-opacity="0.8"/><circle cx="893.3" cy="422.9" r="2.6" fill="#2e2e2e" stroke="#2e2e2e" fill-opacity="0.8"/><circle cx="920.6" cy="502.1" r="2.6" fill="#2e2e2e" stroke="#2e2e2e" fill-opacity="0.8"/><circle cx="951.0" cy="512.9" r="2.6" fill="#2e2e2e" stroke="#2e2e2e" fill-opacity="0.8"/><circle cx="990.4" cy="513.5" r="2.6" fill="#2e2e2e" stroke="#2e2e2e" fill-opacity="0.8"/><circle cx="1028.3" cy="484.1" r="2.6" fill="#2e2e2e" stroke="#2e2e2e" fill-opacity="0.8"/><circle cx="1051.1" cy="475.7" r="2.6" fill="#2e2e2e" stroke="#2e2e2e" fill-opacity="0.8"/><circle cx="1076.9" cy="493.3" r="2.6" fill="#2e2e2e" stroke="#2e2e2e" fill-opacity="0.8"/><circle cx="380.7" cy="549.1" r="2.6" fill="#5c8a6a" stroke="#5c8a6a" fill-opacity="0.8"/><circle cx="397.4" cy="518.1" r="2.6" fill="#5c8a6a" stroke="#5c8a6a" fill-opacity="0.8"/><circle cx="421.7" cy="578.4" r="2.6" fill="#5c8a6a" stroke="#5c8a6a" fill-opacity="0.8"/><circle cx="456.5" cy="550.1" r="2.6" fill="#5c8a6a" stroke="#5c8a6a" fill-opacity="0.8"/><circle cx="474.7" cy="547.4" r="2.6" fill="#5c8a6a" stroke="#5c8a6a" fill-opacity="0.8"/><circle cx="497.5" cy="545.4" r="2.6" fill="#5c8a6a" stroke="#5c8a6a" fill-opacity="0.8"/><circle cx="514.9" cy="593.8" r="2.6" fill="#5c8a6a" stroke="#5c8a6a" fill-opacity="0.8"/><circle cx="530.9" cy="594.1" r="2.6" fill="#5c8a6a" stroke="#5c8a6a" fill-opacity="0.8"/><circle cx="556.6" cy="702.6" r="2.6" fill="#5c8a6a" stroke="#5c8a6a" fill-opacity="0.8"/><circle cx="570.3" cy="731.0" r="2.6" fill="#5c8a6a" stroke="#5c8a6a" fill-opacity="0.8"/><circle cx="577.1" cy="736.6" r="2.6" fill="#5c8a6a" stroke="#5c8a6a" fill-opacity="0.8"/><circle cx="617.3" cy="613.0" r="2.6" fill="#5c8a6a" stroke="#5c8a6a" fill-opacity="0.8"/><circle cx="632.5" cy="622.2" r="2.6" fill="#5c8a6a" stroke="#5c8a6a" fill-opacity="0.8"/><circle cx="659.8" cy="704.1" r="2.6" fill="#5c8a6a" stroke="#5c8a6a" fill-opacity="0.8"/><circle cx="676.5" cy="714.1" r="2.6" fill="#5c8a6a" stroke="#5c8a6a" fill-opacity="0.8"/><circle cx="690.1" cy="652.0" r="2.6" fill="#5c8a6a" stroke="#5c8a6a" fill-opacity="0.8"/><circle cx="703.8" cy="590.3" r="2.6" fill="#5c8a6a" stroke="#5c8a6a" fill-opacity="0.8"/><circle cx="720.4" cy="565.4" r="2.6" fill="#5c8a6a" stroke="#5c8a6a" fill-opacity="0.8"/><circle cx="740.9" cy="580.7" r="2.6" fill="#5c8a6a" stroke="#5c8a6a" fill-opacity="0.8"/><circle cx="758.4" cy="725.4" r="2.6" fill="#5c8a6a" stroke="#5c8a6a" fill-opacity="0.8"/><circle cx="784.1" cy="786.8" r="2.6" fill="#5c8a6a" stroke="#5c8a6a" fill-opacity="0.8"/><circle cx="802.3" cy="628.4" r="2.6" fill="#5c8a6a" stroke="#5c8a6a" fill-opacity="0.8"/><circle cx="832.7" cy="600.1" r="2.6" fill="#5c8a6a" stroke="#5c8a6a" fill-opacity="0.8"/><circle cx="854.7" cy="513.2" r="2.6" fill="#5c8a6a" stroke="#5c8a6a" fill-opacity="0.8"/><circle cx="869.1" cy="498.0" r="2.6" fill="#5c8a6a" stroke="#5c8a6a" fill-opacity="0.8"/><circle cx="875.1" cy="488.6" r="2.6" fill="#5c8a6a" stroke="#5c8a6a" fill-opacity="0.8"/><circle cx="878.9" cy="493.1" r="2.6" fill="#5c8a6a" stroke="#5c8a6a" fill-opacity="0.8"/><circle cx="893.3" cy="423.0" r="2.6" fill="#5c8a6a" stroke="#5c8a6a" fill-opacity="0.8"/><circle cx="920.6" cy="501.6" r="2.6" fill="#5c8a6a" stroke="#5c8a6a" fill-opacity="0.8"/><circle cx="951.0" cy="513.2" r="2.6" fill="#5c8a6a" stroke="#5c8a6a" fill-opacity="0.8"/><circle cx="990.4" cy="514.2" r="2.6" fill="#5c8a6a" stroke="#5c8a6a" fill-opacity="0.8"/><circle cx="1028.3" cy="483.4" r="2.6" fill="#5c8a6a" stroke="#5c8a6a" fill-opacity="0.8"/><circle cx="1051.1" cy="434.7" r="2.6" fill="#5c8a6a" stroke="#5c8a6a" fill-opacity="0.8"/><circle cx="1076.9" cy="529.5" r="2.6" fill="#5c8a6a" stroke="#5c8a6a" fill-opacity="0.8"/><circle cx="1116.3" cy="497.7" r="2.6" fill="#5c8a6a" stroke="#5c8a6a" fill-opacity="0.8"/><circle cx="1139.1" cy="460.6" r="2.6" fill="#5c8a6a" stroke="#5c8a6a" fill-opacity="0.8"/><circle cx="1167.9" cy="460.4" r="2.6" fill="#5c8a6a" stroke="#5c8a6a" fill-opacity="0.8"/><circle cx="1207.3" cy="480.3" r="2.6" fill="#5c8a6a" stroke="#5c8a6a" fill-opacity="0.8"/><circle cx="1249.8" cy="507.9" r="2.6" fill="#5c8a6a" stroke="#5c8a6a" fill-opacity="0.8"/><circle cx="1298.3" cy="490.0" r="2.6" fill="#5c8a6a" stroke="#5c8a6a" fill-opacity="0.8"/><circle cx="1328.6" cy="530.9" r="2.6" fill="#5c8a6a" stroke="#5c8a6a" fill-opacity="0.8"/><circle cx="1352.9" cy="510.0" r="2.6" fill="#5c8a6a" stroke="#5c8a6a" fill-opacity="0.8"/><circle cx="1371.9" cy="407.2" r="2.6" fill="#5c8a6a" stroke="#5c8a6a" fill-opacity="0.8"/><circle cx="1383.2" cy="541.0" r="2.6" fill="#5c8a6a" stroke="#5c8a6a" fill-opacity="0.8"/><circle cx="1395.4" cy="493.3" r="2.6" fill="#5c8a6a" stroke="#5c8a6a" fill-opacity="0.8"/><circle cx="380.7" cy="541.6" r="2.6" fill="#2e2e2e" stroke="#2e2e2e" fill-opacity="0.8"/><circle cx="397.4" cy="516.0" r="2.6" fill="#2e2e2e" stroke="#2e2e2e" fill-opacity="0.8"/><circle cx="421.7" cy="576.6" r="2.6" fill="#2e2e2e" stroke="#2e2e2e" fill-opacity="0.8"/><circle cx="456.5" cy="548.9" r="2.6" fill="#2e2e2e" stroke="#2e2e2e" fill-opacity="0.8"/><circle cx="474.7" cy="546.2" r="2.6" fill="#2e2e2e" stroke="#2e2e2e" fill-opacity="0.8"/><circle cx="497.5" cy="542.6" r="2.6" fill="#2e2e2e" stroke="#2e2e2e" fill-opacity="0.8"/><circle cx="514.9" cy="591.9" r="2.6" fill="#2e2e2e" stroke="#2e2e2e" fill-opacity="0.8"/><circle cx="530.9" cy="594.2" r="2.6" fill="#2e2e2e" stroke="#2e2e2e" fill-opacity="0.8"/><circle cx="556.6" cy="714.2" r="2.6" fill="#2e2e2e" stroke="#2e2e2e" fill-opacity="0.8"/><circle cx="570.3" cy="757.3" r="2.6" fill="#2e2e2e" stroke="#2e2e2e" fill-opacity="0.8"/><circle cx="577.1" cy="788.1" r="2.6" fill="#2e2e2e" stroke="#2e2e2e" fill-opacity="0.8"/><circle cx="617.3" cy="643.8" r="2.6" fill="#2e2e2e" stroke="#2e2e2e" fill-opacity="0.8"/><circle cx="632.5" cy="636.9" r="2.6" fill="#2e2e2e" stroke="#2e2e2e" fill-opacity="0.8"/><circle cx="659.8" cy="700.2" r="2.6" fill="#2e2e2e" stroke="#2e2e2e" fill-opacity="0.8"/><circle cx="676.5" cy="709.9" r="2.6" fill="#2e2e2e" stroke="#2e2e2e" fill-opacity="0.8"/><circle cx="690.1" cy="643.7" r="2.6" fill="#2e2e2e" stroke="#2e2e2e" fill-opacity="0.8"/><circle cx="703.8" cy="588.1" r="2.6" fill="#2e2e2e" stroke="#2e2e2e" fill-opacity="0.8"/><circle cx="720.4" cy="559.3" r="2.6" fill="#2e2e2e" stroke="#2e2e2e" fill-opacity="0.8"/><circle cx="740.9" cy="572.5" r="2.6" fill="#2e2e2e" stroke="#2e2e2e" fill-opacity="0.8"/><circle cx="758.4" cy="705.1" r="2.6" fill="#2e2e2e" stroke="#2e2e2e" fill-opacity="0.8"/><circle cx="784.1" cy="759.8" r="2.6" fill="#2e2e2e" stroke="#2e2e2e" fill-opacity="0.8"/><circle cx="802.3" cy="625.0" r="2.6" fill="#2e2e2e" stroke="#2e2e2e" fill-opacity="0.8"/><circle cx="832.7" cy="598.5" r="2.6" fill="#2e2e2e" stroke="#2e2e2e" fill-opacity="0.8"/><circle cx="854.7" cy="514.1" r="2.6" fill="#2e2e2e" stroke="#2e2e2e" fill-opacity="0.8"/><circle cx="869.1" cy="499.8" r="2.6" fill="#2e2e2e" stroke="#2e2e2e" fill-opacity="0.8"/><circle cx="875.1" cy="493.0" r="2.6" fill="#2e2e2e" stroke="#2e2e2e" fill-opacity="0.8"/><circle cx="878.9" cy="494.0" r="2.6" fill="#2e2e2e" stroke="#2e2e2e" fill-opacity="0.8"/><circle cx="893.3" cy="423.7" r="2.6" fill="#2e2e2e" stroke="#2e2e2e" fill-opacity="0.8"/><circle cx="920.6" cy="500.8" r="2.6" fill="#2e2e2e" stroke="#2e2e2e" fill-opacity="0.8"/><circle cx="951.0" cy="512.5" r="2.6" fill="#2e2e2e" stroke="#2e2e2e" fill-opacity="0.8"/><circle cx="990.4" cy="513.9" r="2.6" fill="#2e2e2e" stroke="#2e2e2e" fill-opacity="0.8"/><circle cx="1028.3" cy="483.6" r="2.6" fill="#2e2e2e" stroke="#2e2e2e" fill-opacity="0.8"/><circle cx="1051.1" cy="435.1" r="2.6" fill="#2e2e2e" stroke="#2e2e2e" fill-opacity="0.8"/><circle cx="1076.9" cy="528.9" r="2.6" fill="#2e2e2e" stroke="#2e2e2e" fill-opacity="0.8"/><circle cx="1116.3" cy="498.8" r="2.6" fill="#2e2e2e" stroke="#2e2e2e" fill-opacity="0.8"/><circle cx="1139.1" cy="460.7" r="2.6" fill="#2e2e2e" stroke="#2e2e2e" fill-opacity="0.8"/><circle cx="1167.9" cy="460.3" r="2.6" fill="#2e2e2e" stroke="#2e2e2e" fill-opacity="0.8"/><circle cx="1207.3" cy="480.3" r="2.6" fill="#2e2e2e" stroke="#2e2e2e" fill-opacity="0.8"/><circle cx="1249.8" cy="507.9" r="2.6" fill="#2e2e2e" stroke="#2e2e2e" fill-opacity="0.8"/><circle cx="1298.3" cy="490.4" r="2.6" fill="#2e2e2e" stroke="#2e2e2e" fill-opacity="0.8"/><circle cx="1328.6" cy="531.4" r="2.6" fill="#2e2e2e" stroke="#2e2e2e" fill-opacity="0.8"/><circle cx="1352.9" cy="510.0" r="2.6" fill="#2e2e2e" stroke="#2e2e2e" fill-opacity="0.8"/><circle cx="1371.9" cy="407.6" r="2.6" fill="#2e2e2e" stroke="#2e2e2e" fill-opacity="0.8"/><circle cx="1383.2" cy="541.4" r="2.6" fill="#2e2e2e" stroke="#2e2e2e" fill-opacity="0.8"/><circle cx="1395.4" cy="485.1" r="2.6" fill="#2e2e2e" stroke="#2e2e2e" fill-opacity="0.8"/><circle cx="1410.5" cy="487.8" r="2.6" fill="#2e2e2e" stroke="#2e2e2e" fill-opacity="0.8"/><circle cx="1446.9" cy="509.0" r="2.6" fill="#2e2e2e" stroke="#2e2e2e" fill-opacity="0.8"/><circle cx="1480.3" cy="529.8" r="2.6" fill="#2e2e2e" stroke="#2e2e2e" fill-opacity="0.8"/><circle cx="1516.7" cy="473.8" r="2.6" fill="#2e2e2e" stroke="#2e2e2e" fill-opacity="0.8"/><circle cx="1553.1" cy="469.4" r="2.6" fill="#2e2e2e" stroke="#2e2e2e" fill-opacity="0.8"/><circle cx="1560.7" cy="493.3" r="2.6" fill="#2e2e2e" stroke="#2e2e2e" fill-opacity="0.8"/><circle cx="380.7" cy="493.3" r="2.6" fill="#2e2e2e" stroke="#2e2e2e" fill-opacity="0.8"/><circle cx="380.7" cy="540.0" r="2.6" fill="#2e2e2e" stroke="#2e2e2e" fill-opacity="0.8"/><circle cx="397.4" cy="511.7" r="2.6" fill="#2e2e2e" stroke="#2e2e2e" fill-opacity="0.8"/><circle cx="421.7" cy="571.7" r="2.6" fill="#2e2e2e" stroke="#2e2e2e" fill-opacity="0.8"/><circle cx="456.5" cy="546.8" r="2.6" fill="#2e2e2e" stroke="#2e2e2e" fill-opacity="0.8"/><circle cx="474.7" cy="543.0" r="2.6" fill="#2e2e2e" stroke="#2e2e2e" fill-opacity="0.8"/><circle cx="497.5" cy="536.4" r="2.6" fill="#2e2e2e" stroke="#2e2e2e" fill-opacity="0.8"/><circle cx="514.9" cy="581.9" r="2.6" fill="#2e2e2e" stroke="#2e2e2e" fill-opacity="0.8"/><circle cx="530.9" cy="576.7" r="2.6" fill="#2e2e2e" stroke="#2e2e2e" fill-opacity="0.8"/><circle cx="556.6" cy="667.1" r="2.6" fill="#2e2e2e" stroke="#2e2e2e" fill-opacity="0.8"/><circle cx="570.3" cy="680.2" r="2.6" fill="#2e2e2e" stroke="#2e2e2e" fill-opacity="0.8"/><circle cx="577.1" cy="642.0" r="2.6" fill="#2e2e2e" stroke="#2e2e2e" fill-opacity="0.8"/><circle cx="617.3" cy="575.4" r="2.6" fill="#2e2e2e" stroke="#2e2e2e" fill-opacity="0.8"/><circle cx="632.5" cy="598.1" r="2.6" fill="#2e2e2e" stroke="#2e2e2e" fill-opacity="0.8"/><circle cx="659.8" cy="549.5" r="2.6" fill="#2e2e2e" stroke="#2e2e2e" fill-opacity="0.8"/><circle cx="676.5" cy="493.3" r="2.6" fill="#2e2e2e" stroke="#2e2e2e" fill-opacity="0.8"/><circle cx="380.7" cy="535.5" r="2.6" fill="#8c2a1a" stroke="#8c2a1a" fill-opacity="0.8"/><circle cx="397.4" cy="510.2" r="2.6" fill="#8c2a1a" stroke="#8c2a1a" fill-opacity="0.8"/><circle cx="421.7" cy="542.3" r="2.6" fill="#8c2a1a" stroke="#8c2a1a" fill-opacity="0.8"/><circle cx="456.5" cy="493.3" r="2.6" fill="#8c2a1a" stroke="#8c2a1a" fill-opacity="0.8"/><circle cx="380.7" cy="546.7" r="2.6" fill="#e4884e" stroke="#e4884e" fill-opacity="0.8"/><circle cx="397.4" cy="518.2" r="2.6" fill="#e4884e" stroke="#e4884e" fill-opacity="0.8"/><circle cx="421.7" cy="578.3" r="2.6" fill="#e4884e" stroke="#e4884e" fill-opacity="0.8"/><circle cx="456.5" cy="550.1" r="2.6" fill="#e4884e" stroke="#e4884e" fill-opacity="0.8"/><circle cx="474.7" cy="547.3" r="2.6" fill="#e4884e" stroke="#e4884e" fill-opacity="0.8"/><circle cx="497.5" cy="543.4" r="2.6" fill="#e4884e" stroke="#e4884e" fill-opacity="0.8"/><circle cx="514.9" cy="598.2" r="2.6" fill="#e4884e" stroke="#e4884e" fill-opacity="0.8"/><circle cx="530.9" cy="600.1" r="2.6" fill="#e4884e" stroke="#e4884e" fill-opacity="0.8"/><circle cx="556.6" cy="730.7" r="2.6" fill="#e4884e" stroke="#e4884e" fill-opacity="0.8"/><circle cx="570.3" cy="809.4" r="2.6" fill="#e4884e" stroke="#e4884e" fill-opacity="0.8"/><circle cx="577.1" cy="810.8" r="2.6" fill="#e4884e" stroke="#e4884e" fill-opacity="0.8"/><circle cx="617.3" cy="584.6" r="2.6" fill="#e4884e" stroke="#e4884e" fill-opacity="0.8"/><circle cx="632.5" cy="493.3" r="2.6" fill="#e4884e" stroke="#e4884e" fill-opacity="0.8"/><circle cx="380.7" cy="522.9" r="2.6" fill="#e4884e" stroke="#e4884e" fill-opacity="0.8"/><circle cx="397.4" cy="500.4" r="2.6" fill="#e4884e" stroke="#e4884e" fill-opacity="0.8"/><circle cx="421.7" cy="543.0" r="2.6" fill="#e4884e" stroke="#e4884e" fill-opacity="0.8"/><circle cx="456.5" cy="544.1" r="2.6" fill="#e4884e" stroke="#e4884e" fill-opacity="0.8"/><circle cx="474.7" cy="504.0" r="2.6" fill="#e4884e" stroke="#e4884e" fill-opacity="0.8"/><circle cx="497.5" cy="508.2" r="2.6" fill="#e4884e" stroke="#e4884e" fill-opacity="0.8"/><circle cx="514.9" cy="522.6" r="2.6" fill="#e4884e" stroke="#e4884e" fill-opacity="0.8"/><circle cx="530.9" cy="518.9" r="2.6" fill="#e4884e" stroke="#e4884e" fill-opacity="0.8"/><circle cx="556.6" cy="610.6" r="2.6" fill="#e4884e" stroke="#e4884e" fill-opacity="0.8"/><circle cx="570.3" cy="561.5" r="2.6" fill="#e4884e" stroke="#e4884e" fill-opacity="0.8"/><circle cx="577.1" cy="525.3" r="2.6" fill="#e4884e" stroke="#e4884e" fill-opacity="0.8"/><circle cx="617.3" cy="504.0" r="2.6" fill="#e4884e" stroke="#e4884e" fill-opacity="0.8"/><circle cx="632.5" cy="573.2" r="2.6" fill="#e4884e" stroke="#e4884e" fill-opacity="0.8"/><circle cx="659.8" cy="569.5" r="2.6" fill="#e4884e" stroke="#e4884e" fill-opacity="0.8"/><circle cx="676.5" cy="624.3" r="2.6" fill="#e4884e" stroke="#e4884e" fill-opacity="0.8"/><circle cx="690.1" cy="612.4" r="2.6" fill="#e4884e" stroke="#e4884e" fill-opacity="0.8"/><circle cx="703.8" cy="561.4" r="2.6" fill="#e4884e" stroke="#e4884e" fill-opacity="0.8"/><circle cx="720.4" cy="543.2" r="2.6" fill="#e4884e" stroke="#e4884e" fill-opacity="0.8"/><circle cx="740.9" cy="549.0" r="2.6" fill="#e4884e" stroke="#e4884e" fill-opacity="0.8"/><circle cx="758.4" cy="644.5" r="2.6" fill="#e4884e" stroke="#e4884e" fill-opacity="0.8"/><circle cx="784.1" cy="664.5" r="2.6" fill="#e4884e" stroke="#e4884e" fill-opacity="0.8"/><circle cx="802.3" cy="599.3" r="2.6" fill="#e4884e" stroke="#e4884e" fill-opacity="0.8"/><circle cx="832.7" cy="567.2" r="2.6" fill="#e4884e" stroke="#e4884e" fill-opacity="0.8"/><circle cx="854.7" cy="498.6" r="2.6" fill="#e4884e" stroke="#e4884e" fill-opacity="0.8"/><circle cx="869.1" cy="478.9" r="2.6" fill="#e4884e" stroke="#e4884e" fill-opacity="0.8"/><circle cx="875.1" cy="472.0" r="2.6" fill="#e4884e" stroke="#e4884e" fill-opacity="0.8"/><circle cx="878.9" cy="477.3" r="2.6" fill="#e4884e" stroke="#e4884e" fill-opacity="0.8"/><circle cx="893.3" cy="402.8" r="2.6" fill="#e4884e" stroke="#e4884e" fill-opacity="0.8"/><circle cx="920.6" cy="477.6" r="2.6" fill="#e4884e" stroke="#e4884e" fill-opacity="0.8"/><circle cx="951.0" cy="495.0" r="2.6" fill="#e4884e" stroke="#e4884e" fill-opacity="0.8"/><circle cx="990.4" cy="499.9" r="2.6" fill="#e4884e" stroke="#e4884e" fill-opacity="0.8"/><circle cx="1028.3" cy="471.1" r="2.6" fill="#e4884e" stroke="#e4884e" fill-opacity="0.8"/><circle cx="1051.1" cy="420.8" r="2.6" fill="#e4884e" stroke="#e4884e" fill-opacity="0.8"/><circle cx="1076.9" cy="498.9" r="2.6" fill="#e4884e" stroke="#e4884e" fill-opacity="0.8"/><circle cx="1116.3" cy="479.2" r="2.6" fill="#e4884e" stroke="#e4884e" fill-opacity="0.8"/><circle cx="1139.1" cy="459.3" r="2.6" fill="#e4884e" stroke="#e4884e" fill-opacity="0.8"/><circle cx="1167.9" cy="493.3" r="2.6" fill="#e4884e" stroke="#e4884e" fill-opacity="0.8"/><circle cx="380.7" cy="533.2" r="2.6" fill="#44d4a4" stroke="#44d4a4" fill-opacity="0.8"/><circle cx="397.4" cy="511.5" r="2.6" fill="#44d4a4" stroke="#44d4a4" fill-opacity="0.8"/><circle cx="421.7" cy="572.3" r="2.6" fill="#44d4a4" stroke="#44d4a4" fill-opacity="0.8"/><circle cx="456.5" cy="547.3" r="2.6" fill="#44d4a4" stroke="#44d4a4" fill-opacity="0.8"/><circle cx="474.7" cy="542.9" r="2.6" fill="#44d4a4" stroke="#44d4a4" fill-opacity="0.8"/><circle cx="497.5" cy="493.3" r="2.6" fill="#44d4a4" stroke="#44d4a4" fill-opacity="0.8"/><circle cx="380.7" cy="526.4" r="2.6" fill="#8c2a1a" stroke="#8c2a1a" fill-opacity="0.8"/><circle cx="397.4" cy="505.1" r="2.6" fill="#8c2a1a" stroke="#8c2a1a" fill-opacity="0.8"/><circle cx="421.7" cy="567.3" r="2.6" fill="#8c2a1a" stroke="#8c2a1a" fill-opacity="0.8"/><circle cx="456.5" cy="545.2" r="2.6" fill="#8c2a1a" stroke="#8c2a1a" fill-opacity="0.8"/><circle cx="474.7" cy="538.3" r="2.6" fill="#8c2a1a" stroke="#8c2a1a" fill-opacity="0.8"/><circle cx="497.5" cy="530.9" r="2.6" fill="#8c2a1a" stroke="#8c2a1a" fill-opacity="0.8"/><circle cx="514.9" cy="572.7" r="2.6" fill="#8c2a1a" stroke="#8c2a1a" fill-opacity="0.8"/><circle cx="530.9" cy="569.2" r="2.6" fill="#8c2a1a" stroke="#8c2a1a" fill-opacity="0.8"/><circle cx="556.6" cy="639.1" r="2.6" fill="#8c2a1a" stroke="#8c2a1a" fill-opacity="0.8"/><circle cx="570.3" cy="568.3" r="2.6" fill="#8c2a1a" stroke="#8c2a1a" fill-opacity="0.8"/><circle cx="577.1" cy="536.1" r="2.6" fill="#8c2a1a" stroke="#8c2a1a" fill-opacity="0.8"/><circle cx="617.3" cy="505.6" r="2.6" fill="#8c2a1a" stroke="#8c2a1a" fill-opacity="0.8"/><circle cx="632.5" cy="573.2" r="2.6" fill="#8c2a1a" stroke="#8c2a1a" fill-opacity="0.8"/><circle cx="659.8" cy="569.5" r="2.6" fill="#8c2a1a" stroke="#8c2a1a" fill-opacity="0.8"/><circle cx="676.5" cy="598.9" r="2.6" fill="#8c2a1a" stroke="#8c2a1a" fill-opacity="0.8"/><circle cx="690.1" cy="594.4" r="2.6" fill="#8c2a1a" stroke="#8c2a1a" fill-opacity="0.8"/><circle cx="703.8" cy="557.5" r="2.6" fill="#8c2a1a" stroke="#8c2a1a" fill-opacity="0.8"/><circle cx="720.4" cy="541.9" r="2.6" fill="#8c2a1a" stroke="#8c2a1a" fill-opacity="0.8"/><circle cx="740.9" cy="548.4" r="2.6" fill="#8c2a1a" stroke="#8c2a1a" fill-opacity="0.8"/><circle cx="758.4" cy="659.9" r="2.6" fill="#8c2a1a" stroke="#8c2a1a" fill-opacity="0.8"/><circle cx="784.1" cy="687.8" r="2.6" fill="#8c2a1a" stroke="#8c2a1a" fill-opacity="0.8"/><circle cx="802.3" cy="607.0" r="2.6" fill="#8c2a1a" stroke="#8c2a1a" fill-opacity="0.8"/><circle cx="832.7" cy="585.3" r="2.6" fill="#8c2a1a" stroke="#8c2a1a" fill-opacity="0.8"/><circle cx="854.7" cy="505.7" r="2.6" fill="#8c2a1a" stroke="#8c2a1a" fill-opacity="0.8"/><circle cx="869.1" cy="485.6" r="2.6" fill="#8c2a1a" stroke="#8c2a1a" fill-opacity="0.8"/><circle cx="875.1" cy="476.6" r="2.6" fill="#8c2a1a" stroke="#8c2a1a" fill-opacity="0.8"/><circle cx="878.9" cy="479.6" r="2.6" fill="#8c2a1a" stroke="#8c2a1a" fill-opacity="0.8"/><circle cx="893.3" cy="404.7" r="2.6" fill="#8c2a1a" stroke="#8c2a1a" fill-opacity="0.8"/><circle cx="920.6" cy="479.1" r="2.6" fill="#8c2a1a" stroke="#8c2a1a" fill-opacity="0.8"/><circle cx="951.0" cy="498.8" r="2.6" fill="#8c2a1a" stroke="#8c2a1a" fill-opacity="0.8"/><circle cx="990.4" cy="503.7" r="2.6" fill="#8c2a1a" stroke="#8c2a1a" fill-opacity="0.8"/><circle cx="1028.3" cy="472.0" r="2.6" fill="#8c2a1a" stroke="#8c2a1a" fill-opacity="0.8"/><circle cx="1051.1" cy="426.3" r="2.6" fill="#8c2a1a" stroke="#8c2a1a" fill-opacity="0.8"/><circle cx="1076.9" cy="513.8" r="2.6" fill="#8c2a1a" stroke="#8c2a1a" fill-opacity="0.8"/><circle cx="1116.3" cy="480.7" r="2.6" fill="#8c2a1a" stroke="#8c2a1a" fill-opacity="0.8"/><circle cx="1139.1" cy="455.0" r="2.6" fill="#8c2a1a" stroke="#8c2a1a" fill-opacity="0.8"/><circle cx="1167.9" cy="453.6" r="2.6" fill="#8c2a1a" stroke="#8c2a1a" fill-opacity="0.8"/><circle cx="1207.3" cy="493.3" r="2.6" fill="#8c2a1a" stroke="#8c2a1a" fill-opacity="0.8"/><circle cx="380.7" cy="559.9" r="2.6" fill="#4c44dc" stroke="#4c44dc" fill-opacity="0.8"/><circle cx="397.4" cy="526.3" r="2.6" fill="#4c44dc" stroke="#4c44dc" fill-opacity="0.8"/><circle cx="421.7" cy="583.9" r="2.6" fill="#4c44dc" stroke="#4c44dc" fill-opacity="0.8"/><circle cx="456.5" cy="553.5" r="2.6" fill="#4c44dc" stroke="#4c44dc" fill-opacity="0.8"/><circle cx="474.7" cy="551.5" r="2.6" fill="#4c44dc" stroke="#4c44dc" fill-opacity="0.8"/><circle cx="497.5" cy="556.2" r="2.6" fill="#4c44dc" stroke="#4c44dc" fill-opacity="0.8"/><circle cx="514.9" cy="605.9" r="2.6" fill="#4c44dc" stroke="#4c44dc" fill-opacity="0.8"/><circle cx="530.9" cy="608.7" r="2.6" fill="#4c44dc" stroke="#4c44dc" fill-opacity="0.8"/><circle cx="556.6" cy="759.1" r="2.6" fill="#4c44dc" stroke="#4c44dc" fill-opacity="0.8"/><circle cx="570.3" cy="822.1" r="2.6" fill="#4c44dc" stroke="#4c44dc" fill-opacity="0.8"/><circle cx="577.1" cy="875.6" r="2.6" fill="#4c44dc" stroke="#4c44dc" fill-opacity="0.8"/><circle cx="617.3" cy="736.2" r="2.6" fill="#4c44dc" stroke="#4c44dc" fill-opacity="0.8"/><circle cx="632.5" cy="681.3" r="2.6" fill="#4c44dc" stroke="#4c44dc" fill-opacity="0.8"/><circle cx="659.8" cy="758.5" r="2.6" fill="#4c44dc" stroke="#4c44dc" fill-opacity="0.8"/><circle cx="676.5" cy="765.1" r="2.6" fill="#4c44dc" stroke="#4c44dc" fill-opacity="0.8"/><circle cx="690.1" cy="679.9" r="2.6" fill="#4c44dc" stroke="#4c44dc" fill-opacity="0.8"/><circle cx="703.8" cy="615.9" r="2.6" fill="#4c44dc" stroke="#4c44dc" fill-opacity="0.8"/><circle cx="720.4" cy="574.3" r="2.6" fill="#4c44dc" stroke="#4c44dc" fill-opacity="0.8"/><circle cx="740.9" cy="591.8" r="2.6" fill="#4c44dc" stroke="#4c44dc" fill-opacity="0.8"/><circle cx="758.4" cy="748.1" r="2.6" fill="#4c44dc" stroke="#4c44dc" fill-opacity="0.8"/><circle cx="784.1" cy="493.3" r="2.6" fill="#4c44dc" stroke="#4c44dc" fill-opacity="0.8"/><circle cx="380.7" cy="542.1" r="2.6" fill="#7078c4" stroke="#7078c4" fill-opacity="0.8"/><circle cx="397.4" cy="514.7" r="2.6" fill="#7078c4" stroke="#7078c4" fill-opacity="0.8"/><circle cx="421.7" cy="574.7" r="2.6" fill="#7078c4" stroke="#7078c4" fill-opacity="0.8"/><circle cx="456.5" cy="549.4" r="2.6" fill="#7078c4" stroke="#7078c4" fill-opacity="0.8"/><circle cx="474.7" cy="546.0" r="2.6" fill="#7078c4" stroke="#7078c4" fill-opacity="0.8"/><circle cx="497.5" cy="541.9" r="2.6" fill="#7078c4" stroke="#7078c4" fill-opacity="0.8"/><circle cx="514.9" cy="552.5" r="2.6" fill="#7078c4" stroke="#7078c4" fill-opacity="0.8"/><circle cx="530.9" cy="493.3" r="2.6" fill="#7078c4" stroke="#7078c4" fill-opacity="0.8"/><circle cx="380.7" cy="551.2" r="2.6" fill="#44d4a4" stroke="#44d4a4" fill-opacity="0.8"/><circle cx="397.4" cy="519.8" r="2.6" fill="#44d4a4" stroke="#44d4a4" fill-opacity="0.8"/><circle cx="421.7" cy="580.7" r="2.6" fill="#44d4a4" stroke="#44d4a4" fill-opacity="0.8"/><circle cx="456.5" cy="551.4" r="2.6" fill="#44d4a4" stroke="#44d4a4" fill-opacity="0.8"/><circle cx="474.7" cy="550.4" r="2.6" fill="#44d4a4" stroke="#44d4a4" fill-opacity="0.8"/><circle cx="497.5" cy="547.2" r="2.6" fill="#44d4a4" stroke="#44d4a4" fill-opacity="0.8"/><circle cx="514.9" cy="605.2" r="2.6" fill="#44d4a4" stroke="#44d4a4" fill-opacity="0.8"/><circle cx="530.9" cy="605.0" r="2.6" fill="#44d4a4" stroke="#44d4a4" fill-opacity="0.8"/><circle cx="556.6" cy="756.1" r="2.6" fill="#44d4a4" stroke="#44d4a4" fill-opacity="0.8"/><circle cx="570.3" cy="815.7" r="2.6" fill="#44d4a4" stroke="#44d4a4" fill-opacity="0.8"/><circle cx="577.1" cy="856.4" r="2.6" fill="#44d4a4" stroke="#44d4a4" fill-opacity="0.8"/><circle cx="617.3" cy="696.5" r="2.6" fill="#44d4a4" stroke="#44d4a4" fill-opacity="0.8"/><circle cx="632.5" cy="656.1" r="2.6" fill="#44d4a4" stroke="#44d4a4" fill-opacity="0.8"/><circle cx="659.8" cy="727.8" r="2.6" fill="#44d4a4" stroke="#44d4a4" fill-opacity="0.8"/><circle cx="676.5" cy="733.7" r="2.6" fill="#44d4a4" stroke="#44d4a4" fill-opacity="0.8"/><circle cx="690.1" cy="660.4" r="2.6" fill="#44d4a4" stroke="#44d4a4" fill-opacity="0.8"/><circle cx="703.8" cy="601.5" r="2.6" fill="#44d4a4" stroke="#44d4a4" fill-opacity="0.8"/><circle cx="720.4" cy="567.2" r="2.6" fill="#44d4a4" stroke="#44d4a4" fill-opacity="0.8"/><circle cx="740.9" cy="581.9" r="2.6" fill="#44d4a4" stroke="#44d4a4" fill-opacity="0.8"/><circle cx="758.4" cy="729.3" r="2.6" fill="#44d4a4" stroke="#44d4a4" fill-opacity="0.8"/><circle cx="784.1" cy="794.0" r="2.6" fill="#44d4a4" stroke="#44d4a4" fill-opacity="0.8"/><circle cx="802.3" cy="632.8" r="2.6" fill="#44d4a4" stroke="#44d4a4" fill-opacity="0.8"/><circle cx="832.7" cy="604.9" r="2.6" fill="#44d4a4" stroke="#44d4a4" fill-opacity="0.8"/><circle cx="854.7" cy="519.0" r="2.6" fill="#44d4a4" stroke="#44d4a4" fill-opacity="0.8"/><circle cx="869.1" cy="507.3" r="2.6" fill="#44d4a4" stroke="#44d4a4" fill-opacity="0.8"/><circle cx="875.1" cy="493.3" r="2.6" fill="#44d4a4" stroke="#44d4a4" fill-opacity="0.8"/><circle cx="380.7" cy="550.4" r="2.6" fill="#7078c4" stroke="#7078c4" fill-opacity="0.8"/><circle cx="397.4" cy="518.5" r="2.6" fill="#7078c4" stroke="#7078c4" fill-opacity="0.8"/><circle cx="421.7" cy="579.8" r="2.6" fill="#7078c4" stroke="#7078c4" fill-opacity="0.8"/><circle cx="456.5" cy="550.6" r="2.6" fill="#7078c4" stroke="#7078c4" fill-opacity="0.8"/><circle cx="474.7" cy="549.1" r="2.6" fill="#7078c4" stroke="#7078c4" fill-opacity="0.8"/><circle cx="497.5" cy="545.6" r="2.6" fill="#7078c4" stroke="#7078c4" fill-opacity="0.8"/><circle cx="514.9" cy="602.3" r="2.6" fill="#7078c4" stroke="#7078c4" fill-opacity="0.8"/><circle cx="530.9" cy="601.9" r="2.6" fill="#7078c4" stroke="#7078c4" fill-opacity="0.8"/><circle cx="556.6" cy="740.6" r="2.6" fill="#7078c4" stroke="#7078c4" fill-opacity="0.8"/><circle cx="570.3" cy="790.6" r="2.6" fill="#7078c4" stroke="#7078c4" fill-opacity="0.8"/><circle cx="577.1" cy="861.3" r="2.6" fill="#7078c4" stroke="#7078c4" fill-opacity="0.8"/><circle cx="617.3" cy="695.6" r="2.6" fill="#7078c4" stroke="#7078c4" fill-opacity="0.8"/><circle cx="632.5" cy="660.6" r="2.6" fill="#7078c4" stroke="#7078c4" fill-opacity="0.8"/><circle cx="659.8" cy="729.7" r="2.6" fill="#7078c4" stroke="#7078c4" fill-opacity="0.8"/><circle cx="676.5" cy="741.4" r="2.6" fill="#7078c4" stroke="#7078c4" fill-opacity="0.8"/><circle cx="690.1" cy="656.6" r="2.6" fill="#7078c4" stroke="#7078c4" fill-opacity="0.8"/><circle cx="703.8" cy="601.2" r="2.6" fill="#7078c4" stroke="#7078c4" fill-opacity="0.8"/><circle cx="720.4" cy="566.9" r="2.6" fill="#7078c4" stroke="#7078c4" fill-opacity="0.8"/><circle cx="740.9" cy="580.9" r="2.6" fill="#7078c4" stroke="#7078c4" fill-opacity="0.8"/><circle cx="758.4" cy="723.2" r="2.6" fill="#7078c4" stroke="#7078c4" fill-opacity="0.8"/><circle cx="784.1" cy="787.3" r="2.6" fill="#7078c4" stroke="#7078c4" fill-opacity="0.8"/><circle cx="802.3" cy="629.0" r="2.6" fill="#7078c4" stroke="#7078c4" fill-opacity="0.8"/><circle cx="832.7" cy="602.0" r="2.6" fill="#7078c4" stroke="#7078c4" fill-opacity="0.8"/><circle cx="854.7" cy="516.8" r="2.6" fill="#7078c4" stroke="#7078c4" fill-opacity="0.8"/><circle cx="869.1" cy="503.9" r="2.6" fill="#7078c4" stroke="#7078c4" fill-opacity="0.8"/><circle cx="875.1" cy="495.6" r="2.6" fill="#7078c4" stroke="#7078c4" fill-opacity="0.8"/><circle cx="878.9" cy="498.5" r="2.6" fill="#7078c4" stroke="#7078c4" fill-opacity="0.8"/><circle cx="893.3" cy="423.4" r="2.6" fill="#7078c4" stroke="#7078c4" fill-opacity="0.8"/><circle cx="920.6" cy="501.6" r="2.6" fill="#7078c4" stroke="#7078c4" fill-opacity="0.8"/><circle cx="951.0" cy="512.5" r="2.6" fill="#7078c4" stroke="#7078c4" fill-opacity="0.8"/><circle cx="990.4" cy="513.7" r="2.6" fill="#7078c4" stroke="#7078c4" fill-opacity="0.8"/><circle cx="1028.3" cy="483.5" r="2.6" fill="#7078c4" stroke="#7078c4" fill-opacity="0.8"/><circle cx="1051.1" cy="435.2" r="2.6" fill="#7078c4" stroke="#7078c4" fill-opacity="0.8"/><circle cx="1076.9" cy="529.6" r="2.6" fill="#7078c4" stroke="#7078c4" fill-opacity="0.8"/><circle cx="1116.3" cy="498.2" r="2.6" fill="#7078c4" stroke="#7078c4" fill-opacity="0.8"/><circle cx="1139.1" cy="460.7" r="2.6" fill="#7078c4" stroke="#7078c4" fill-opacity="0.8"/><circle cx="1167.9" cy="460.4" r="2.6" fill="#7078c4" stroke="#7078c4" fill-opacity="0.8"/><circle cx="1207.3" cy="480.2" r="2.6" fill="#7078c4" stroke="#7078c4" fill-opacity="0.8"/><circle cx="1249.8" cy="508.2" r="2.6" fill="#7078c4" stroke="#7078c4" fill-opacity="0.8"/><circle cx="1298.3" cy="490.3" r="2.6" fill="#7078c4" stroke="#7078c4" fill-opacity="0.8"/><circle cx="1328.6" cy="505.0" r="2.6" fill="#7078c4" stroke="#7078c4" fill-opacity="0.8"/><circle cx="1352.9" cy="493.3" r="2.6" fill="#7078c4" stroke="#7078c4" fill-opacity="0.8"/><circle cx="380.7" cy="548.7" r="2.6" fill="#7078c4" stroke="#7078c4" fill-opacity="0.8"/><circle cx="397.4" cy="521.3" r="2.6" fill="#7078c4" stroke="#7078c4" fill-opacity="0.8"/><circle cx="421.7" cy="579.1" r="2.6" fill="#7078c4" stroke="#7078c4" fill-opacity="0.8"/><circle cx="456.5" cy="550.2" r="2.6" fill="#7078c4" stroke="#7078c4" fill-opacity="0.8"/><circle cx="474.7" cy="546.3" r="2.6" fill="#7078c4" stroke="#7078c4" fill-opacity="0.8"/><circle cx="497.5" cy="541.7" r="2.6" fill="#7078c4" stroke="#7078c4" fill-opacity="0.8"/><circle cx="514.9" cy="593.0" r="2.6" fill="#7078c4" stroke="#7078c4" fill-opacity="0.8"/><circle cx="530.9" cy="589.7" r="2.6" fill="#7078c4" stroke="#7078c4" fill-opacity="0.8"/><circle cx="556.6" cy="709.0" r="2.6" fill="#7078c4" stroke="#7078c4" fill-opacity="0.8"/><circle cx="570.3" cy="751.3" r="2.6" fill="#7078c4" stroke="#7078c4" fill-opacity="0.8"/><circle cx="577.1" cy="797.7" r="2.6" fill="#7078c4" stroke="#7078c4" fill-opacity="0.8"/><circle cx="617.3" cy="666.4" r="2.6" fill="#7078c4" stroke="#7078c4" fill-opacity="0.8"/><circle cx="632.5" cy="652.5" r="2.6" fill="#7078c4" stroke="#7078c4" fill-opacity="0.8"/><circle cx="659.8" cy="733.1" r="2.6" fill="#7078c4" stroke="#7078c4" fill-opacity="0.8"/><circle cx="676.5" cy="751.9" r="2.6" fill="#7078c4" stroke="#7078c4" fill-opacity="0.8"/><circle cx="690.1" cy="659.6" r="2.6" fill="#7078c4" stroke="#7078c4" fill-opacity="0.8"/><circle cx="703.8" cy="607.0" r="2.6" fill="#7078c4" stroke="#7078c4" fill-opacity="0.8"/><circle cx="720.4" cy="568.3" r="2.6" fill="#7078c4" stroke="#7078c4" fill-opacity="0.8"/><circle cx="740.9" cy="585.6" r="2.6" fill="#7078c4" stroke="#7078c4" fill-opacity="0.8"/><circle cx="758.4" cy="723.2" r="2.6" fill="#7078c4" stroke="#7078c4" fill-opacity="0.8"/><circle cx="784.1" cy="601.4" r="2.6" fill="#7078c4" stroke="#7078c4" fill-opacity="0.8"/><circle cx="802.3" cy="493.3" r="2.6" fill="#7078c4" stroke="#7078c4" fill-opacity="0.8"/><circle cx="380.7" cy="527.2" r="2.6" fill="#8c2a1a" stroke="#8c2a1a" fill-opacity="0.8"/><circle cx="397.4" cy="506.5" r="2.6" fill="#8c2a1a" stroke="#8c2a1a" fill-opacity="0.8"/><circle cx="421.7" cy="565.5" r="2.6" fill="#8c2a1a" stroke="#8c2a1a" fill-opacity="0.8"/><circle cx="456.5" cy="543.8" r="2.6" fill="#8c2a1a" stroke="#8c2a1a" fill-opacity="0.8"/><circle cx="474.7" cy="538.1" r="2.6" fill="#8c2a1a" stroke="#8c2a1a" fill-opacity="0.8"/><circle cx="497.5" cy="531.7" r="2.6" fill="#8c2a1a" stroke="#8c2a1a" fill-opacity="0.8"/><circle cx="514.9" cy="570.2" r="2.6" fill="#8c2a1a" stroke="#8c2a1a" fill-opacity="0.8"/><circle cx="530.9" cy="569.9" r="2.6" fill="#8c2a1a" stroke="#8c2a1a" fill-opacity="0.8"/><circle cx="556.6" cy="640.2" r="2.6" fill="#8c2a1a" stroke="#8c2a1a" fill-opacity="0.8"/><circle cx="570.3" cy="661.7" r="2.6" fill="#8c2a1a" stroke="#8c2a1a" fill-opacity="0.8"/><circle cx="577.1" cy="609.7" r="2.6" fill="#8c2a1a" stroke="#8c2a1a" fill-opacity="0.8"/><circle cx="617.3" cy="566.7" r="2.6" fill="#8c2a1a" stroke="#8c2a1a" fill-opacity="0.8"/><circle cx="632.5" cy="493.3" r="2.6" fill="#8c2a1a" stroke="#8c2a1a" fill-opacity="0.8"/><circle cx="380.7" cy="553.7" r="2.6" fill="#7078c4" stroke="#7078c4" fill-opacity="0.8"/><circle cx="397.4" cy="522.8" r="2.6" fill="#7078c4" stroke="#7078c4" fill-opacity="0.8"/><circle cx="421.7" cy="582.4" r="2.6" fill="#7078c4" stroke="#7078c4" fill-opacity="0.8"/><circle cx="456.5" cy="552.7" r="2.6" fill="#7078c4" stroke="#7078c4" fill-opacity="0.8"/><circle cx="474.7" cy="550.3" r="2.6" fill="#7078c4" stroke="#7078c4" fill-opacity="0.8"/><circle cx="497.5" cy="552.6" r="2.6" fill="#7078c4" stroke="#7078c4" fill-opacity="0.8"/><circle cx="514.9" cy="609.9" r="2.6" fill="#7078c4" stroke="#7078c4" fill-opacity="0.8"/><circle cx="530.9" cy="613.8" r="2.6" fill="#7078c4" stroke="#7078c4" fill-opacity="0.8"/><circle cx="556.6" cy="765.1" r="2.6" fill="#7078c4" stroke="#7078c4" fill-opacity="0.8"/><circle cx="570.3" cy="837.6" r="2.6" fill="#7078c4" stroke="#7078c4" fill-opacity="0.8"/><circle cx="577.1" cy="903.7" r="2.6" fill="#7078c4" stroke="#7078c4" fill-opacity="0.8"/><circle cx="617.3" cy="493.3" r="2.6" fill="#7078c4" stroke="#7078c4" fill-opacity="0.8"/><circle cx="380.7" cy="532.8" r="2.6" fill="#5c8a6a" stroke="#5c8a6a" fill-opacity="0.8"/><circle cx="397.4" cy="507.0" r="2.6" fill="#5c8a6a" stroke="#5c8a6a" fill-opacity="0.8"/><circle cx="421.7" cy="572.0" r="2.6" fill="#5c8a6a" stroke="#5c8a6a" fill-opacity="0.8"/><circle cx="456.5" cy="547.1" r="2.6" fill="#5c8a6a" stroke="#5c8a6a" fill-opacity="0.8"/><circle cx="474.7" cy="543.8" r="2.6" fill="#5c8a6a" stroke="#5c8a6a" fill-opacity="0.8"/><circle cx="497.5" cy="540.6" r="2.6" fill="#5c8a6a" stroke="#5c8a6a" fill-opacity="0.8"/><circle cx="514.9" cy="586.1" r="2.6" fill="#5c8a6a" stroke="#5c8a6a" fill-opacity="0.8"/><circle cx="530.9" cy="587.1" r="2.6" fill="#5c8a6a" stroke="#5c8a6a" fill-opacity="0.8"/><circle cx="556.6" cy="691.6" r="2.6" fill="#5c8a6a" stroke="#5c8a6a" fill-opacity="0.8"/><circle cx="570.3" cy="709.8" r="2.6" fill="#5c8a6a" stroke="#5c8a6a" fill-opacity="0.8"/><circle cx="577.1" cy="695.0" r="2.6" fill="#5c8a6a" stroke="#5c8a6a" fill-opacity="0.8"/><circle cx="617.3" cy="590.1" r="2.6" fill="#5c8a6a" stroke="#5c8a6a" fill-opacity="0.8"/><circle cx="632.5" cy="608.1" r="2.6" fill="#5c8a6a" stroke="#5c8a6a" fill-opacity="0.8"/><circle cx="659.8" cy="651.3" r="2.6" fill="#5c8a6a" stroke="#5c8a6a" fill-opacity="0.8"/><circle cx="676.5" cy="674.8" r="2.6" fill="#5c8a6a" stroke="#5c8a6a" fill-opacity="0.8"/><circle cx="690.1" cy="626.4" r="2.6" fill="#5c8a6a" stroke="#5c8a6a" fill-opacity="0.8"/><circle cx="703.8" cy="572.7" r="2.6" fill="#5c8a6a" stroke="#5c8a6a" fill-opacity="0.8"/><circle cx="720.4" cy="550.1" r="2.6" fill="#5c8a6a" stroke="#5c8a6a" fill-opacity="0.8"/><circle cx="740.9" cy="561.8" r="2.6" fill="#5c8a6a" stroke="#5c8a6a" fill-opacity="0.8"/><circle cx="758.4" cy="681.3" r="2.6" fill="#5c8a6a" stroke="#5c8a6a" fill-opacity="0.8"/><circle cx="784.1" cy="714.3" r="2.6" fill="#5c8a6a" stroke="#5c8a6a" fill-opacity="0.8"/><circle cx="802.3" cy="618.3" r="2.6" fill="#5c8a6a" stroke="#5c8a6a" fill-opacity="0.8"/><circle cx="832.7" cy="594.0" r="2.6" fill="#5c8a6a" stroke="#5c8a6a" fill-opacity="0.8"/><circle cx="854.7" cy="510.3" r="2.6" fill="#5c8a6a" stroke="#5c8a6a" fill-opacity="0.8"/><circle cx="869.1" cy="495.8" r="2.6" fill="#5c8a6a" stroke="#5c8a6a" fill-opacity="0.8"/><circle cx="875.1" cy="488.5" r="2.6" fill="#5c8a6a" stroke="#5c8a6a" fill-opacity="0.8"/><circle cx="878.9" cy="488.9" r="2.6" fill="#5c8a6a" stroke="#5c8a6a" fill-opacity="0.8"/><circle cx="893.3" cy="417.0" r="2.6" fill="#5c8a6a" stroke="#5c8a6a" fill-opacity="0.8"/><circle cx="920.6" cy="493.3" r="2.6" fill="#5c8a6a" stroke="#5c8a6a" fill-opacity="0.8"/><circle cx="380.7" cy="547.1" r="2.6" fill="#5c8a6a" stroke="#5c8a6a" fill-opacity="0.8"/><circle cx="397.4" cy="519.9" r="2.6" fill="#5c8a6a" stroke="#5c8a6a" fill-opacity="0.8"/><circle cx="421.7" cy="578.7" r="2.6" fill="#5c8a6a" stroke="#5c8a6a" fill-opacity="0.8"/><circle cx="456.5" cy="550.5" r="2.6" fill="#5c8a6a" stroke="#5c8a6a" fill-opacity="0.8"/><circle cx="474.7" cy="548.1" r="2.6" fill="#5c8a6a" stroke="#5c8a6a" fill-opacity="0.8"/><circle cx="497.5" cy="544.8" r="2.6" fill="#5c8a6a" stroke="#5c8a6a" fill-opacity="0.8"/><circle cx="514.9" cy="596.4" r="2.6" fill="#5c8a6a" stroke="#5c8a6a" fill-opacity="0.8"/><circle cx="530.9" cy="599.1" r="2.6" fill="#5c8a6a" stroke="#5c8a6a" fill-opacity="0.8"/><circle cx="556.6" cy="720.0" r="2.6" fill="#5c8a6a" stroke="#5c8a6a" fill-opacity="0.8"/><circle cx="570.3" cy="758.2" r="2.6" fill="#5c8a6a" stroke="#5c8a6a" fill-opacity="0.8"/><circle cx="577.1" cy="793.6" r="2.6" fill="#5c8a6a" stroke="#5c8a6a" fill-opacity="0.8"/><circle cx="617.3" cy="650.0" r="2.6" fill="#5c8a6a" stroke="#5c8a6a" fill-opacity="0.8"/><circle cx="632.5" cy="637.0" r="2.6" fill="#5c8a6a" stroke="#5c8a6a" fill-opacity="0.8"/><circle cx="659.8" cy="709.9" r="2.6" fill="#5c8a6a" stroke="#5c8a6a" fill-opacity="0.8"/><circle cx="676.5" cy="726.9" r="2.6" fill="#5c8a6a" stroke="#5c8a6a" fill-opacity="0.8"/><circle cx="690.1" cy="651.0" r="2.6" fill="#5c8a6a" stroke="#5c8a6a" fill-opacity="0.8"/><circle cx="703.8" cy="597.2" r="2.6" fill="#5c8a6a" stroke="#5c8a6a" fill-opacity="0.8"/><circle cx="720.4" cy="528.6" r="2.6" fill="#5c8a6a" stroke="#5c8a6a" fill-opacity="0.8"/><circle cx="740.9" cy="493.3" r="2.6" fill="#5c8a6a" stroke="#5c8a6a" fill-opacity="0.8"/><circle cx="380.7" cy="556.6" r="2.6" fill="#5c8a6a" stroke="#5c8a6a" fill-opacity="0.8"/><circle cx="397.4" cy="524.9" r="2.6" fill="#5c8a6a" stroke="#5c8a6a" fill-opacity="0.8"/><circle cx="421.7" cy="583.8" r="2.6" fill="#5c8a6a" stroke="#5c8a6a" fill-opacity="0.8"/><circle cx="456.5" cy="552.3" r="2.6" fill="#5c8a6a" stroke="#5c8a6a" fill-opacity="0.8"/><circle cx="474.7" cy="549.0" r="2.6" fill="#5c8a6a" stroke="#5c8a6a" fill-opacity="0.8"/><circle cx="497.5" cy="546.0" r="2.6" fill="#5c8a6a" stroke="#5c8a6a" fill-opacity="0.8"/><circle cx="514.9" cy="599.6" r="2.6" fill="#5c8a6a" stroke="#5c8a6a" fill-opacity="0.8"/><circle cx="530.9" cy="604.8" r="2.6" fill="#5c8a6a" stroke="#5c8a6a" fill-opacity="0.8"/><circle cx="556.6" cy="747.8" r="2.6" fill="#5c8a6a" stroke="#5c8a6a" fill-opacity="0.8"/><circle cx="570.3" cy="810.9" r="2.6" fill="#5c8a6a" stroke="#5c8a6a" fill-opacity="0.8"/><circle cx="577.1" cy="882.4" r="2.6" fill="#5c8a6a" stroke="#5c8a6a" fill-opacity="0.8"/><circle cx="617.3" cy="718.2" r="2.6" fill="#5c8a6a" stroke="#5c8a6a" fill-opacity="0.8"/><circle cx="632.5" cy="677.4" r="2.6" fill="#5c8a6a" stroke="#5c8a6a" fill-opacity="0.8"/><circle cx="659.8" cy="760.9" r="2.6" fill="#5c8a6a" stroke="#5c8a6a" fill-opacity="0.8"/><circle cx="676.5" cy="763.8" r="2.6" fill="#5c8a6a" stroke="#5c8a6a" fill-opacity="0.8"/><circle cx="690.1" cy="674.7" r="2.6" fill="#5c8a6a" stroke="#5c8a6a" fill-opacity="0.8"/><circle cx="703.8" cy="611.4" r="2.6" fill="#5c8a6a" stroke="#5c8a6a" fill-opacity="0.8"/><circle cx="720.4" cy="573.6" r="2.6" fill="#5c8a6a" stroke="#5c8a6a" fill-opacity="0.8"/><circle cx="740.9" cy="588.5" r="2.6" fill="#5c8a6a" stroke="#5c8a6a" fill-opacity="0.8"/><circle cx="758.4" cy="746.0" r="2.6" fill="#5c8a6a" stroke="#5c8a6a" fill-opacity="0.8"/><circle cx="784.1" cy="814.9" r="2.6" fill="#5c8a6a" stroke="#5c8a6a" fill-opacity="0.8"/><circle cx="802.3" cy="635.7" r="2.6" fill="#5c8a6a" stroke="#5c8a6a" fill-opacity="0.8"/><circle cx="832.7" cy="604.2" r="2.6" fill="#5c8a6a" stroke="#5c8a6a" fill-opacity="0.8"/><circle cx="854.7" cy="517.3" r="2.6" fill="#5c8a6a" stroke="#5c8a6a" fill-opacity="0.8"/><circle cx="869.1" cy="503.7" r="2.6" fill="#5c8a6a" stroke="#5c8a6a" fill-opacity="0.8"/><circle cx="875.1" cy="500.9" r="2.6" fill="#5c8a6a" stroke="#5c8a6a" fill-opacity="0.8"/><circle cx="878.9" cy="497.6" r="2.6" fill="#5c8a6a" stroke="#5c8a6a" fill-opacity="0.8"/><circle cx="893.3" cy="429.4" r="2.6" fill="#5c8a6a" stroke="#5c8a6a" fill-opacity="0.8"/><circle cx="920.6" cy="509.1" r="2.6" fill="#5c8a6a" stroke="#5c8a6a" fill-opacity="0.8"/><circle cx="951.0" cy="522.8" r="2.6" fill="#5c8a6a" stroke="#5c8a6a" fill-opacity="0.8"/><circle cx="990.4" cy="517.2" r="2.6" fill="#5c8a6a" stroke="#5c8a6a" fill-opacity="0.8"/><circle cx="1028.3" cy="487.7" r="2.6" fill="#5c8a6a" stroke="#5c8a6a" fill-opacity="0.8"/><circle cx="1051.1" cy="437.8" r="2.6" fill="#5c8a6a" stroke="#5c8a6a" fill-opacity="0.8"/><circle cx="1076.9" cy="534.9" r="2.6" fill="#5c8a6a" stroke="#5c8a6a" fill-opacity="0.8"/><circle cx="1116.3" cy="503.8" r="2.6" fill="#5c8a6a" stroke="#5c8a6a" fill-opacity="0.8"/><circle cx="1139.1" cy="463.8" r="2.6" fill="#5c8a6a" stroke="#5c8a6a" fill-opacity="0.8"/><circle cx="1167.9" cy="462.5" r="2.6" fill="#5c8a6a" stroke="#5c8a6a" fill-opacity="0.8"/><circle cx="1207.3" cy="481.5" r="2.6" fill="#5c8a6a" stroke="#5c8a6a" fill-opacity="0.8"/><circle cx="1249.8" cy="512.6" r="2.6" fill="#5c8a6a" stroke="#5c8a6a" fill-opacity="0.8"/><circle cx="1298.3" cy="496.7" r="2.6" fill="#5c8a6a" stroke="#5c8a6a" fill-opacity="0.8"/><circle cx="1328.6" cy="533.4" r="2.6" fill="#5c8a6a" stroke="#5c8a6a" fill-opacity="0.8"/><circle cx="1352.9" cy="511.2" r="2.6" fill="#5c8a6a" stroke="#5c8a6a" fill-opacity="0.8"/><circle cx="1371.9" cy="409.1" r="2.6" fill="#5c8a6a" stroke="#5c8a6a" fill-opacity="0.8"/><circle cx="1383.2" cy="542.7" r="2.6" fill="#5c8a6a" stroke="#5c8a6a" fill-opacity="0.8"/><circle cx="1395.4" cy="486.7" r="2.6" fill="#5c8a6a" stroke="#5c8a6a" fill-opacity="0.8"/><circle cx="1410.5" cy="490.4" r="2.6" fill="#5c8a6a" stroke="#5c8a6a" fill-opacity="0.8"/><circle cx="1446.9" cy="514.3" r="2.6" fill="#5c8a6a" stroke="#5c8a6a" fill-opacity="0.8"/><circle cx="1480.3" cy="532.1" r="2.6" fill="#5c8a6a" stroke="#5c8a6a" fill-opacity="0.8"/><circle cx="1516.7" cy="477.3" r="2.6" fill="#5c8a6a" stroke="#5c8a6a" fill-opacity="0.8"/><circle cx="1553.1" cy="485.3" r="2.6" fill="#5c8a6a" stroke="#5c8a6a" fill-opacity="0.8"/><circle cx="1560.7" cy="493.3" r="2.6" fill="#5c8a6a" stroke="#5c8a6a" fill-opacity="0.8"/><circle cx="380.7" cy="533.2" r="2.6" fill="#5c8a6a" stroke="#5c8a6a" fill-opacity="0.8"/><circle cx="397.4" cy="509.1" r="2.6" fill="#5c8a6a" stroke="#5c8a6a" fill-opacity="0.8"/><circle cx="421.7" cy="571.8" r="2.6" fill="#5c8a6a" stroke="#5c8a6a" fill-opacity="0.8"/><circle cx="456.5" cy="547.6" r="2.6" fill="#5c8a6a" stroke="#5c8a6a" fill-opacity="0.8"/><circle cx="474.7" cy="542.4" r="2.6" fill="#5c8a6a" stroke="#5c8a6a" fill-opacity="0.8"/><circle cx="497.5" cy="537.9" r="2.6" fill="#5c8a6a" stroke="#5c8a6a" fill-opacity="0.8"/><circle cx="514.9" cy="583.4" r="2.6" fill="#5c8a6a" stroke="#5c8a6a" fill-opacity="0.8"/><circle cx="530.9" cy="585.1" r="2.6" fill="#5c8a6a" stroke="#5c8a6a" fill-opacity="0.8"/><circle cx="556.6" cy="687.1" r="2.6" fill="#5c8a6a" stroke="#5c8a6a" fill-opacity="0.8"/><circle cx="570.3" cy="689.9" r="2.6" fill="#5c8a6a" stroke="#5c8a6a" fill-opacity="0.8"/><circle cx="577.1" cy="651.7" r="2.6" fill="#5c8a6a" stroke="#5c8a6a" fill-opacity="0.8"/><circle cx="617.3" cy="579.1" r="2.6" fill="#5c8a6a" stroke="#5c8a6a" fill-opacity="0.8"/><circle cx="632.5" cy="590.2" r="2.6" fill="#5c8a6a" stroke="#5c8a6a" fill-opacity="0.8"/><circle cx="659.8" cy="493.3" r="2.6" fill="#5c8a6a" stroke="#5c8a6a" fill-opacity="0.8"/><circle cx="380.7" cy="544.2" r="2.6" fill="#5c8a6a" stroke="#5c8a6a" fill-opacity="0.8"/><circle cx="397.4" cy="515.1" r="2.6" fill="#5c8a6a" stroke="#5c8a6a" fill-opacity="0.8"/><circle cx="421.7" cy="576.8" r="2.6" fill="#5c8a6a" stroke="#5c8a6a" fill-opacity="0.8"/><circle cx="456.5" cy="548.5" r="2.6" fill="#5c8a6a" stroke="#5c8a6a" fill-opacity="0.8"/><circle cx="474.7" cy="545.8" r="2.6" fill="#5c8a6a" stroke="#5c8a6a" fill-opacity="0.8"/><circle cx="497.5" cy="542.0" r="2.6" fill="#5c8a6a" stroke="#5c8a6a" fill-opacity="0.8"/><circle cx="514.9" cy="590.6" r="2.6" fill="#5c8a6a" stroke="#5c8a6a" fill-opacity="0.8"/><circle cx="530.9" cy="575.9" r="2.6" fill="#5c8a6a" stroke="#5c8a6a" fill-opacity="0.8"/><circle cx="556.6" cy="493.3" r="2.6" fill="#5c8a6a" stroke="#5c8a6a" fill-opacity="0.8"/><circle cx="380.7" cy="553.1" r="2.6" fill="#44d4a4" stroke="#44d4a4" fill-opacity="0.8"/><circle cx="397.4" cy="521.8" r="2.6" fill="#44d4a4" stroke="#44d4a4" fill-opacity="0.8"/><circle cx="421.7" cy="580.5" r="2.6" fill="#44d4a4" stroke="#44d4a4" fill-opacity="0.8"/><circle cx="456.5" cy="552.0" r="2.6" fill="#44d4a4" stroke="#44d4a4" fill-opacity="0.8"/><circle cx="474.7" cy="549.3" r="2.6" fill="#44d4a4" stroke="#44d4a4" fill-opacity="0.8"/><circle cx="497.5" cy="547.0" r="2.6" fill="#44d4a4" stroke="#44d4a4" fill-opacity="0.8"/><circle cx="514.9" cy="602.5" r="2.6" fill="#44d4a4" stroke="#44d4a4" fill-opacity="0.8"/><circle cx="530.9" cy="605.8" r="2.6" fill="#44d4a4" stroke="#44d4a4" fill-opacity="0.8"/><circle cx="556.6" cy="752.5" r="2.6" fill="#44d4a4" stroke="#44d4a4" fill-opacity="0.8"/><circle cx="570.3" cy="824.2" r="2.6" fill="#44d4a4" stroke="#44d4a4" fill-opacity="0.8"/><circle cx="577.1" cy="898.0" r="2.6" fill="#44d4a4" stroke="#44d4a4" fill-opacity="0.8"/><circle cx="617.3" cy="737.6" r="2.6" fill="#44d4a4" stroke="#44d4a4" fill-opacity="0.8"/><circle cx="632.5" cy="684.5" r="2.6" fill="#44d4a4" stroke="#44d4a4" fill-opacity="0.8"/><circle cx="659.8" cy="760.9" r="2.6" fill="#44d4a4" stroke="#44d4a4" fill-opacity="0.8"/><circle cx="676.5" cy="493.3" r="2.6" fill="#44d4a4" stroke="#44d4a4" fill-opacity="0.8"/><circle cx="380.7" cy="545.1" r="2.6" fill="#2e2e2e" stroke="#2e2e2e" fill-opacity="0.8"/><circle cx="397.4" cy="517.2" r="2.6" fill="#2e2e2e" stroke="#2e2e2e" fill-opacity="0.8"/><circle cx="421.7" cy="579.0" r="2.6" fill="#2e2e2e" stroke="#2e2e2e" fill-opacity="0.8"/><circle cx="456.5" cy="550.9" r="2.6" fill="#2e2e2e" stroke="#2e2e2e" fill-opacity="0.8"/><circle cx="474.7" cy="549.5" r="2.6" fill="#2e2e2e" stroke="#2e2e2e" fill-opacity="0.8"/><circle cx="497.5" cy="546.9" r="2.6" fill="#2e2e2e" stroke="#2e2e2e" fill-opacity="0.8"/><circle cx="514.9" cy="603.6" r="2.6" fill="#2e2e2e" stroke="#2e2e2e" fill-opacity="0.8"/><circle cx="530.9" cy="607.2" r="2.6" fill="#2e2e2e" stroke="#2e2e2e" fill-opacity="0.8"/><circle cx="556.6" cy="581.8" r="2.6" fill="#2e2e2e" stroke="#2e2e2e" fill-opacity="0.8"/><circle cx="570.3" cy="493.3" r="2.6" fill="#2e2e2e" stroke="#2e2e2e" fill-opacity="0.8"/><circle cx="380.7" cy="519.8" r="2.6" fill="#44d4a4" stroke="#44d4a4" fill-opacity="0.8"/><circle cx="397.4" cy="500.9" r="2.6" fill="#44d4a4" stroke="#44d4a4" fill-opacity="0.8"/><circle cx="421.7" cy="559.2" r="2.6" fill="#44d4a4" stroke="#44d4a4" fill-opacity="0.8"/><circle cx="456.5" cy="520.7" r="2.6" fill="#44d4a4" stroke="#44d4a4" fill-opacity="0.8"/><circle cx="474.7" cy="522.2" r="2.6" fill="#44d4a4" stroke="#44d4a4" fill-opacity="0.8"/><circle cx="497.5" cy="519.5" r="2.6" fill="#44d4a4" stroke="#44d4a4" fill-opacity="0.8"/><circle cx="514.9" cy="522.6" r="2.6" fill="#44d4a4" stroke="#44d4a4" fill-opacity="0.8"/><circle cx="530.9" cy="533.2" r="2.6" fill="#44d4a4" stroke="#44d4a4" fill-opacity="0.8"/><circle cx="556.6" cy="618.3" r="2.6" fill="#44d4a4" stroke="#44d4a4" fill-opacity="0.8"/><circle cx="570.3" cy="575.5" r="2.6" fill="#44d4a4" stroke="#44d4a4" fill-opacity="0.8"/><circle cx="577.1" cy="493.3" r="2.6" fill="#44d4a4" stroke="#44d4a4" fill-opacity="0.8"/><circle cx="380.7" cy="536.9" r="2.6" fill="#5c8a6a" stroke="#5c8a6a" fill-opacity="0.8"/><circle cx="397.4" cy="511.1" r="2.6" fill="#5c8a6a" stroke="#5c8a6a" fill-opacity="0.8"/><circle cx="421.7" cy="571.2" r="2.6" fill="#5c8a6a" stroke="#5c8a6a" fill-opacity="0.8"/><circle cx="456.5" cy="546.9" r="2.6" fill="#5c8a6a" stroke="#5c8a6a" fill-opacity="0.8"/><circle cx="474.7" cy="541.3" r="2.6" fill="#5c8a6a" stroke="#5c8a6a" fill-opacity="0.8"/><circle cx="497.5" cy="538.0" r="2.6" fill="#5c8a6a" stroke="#5c8a6a" fill-opacity="0.8"/><circle cx="514.9" cy="581.8" r="2.6" fill="#5c8a6a" stroke="#5c8a6a" fill-opacity="0.8"/><circle cx="530.9" cy="582.5" r="2.6" fill="#5c8a6a" stroke="#5c8a6a" fill-opacity="0.8"/><circle cx="556.6" cy="685.0" r="2.6" fill="#5c8a6a" stroke="#5c8a6a" fill-opacity="0.8"/><circle cx="570.3" cy="711.0" r="2.6" fill="#5c8a6a" stroke="#5c8a6a" fill-opacity="0.8"/><circle cx="577.1" cy="731.4" r="2.6" fill="#5c8a6a" stroke="#5c8a6a" fill-opacity="0.8"/><circle cx="617.3" cy="606.4" r="2.6" fill="#5c8a6a" stroke="#5c8a6a" fill-opacity="0.8"/><circle cx="632.5" cy="614.9" r="2.6" fill="#5c8a6a" stroke="#5c8a6a" fill-opacity="0.8"/><circle cx="659.8" cy="683.2" r="2.6" fill="#5c8a6a" stroke="#5c8a6a" fill-opacity="0.8"/><circle cx="676.5" cy="702.4" r="2.6" fill="#5c8a6a" stroke="#5c8a6a" fill-opacity="0.8"/><circle cx="690.1" cy="634.2" r="2.6" fill="#5c8a6a" stroke="#5c8a6a" fill-opacity="0.8"/><circle cx="703.8" cy="577.3" r="2.6" fill="#5c8a6a" stroke="#5c8a6a" fill-opacity="0.8"/><circle cx="720.4" cy="553.7" r="2.6" fill="#5c8a6a" stroke="#5c8a6a" fill-opacity="0.8"/><circle cx="740.9" cy="563.4" r="2.6" fill="#5c8a6a" stroke="#5c8a6a" fill-opacity="0.8"/><circle cx="758.4" cy="687.4" r="2.6" fill="#5c8a6a" stroke="#5c8a6a" fill-opacity="0.8"/><circle cx="784.1" cy="718.6" r="2.6" fill="#5c8a6a" stroke="#5c8a6a" fill-opacity="0.8"/><circle cx="802.3" cy="611.9" r="2.6" fill="#5c8a6a" stroke="#5c8a6a" fill-opacity="0.8"/><circle cx="832.7" cy="592.1" r="2.6" fill="#5c8a6a" stroke="#5c8a6a" fill-opacity="0.8"/><circle cx="854.7" cy="508.4" r="2.6" fill="#5c8a6a" stroke="#5c8a6a" fill-opacity="0.8"/><circle cx="869.1" cy="493.4" r="2.6" fill="#5c8a6a" stroke="#5c8a6a" fill-opacity="0.8"/><circle cx="875.1" cy="484.7" r="2.6" fill="#5c8a6a" stroke="#5c8a6a" fill-opacity="0.8"/><circle cx="878.9" cy="488.9" r="2.6" fill="#5c8a6a" stroke="#5c8a6a" fill-opacity="0.8"/><circle cx="893.3" cy="416.6" r="2.6" fill="#5c8a6a" stroke="#5c8a6a" fill-opacity="0.8"/><circle cx="920.6" cy="495.1" r="2.6" fill="#5c8a6a" stroke="#5c8a6a" fill-opacity="0.8"/><circle cx="951.0" cy="508.1" r="2.6" fill="#5c8a6a" stroke="#5c8a6a" fill-opacity="0.8"/><circle cx="990.4" cy="510.2" r="2.6" fill="#5c8a6a" stroke="#5c8a6a" fill-opacity="0.8"/><circle cx="1028.3" cy="479.7" r="2.6" fill="#5c8a6a" stroke="#5c8a6a" fill-opacity="0.8"/><circle cx="1051.1" cy="431.8" r="2.6" fill="#5c8a6a" stroke="#5c8a6a" fill-opacity="0.8"/><circle cx="1076.9" cy="524.1" r="2.6" fill="#5c8a6a" stroke="#5c8a6a" fill-opacity="0.8"/><circle cx="1116.3" cy="492.2" r="2.6" fill="#5c8a6a" stroke="#5c8a6a" fill-opacity="0.8"/><circle cx="1139.1" cy="458.7" r="2.6" fill="#5c8a6a" stroke="#5c8a6a" fill-opacity="0.8"/><circle cx="1167.9" cy="457.7" r="2.6" fill="#5c8a6a" stroke="#5c8a6a" fill-opacity="0.8"/><circle cx="1207.3" cy="482.5" r="2.6" fill="#5c8a6a" stroke="#5c8a6a" fill-opacity="0.8"/><circle cx="1249.8" cy="493.3" r="2.6" fill="#5c8a6a" stroke="#5c8a6a" fill-opacity="0.8"/><circle cx="380.7" cy="544.3" r="2.6" fill="#8c2a1a" stroke="#8c2a1a" fill-opacity="0.8"/><circle cx="397.4" cy="515.3" r="2.6" fill="#8c2a1a" stroke="#8c2a1a" fill-opacity="0.8"/><circle cx="421.7" cy="575.4" r="2.6" fill="#8c2a1a" stroke="#8c2a1a" fill-opacity="0.8"/><circle cx="456.5" cy="549.0" r="2.6" fill="#8c2a1a" stroke="#8c2a1a" fill-opacity="0.8"/><circle cx="474.7" cy="546.0" r="2.6" fill="#8c2a1a" stroke="#8c2a1a" fill-opacity="0.8"/><circle cx="497.5" cy="541.9" r="2.6" fill="#8c2a1a" stroke="#8c2a1a" fill-opacity="0.8"/><circle cx="514.9" cy="592.0" r="2.6" fill="#8c2a1a" stroke="#8c2a1a" fill-opacity="0.8"/><circle cx="530.9" cy="596.7" r="2.6" fill="#8c2a1a" stroke="#8c2a1a" fill-opacity="0.8"/><circle cx="556.6" cy="730.9" r="2.6" fill="#8c2a1a" stroke="#8c2a1a" fill-opacity="0.8"/><circle cx="570.3" cy="793.3" r="2.6" fill="#8c2a1a" stroke="#8c2a1a" fill-opacity="0.8"/><circle cx="577.1" cy="833.0" r="2.6" fill="#8c2a1a" stroke="#8c2a1a" fill-opacity="0.8"/><circle cx="617.3" cy="685.4" r="2.6" fill="#8c2a1a" stroke="#8c2a1a" fill-opacity="0.8"/><circle cx="632.5" cy="655.4" r="2.6" fill="#8c2a1a" stroke="#8c2a1a" fill-opacity="0.8"/><circle cx="659.8" cy="728.2" r="2.6" fill="#8c2a1a" stroke="#8c2a1a" fill-opacity="0.8"/><circle cx="676.5" cy="734.3" r="2.6" fill="#8c2a1a" stroke="#8c2a1a" fill-opacity="0.8"/><circle cx="690.1" cy="652.6" r="2.6" fill="#8c2a1a" stroke="#8c2a1a" fill-opacity="0.8"/><circle cx="703.8" cy="596.3" r="2.6" fill="#8c2a1a" stroke="#8c2a1a" fill-opacity="0.8"/><circle cx="720.4" cy="562.9" r="2.6" fill="#8c2a1a" stroke="#8c2a1a" fill-opacity="0.8"/><circle cx="740.9" cy="575.4" r="2.6" fill="#8c2a1a" stroke="#8c2a1a" fill-opacity="0.8"/><circle cx="758.4" cy="711.4" r="2.6" fill="#8c2a1a" stroke="#8c2a1a" fill-opacity="0.8"/><circle cx="784.1" cy="753.9" r="2.6" fill="#8c2a1a" stroke="#8c2a1a" fill-opacity="0.8"/><circle cx="802.3" cy="569.6" r="2.6" fill="#8c2a1a" stroke="#8c2a1a" fill-opacity="0.8"/><circle cx="832.7" cy="493.3" r="2.6" fill="#8c2a1a" stroke="#8c2a1a" fill-opacity="0.8"/><circle cx="380.7" cy="509.6" r="2.6" fill="#4c44dc" stroke="#4c44dc" fill-opacity="0.8"/><circle cx="397.4" cy="493.3" r="2.6" fill="#4c44dc" stroke="#4c44dc" fill-opacity="0.8"/><circle cx="380.7" cy="532.7" r="2.6" fill="#e4884e" stroke="#e4884e" fill-opacity="0.8"/><circle cx="397.4" cy="508.4" r="2.6" fill="#e4884e" stroke="#e4884e" fill-opacity="0.8"/><circle cx="421.7" cy="570.2" r="2.6" fill="#e4884e" stroke="#e4884e" fill-opacity="0.8"/><circle cx="456.5" cy="546.2" r="2.6" fill="#e4884e" stroke="#e4884e" fill-opacity="0.8"/><circle cx="474.7" cy="541.1" r="2.6" fill="#e4884e" stroke="#e4884e" fill-opacity="0.8"/><circle cx="497.5" cy="536.5" r="2.6" fill="#e4884e" stroke="#e4884e" fill-opacity="0.8"/><circle cx="514.9" cy="581.0" r="2.6" fill="#e4884e" stroke="#e4884e" fill-opacity="0.8"/><circle cx="530.9" cy="583.1" r="2.6" fill="#e4884e" stroke="#e4884e" fill-opacity="0.8"/><circle cx="556.6" cy="670.9" r="2.6" fill="#e4884e" stroke="#e4884e" fill-opacity="0.8"/><circle cx="570.3" cy="688.5" r="2.6" fill="#e4884e" stroke="#e4884e" fill-opacity="0.8"/><circle cx="577.1" cy="684.8" r="2.6" fill="#e4884e" stroke="#e4884e" fill-opacity="0.8"/><circle cx="617.3" cy="583.9" r="2.6" fill="#e4884e" stroke="#e4884e" fill-opacity="0.8"/><circle cx="632.5" cy="607.1" r="2.6" fill="#e4884e" stroke="#e4884e" fill-opacity="0.8"/><circle cx="659.8" cy="654.5" r="2.6" fill="#e4884e" stroke="#e4884e" fill-opacity="0.8"/><circle cx="676.5" cy="677.0" r="2.6" fill="#e4884e" stroke="#e4884e" fill-opacity="0.8"/><circle cx="690.1" cy="628.9" r="2.6" fill="#e4884e" stroke="#e4884e" fill-opacity="0.8"/><circle cx="703.8" cy="574.7" r="2.6" fill="#e4884e" stroke="#e4884e" fill-opacity="0.8"/><circle cx="720.4" cy="551.2" r="2.6" fill="#e4884e" stroke="#e4884e" fill-opacity="0.8"/><circle cx="740.9" cy="559.8" r="2.6" fill="#e4884e" stroke="#e4884e" fill-opacity="0.8"/><circle cx="758.4" cy="679.3" r="2.6" fill="#e4884e" stroke="#e4884e" fill-opacity="0.8"/><circle cx="784.1" cy="696.7" r="2.6" fill="#e4884e" stroke="#e4884e" fill-opacity="0.8"/><circle cx="802.3" cy="612.2" r="2.6" fill="#e4884e" stroke="#e4884e" fill-opacity="0.8"/><circle cx="832.7" cy="493.3" r="2.6" fill="#e4884e" stroke="#e4884e" fill-opacity="0.8"/><circle cx="380.7" cy="553.6" r="2.6" fill="#7078c4" stroke="#7078c4" fill-opacity="0.8"/><circle cx="397.4" cy="520.5" r="2.6" fill="#7078c4" stroke="#7078c4" fill-opacity="0.8"/><circle cx="421.7" cy="493.3" r="2.6" fill="#7078c4" stroke="#7078c4" fill-opacity="0.8"/><circle cx="380.7" cy="536.6" r="2.6" fill="#2e2e2e" stroke="#2e2e2e" fill-opacity="0.8"/><circle cx="397.4" cy="510.1" r="2.6" fill="#2e2e2e" stroke="#2e2e2e" fill-opacity="0.8"/><circle cx="421.7" cy="570.8" r="2.6" fill="#2e2e2e" stroke="#2e2e2e" fill-opacity="0.8"/><circle cx="456.5" cy="546.2" r="2.6" fill="#2e2e2e" stroke="#2e2e2e" fill-opacity="0.8"/><circle cx="474.7" cy="540.5" r="2.6" fill="#2e2e2e" stroke="#2e2e2e" fill-opacity="0.8"/><circle cx="497.5" cy="533.8" r="2.6" fill="#2e2e2e" stroke="#2e2e2e" fill-opacity="0.8"/><circle cx="514.9" cy="573.7" r="2.6" fill="#2e2e2e" stroke="#2e2e2e" fill-opacity="0.8"/><circle cx="530.9" cy="572.6" r="2.6" fill="#2e2e2e" stroke="#2e2e2e" fill-opacity="0.8"/><circle cx="556.6" cy="642.0" r="2.6" fill="#2e2e2e" stroke="#2e2e2e" fill-opacity="0.8"/><circle cx="570.3" cy="657.3" r="2.6" fill="#2e2e2e" stroke="#2e2e2e" fill-opacity="0.8"/><circle cx="577.1" cy="638.7" r="2.6" fill="#2e2e2e" stroke="#2e2e2e" fill-opacity="0.8"/><circle cx="617.3" cy="571.6" r="2.6" fill="#2e2e2e" stroke="#2e2e2e" fill-opacity="0.8"/><circle cx="632.5" cy="600.0" r="2.6" fill="#2e2e2e" stroke="#2e2e2e" fill-opacity="0.8"/><circle cx="659.8" cy="651.8" r="2.6" fill="#2e2e2e" stroke="#2e2e2e" fill-opacity="0.8"/><circle cx="676.5" cy="677.7" r="2.6" fill="#2e2e2e" stroke="#2e2e2e" fill-opacity="0.8"/><circle cx="690.1" cy="625.8" r="2.6" fill="#2e2e2e" stroke="#2e2e2e" fill-opacity="0.8"/><circle cx="703.8" cy="578.7" r="2.6" fill="#2e2e2e" stroke="#2e2e2e" fill-opacity="0.8"/><circle cx="720.4" cy="553.1" r="2.6" fill="#2e2e2e" stroke="#2e2e2e" fill-opacity="0.8"/><circle cx="740.9" cy="565.9" r="2.6" fill="#2e2e2e" stroke="#2e2e2e" fill-opacity="0.8"/><circle cx="758.4" cy="493.3" r="2.6" fill="#2e2e2e" stroke="#2e2e2e" fill-opacity="0.8"/><circle cx="380.7" cy="524.4" r="2.6" fill="#44d4a4" stroke="#44d4a4" fill-opacity="0.8"/><circle cx="397.4" cy="502.3" r="2.6" fill="#44d4a4" stroke="#44d4a4" fill-opacity="0.8"/><circle cx="421.7" cy="566.3" r="2.6" fill="#44d4a4" stroke="#44d4a4" fill-opacity="0.8"/><circle cx="456.5" cy="535.9" r="2.6" fill="#44d4a4" stroke="#44d4a4" fill-opacity="0.8"/><circle cx="474.7" cy="537.7" r="2.6" fill="#44d4a4" stroke="#44d4a4" fill-opacity="0.8"/><circle cx="497.5" cy="530.3" r="2.6" fill="#44d4a4" stroke="#44d4a4" fill-opacity="0.8"/><circle cx="514.9" cy="531.1" r="2.6" fill="#44d4a4" stroke="#44d4a4" fill-opacity="0.8"/><circle cx="530.9" cy="558.7" r="2.6" fill="#44d4a4" stroke="#44d4a4" fill-opacity="0.8"/><circle cx="556.6" cy="619.7" r="2.6" fill="#44d4a4" stroke="#44d4a4" fill-opacity="0.8"/><circle cx="570.3" cy="561.5" r="2.6" fill="#44d4a4" stroke="#44d4a4" fill-opacity="0.8"/><circle cx="577.1" cy="564.5" r="2.6" fill="#44d4a4" stroke="#44d4a4" fill-opacity="0.8"/><circle cx="617.3" cy="523.8" r="2.6" fill="#44d4a4" stroke="#44d4a4" fill-opacity="0.8"/><circle cx="632.5" cy="573.2" r="2.6" fill="#44d4a4" stroke="#44d4a4" fill-opacity="0.8"/><circle cx="659.8" cy="585.8" r="2.6" fill="#44d4a4" stroke="#44d4a4" fill-opacity="0.8"/><circle cx="676.5" cy="594.6" r="2.6" fill="#44d4a4" stroke="#44d4a4" fill-opacity="0.8"/><circle cx="690.1" cy="583.9" r="2.6" fill="#44d4a4" stroke="#44d4a4" fill-opacity="0.8"/><circle cx="703.8" cy="554.7" r="2.6" fill="#44d4a4" stroke="#44d4a4" fill-opacity="0.8"/><circle cx="720.4" cy="541.6" r="2.6" fill="#44d4a4" stroke="#44d4a4" fill-opacity="0.8"/><circle cx="740.9" cy="548.8" r="2.6" fill="#44d4a4" stroke="#44d4a4" fill-opacity="0.8"/><circle cx="758.4" cy="652.2" r="2.6" fill="#44d4a4" stroke="#44d4a4" fill-opacity="0.8"/><circle cx="784.1" cy="667.1" r="2.6" fill="#44d4a4" stroke="#44d4a4" fill-opacity="0.8"/><circle cx="802.3" cy="582.4" r="2.6" fill="#44d4a4" stroke="#44d4a4" fill-opacity="0.8"/><circle cx="832.7" cy="565.1" r="2.6" fill="#44d4a4" stroke="#44d4a4" fill-opacity="0.8"/><circle cx="854.7" cy="502.2" r="2.6" fill="#44d4a4" stroke="#44d4a4" fill-opacity="0.8"/><circle cx="869.1" cy="482.8" r="2.6" fill="#44d4a4" stroke="#44d4a4" fill-opacity="0.8"/><circle cx="875.1" cy="474.3" r="2.6" fill="#44d4a4" stroke="#44d4a4" fill-opacity="0.8"/><circle cx="878.9" cy="479.5" r="2.6" fill="#44d4a4" stroke="#44d4a4" fill-opacity="0.8"/><circle cx="893.3" cy="403.5" r="2.6" fill="#44d4a4" stroke="#44d4a4" fill-opacity="0.8"/><circle cx="920.6" cy="477.1" r="2.6" fill="#44d4a4" stroke="#44d4a4" fill-opacity="0.8"/><circle cx="951.0" cy="495.2" r="2.6" fill="#44d4a4" stroke="#44d4a4" fill-opacity="0.8"/><circle cx="990.4" cy="500.9" r="2.6" fill="#44d4a4" stroke="#44d4a4" fill-opacity="0.8"/><circle cx="1028.3" cy="471.3" r="2.6" fill="#44d4a4" stroke="#44d4a4" fill-opacity="0.8"/><circle cx="1051.1" cy="423.0" r="2.6" fill="#44d4a4" stroke="#44d4a4" fill-opacity="0.8"/><circle cx="1076.9" cy="506.7" r="2.6" fill="#44d4a4" stroke="#44d4a4" fill-opacity="0.8"/><circle cx="1116.3" cy="479.4" r="2.6" fill="#44d4a4" stroke="#44d4a4" fill-opacity="0.8"/><circle cx="1139.1" cy="453.5" r="2.6" fill="#44d4a4" stroke="#44d4a4" fill-opacity="0.8"/><circle cx="1167.9" cy="444.3" r="2.6" fill="#44d4a4" stroke="#44d4a4" fill-opacity="0.8"/><circle cx="1207.3" cy="471.0" r="2.6" fill="#44d4a4" stroke="#44d4a4" fill-opacity="0.8"/><circle cx="1249.8" cy="497.3" r="2.6" fill="#44d4a4" stroke="#44d4a4" fill-opacity="0.8"/><circle cx="1298.3" cy="472.9" r="2.6" fill="#44d4a4" stroke="#44d4a4" fill-opacity="0.8"/><circle cx="1328.6" cy="525.3" r="2.6" fill="#44d4a4" stroke="#44d4a4" fill-opacity="0.8"/><circle cx="1352.9" cy="499.2" r="2.6" fill="#44d4a4" stroke="#44d4a4" fill-opacity="0.8"/><circle cx="1371.9" cy="402.0" r="2.6" fill="#44d4a4" stroke="#44d4a4" fill-opacity="0.8"/><circle cx="1383.2" cy="534.7" r="2.6" fill="#44d4a4" stroke="#44d4a4" fill-opacity="0.8"/><circle cx="1395.4" cy="479.5" r="2.6" fill="#44d4a4" stroke="#44d4a4" fill-opacity="0.8"/><circle cx="1410.5" cy="482.5" r="2.6" fill="#44d4a4" stroke="#44d4a4" fill-opacity="0.8"/><circle cx="1446.9" cy="487.3" r="2.6" fill="#44d4a4" stroke="#44d4a4" fill-opacity="0.8"/><circle cx="1480.3" cy="505.5" r="2.6" fill="#44d4a4" stroke="#44d4a4" fill-opacity="0.8"/><circle cx="1516.7" cy="462.5" r="2.6" fill="#44d4a4" stroke="#44d4a4" fill-opacity="0.8"/><circle cx="1553.1" cy="454.5" r="2.6" fill="#44d4a4" stroke="#44d4a4" fill-opacity="0.8"/><circle cx="1560.7" cy="468.1" r="2.6" fill="#44d4a4" stroke="#44d4a4" fill-opacity="0.8"/><circle cx="1604.7" cy="493.3" r="2.6" fill="#44d4a4" stroke="#44d4a4" fill-opacity="0.8"/><circle cx="380.7" cy="546.7" r="2.6" fill="#7078c4" stroke="#7078c4" fill-opacity="0.8"/><circle cx="397.4" cy="518.9" r="2.6" fill="#7078c4" stroke="#7078c4" fill-opacity="0.8"/><circle cx="421.7" cy="581.1" r="2.6" fill="#7078c4" stroke="#7078c4" fill-opacity="0.8"/><circle cx="456.5" cy="551.2" r="2.6" fill="#7078c4" stroke="#7078c4" fill-opacity="0.8"/><circle cx="474.7" cy="550.4" r="2.6" fill="#7078c4" stroke="#7078c4" fill-opacity="0.8"/><circle cx="497.5" cy="550.1" r="2.6" fill="#7078c4" stroke="#7078c4" fill-opacity="0.8"/><circle cx="514.9" cy="609.2" r="2.6" fill="#7078c4" stroke="#7078c4" fill-opacity="0.8"/><circle cx="530.9" cy="613.8" r="2.6" fill="#7078c4" stroke="#7078c4" fill-opacity="0.8"/><circle cx="556.6" cy="763.2" r="2.6" fill="#7078c4" stroke="#7078c4" fill-opacity="0.8"/><circle cx="570.3" cy="826.4" r="2.6" fill="#7078c4" stroke="#7078c4" fill-opacity="0.8"/><circle cx="577.1" cy="874.8" r="2.6" fill="#7078c4" stroke="#7078c4" fill-opacity="0.8"/><circle cx="617.3" cy="735.5" r="2.6" fill="#7078c4" stroke="#7078c4" fill-opacity="0.8"/><circle cx="632.5" cy="676.2" r="2.6" fill="#7078c4" stroke="#7078c4" fill-opacity="0.8"/><circle cx="659.8" cy="733.5" r="2.6" fill="#7078c4" stroke="#7078c4" fill-opacity="0.8"/><circle cx="676.5" cy="743.8" r="2.6" fill="#7078c4" stroke="#7078c4" fill-opacity="0.8"/><circle cx="690.1" cy="659.1" r="2.6" fill="#7078c4" stroke="#7078c4" fill-opacity="0.8"/><circle cx="703.8" cy="601.0" r="2.6" fill="#7078c4" stroke="#7078c4" fill-opacity="0.8"/><circle cx="720.4" cy="567.0" r="2.6" fill="#7078c4" stroke="#7078c4" fill-opacity="0.8"/><circle cx="740.9" cy="580.4" r="2.6" fill="#7078c4" stroke="#7078c4" fill-opacity="0.8"/><circle cx="758.4" cy="729.5" r="2.6" fill="#7078c4" stroke="#7078c4" fill-opacity="0.8"/><circle cx="784.1" cy="789.5" r="2.6" fill="#7078c4" stroke="#7078c4" fill-opacity="0.8"/><circle cx="802.3" cy="635.0" r="2.6" fill="#7078c4" stroke="#7078c4" fill-opacity="0.8"/><circle cx="832.7" cy="605.4" r="2.6" fill="#7078c4" stroke="#7078c4" fill-opacity="0.8"/><circle cx="854.7" cy="518.3" r="2.6" fill="#7078c4" stroke="#7078c4" fill-opacity="0.8"/><circle cx="869.1" cy="509.4" r="2.6" fill="#7078c4" stroke="#7078c4" fill-opacity="0.8"/><circle cx="875.1" cy="502.7" r="2.6" fill="#7078c4" stroke="#7078c4" fill-opacity="0.8"/><circle cx="878.9" cy="500.2" r="2.6" fill="#7078c4" stroke="#7078c4" fill-opacity="0.8"/><circle cx="893.3" cy="431.3" r="2.6" fill="#7078c4" stroke="#7078c4" fill-opacity="0.8"/><circle cx="920.6" cy="508.6" r="2.6" fill="#7078c4" stroke="#7078c4" fill-opacity="0.8"/><circle cx="951.0" cy="520.2" r="2.6" fill="#7078c4" stroke="#7078c4" fill-opacity="0.8"/><circle cx="990.4" cy="517.8" r="2.6" fill="#7078c4" stroke="#7078c4" fill-opacity="0.8"/><circle cx="1028.3" cy="487.5" r="2.6" fill="#7078c4" stroke="#7078c4" fill-opacity="0.8"/><circle cx="1051.1" cy="437.6" r="2.6" fill="#7078c4" stroke="#7078c4" fill-opacity="0.8"/><circle cx="1076.9" cy="534.1" r="2.6" fill="#7078c4" stroke="#7078c4" fill-opacity="0.8"/><circle cx="1116.3" cy="504.1" r="2.6" fill="#7078c4" stroke="#7078c4" fill-opacity="0.8"/><circle cx="1139.1" cy="476.1" r="2.6" fill="#7078c4" stroke="#7078c4" fill-opacity="0.8"/><circle cx="1167.9" cy="493.3" r="2.6" fill="#7078c4" stroke="#7078c4" fill-opacity="0.8"/><circle cx="380.7" cy="540.4" r="2.6" fill="#5c8a6a" stroke="#5c8a6a" fill-opacity="0.8"/><circle cx="397.4" cy="513.9" r="2.6" fill="#5c8a6a" stroke="#5c8a6a" fill-opacity="0.8"/><circle cx="421.7" cy="573.9" r="2.6" fill="#5c8a6a" stroke="#5c8a6a" fill-opacity="0.8"/><circle cx="456.5" cy="547.8" r="2.6" fill="#5c8a6a" stroke="#5c8a6a" fill-opacity="0.8"/><circle cx="474.7" cy="542.9" r="2.6" fill="#5c8a6a" stroke="#5c8a6a" fill-opacity="0.8"/><circle cx="497.5" cy="539.9" r="2.6" fill="#5c8a6a" stroke="#5c8a6a" fill-opacity="0.8"/><circle cx="514.9" cy="586.9" r="2.6" fill="#5c8a6a" stroke="#5c8a6a" fill-opacity="0.8"/><circle cx="530.9" cy="585.0" r="2.6" fill="#5c8a6a" stroke="#5c8a6a" fill-opacity="0.8"/><circle cx="556.6" cy="709.6" r="2.6" fill="#5c8a6a" stroke="#5c8a6a" fill-opacity="0.8"/><circle cx="570.3" cy="745.1" r="2.6" fill="#5c8a6a" stroke="#5c8a6a" fill-opacity="0.8"/><circle cx="577.1" cy="762.8" r="2.6" fill="#5c8a6a" stroke="#5c8a6a" fill-opacity="0.8"/><circle cx="617.3" cy="633.4" r="2.6" fill="#5c8a6a" stroke="#5c8a6a" fill-opacity="0.8"/><circle cx="632.5" cy="627.2" r="2.6" fill="#5c8a6a" stroke="#5c8a6a" fill-opacity="0.8"/><circle cx="659.8" cy="690.6" r="2.6" fill="#5c8a6a" stroke="#5c8a6a" fill-opacity="0.8"/><circle cx="676.5" cy="704.7" r="2.6" fill="#5c8a6a" stroke="#5c8a6a" fill-opacity="0.8"/><circle cx="690.1" cy="644.0" r="2.6" fill="#5c8a6a" stroke="#5c8a6a" fill-opacity="0.8"/><circle cx="703.8" cy="585.2" r="2.6" fill="#5c8a6a" stroke="#5c8a6a" fill-opacity="0.8"/><circle cx="720.4" cy="560.7" r="2.6" fill="#5c8a6a" stroke="#5c8a6a" fill-opacity="0.8"/><circle cx="740.9" cy="567.7" r="2.6" fill="#5c8a6a" stroke="#5c8a6a" fill-opacity="0.8"/><circle cx="758.4" cy="699.6" r="2.6" fill="#5c8a6a" stroke="#5c8a6a" fill-opacity="0.8"/><circle cx="784.1" cy="746.5" r="2.6" fill="#5c8a6a" stroke="#5c8a6a" fill-opacity="0.8"/><circle cx="802.3" cy="618.7" r="2.6" fill="#5c8a6a" stroke="#5c8a6a" fill-opacity="0.8"/><circle cx="832.7" cy="594.0" r="2.6" fill="#5c8a6a" stroke="#5c8a6a" fill-opacity="0.8"/><circle cx="854.7" cy="510.4" r="2.6" fill="#5c8a6a" stroke="#5c8a6a" fill-opacity="0.8"/><circle cx="869.1" cy="496.2" r="2.6" fill="#5c8a6a" stroke="#5c8a6a" fill-opacity="0.8"/><circle cx="875.1" cy="489.9" r="2.6" fill="#5c8a6a" stroke="#5c8a6a" fill-opacity="0.8"/><circle cx="878.9" cy="493.0" r="2.6" fill="#5c8a6a" stroke="#5c8a6a" fill-opacity="0.8"/><circle cx="893.3" cy="417.7" r="2.6" fill="#5c8a6a" stroke="#5c8a6a" fill-opacity="0.8"/><circle cx="920.6" cy="495.1" r="2.6" fill="#5c8a6a" stroke="#5c8a6a" fill-opacity="0.8"/><circle cx="951.0" cy="507.8" r="2.6" fill="#5c8a6a" stroke="#5c8a6a" fill-opacity="0.8"/><circle cx="990.4" cy="510.7" r="2.6" fill="#5c8a6a" stroke="#5c8a6a" fill-opacity="0.8"/><circle cx="1028.3" cy="480.0" r="2.6" fill="#5c8a6a" stroke="#5c8a6a" fill-opacity="0.8"/><circle cx="1051.1" cy="432.1" r="2.6" fill="#5c8a6a" stroke="#5c8a6a" fill-opacity="0.8"/><circle cx="1076.9" cy="493.3" r="2.6" fill="#5c8a6a" stroke="#5c8a6a" fill-opacity="0.8"/><circle cx="380.7" cy="518.4" r="2.6" fill="#4c44dc" stroke="#4c44dc" fill-opacity="0.8"/><circle cx="397.4" cy="498.6" r="2.6" fill="#4c44dc" stroke="#4c44dc" fill-opacity="0.8"/><circle cx="421.7" cy="539.1" r="2.6" fill="#4c44dc" stroke="#4c44dc" fill-opacity="0.8"/><circle cx="456.5" cy="518.4" r="2.6" fill="#4c44dc" stroke="#4c44dc" fill-opacity="0.8"/><circle cx="474.7" cy="504.0" r="2.6" fill="#4c44dc" stroke="#4c44dc" fill-opacity="0.8"/><circle cx="497.5" cy="522.1" r="2.6" fill="#4c44dc" stroke="#4c44dc" fill-opacity="0.8"/><circle cx="514.9" cy="565.4" r="2.6" fill="#4c44dc" stroke="#4c44dc" fill-opacity="0.8"/><circle cx="530.9" cy="558.2" r="2.6" fill="#4c44dc" stroke="#4c44dc" fill-opacity="0.8"/><circle cx="556.6" cy="637.1" r="2.6" fill="#4c44dc" stroke="#4c44dc" fill-opacity="0.8"/><circle cx="570.3" cy="632.9" r="2.6" fill="#4c44dc" stroke="#4c44dc" fill-opacity="0.8"/><circle cx="577.1" cy="586.5" r="2.6" fill="#4c44dc" stroke="#4c44dc" fill-opacity="0.8"/><circle cx="617.3" cy="557.4" r="2.6" fill="#4c44dc" stroke="#4c44dc" fill-opacity="0.8"/><circle cx="632.5" cy="578.0" r="2.6" fill="#4c44dc" stroke="#4c44dc" fill-opacity="0.8"/><circle cx="659.8" cy="569.5" r="2.6" fill="#4c44dc" stroke="#4c44dc" fill-opacity="0.8"/><circle cx="676.5" cy="594.6" r="2.6" fill="#4c44dc" stroke="#4c44dc" fill-opacity="0.8"/><circle cx="690.1" cy="583.9" r="2.6" fill="#4c44dc" stroke="#4c44dc" fill-opacity="0.8"/><circle cx="703.8" cy="541.3" r="2.6" fill="#4c44dc" stroke="#4c44dc" fill-opacity="0.8"/><circle cx="720.4" cy="541.3" r="2.6" fill="#4c44dc" stroke="#4c44dc" fill-opacity="0.8"/><circle cx="740.9" cy="546.6" r="2.6" fill="#4c44dc" stroke="#4c44dc" fill-opacity="0.8"/><circle cx="758.4" cy="626.5" r="2.6" fill="#4c44dc" stroke="#4c44dc" fill-opacity="0.8"/><circle cx="784.1" cy="653.2" r="2.6" fill="#4c44dc" stroke="#4c44dc" fill-opacity="0.8"/><circle cx="802.3" cy="546.6" r="2.6" fill="#4c44dc" stroke="#4c44dc" fill-opacity="0.8"/><circle cx="832.7" cy="562.6" r="2.6" fill="#4c44dc" stroke="#4c44dc" fill-opacity="0.8"/><circle cx="854.7" cy="501.2" r="2.6" fill="#4c44dc" stroke="#4c44dc" fill-opacity="0.8"/><circle cx="869.1" cy="483.2" r="2.6" fill="#4c44dc" stroke="#4c44dc" fill-opacity="0.8"/><circle cx="875.1" cy="476.3" r="2.6" fill="#4c44dc" stroke="#4c44dc" fill-opacity="0.8"/><circle cx="878.9" cy="478.9" r="2.6" fill="#4c44dc" stroke="#4c44dc" fill-opacity="0.8"/><circle cx="893.3" cy="403.2" r="2.6" fill="#4c44dc" stroke="#4c44dc" fill-opacity="0.8"/><circle cx="920.6" cy="476.8" r="2.6" fill="#4c44dc" stroke="#4c44dc" fill-opacity="0.8"/><circle cx="951.0" cy="494.3" r="2.6" fill="#4c44dc" stroke="#4c44dc" fill-opacity="0.8"/><circle cx="990.4" cy="498.6" r="2.6" fill="#4c44dc" stroke="#4c44dc" fill-opacity="0.8"/><circle cx="1028.3" cy="471.2" r="2.6" fill="#4c44dc" stroke="#4c44dc" fill-opacity="0.8"/><circle cx="1051.1" cy="421.8" r="2.6" fill="#4c44dc" stroke="#4c44dc" fill-opacity="0.8"/><circle cx="1076.9" cy="496.5" r="2.6" fill="#4c44dc" stroke="#4c44dc" fill-opacity="0.8"/><circle cx="1116.3" cy="478.9" r="2.6" fill="#4c44dc" stroke="#4c44dc" fill-opacity="0.8"/><circle cx="1139.1" cy="452.3" r="2.6" fill="#4c44dc" stroke="#4c44dc" fill-opacity="0.8"/><circle cx="1167.9" cy="442.7" r="2.6" fill="#4c44dc" stroke="#4c44dc" fill-opacity="0.8"/><circle cx="1207.3" cy="468.3" r="2.6" fill="#4c44dc" stroke="#4c44dc" fill-opacity="0.8"/><circle cx="1249.8" cy="494.9" r="2.6" fill="#4c44dc" stroke="#4c44dc" fill-opacity="0.8"/><circle cx="1298.3" cy="469.3" r="2.6" fill="#4c44dc" stroke="#4c44dc" fill-opacity="0.8"/><circle cx="1328.6" cy="525.3" r="2.6" fill="#4c44dc" stroke="#4c44dc" fill-opacity="0.8"/><circle cx="1352.9" cy="496.3" r="2.6" fill="#4c44dc" stroke="#4c44dc" fill-opacity="0.8"/><circle cx="1371.9" cy="401.8" r="2.6" fill="#4c44dc" stroke="#4c44dc" fill-opacity="0.8"/><circle cx="1383.2" cy="534.6" r="2.6" fill="#4c44dc" stroke="#4c44dc" fill-opacity="0.8"/><circle cx="1395.4" cy="479.0" r="2.6" fill="#4c44dc" stroke="#4c44dc" fill-opacity="0.8"/><circle cx="1410.5" cy="481.6" r="2.6" fill="#4c44dc" stroke="#4c44dc" fill-opacity="0.8"/><circle cx="1446.9" cy="481.6" r="2.6" fill="#4c44dc" stroke="#4c44dc" fill-opacity="0.8"/><circle cx="1480.3" cy="501.4" r="2.6" fill="#4c44dc" stroke="#4c44dc" fill-opacity="0.8"/><circle cx="1516.7" cy="461.6" r="2.6" fill="#4c44dc" stroke="#4c44dc" fill-opacity="0.8"/><circle cx="1553.1" cy="449.2" r="2.6" fill="#4c44dc" stroke="#4c44dc" fill-opacity="0.8"/><circle cx="1560.7" cy="416.5" r="2.6" fill="#4c44dc" stroke="#4c44dc" fill-opacity="0.8"/><circle cx="1604.7" cy="477.7" r="2.6" fill="#4c44dc" stroke="#4c44dc" fill-opacity="0.8"/><circle cx="1635.0" cy="493.3" r="2.6" fill="#4c44dc" stroke="#4c44dc" fill-opacity="0.8"/><circle cx="380.7" cy="555.5" r="2.6" fill="#44d4a4" stroke="#44d4a4" fill-opacity="0.8"/><circle cx="397.4" cy="522.5" r="2.6" fill="#44d4a4" stroke="#44d4a4" fill-opacity="0.8"/><circle cx="421.7" cy="582.9" r="2.6" fill="#44d4a4" stroke="#44d4a4" fill-opacity="0.8"/><circle cx="456.5" cy="553.5" r="2.6" fill="#44d4a4" stroke="#44d4a4" fill-opacity="0.8"/><circle cx="474.7" cy="551.9" r="2.6" fill="#44d4a4" stroke="#44d4a4" fill-opacity="0.8"/><circle cx="497.5" cy="557.3" r="2.6" fill="#44d4a4" stroke="#44d4a4" fill-opacity="0.8"/><circle cx="514.9" cy="610.6" r="2.6" fill="#44d4a4" stroke="#44d4a4" fill-opacity="0.8"/><circle cx="530.9" cy="613.8" r="2.6" fill="#44d4a4" stroke="#44d4a4" fill-opacity="0.8"/><circle cx="556.6" cy="765.1" r="2.6" fill="#44d4a4" stroke="#44d4a4" fill-opacity="0.8"/><circle cx="570.3" cy="839.8" r="2.6" fill="#44d4a4" stroke="#44d4a4" fill-opacity="0.8"/><circle cx="577.1" cy="903.7" r="2.6" fill="#44d4a4" stroke="#44d4a4" fill-opacity="0.8"/><circle cx="617.3" cy="744.9" r="2.6" fill="#44d4a4" stroke="#44d4a4" fill-opacity="0.8"/><circle cx="632.5" cy="686.2" r="2.6" fill="#44d4a4" stroke="#44d4a4" fill-opacity="0.8"/><circle cx="659.8" cy="756.0" r="2.6" fill="#44d4a4" stroke="#44d4a4" fill-opacity="0.8"/><circle cx="676.5" cy="761.8" r="2.6" fill="#44d4a4" stroke="#44d4a4" fill-opacity="0.8"/><circle cx="690.1" cy="675.1" r="2.6" fill="#44d4a4" stroke="#44d4a4" fill-opacity="0.8"/><circle cx="703.8" cy="611.2" r="2.6" fill="#44d4a4" stroke="#44d4a4" fill-opacity="0.8"/><circle cx="720.4" cy="573.9" r="2.6" fill="#44d4a4" stroke="#44d4a4" fill-opacity="0.8"/><circle cx="740.9" cy="590.6" r="2.6" fill="#44d4a4" stroke="#44d4a4" fill-opacity="0.8"/><circle cx="758.4" cy="715.8" r="2.6" fill="#44d4a4" stroke="#44d4a4" fill-opacity="0.8"/><circle cx="784.1" cy="493.3" r="2.6" fill="#44d4a4" stroke="#44d4a4" fill-opacity="0.8"/><circle cx="380.7" cy="529.1" r="2.6" fill="#2e2e2e" stroke="#2e2e2e" fill-opacity="0.8"/><circle cx="397.4" cy="507.3" r="2.6" fill="#2e2e2e" stroke="#2e2e2e" fill-opacity="0.8"/><circle cx="421.7" cy="566.0" r="2.6" fill="#2e2e2e" stroke="#2e2e2e" fill-opacity="0.8"/><circle cx="456.5" cy="545.1" r="2.6" fill="#2e2e2e" stroke="#2e2e2e" fill-opacity="0.8"/><circle cx="474.7" cy="493.3" r="2.6" fill="#2e2e2e" stroke="#2e2e2e" fill-opacity="0.8"/><circle cx="380.7" cy="533.0" r="2.6" fill="#4c44dc" stroke="#4c44dc" fill-opacity="0.8"/><circle cx="397.4" cy="509.3" r="2.6" fill="#4c44dc" stroke="#4c44dc" fill-opacity="0.8"/><circle cx="421.7" cy="569.1" r="2.6" fill="#4c44dc" stroke="#4c44dc" fill-opacity="0.8"/><circle cx="456.5" cy="545.7" r="2.6" fill="#4c44dc" stroke="#4c44dc" fill-opacity="0.8"/><circle cx="474.7" cy="540.0" r="2.6" fill="#4c44dc" stroke="#4c44dc" fill-opacity="0.8"/><circle cx="497.5" cy="533.9" r="2.6" fill="#4c44dc" stroke="#4c44dc" fill-opacity="0.8"/><circle cx="514.9" cy="575.3" r="2.6" fill="#4c44dc" stroke="#4c44dc" fill-opacity="0.8"/><circle cx="530.9" cy="571.2" r="2.6" fill="#4c44dc" stroke="#4c44dc" fill-opacity="0.8"/><circle cx="556.6" cy="648.7" r="2.6" fill="#4c44dc" stroke="#4c44dc" fill-opacity="0.8"/><circle cx="570.3" cy="638.7" r="2.6" fill="#4c44dc" stroke="#4c44dc" fill-opacity="0.8"/><circle cx="577.1" cy="662.8" r="2.6" fill="#4c44dc" stroke="#4c44dc" fill-opacity="0.8"/><circle cx="617.3" cy="571.2" r="2.6" fill="#4c44dc" stroke="#4c44dc" fill-opacity="0.8"/><circle cx="632.5" cy="603.8" r="2.6" fill="#4c44dc" stroke="#4c44dc" fill-opacity="0.8"/><circle cx="659.8" cy="657.0" r="2.6" fill="#4c44dc" stroke="#4c44dc" fill-opacity="0.8"/><circle cx="676.5" cy="677.6" r="2.6" fill="#4c44dc" stroke="#4c44dc" fill-opacity="0.8"/><circle cx="690.1" cy="631.7" r="2.6" fill="#4c44dc" stroke="#4c44dc" fill-opacity="0.8"/><circle cx="703.8" cy="577.2" r="2.6" fill="#4c44dc" stroke="#4c44dc" fill-opacity="0.8"/><circle cx="720.4" cy="550.6" r="2.6" fill="#4c44dc" stroke="#4c44dc" fill-opacity="0.8"/><circle cx="740.9" cy="562.7" r="2.6" fill="#4c44dc" stroke="#4c44dc" fill-opacity="0.8"/><circle cx="758.4" cy="683.7" r="2.6" fill="#4c44dc" stroke="#4c44dc" fill-opacity="0.8"/><circle cx="784.1" cy="693.5" r="2.6" fill="#4c44dc" stroke="#4c44dc" fill-opacity="0.8"/><circle cx="802.3" cy="611.1" r="2.6" fill="#4c44dc" stroke="#4c44dc" fill-opacity="0.8"/><circle cx="832.7" cy="588.0" r="2.6" fill="#4c44dc" stroke="#4c44dc" fill-opacity="0.8"/><circle cx="854.7" cy="506.2" r="2.6" fill="#4c44dc" stroke="#4c44dc" fill-opacity="0.8"/><circle cx="869.1" cy="486.6" r="2.6" fill="#4c44dc" stroke="#4c44dc" fill-opacity="0.8"/><circle cx="875.1" cy="479.9" r="2.6" fill="#4c44dc" stroke="#4c44dc" fill-opacity="0.8"/><circle cx="878.9" cy="483.0" r="2.6" fill="#4c44dc" stroke="#4c44dc" fill-opacity="0.8"/><circle cx="893.3" cy="410.4" r="2.6" fill="#4c44dc" stroke="#4c44dc" fill-opacity="0.8"/><circle cx="920.6" cy="486.9" r="2.6" fill="#4c44dc" stroke="#4c44dc" fill-opacity="0.8"/><circle cx="951.0" cy="503.9" r="2.6" fill="#4c44dc" stroke="#4c44dc" fill-opacity="0.8"/><circle cx="990.4" cy="493.3" r="2.6" fill="#4c44dc" stroke="#4c44dc" fill-opacity="0.8"/><circle cx="380.7" cy="532.6" r="2.6" fill="#4c44dc" stroke="#4c44dc" fill-opacity="0.8"/><circle cx="397.4" cy="507.3" r="2.6" fill="#4c44dc" stroke="#4c44dc" fill-opacity="0.8"/><circle cx="421.7" cy="567.7" r="2.6" fill="#4c44dc" stroke="#4c44dc" fill-opacity="0.8"/><circle cx="456.5" cy="544.3" r="2.6" fill="#4c44dc" stroke="#4c44dc" fill-opacity="0.8"/><circle cx="474.7" cy="539.3" r="2.6" fill="#4c44dc" stroke="#4c44dc" fill-opacity="0.8"/><circle cx="497.5" cy="531.2" r="2.6" fill="#4c44dc" stroke="#4c44dc" fill-opacity="0.8"/><circle cx="514.9" cy="568.3" r="2.6" fill="#4c44dc" stroke="#4c44dc" fill-opacity="0.8"/><circle cx="530.9" cy="558.1" r="2.6" fill="#4c44dc" stroke="#4c44dc" fill-opacity="0.8"/><circle cx="556.6" cy="634.3" r="2.6" fill="#4c44dc" stroke="#4c44dc" fill-opacity="0.8"/><circle cx="570.3" cy="614.5" r="2.6" fill="#4c44dc" stroke="#4c44dc" fill-opacity="0.8"/><circle cx="577.1" cy="590.5" r="2.6" fill="#4c44dc" stroke="#4c44dc" fill-opacity="0.8"/><circle cx="617.3" cy="559.2" r="2.6" fill="#4c44dc" stroke="#4c44dc" fill-opacity="0.8"/><circle cx="632.5" cy="589.9" r="2.6" fill="#4c44dc" stroke="#4c44dc" fill-opacity="0.8"/><circle cx="659.8" cy="627.3" r="2.6" fill="#4c44dc" stroke="#4c44dc" fill-opacity="0.8"/><circle cx="676.5" cy="658.0" r="2.6" fill="#4c44dc" stroke="#4c44dc" fill-opacity="0.8"/><circle cx="690.1" cy="622.9" r="2.6" fill="#4c44dc" stroke="#4c44dc" fill-opacity="0.8"/><circle cx="703.8" cy="566.6" r="2.6" fill="#4c44dc" stroke="#4c44dc" fill-opacity="0.8"/><circle cx="720.4" cy="545.5" r="2.6" fill="#4c44dc" stroke="#4c44dc" fill-opacity="0.8"/><circle cx="740.9" cy="555.9" r="2.6" fill="#4c44dc" stroke="#4c44dc" fill-opacity="0.8"/><circle cx="758.4" cy="663.7" r="2.6" fill="#4c44dc" stroke="#4c44dc" fill-opacity="0.8"/><circle cx="784.1" cy="681.6" r="2.6" fill="#4c44dc" stroke="#4c44dc" fill-opacity="0.8"/><circle cx="802.3" cy="606.0" r="2.6" fill="#4c44dc" stroke="#4c44dc" fill-opacity="0.8"/><circle cx="832.7" cy="585.9" r="2.6" fill="#4c44dc" stroke="#4c44dc" fill-opacity="0.8"/><circle cx="854.7" cy="503.5" r="2.6" fill="#4c44dc" stroke="#4c44dc" fill-opacity="0.8"/><circle cx="869.1" cy="483.4" r="2.6" fill="#4c44dc" stroke="#4c44dc" fill-opacity="0.8"/><circle cx="875.1" cy="477.0" r="2.6" fill="#4c44dc" stroke="#4c44dc" fill-opacity="0.8"/><circle cx="878.9" cy="481.1" r="2.6" fill="#4c44dc" stroke="#4c44dc" fill-opacity="0.8"/><circle cx="893.3" cy="404.3" r="2.6" fill="#4c44dc" stroke="#4c44dc" fill-opacity="0.8"/><circle cx="920.6" cy="480.0" r="2.6" fill="#4c44dc" stroke="#4c44dc" fill-opacity="0.8"/><circle cx="951.0" cy="498.6" r="2.6" fill="#4c44dc" stroke="#4c44dc" fill-opacity="0.8"/><circle cx="990.4" cy="503.4" r="2.6" fill="#4c44dc" stroke="#4c44dc" fill-opacity="0.8"/><circle cx="1028.3" cy="472.2" r="2.6" fill="#4c44dc" stroke="#4c44dc" fill-opacity="0.8"/><circle cx="1051.1" cy="426.2" r="2.6" fill="#4c44dc" stroke="#4c44dc" fill-opacity="0.8"/><circle cx="1076.9" cy="511.3" r="2.6" fill="#4c44dc" stroke="#4c44dc" fill-opacity="0.8"/><circle cx="1116.3" cy="479.7" r="2.6" fill="#4c44dc" stroke="#4c44dc" fill-opacity="0.8"/><circle cx="1139.1" cy="493.3" r="2.6" fill="#4c44dc" stroke="#4c44dc" fill-opacity="0.8"/></g></svg>
<svg style="left:0;top:0" width="1920" height="994"><path d="M380.5 353V954M397.5 353V954M421.5 353V954M456.5 353V954M474.5 353V954M497.5 353V954M514.5 353V954M530.5 353V954M556.5 353V954M570.5 353V954M577.5 353V954M617.5 353V954M632.5 353V954M659.5 353V954M676.5 353V954M690.5 353V954M703.5 353V954M720.5 353V954M740.5 353V954M758.5 353V954M784.5 353V954M802.5 353V954M832.5 353V954M854.5 353V954M869.5 353V954M875.5 353V954M878.5 353V954M893.5 353V954M920.5 353V954M950.5 353V954M990.5 353V954M1028.5 353V954M1051.5 353V954M1076.5 353V954M1116.5 353V954M1139.5 353V954M1167.5 353V954M1207.5 353V954M1249.5 353V954M1298.5 353V954M1328.5 353V954M1352.5 353V954M1371.5 353V954M1383.5 353V954M1395.5 353V954M1410.5 353V954M1446.5 353V954M1480.5 353V954M1516.5 353V954M1553.5 353V954M1560.5 353V954M1604.5 353V954M1635.5 353V954M1671.5 353V954M1716.5 353V954M1759.5 353V954M1786.5 353V954" stroke="#555" stroke-width="1" stroke-dasharray="3 1 1 1" fill="none" opacity="0.8"/><path d="M362.5 493.5H1879.5" stroke="#444" stroke-width="1" stroke-dasharray="3 1 1 1" opacity="0.9"/></svg>
</body></html>
